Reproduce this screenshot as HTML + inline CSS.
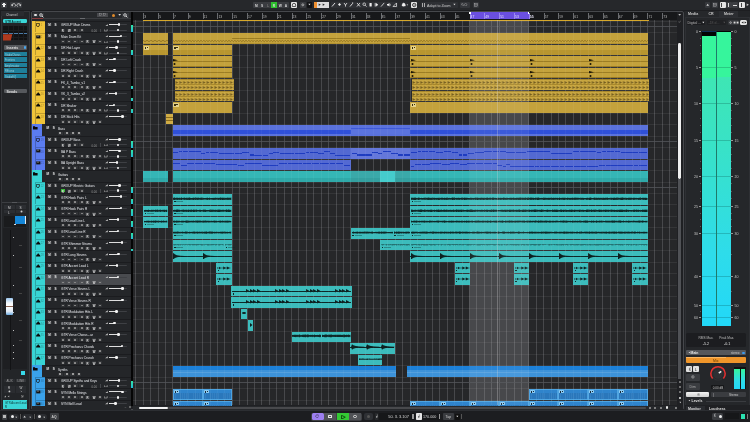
<!DOCTYPE html><html><head><meta charset="utf-8"><style>
*{margin:0;padding:0;box-sizing:border-box}
html,body{width:750px;height:422px;overflow:hidden}
body{background:#1d1e21;position:relative;font-family:"Liberation Sans",sans-serif}
.a{position:absolute}
.t{white-space:nowrap;line-height:1}
</style></head><body><div class="a" style="left:0;top:0;width:750px;height:422px;will-change:transform">
<div class="a" style="left:0.00px;top:0.00px;width:750.00px;height:10.00px;background:#26282b;"></div>
<div class="a" style="left:1.00px;top:2.00px;width:6.00px;height:5.80px;background:#3a3c40;border-radius:1px"></div>
<div class="a" style="left:2.60px;top:3.30px;width:2.80px;height:2.80px;background:#ececec;border-radius:50%"></div>
<div class="a" style="left:3.40px;top:2.80px;width:1.20px;height:3.80px;background:#ececec;"></div>
<div class="a" style="left:2.10px;top:4.10px;width:3.80px;height:1.20px;background:#ececec;"></div>
<div class="a" style="left:9.60px;top:2.00px;width:12.40px;height:5.80px;background:#36383c;border-radius:1px"></div>
<svg class="a" style="left:9.6px;top:2px" width="12.4" height="5.8"><path d="M2,3.6 A1.8,1.6 0 1 1 4.8,4.6" fill="none" stroke="#dcdcdc" stroke-width="0.8"/><path d="M1,2.6 L2.2,4.4 L3.2,2.8Z" fill="#dcdcdc"/><path d="M10.4,3.6 A1.8,1.6 0 1 0 7.6,4.6" fill="none" stroke="#dcdcdc" stroke-width="0.8"/><path d="M11.4,2.6 L10.2,4.4 L9.2,2.8Z" fill="#dcdcdc"/></svg>
<div class="a" style="left:0.50px;top:10.50px;width:29.00px;height:399.50px;background:#232528;border:0.6px solid #34363a"></div>
<div class="a" style="left:1.30px;top:11.20px;width:22.70px;height:5.00px;background:#2a2c30;"></div>
<div class="a t" style="left:6.20px;top:14px;font-size:3.8px;color:#c8c8c8;transform:scaleX(0.8);transform-origin:0 0">Channel</div>
<div class="a" style="left:3.20px;top:18.90px;width:23.80px;height:4.60px;background:#3ad6d6;border-radius:1.2px"></div>
<div class="a t" style="left:5.00px;top:21px;font-size:3.5px;color:#0b3030;font-weight:bold;transform:scaleX(0.8);transform-origin:0 0">GTR Accent</div>
<div class="a" style="left:3.20px;top:25.70px;width:23.80px;height:14.50px;background:#121314;"></div>
<div class="a" style="left:3.20px;top:33.10px;width:23.80px;height:0.90px;background:#4a7aa6;"></div>
<div class="a" style="left:8.00px;top:25.70px;width:0.50px;height:14.50px;background:#1c1d1f;"></div>
<div class="a" style="left:13.00px;top:25.70px;width:0.50px;height:14.50px;background:#1c1d1f;"></div>
<div class="a" style="left:18.00px;top:25.70px;width:0.50px;height:14.50px;background:#1c1d1f;"></div>
<div class="a" style="left:23.00px;top:25.70px;width:0.50px;height:14.50px;background:#1c1d1f;"></div>
<div class="a" style="left:3.20px;top:29.50px;width:23.80px;height:0.50px;background:#1c1d1f;"></div>
<div class="a" style="left:3.20px;top:36.80px;width:23.80px;height:0.50px;background:#1c1d1f;"></div>
<svg class="a" style="left:3.2px;top:25.7px" width="24" height="15"><polygon points="0,8.2 9.3,8.2 7.8,14.5 0,14.5" fill="#b03a1e"/></svg>
<div class="a" style="left:3.50px;top:45.00px;width:23.50px;height:4.70px;background:#56595d;border-radius:1px"></div>
<div class="a t" style="left:6.50px;top:47px;font-size:3.6px;color:#e0e0e0;font-weight:bold">Inserts</div>
<div class="a" style="left:23.50px;top:46.30px;width:2.40px;height:2.40px;background:#4aa8f0;border-radius:50%"></div>
<div class="a" style="left:3.50px;top:51.90px;width:23.50px;height:4.30px;background:#1f7f9a;"></div>
<div class="a t" style="left:4.50px;top:54px;font-size:3.0px;color:#9ccfdc;transform:scaleX(0.85);transform-origin:0 0">StudioChorus</div>
<div class="a" style="left:3.50px;top:57.40px;width:23.50px;height:4.30px;background:#1f7f9a;"></div>
<div class="a t" style="left:4.50px;top:59px;font-size:3.0px;color:#9ccfdc;transform:scaleX(0.85);transform-origin:0 0">Frontiers</div>
<div class="a" style="left:3.50px;top:62.90px;width:23.50px;height:4.30px;background:#1f7f9a;"></div>
<div class="a t" style="left:4.50px;top:65px;font-size:3.0px;color:#9ccfdc;transform:scaleX(0.85);transform-origin:0 0">Amplimuator</div>
<div class="a" style="left:3.50px;top:68.40px;width:23.50px;height:4.30px;background:#1f7f9a;"></div>
<div class="a t" style="left:4.50px;top:70px;font-size:3.0px;color:#9ccfdc;transform:scaleX(0.85);transform-origin:0 0">REtorvo</div>
<div class="a" style="left:3.50px;top:73.90px;width:23.50px;height:4.30px;background:#1f7f9a;"></div>
<div class="a t" style="left:4.50px;top:76px;font-size:3.0px;color:#9ccfdc;transform:scaleX(0.85);transform-origin:0 0">StudioEQ</div>
<div class="a" style="left:3.50px;top:89.30px;width:23.50px;height:4.00px;background:#56595d;border-radius:1px"></div>
<div class="a t" style="left:6.50px;top:91px;font-size:3.6px;color:#e0e0e0;font-weight:bold">Sends</div>
<div class="a" style="left:1.50px;top:202.30px;width:25.00px;height:0.50px;background:#3c3e42;"></div>
<div class="a" style="left:12.00px;top:202.00px;width:5.00px;height:1.00px;background:#55575b;"></div>
<div class="a" style="left:4.00px;top:205.00px;width:10.50px;height:3.60px;background:#2c2e32;"></div>
<div class="a t" style="left:8.00px;top:207px;font-size:3.2px;color:#cfcfcf;">M</div>
<div class="a" style="left:15.50px;top:205.00px;width:10.50px;height:3.60px;background:#2c2e32;"></div>
<div class="a t" style="left:19.50px;top:207px;font-size:3.2px;color:#cfcfcf;">S</div>
<div class="a" style="left:4.00px;top:209.80px;width:10.50px;height:3.60px;background:#2c2e32;"></div>
<div class="a t" style="left:8.00px;top:212px;font-size:3.2px;color:#cfcfcf;">L</div>
<div class="a" style="left:15.50px;top:209.80px;width:10.50px;height:3.60px;background:#2c2e32;"></div>
<svg class="a" style="left:19.50px;top:210.28px" width="3.04" height="3.04" viewBox="0 0 10 10"><circle cx="5" cy="5" r="3.2" fill="#cfcfcf"/></svg>
<div class="a" style="left:4.00px;top:216.00px;width:22.00px;height:11.00px;background:#1a1b1d;"></div>
<div class="a" style="left:14.90px;top:216.00px;width:10.90px;height:7.60px;background:#1486d8;"></div>
<div class="a" style="left:24.80px;top:216.00px;width:1.00px;height:7.60px;background:#e0e8f0;"></div>
<div class="a" style="left:14.00px;top:223.60px;width:1.60px;height:1.60px;background:#d8d8d8;"></div>
<div class="a" style="left:3.00px;top:228.00px;width:24.00px;height:141.00px;background:#1e1f22;"></div>
<div class="a" style="left:9.60px;top:230.00px;width:1.00px;height:140.00px;background:#121315;"></div>
<div class="a" style="left:5.90px;top:297.60px;width:7.40px;height:17.60px;background:linear-gradient(#9cc7ef,#f6f8fb 30%,#ffffff 50%,#dde8f5 80%,#6aaae0);border-radius:1px"></div>
<div class="a" style="left:5.90px;top:306.00px;width:7.40px;height:0.60px;background:#8a6050;"></div>
<div class="a" style="left:13.00px;top:237.00px;width:1.00px;height:0.60px;background:#c0c0c0;"></div>
<div class="a" style="left:13.00px;top:255.00px;width:1.00px;height:0.60px;background:#c0c0c0;"></div>
<div class="a" style="left:13.00px;top:285.00px;width:1.00px;height:0.60px;background:#c0c0c0;"></div>
<div class="a" style="left:13.00px;top:312.00px;width:1.00px;height:0.60px;background:#c0c0c0;"></div>
<div class="a" style="left:13.00px;top:330.00px;width:1.00px;height:0.60px;background:#c0c0c0;"></div>
<div class="a" style="left:13.00px;top:345.00px;width:1.00px;height:0.60px;background:#c0c0c0;"></div>
<div class="a" style="left:13.00px;top:352.00px;width:1.00px;height:0.60px;background:#c0c0c0;"></div>
<div class="a" style="left:13.00px;top:358.00px;width:1.00px;height:0.60px;background:#c0c0c0;"></div>
<div class="a" style="left:19.00px;top:245.00px;width:3.00px;height:0.50px;background:#444;"></div>
<div class="a" style="left:19.00px;top:267.00px;width:3.00px;height:0.50px;background:#444;"></div>
<div class="a" style="left:19.00px;top:293.00px;width:3.00px;height:0.50px;background:#444;"></div>
<div class="a" style="left:19.00px;top:320.00px;width:3.00px;height:0.50px;background:#444;"></div>
<div class="a" style="left:19.00px;top:340.00px;width:3.00px;height:0.50px;background:#444;"></div>
<div class="a" style="left:21.30px;top:371.00px;width:3.70px;height:3.70px;background:#38d8e8;"></div>
<div class="a" style="left:4.00px;top:378.80px;width:10.50px;height:3.50px;background:#2a2c30;"></div>
<div class="a t" style="left:6.50px;top:380px;font-size:3px;color:#9a9a9a;">AUX</div>
<div class="a" style="left:15.50px;top:378.80px;width:10.50px;height:3.50px;background:#34363a;"></div>
<div class="a t" style="left:17.50px;top:380px;font-size:3px;color:#9a9a9a;">LINK</div>
<div class="a" style="left:4.00px;top:385.50px;width:10.50px;height:3.40px;background:#2a2c30;"></div>
<div class="a t" style="left:8.00px;top:387px;font-size:3px;color:#cfcfcf;">R</div>
<div class="a" style="left:15.50px;top:385.50px;width:10.50px;height:3.40px;background:#2a2c30;"></div>
<div class="a t" style="left:19.50px;top:387px;font-size:3px;color:#cfcfcf;">W</div>
<div class="a" style="left:4.00px;top:389.30px;width:10.50px;height:3.40px;background:#2a2c30;"></div>
<svg class="a" style="left:8.00px;top:389.68px" width="2.85" height="2.85" viewBox="0 0 10 10"><circle cx="5" cy="5" r="3.2" fill="#cfcfcf"/></svg>
<div class="a" style="left:15.50px;top:389.30px;width:10.50px;height:3.40px;background:#2a2c30;"></div>
<svg class="a" style="left:19.50px;top:389.68px" width="2.85" height="2.85" viewBox="0 0 10 10"><path d="M2.5,2.5 L7.5,7.5 M7.5,2.5 L2.5,7.5" stroke="#cfcfcf" stroke-width="1.1"/></svg>
<svg class="a" style="left:3.50px;top:395.38px" width="2.85" height="2.85" viewBox="0 0 10 10"><path d="M1,8 L9,8 L5,2Z" fill="#aaaaaa"/></svg>
<svg class="a" style="left:7.25px;top:395.38px" width="2.85" height="2.85" viewBox="0 0 10 10"><path d="M8,2 L2,5 L8,8Z" fill="#aaaaaa"/></svg>
<svg class="a" style="left:21.00px;top:395.38px" width="2.85" height="2.85" viewBox="0 0 10 10"><rect x="1.5" y="1.5" width="7" height="7" fill="none" stroke="#aaaaaa" stroke-width="1"/><rect x="3.5" y="3.5" width="3" height="3" fill="#aaaaaa"/></svg>
<div class="a" style="left:3.00px;top:400.00px;width:24.00px;height:8.50px;background:#3ad6d6;"></div>
<div class="a t" style="left:4.80px;top:402px;font-size:3.2px;color:#0b3030;transform:scaleX(0.85);transform-origin:0 0">GTR Accent Lead</div>
<div class="a t" style="left:4.80px;top:406px;font-size:3.2px;color:#0b3030;">R</div>
<div class="a" style="left:30.50px;top:11.30px;width:653.00px;height:398.40px;background:#1f2023;border:0.8px solid #46484c;border-radius:2px"></div>
<div class="a" style="left:31.50px;top:12.00px;width:99.50px;height:7.60px;background:#26282b;"></div>
<div class="a" style="left:33.00px;top:12.50px;width:5.00px;height:4.80px;background:#34363a;"></div>
<div class="a" style="left:34.20px;top:13.60px;width:2.60px;height:2.60px;background:#e6e6e6;border-radius:50%"></div>
<div class="a" style="left:38.50px;top:12.50px;width:5.00px;height:4.80px;background:#34363a;"></div>
<svg class="a" style="left:38.8px;top:12.6px" width="5" height="5"><circle cx="2" cy="2" r="1.3" fill="none" stroke="#e6e6e6" stroke-width="0.8"/><path d="M3,3 L4.4,4.4" stroke="#e6e6e6" stroke-width="0.9"/></svg>
<div class="a" style="left:97.00px;top:13.00px;width:11.00px;height:4.00px;background:#48494d;"></div>
<svg class="a" style="left:99.00px;top:13.48px" width="2.85" height="2.85" viewBox="0 0 10 10"><rect x="1.5" y="1.5" width="7" height="7" fill="none" stroke="#bbbbbb" stroke-width="1"/></svg>
<svg class="a" style="left:102.75px;top:13.48px" width="2.85" height="2.85" viewBox="0 0 10 10"><rect x="1.5" y="1.5" width="7" height="7" fill="none" stroke="#bbbbbb" stroke-width="1"/></svg>
<div class="a" style="left:111.50px;top:13.50px;width:3.00px;height:3.00px;background:#e08a2a;border-radius:50%"></div>
<svg class="a" style="left:117.50px;top:12.99px" width="3.32" height="3.32" viewBox="0 0 10 10"><path d="M1,3 L9,3 L5,8Z" fill="#dddddd"/></svg>
<div class="a" style="left:122.00px;top:12.50px;width:7.00px;height:5.00px;background:#34363a;"></div>
<svg class="a" style="left:123.3px;top:12.6px" width="5" height="5"><circle cx="2" cy="2" r="1.3" fill="none" stroke="#e6e6e6" stroke-width="0.8"/><path d="M3,3 L4.4,4.4" stroke="#e6e6e6" stroke-width="0.9"/></svg>
<div class="a" style="left:32.00px;top:18.40px;width:10.50px;height:0.90px;background:#8a3a3a;"></div>
<div class="a" style="left:42.50px;top:18.40px;width:88.50px;height:0.90px;background:#3a3c40;"></div>
<div class="a" style="left:80.00px;top:18.20px;width:5.00px;height:0.60px;background:#6a6c70;"></div>
<div class="a" style="left:31.50px;top:19.60px;width:99.50px;height:386.00px;background:#242629;"></div>
<div class="a" style="left:131.00px;top:12.00px;width:2.00px;height:393.50px;background:#050505;"></div>
<div class="a" style="left:45.00px;top:20.90px;width:86.00px;height:0.70px;background:#1b1c1f;"></div>
<div class="a" style="left:31.80px;top:20.90px;width:13.20px;height:11.67px;background:#f0c43a;"></div>
<div class="a" style="left:34.50px;top:21.20px;width:10.50px;height:11.17px;background:#f0c43a;border-left:0.6px solid rgba(0,0,0,0.22);border-top:0.7px solid rgba(0,0,0,0.2)"></div>
<svg class="a" style="left:35.80px;top:23.10px" width="4" height="4"><path d="M0.4,0.4 h3 v1.6 q0,1.4 -1.5,1.8 q-1.5,-0.4 -1.5,-1.8z" fill="none" stroke="#121212" stroke-width="0.7"/></svg>
<div class="a t" style="left:40.80px;top:24px;font-size:2.8px;color:rgba(0,0,0,0.32);">1</div>
<div class="a" style="left:47.30px;top:22.70px;width:4.40px;height:3.40px;background:#2f3134;"></div>
<div class="a t" style="left:48.20px;top:24px;font-size:3px;color:#e8e8e8;font-weight:bold">M</div>
<div class="a" style="left:53.60px;top:22.70px;width:3.40px;height:3.40px;background:#2f3134;"></div>
<div class="a t" style="left:54.40px;top:24px;font-size:3px;color:#e8e8e8;font-weight:bold">S</div>
<div class="a t" style="left:61.00px;top:23px;font-size:4.4px;color:#eceef2;transform:scaleX(0.72);transform-origin:0 0">GROUP Main Drums</div>
<div class="a" style="left:60.60px;top:28.50px;width:4.60px;height:3.00px;background:#313336;"></div>
<div class="a t" style="left:61.70px;top:30px;font-size:2.8px;color:#e0e0e0;font-weight:bold">R</div>
<div class="a" style="left:66.80px;top:28.50px;width:4.60px;height:3.00px;background:#313336;"></div>
<div class="a t" style="left:67.90px;top:30px;font-size:2.8px;color:#e0e0e0;font-weight:bold">W</div>
<div class="a" style="left:73.00px;top:28.50px;width:4.60px;height:3.00px;background:#313336;"></div>
<div class="a" style="left:74.30px;top:29.10px;width:2.00px;height:1.80px;background:#8e8e8e;border-radius:0.5px"></div>
<div class="a" style="left:79.20px;top:28.50px;width:4.60px;height:3.00px;background:#313336;"></div>
<div class="a" style="left:80.50px;top:29.10px;width:2.00px;height:1.80px;background:#8e8e8e;border-radius:0.5px"></div>
<div class="a t" style="left:91.50px;top:30px;font-size:2.8px;color:#9a9a9a;">0.00</div>
<div class="a" style="left:99.50px;top:28.70px;width:1.40px;height:3.60px;background:#44464a;"></div>
<svg class="a" style="left:104.6px;top:23.50px" width="3" height="2.5"><path d="M0,2.3 L2.8,0.2 L2.8,2.3Z" fill="#bdbdbd"/></svg>
<div class="a" style="left:109.20px;top:24.20px;width:17.70px;height:0.80px;background:#3e4044;border-radius:0.4px"></div>
<div class="a" style="left:109.20px;top:24.20px;width:9.80px;height:0.80px;background:#dedede;"></div>
<div class="a" style="left:117.70px;top:23.30px;width:2.60px;height:2.60px;background:#f4f4f4;border-radius:50%"></div>
<svg class="a" style="left:104.4px;top:29.10px" width="3.4" height="2.5"><path d="M0.2,0.2 V2 H3.2 V0.2" fill="none" stroke="#bdbdbd" stroke-width="0.6"/></svg>
<div class="a" style="left:109.20px;top:29.70px;width:17.70px;height:0.80px;background:#3e4044;border-radius:0.4px"></div>
<div class="a" style="left:116.50px;top:28.80px;width:2.60px;height:2.60px;background:#f4f4f4;border-radius:50%"></div>
<div class="a" style="left:45.00px;top:32.38px;width:86.00px;height:0.70px;background:#1b1c1f;"></div>
<div class="a" style="left:31.80px;top:32.38px;width:13.20px;height:11.67px;background:#f0c43a;"></div>
<div class="a" style="left:34.50px;top:32.67px;width:10.50px;height:11.17px;background:#f0c43a;border-left:0.6px solid rgba(0,0,0,0.22);border-top:0.7px solid rgba(0,0,0,0.2)"></div>
<svg class="a" style="left:35.80px;top:34.58px" width="5" height="4"><rect x="0.2" y="0.4" width="4.2" height="3" fill="#141414"/><rect x="1" y="0.4" width="0.5" height="1.6" fill="#888"/><rect x="2.4" y="0.4" width="0.5" height="1.6" fill="#888"/></svg>
<div class="a t" style="left:40.80px;top:36px;font-size:2.8px;color:rgba(0,0,0,0.32);">2</div>
<div class="a" style="left:47.30px;top:34.17px;width:4.40px;height:3.40px;background:#2f3134;"></div>
<div class="a t" style="left:48.20px;top:35px;font-size:3px;color:#e8e8e8;font-weight:bold">M</div>
<div class="a" style="left:53.60px;top:34.17px;width:3.40px;height:3.40px;background:#2f3134;"></div>
<div class="a t" style="left:54.40px;top:35px;font-size:3px;color:#e8e8e8;font-weight:bold">S</div>
<div class="a t" style="left:61.00px;top:35px;font-size:4.4px;color:#eceef2;transform:scaleX(0.72);transform-origin:0 0">Main Drum Kit</div>
<div class="a" style="left:60.60px;top:39.98px;width:4.60px;height:3.00px;background:#313336;"></div>
<div class="a" style="left:61.90px;top:40.58px;width:2.00px;height:1.80px;background:#8e8e8e;border-radius:0.5px"></div>
<div class="a" style="left:66.80px;top:39.98px;width:4.60px;height:3.00px;background:#313336;"></div>
<div class="a" style="left:68.10px;top:40.58px;width:2.00px;height:1.80px;background:#8e8e8e;border-radius:0.5px"></div>
<div class="a" style="left:73.00px;top:39.98px;width:4.60px;height:3.00px;background:#313336;"></div>
<div class="a" style="left:74.30px;top:40.58px;width:2.00px;height:1.80px;background:#8e8e8e;border-radius:0.5px"></div>
<div class="a" style="left:79.20px;top:39.98px;width:4.60px;height:3.00px;background:#313336;"></div>
<div class="a" style="left:80.50px;top:40.58px;width:2.00px;height:1.80px;background:#8e8e8e;border-radius:0.5px"></div>
<div class="a" style="left:85.40px;top:39.98px;width:4.60px;height:3.00px;background:#313336;"></div>
<div class="a t" style="left:86.50px;top:41px;font-size:2.8px;color:#e0e0e0;font-weight:bold">R</div>
<div class="a" style="left:91.60px;top:39.98px;width:4.60px;height:3.00px;background:#313336;"></div>
<div class="a t" style="left:92.70px;top:41px;font-size:2.8px;color:#e0e0e0;font-weight:bold">W</div>
<div class="a" style="left:97.80px;top:39.98px;width:4.60px;height:3.00px;background:#313336;"></div>
<div class="a" style="left:99.10px;top:40.58px;width:2.00px;height:1.80px;background:#8e8e8e;border-radius:0.5px"></div>
<svg class="a" style="left:104.6px;top:34.98px" width="3" height="2.5"><path d="M0,2.3 L2.8,0.2 L2.8,2.3Z" fill="#bdbdbd"/></svg>
<div class="a" style="left:109.20px;top:35.67px;width:17.70px;height:0.80px;background:#3e4044;border-radius:0.4px"></div>
<div class="a" style="left:109.20px;top:35.67px;width:11.70px;height:0.80px;background:#dedede;"></div>
<div class="a" style="left:119.60px;top:34.77px;width:2.60px;height:2.60px;background:#f4f4f4;border-radius:50%"></div>
<svg class="a" style="left:104.4px;top:40.58px" width="3.4" height="2.5"><path d="M0.2,0.2 V2 H3.2 V0.2" fill="none" stroke="#bdbdbd" stroke-width="0.6"/></svg>
<div class="a" style="left:109.20px;top:41.17px;width:17.70px;height:0.80px;background:#3e4044;border-radius:0.4px"></div>
<div class="a" style="left:116.50px;top:40.27px;width:2.60px;height:2.60px;background:#f4f4f4;border-radius:50%"></div>
<div class="a" style="left:45.00px;top:43.85px;width:86.00px;height:0.70px;background:#1b1c1f;"></div>
<div class="a" style="left:31.80px;top:43.85px;width:13.20px;height:11.67px;background:#f0c43a;"></div>
<div class="a" style="left:34.50px;top:44.15px;width:10.50px;height:11.17px;background:#f0c43a;border-left:0.6px solid rgba(0,0,0,0.22);border-top:0.7px solid rgba(0,0,0,0.2)"></div>
<svg class="a" style="left:35.80px;top:46.05px" width="5" height="4"><path d="M0,3.4 C0.2,2 1,1.5 1.5,1.3 C1.7,0.5 2,0.2 2.2,0.2 C2.4,0.2 2.7,0.5 2.9,1.3 C3.4,1.5 4.2,2 4.4,3.4Z" fill="#0a0a0a"/></svg>
<div class="a t" style="left:40.80px;top:47px;font-size:2.8px;color:rgba(0,0,0,0.32);">12</div>
<div class="a" style="left:47.30px;top:45.65px;width:4.40px;height:3.40px;background:#2f3134;"></div>
<div class="a t" style="left:48.20px;top:47px;font-size:3px;color:#e8e8e8;font-weight:bold">M</div>
<div class="a" style="left:53.60px;top:45.65px;width:3.40px;height:3.40px;background:#2f3134;"></div>
<div class="a t" style="left:54.40px;top:47px;font-size:3px;color:#e8e8e8;font-weight:bold">S</div>
<div class="a t" style="left:61.00px;top:46px;font-size:4.4px;color:#eceef2;transform:scaleX(0.72);transform-origin:0 0">DR Hat Layer</div>
<div class="a" style="left:60.60px;top:51.45px;width:4.60px;height:3.00px;background:#313336;"></div>
<div class="a" style="left:61.90px;top:52.05px;width:2.00px;height:1.80px;background:#8e8e8e;border-radius:0.5px"></div>
<div class="a" style="left:66.80px;top:51.45px;width:4.60px;height:3.00px;background:#313336;"></div>
<div class="a" style="left:68.10px;top:52.05px;width:2.00px;height:1.80px;background:#8e8e8e;border-radius:0.5px"></div>
<div class="a" style="left:73.00px;top:51.45px;width:4.60px;height:3.00px;background:#313336;"></div>
<div class="a" style="left:74.30px;top:52.05px;width:2.00px;height:1.80px;background:#8e8e8e;border-radius:0.5px"></div>
<div class="a" style="left:79.20px;top:51.45px;width:4.60px;height:3.00px;background:#313336;"></div>
<div class="a" style="left:80.50px;top:52.05px;width:2.00px;height:1.80px;background:#8e8e8e;border-radius:0.5px"></div>
<div class="a" style="left:85.40px;top:51.45px;width:4.60px;height:3.00px;background:#313336;"></div>
<div class="a t" style="left:86.50px;top:53px;font-size:2.8px;color:#e0e0e0;font-weight:bold">R</div>
<div class="a" style="left:91.60px;top:51.45px;width:4.60px;height:3.00px;background:#313336;"></div>
<div class="a t" style="left:92.70px;top:53px;font-size:2.8px;color:#e0e0e0;font-weight:bold">W</div>
<div class="a" style="left:97.80px;top:51.45px;width:4.60px;height:3.00px;background:#313336;"></div>
<div class="a" style="left:99.10px;top:52.05px;width:2.00px;height:1.80px;background:#8e8e8e;border-radius:0.5px"></div>
<svg class="a" style="left:104.6px;top:46.45px" width="3" height="2.5"><path d="M0,2.3 L2.8,0.2 L2.8,2.3Z" fill="#bdbdbd"/></svg>
<div class="a" style="left:109.20px;top:47.15px;width:17.70px;height:0.80px;background:#3e4044;border-radius:0.4px"></div>
<div class="a" style="left:109.20px;top:47.15px;width:7.40px;height:0.80px;background:#dedede;"></div>
<div class="a" style="left:115.30px;top:46.25px;width:2.60px;height:2.60px;background:#f4f4f4;border-radius:50%"></div>
<svg class="a" style="left:104.4px;top:52.05px" width="3.4" height="2.5"><path d="M0.2,0.2 V2 H3.2 V0.2" fill="none" stroke="#bdbdbd" stroke-width="0.6"/></svg>
<div class="a" style="left:109.20px;top:52.65px;width:17.70px;height:0.80px;background:#3e4044;border-radius:0.4px"></div>
<div class="a" style="left:116.50px;top:51.75px;width:2.60px;height:2.60px;background:#f4f4f4;border-radius:50%"></div>
<div class="a" style="left:45.00px;top:55.32px;width:86.00px;height:0.70px;background:#1b1c1f;"></div>
<div class="a" style="left:31.80px;top:55.32px;width:13.20px;height:11.67px;background:#f0c43a;"></div>
<div class="a" style="left:34.50px;top:55.62px;width:10.50px;height:11.17px;background:#f0c43a;border-left:0.6px solid rgba(0,0,0,0.22);border-top:0.7px solid rgba(0,0,0,0.2)"></div>
<svg class="a" style="left:35.80px;top:57.52px" width="5" height="4"><path d="M0,3.4 C0.2,2 1,1.5 1.5,1.3 C1.7,0.5 2,0.2 2.2,0.2 C2.4,0.2 2.7,0.5 2.9,1.3 C3.4,1.5 4.2,2 4.4,3.4Z" fill="#0a0a0a"/></svg>
<div class="a t" style="left:40.80px;top:59px;font-size:2.8px;color:rgba(0,0,0,0.32);">13</div>
<div class="a" style="left:47.30px;top:57.12px;width:4.40px;height:3.40px;background:#2f3134;"></div>
<div class="a t" style="left:48.20px;top:58px;font-size:3px;color:#e8e8e8;font-weight:bold">M</div>
<div class="a" style="left:53.60px;top:57.12px;width:3.40px;height:3.40px;background:#2f3134;"></div>
<div class="a t" style="left:54.40px;top:58px;font-size:3px;color:#e8e8e8;font-weight:bold">S</div>
<div class="a t" style="left:61.00px;top:58px;font-size:4.4px;color:#eceef2;transform:scaleX(0.72);transform-origin:0 0">DR Left Crash</div>
<div class="a" style="left:60.60px;top:62.92px;width:4.60px;height:3.00px;background:#313336;"></div>
<div class="a" style="left:61.90px;top:63.52px;width:2.00px;height:1.80px;background:#8e8e8e;border-radius:0.5px"></div>
<div class="a" style="left:66.80px;top:62.92px;width:4.60px;height:3.00px;background:#313336;"></div>
<div class="a" style="left:68.10px;top:63.52px;width:2.00px;height:1.80px;background:#8e8e8e;border-radius:0.5px"></div>
<div class="a" style="left:73.00px;top:62.92px;width:4.60px;height:3.00px;background:#313336;"></div>
<div class="a" style="left:74.30px;top:63.52px;width:2.00px;height:1.80px;background:#8e8e8e;border-radius:0.5px"></div>
<div class="a" style="left:79.20px;top:62.92px;width:4.60px;height:3.00px;background:#313336;"></div>
<div class="a" style="left:80.50px;top:63.52px;width:2.00px;height:1.80px;background:#8e8e8e;border-radius:0.5px"></div>
<div class="a" style="left:85.40px;top:62.92px;width:4.60px;height:3.00px;background:#313336;"></div>
<div class="a t" style="left:86.50px;top:64px;font-size:2.8px;color:#e0e0e0;font-weight:bold">R</div>
<div class="a" style="left:91.60px;top:62.92px;width:4.60px;height:3.00px;background:#313336;"></div>
<div class="a t" style="left:92.70px;top:64px;font-size:2.8px;color:#e0e0e0;font-weight:bold">W</div>
<div class="a" style="left:97.80px;top:62.92px;width:4.60px;height:3.00px;background:#313336;"></div>
<div class="a" style="left:99.10px;top:63.52px;width:2.00px;height:1.80px;background:#8e8e8e;border-radius:0.5px"></div>
<svg class="a" style="left:104.6px;top:57.92px" width="3" height="2.5"><path d="M0,2.3 L2.8,0.2 L2.8,2.3Z" fill="#bdbdbd"/></svg>
<div class="a" style="left:109.20px;top:58.62px;width:17.70px;height:0.80px;background:#3e4044;border-radius:0.4px"></div>
<div class="a" style="left:109.20px;top:58.62px;width:5.50px;height:0.80px;background:#dedede;"></div>
<div class="a" style="left:113.40px;top:57.72px;width:2.60px;height:2.60px;background:#f4f4f4;border-radius:50%"></div>
<div class="a" style="left:45.00px;top:66.80px;width:86.00px;height:0.70px;background:#1b1c1f;"></div>
<div class="a" style="left:31.80px;top:66.80px;width:13.20px;height:11.67px;background:#f0c43a;"></div>
<div class="a" style="left:34.50px;top:67.10px;width:10.50px;height:11.17px;background:#f0c43a;border-left:0.6px solid rgba(0,0,0,0.22);border-top:0.7px solid rgba(0,0,0,0.2)"></div>
<svg class="a" style="left:35.80px;top:69.00px" width="5" height="4"><path d="M0,3.4 C0.2,2 1,1.5 1.5,1.3 C1.7,0.5 2,0.2 2.2,0.2 C2.4,0.2 2.7,0.5 2.9,1.3 C3.4,1.5 4.2,2 4.4,3.4Z" fill="#0a0a0a"/></svg>
<div class="a t" style="left:40.80px;top:70px;font-size:2.8px;color:rgba(0,0,0,0.32);">14</div>
<div class="a" style="left:47.30px;top:68.60px;width:4.40px;height:3.40px;background:#2f3134;"></div>
<div class="a t" style="left:48.20px;top:70px;font-size:3px;color:#e8e8e8;font-weight:bold">M</div>
<div class="a" style="left:53.60px;top:68.60px;width:3.40px;height:3.40px;background:#2f3134;"></div>
<div class="a t" style="left:54.40px;top:70px;font-size:3px;color:#e8e8e8;font-weight:bold">S</div>
<div class="a t" style="left:61.00px;top:69px;font-size:4.4px;color:#eceef2;transform:scaleX(0.72);transform-origin:0 0">DR Right Crash</div>
<div class="a" style="left:60.60px;top:74.40px;width:4.60px;height:3.00px;background:#313336;"></div>
<div class="a" style="left:61.90px;top:75.00px;width:2.00px;height:1.80px;background:#8e8e8e;border-radius:0.5px"></div>
<div class="a" style="left:66.80px;top:74.40px;width:4.60px;height:3.00px;background:#313336;"></div>
<div class="a" style="left:68.10px;top:75.00px;width:2.00px;height:1.80px;background:#8e8e8e;border-radius:0.5px"></div>
<div class="a" style="left:73.00px;top:74.40px;width:4.60px;height:3.00px;background:#313336;"></div>
<div class="a" style="left:74.30px;top:75.00px;width:2.00px;height:1.80px;background:#8e8e8e;border-radius:0.5px"></div>
<div class="a" style="left:79.20px;top:74.40px;width:4.60px;height:3.00px;background:#313336;"></div>
<div class="a" style="left:80.50px;top:75.00px;width:2.00px;height:1.80px;background:#8e8e8e;border-radius:0.5px"></div>
<div class="a" style="left:85.40px;top:74.40px;width:4.60px;height:3.00px;background:#313336;"></div>
<div class="a t" style="left:86.50px;top:76px;font-size:2.8px;color:#e0e0e0;font-weight:bold">R</div>
<div class="a" style="left:91.60px;top:74.40px;width:4.60px;height:3.00px;background:#313336;"></div>
<div class="a t" style="left:92.70px;top:76px;font-size:2.8px;color:#e0e0e0;font-weight:bold">W</div>
<div class="a" style="left:97.80px;top:74.40px;width:4.60px;height:3.00px;background:#313336;"></div>
<div class="a" style="left:99.10px;top:75.00px;width:2.00px;height:1.80px;background:#8e8e8e;border-radius:0.5px"></div>
<svg class="a" style="left:104.6px;top:69.40px" width="3" height="2.5"><path d="M0,2.3 L2.8,0.2 L2.8,2.3Z" fill="#bdbdbd"/></svg>
<div class="a" style="left:109.20px;top:70.10px;width:17.70px;height:0.80px;background:#3e4044;border-radius:0.4px"></div>
<div class="a" style="left:109.20px;top:70.10px;width:5.50px;height:0.80px;background:#dedede;"></div>
<div class="a" style="left:113.40px;top:69.20px;width:2.60px;height:2.60px;background:#f4f4f4;border-radius:50%"></div>
<div class="a" style="left:45.00px;top:78.28px;width:86.00px;height:0.70px;background:#1b1c1f;"></div>
<div class="a" style="left:31.80px;top:78.28px;width:13.20px;height:11.67px;background:#f0c43a;"></div>
<div class="a" style="left:34.50px;top:78.58px;width:10.50px;height:11.17px;background:#f0c43a;border-left:0.6px solid rgba(0,0,0,0.22);border-top:0.7px solid rgba(0,0,0,0.2)"></div>
<svg class="a" style="left:35.80px;top:80.48px" width="5" height="4"><path d="M0,3.4 C0.2,2 1,1.5 1.5,1.3 C1.7,0.5 2,0.2 2.2,0.2 C2.4,0.2 2.7,0.5 2.9,1.3 C3.4,1.5 4.2,2 4.4,3.4Z" fill="#0a0a0a"/></svg>
<div class="a t" style="left:40.80px;top:82px;font-size:2.8px;color:rgba(0,0,0,0.32);">15</div>
<div class="a" style="left:47.30px;top:80.08px;width:4.40px;height:3.40px;background:#2f3134;"></div>
<div class="a t" style="left:48.20px;top:81px;font-size:3px;color:#e8e8e8;font-weight:bold">M</div>
<div class="a" style="left:53.60px;top:80.08px;width:3.40px;height:3.40px;background:#2f3134;"></div>
<div class="a t" style="left:54.40px;top:81px;font-size:3px;color:#e8e8e8;font-weight:bold">S</div>
<div class="a t" style="left:61.00px;top:81px;font-size:4.4px;color:#eceef2;transform:scaleX(0.72);transform-origin:0 0">FK_4_Tambo_v1</div>
<div class="a" style="left:60.60px;top:85.88px;width:4.60px;height:3.00px;background:#313336;"></div>
<div class="a" style="left:61.90px;top:86.48px;width:2.00px;height:1.80px;background:#8e8e8e;border-radius:0.5px"></div>
<div class="a" style="left:66.80px;top:85.88px;width:4.60px;height:3.00px;background:#313336;"></div>
<div class="a" style="left:68.10px;top:86.48px;width:2.00px;height:1.80px;background:#8e8e8e;border-radius:0.5px"></div>
<div class="a" style="left:73.00px;top:85.88px;width:4.60px;height:3.00px;background:#313336;"></div>
<div class="a" style="left:74.30px;top:86.48px;width:2.00px;height:1.80px;background:#8e8e8e;border-radius:0.5px"></div>
<div class="a" style="left:79.20px;top:85.88px;width:4.60px;height:3.00px;background:#313336;"></div>
<div class="a" style="left:80.50px;top:86.48px;width:2.00px;height:1.80px;background:#8e8e8e;border-radius:0.5px"></div>
<div class="a" style="left:85.40px;top:85.88px;width:4.60px;height:3.00px;background:#313336;"></div>
<div class="a t" style="left:86.50px;top:87px;font-size:2.8px;color:#e0e0e0;font-weight:bold">R</div>
<div class="a" style="left:91.60px;top:85.88px;width:4.60px;height:3.00px;background:#313336;"></div>
<div class="a t" style="left:92.70px;top:87px;font-size:2.8px;color:#e0e0e0;font-weight:bold">W</div>
<div class="a" style="left:97.80px;top:85.88px;width:4.60px;height:3.00px;background:#313336;"></div>
<div class="a" style="left:99.10px;top:86.48px;width:2.00px;height:1.80px;background:#8e8e8e;border-radius:0.5px"></div>
<svg class="a" style="left:104.6px;top:80.88px" width="3" height="2.5"><path d="M0,2.3 L2.8,0.2 L2.8,2.3Z" fill="#bdbdbd"/></svg>
<div class="a" style="left:109.20px;top:81.58px;width:17.70px;height:0.80px;background:#3e4044;border-radius:0.4px"></div>
<div class="a" style="left:109.20px;top:81.58px;width:5.50px;height:0.80px;background:#dedede;"></div>
<div class="a" style="left:113.40px;top:80.68px;width:2.60px;height:2.60px;background:#f4f4f4;border-radius:50%"></div>
<div class="a" style="left:45.00px;top:89.75px;width:86.00px;height:0.70px;background:#1b1c1f;"></div>
<div class="a" style="left:31.80px;top:89.75px;width:13.20px;height:11.67px;background:#f0c43a;"></div>
<div class="a" style="left:34.50px;top:90.05px;width:10.50px;height:11.17px;background:#f0c43a;border-left:0.6px solid rgba(0,0,0,0.22);border-top:0.7px solid rgba(0,0,0,0.2)"></div>
<svg class="a" style="left:35.80px;top:91.95px" width="5" height="4"><path d="M0,3.4 C0.2,2 1,1.5 1.5,1.3 C1.7,0.5 2,0.2 2.2,0.2 C2.4,0.2 2.7,0.5 2.9,1.3 C3.4,1.5 4.2,2 4.4,3.4Z" fill="#0a0a0a"/></svg>
<div class="a t" style="left:40.80px;top:93px;font-size:2.8px;color:rgba(0,0,0,0.32);">16</div>
<div class="a" style="left:47.30px;top:91.55px;width:4.40px;height:3.40px;background:#2f3134;"></div>
<div class="a t" style="left:48.20px;top:93px;font-size:3px;color:#e8e8e8;font-weight:bold">M</div>
<div class="a" style="left:53.60px;top:91.55px;width:3.40px;height:3.40px;background:#2f3134;"></div>
<div class="a t" style="left:54.40px;top:93px;font-size:3px;color:#e8e8e8;font-weight:bold">S</div>
<div class="a t" style="left:61.00px;top:92px;font-size:4.4px;color:#eceef2;transform:scaleX(0.72);transform-origin:0 0">VK_3_Tambo_v2</div>
<div class="a" style="left:60.60px;top:97.35px;width:4.60px;height:3.00px;background:#313336;"></div>
<div class="a" style="left:61.90px;top:97.95px;width:2.00px;height:1.80px;background:#8e8e8e;border-radius:0.5px"></div>
<div class="a" style="left:66.80px;top:97.35px;width:4.60px;height:3.00px;background:#313336;"></div>
<div class="a" style="left:68.10px;top:97.95px;width:2.00px;height:1.80px;background:#8e8e8e;border-radius:0.5px"></div>
<div class="a" style="left:73.00px;top:97.35px;width:4.60px;height:3.00px;background:#313336;"></div>
<div class="a" style="left:74.30px;top:97.95px;width:2.00px;height:1.80px;background:#8e8e8e;border-radius:0.5px"></div>
<div class="a" style="left:79.20px;top:97.35px;width:4.60px;height:3.00px;background:#313336;"></div>
<div class="a" style="left:80.50px;top:97.95px;width:2.00px;height:1.80px;background:#8e8e8e;border-radius:0.5px"></div>
<div class="a" style="left:85.40px;top:97.35px;width:4.60px;height:3.00px;background:#313336;"></div>
<div class="a t" style="left:86.50px;top:99px;font-size:2.8px;color:#e0e0e0;font-weight:bold">R</div>
<div class="a" style="left:91.60px;top:97.35px;width:4.60px;height:3.00px;background:#313336;"></div>
<div class="a t" style="left:92.70px;top:99px;font-size:2.8px;color:#e0e0e0;font-weight:bold">W</div>
<div class="a" style="left:97.80px;top:97.35px;width:4.60px;height:3.00px;background:#313336;"></div>
<div class="a" style="left:99.10px;top:97.95px;width:2.00px;height:1.80px;background:#8e8e8e;border-radius:0.5px"></div>
<svg class="a" style="left:104.6px;top:92.35px" width="3" height="2.5"><path d="M0,2.3 L2.8,0.2 L2.8,2.3Z" fill="#bdbdbd"/></svg>
<div class="a" style="left:109.20px;top:93.05px;width:17.70px;height:0.80px;background:#3e4044;border-radius:0.4px"></div>
<div class="a" style="left:109.20px;top:93.05px;width:6.90px;height:0.80px;background:#dedede;"></div>
<div class="a" style="left:114.80px;top:92.15px;width:2.60px;height:2.60px;background:#f4f4f4;border-radius:50%"></div>
<div class="a" style="left:45.00px;top:101.22px;width:86.00px;height:0.70px;background:#1b1c1f;"></div>
<div class="a" style="left:31.80px;top:101.22px;width:13.20px;height:11.67px;background:#f0c43a;"></div>
<div class="a" style="left:34.50px;top:101.52px;width:10.50px;height:11.17px;background:#f0c43a;border-left:0.6px solid rgba(0,0,0,0.22);border-top:0.7px solid rgba(0,0,0,0.2)"></div>
<svg class="a" style="left:35.80px;top:103.42px" width="5" height="4"><path d="M0,3.4 C0.2,2 1,1.5 1.5,1.3 C1.7,0.5 2,0.2 2.2,0.2 C2.4,0.2 2.7,0.5 2.9,1.3 C3.4,1.5 4.2,2 4.4,3.4Z" fill="#0a0a0a"/></svg>
<div class="a t" style="left:40.80px;top:105px;font-size:2.8px;color:rgba(0,0,0,0.32);">17</div>
<div class="a" style="left:47.30px;top:103.02px;width:4.40px;height:3.40px;background:#2f3134;"></div>
<div class="a t" style="left:48.20px;top:104px;font-size:3px;color:#e8e8e8;font-weight:bold">M</div>
<div class="a" style="left:53.60px;top:103.02px;width:3.40px;height:3.40px;background:#2f3134;"></div>
<div class="a t" style="left:54.40px;top:104px;font-size:3px;color:#e8e8e8;font-weight:bold">S</div>
<div class="a t" style="left:61.00px;top:104px;font-size:4.4px;color:#eceef2;transform:scaleX(0.72);transform-origin:0 0">DR Shaker</div>
<div class="a" style="left:60.60px;top:108.82px;width:4.60px;height:3.00px;background:#313336;"></div>
<div class="a" style="left:61.90px;top:109.42px;width:2.00px;height:1.80px;background:#8e8e8e;border-radius:0.5px"></div>
<div class="a" style="left:66.80px;top:108.82px;width:4.60px;height:3.00px;background:#313336;"></div>
<div class="a" style="left:68.10px;top:109.42px;width:2.00px;height:1.80px;background:#8e8e8e;border-radius:0.5px"></div>
<div class="a" style="left:73.00px;top:108.82px;width:4.60px;height:3.00px;background:#313336;"></div>
<div class="a" style="left:74.30px;top:109.42px;width:2.00px;height:1.80px;background:#8e8e8e;border-radius:0.5px"></div>
<div class="a" style="left:79.20px;top:108.82px;width:4.60px;height:3.00px;background:#313336;"></div>
<div class="a" style="left:80.50px;top:109.42px;width:2.00px;height:1.80px;background:#8e8e8e;border-radius:0.5px"></div>
<div class="a" style="left:85.40px;top:108.82px;width:4.60px;height:3.00px;background:#313336;"></div>
<div class="a t" style="left:86.50px;top:110px;font-size:2.8px;color:#e0e0e0;font-weight:bold">R</div>
<div class="a" style="left:91.60px;top:108.82px;width:4.60px;height:3.00px;background:#313336;"></div>
<div class="a t" style="left:92.70px;top:110px;font-size:2.8px;color:#e0e0e0;font-weight:bold">W</div>
<div class="a" style="left:97.80px;top:108.82px;width:4.60px;height:3.00px;background:#313336;"></div>
<div class="a" style="left:99.10px;top:109.42px;width:2.00px;height:1.80px;background:#8e8e8e;border-radius:0.5px"></div>
<svg class="a" style="left:104.6px;top:103.82px" width="3" height="2.5"><path d="M0,2.3 L2.8,0.2 L2.8,2.3Z" fill="#bdbdbd"/></svg>
<div class="a" style="left:109.20px;top:104.52px;width:17.70px;height:0.80px;background:#3e4044;border-radius:0.4px"></div>
<div class="a" style="left:109.20px;top:104.52px;width:5.00px;height:0.80px;background:#dedede;"></div>
<div class="a" style="left:112.90px;top:103.62px;width:2.60px;height:2.60px;background:#f4f4f4;border-radius:50%"></div>
<svg class="a" style="left:104.4px;top:109.42px" width="3.4" height="2.5"><path d="M0.2,0.2 V2 H3.2 V0.2" fill="none" stroke="#bdbdbd" stroke-width="0.6"/></svg>
<div class="a" style="left:109.20px;top:110.02px;width:17.70px;height:0.80px;background:#3e4044;border-radius:0.4px"></div>
<div class="a" style="left:116.50px;top:109.12px;width:2.60px;height:2.60px;background:#f4f4f4;border-radius:50%"></div>
<div class="a" style="left:45.00px;top:112.70px;width:86.00px;height:0.70px;background:#1b1c1f;"></div>
<div class="a" style="left:31.80px;top:112.70px;width:13.20px;height:11.67px;background:#f0c43a;"></div>
<div class="a" style="left:34.50px;top:113.00px;width:10.50px;height:11.17px;background:#f0c43a;border-left:0.6px solid rgba(0,0,0,0.22);border-top:0.7px solid rgba(0,0,0,0.2)"></div>
<svg class="a" style="left:35.80px;top:114.90px" width="5" height="4"><path d="M0,3.4 C0.2,2 1,1.5 1.5,1.3 C1.7,0.5 2,0.2 2.2,0.2 C2.4,0.2 2.7,0.5 2.9,1.3 C3.4,1.5 4.2,2 4.4,3.4Z" fill="#0a0a0a"/></svg>
<div class="a t" style="left:40.80px;top:116px;font-size:2.8px;color:rgba(0,0,0,0.32);">18</div>
<div class="a" style="left:47.30px;top:114.50px;width:4.40px;height:3.40px;background:#2f3134;"></div>
<div class="a t" style="left:48.20px;top:116px;font-size:3px;color:#e8e8e8;font-weight:bold">M</div>
<div class="a" style="left:53.60px;top:114.50px;width:3.40px;height:3.40px;background:#2f3134;"></div>
<div class="a t" style="left:54.40px;top:116px;font-size:3px;color:#e8e8e8;font-weight:bold">S</div>
<div class="a t" style="left:61.00px;top:115px;font-size:4.4px;color:#eceef2;transform:scaleX(0.72);transform-origin:0 0">DR Stick Hits</div>
<div class="a" style="left:60.60px;top:120.30px;width:4.60px;height:3.00px;background:#313336;"></div>
<div class="a" style="left:61.90px;top:120.90px;width:2.00px;height:1.80px;background:#8e8e8e;border-radius:0.5px"></div>
<div class="a" style="left:66.80px;top:120.30px;width:4.60px;height:3.00px;background:#313336;"></div>
<div class="a" style="left:68.10px;top:120.90px;width:2.00px;height:1.80px;background:#8e8e8e;border-radius:0.5px"></div>
<div class="a" style="left:73.00px;top:120.30px;width:4.60px;height:3.00px;background:#313336;"></div>
<div class="a" style="left:74.30px;top:120.90px;width:2.00px;height:1.80px;background:#8e8e8e;border-radius:0.5px"></div>
<div class="a" style="left:79.20px;top:120.30px;width:4.60px;height:3.00px;background:#313336;"></div>
<div class="a" style="left:80.50px;top:120.90px;width:2.00px;height:1.80px;background:#8e8e8e;border-radius:0.5px"></div>
<div class="a" style="left:85.40px;top:120.30px;width:4.60px;height:3.00px;background:#313336;"></div>
<div class="a t" style="left:86.50px;top:122px;font-size:2.8px;color:#e0e0e0;font-weight:bold">R</div>
<div class="a" style="left:91.60px;top:120.30px;width:4.60px;height:3.00px;background:#313336;"></div>
<div class="a t" style="left:92.70px;top:122px;font-size:2.8px;color:#e0e0e0;font-weight:bold">W</div>
<div class="a" style="left:97.80px;top:120.30px;width:4.60px;height:3.00px;background:#313336;"></div>
<div class="a" style="left:99.10px;top:120.90px;width:2.00px;height:1.80px;background:#8e8e8e;border-radius:0.5px"></div>
<svg class="a" style="left:104.6px;top:115.30px" width="3" height="2.5"><path d="M0,2.3 L2.8,0.2 L2.8,2.3Z" fill="#bdbdbd"/></svg>
<div class="a" style="left:109.20px;top:116.00px;width:17.70px;height:0.80px;background:#3e4044;border-radius:0.4px"></div>
<div class="a" style="left:109.20px;top:116.00px;width:13.30px;height:0.80px;background:#dedede;"></div>
<div class="a" style="left:121.20px;top:115.10px;width:2.60px;height:2.60px;background:#f4f4f4;border-radius:50%"></div>
<div class="a" style="left:45.00px;top:124.17px;width:86.00px;height:0.70px;background:#1b1c1f;"></div>
<div class="a" style="left:31.80px;top:124.17px;width:10.40px;height:11.67px;background:#5b7cf0;"></div>
<svg class="a" style="left:33px;top:126.17px" width="5" height="4"><path d="M0,0.3 h1.8 l0.6,0.6 h2.2 v2.6 h-4.6z" fill="#0a0a0a"/></svg>
<div class="a" style="left:42.20px;top:124.17px;width:2.80px;height:11.67px;background:#242629;"></div>
<div class="a" style="left:45.60px;top:125.97px;width:4.40px;height:3.40px;background:#2f3134;"></div>
<div class="a t" style="left:46.50px;top:127px;font-size:3px;color:#e8e8e8;font-weight:bold">M</div>
<div class="a" style="left:51.90px;top:125.97px;width:3.40px;height:3.40px;background:#2f3134;"></div>
<div class="a t" style="left:52.70px;top:127px;font-size:3px;color:#e8e8e8;font-weight:bold">S</div>
<div class="a t" style="left:58.20px;top:127px;font-size:4.4px;color:#eceef2;transform:scaleX(0.72);transform-origin:0 0">Bass</div>
<div class="a" style="left:58.00px;top:131.77px;width:4.60px;height:3.00px;background:#313336;"></div>
<div class="a" style="left:59.30px;top:132.37px;width:2.00px;height:1.80px;background:#9a9a9a;"></div>
<div class="a" style="left:64.20px;top:131.77px;width:4.60px;height:3.00px;background:#313336;"></div>
<div class="a" style="left:65.50px;top:132.37px;width:2.00px;height:1.80px;background:#9a9a9a;"></div>
<div class="a" style="left:70.40px;top:131.77px;width:4.60px;height:3.00px;background:#313336;"></div>
<div class="a" style="left:71.70px;top:132.37px;width:2.00px;height:1.80px;background:#9a9a9a;"></div>
<div class="a" style="left:76.60px;top:131.77px;width:4.60px;height:3.00px;background:#313336;"></div>
<div class="a" style="left:77.90px;top:132.37px;width:2.00px;height:1.80px;background:#9a9a9a;"></div>
<div class="a" style="left:45.00px;top:135.65px;width:86.00px;height:0.70px;background:#1b1c1f;"></div>
<div class="a" style="left:31.80px;top:135.65px;width:13.20px;height:11.67px;background:#5b7cf0;"></div>
<div class="a" style="left:34.50px;top:135.95px;width:10.50px;height:11.17px;background:#5b7cf0;border-left:0.6px solid rgba(0,0,0,0.22);border-top:0.7px solid rgba(0,0,0,0.2)"></div>
<svg class="a" style="left:35.80px;top:137.85px" width="4" height="4"><path d="M0.4,0.4 h3 v1.6 q0,1.4 -1.5,1.8 q-1.5,-0.4 -1.5,-1.8z" fill="none" stroke="#121212" stroke-width="0.7"/></svg>
<div class="a t" style="left:40.80px;top:139px;font-size:2.8px;color:rgba(0,0,0,0.32);">19</div>
<div class="a" style="left:47.30px;top:137.45px;width:4.40px;height:3.40px;background:#2f3134;"></div>
<div class="a t" style="left:48.20px;top:139px;font-size:3px;color:#e8e8e8;font-weight:bold">M</div>
<div class="a" style="left:53.60px;top:137.45px;width:3.40px;height:3.40px;background:#2f3134;"></div>
<div class="a t" style="left:54.40px;top:139px;font-size:3px;color:#e8e8e8;font-weight:bold">S</div>
<div class="a t" style="left:61.00px;top:138px;font-size:4.4px;color:#eceef2;transform:scaleX(0.72);transform-origin:0 0">GROUP Bass</div>
<div class="a" style="left:60.60px;top:143.25px;width:4.60px;height:3.00px;background:#313336;"></div>
<div class="a t" style="left:61.70px;top:145px;font-size:2.8px;color:#e0e0e0;font-weight:bold">R</div>
<div class="a" style="left:66.80px;top:143.25px;width:4.60px;height:3.00px;background:#313336;"></div>
<div class="a t" style="left:67.90px;top:145px;font-size:2.8px;color:#e0e0e0;font-weight:bold">W</div>
<div class="a" style="left:73.00px;top:143.25px;width:4.60px;height:3.00px;background:#313336;"></div>
<div class="a" style="left:74.30px;top:143.85px;width:2.00px;height:1.80px;background:#8e8e8e;border-radius:0.5px"></div>
<div class="a" style="left:79.20px;top:143.25px;width:4.60px;height:3.00px;background:#313336;"></div>
<div class="a" style="left:80.50px;top:143.85px;width:2.00px;height:1.80px;background:#8e8e8e;border-radius:0.5px"></div>
<div class="a t" style="left:91.50px;top:145px;font-size:2.8px;color:#9a9a9a;">0.00</div>
<div class="a" style="left:99.50px;top:143.45px;width:1.40px;height:3.60px;background:#44464a;"></div>
<svg class="a" style="left:104.6px;top:138.25px" width="3" height="2.5"><path d="M0,2.3 L2.8,0.2 L2.8,2.3Z" fill="#bdbdbd"/></svg>
<div class="a" style="left:109.20px;top:138.95px;width:17.70px;height:0.80px;background:#3e4044;border-radius:0.4px"></div>
<div class="a" style="left:109.20px;top:138.95px;width:10.20px;height:0.80px;background:#dedede;"></div>
<div class="a" style="left:118.10px;top:138.05px;width:2.60px;height:2.60px;background:#f4f4f4;border-radius:50%"></div>
<svg class="a" style="left:104.4px;top:143.85px" width="3.4" height="2.5"><path d="M0.2,0.2 V2 H3.2 V0.2" fill="none" stroke="#bdbdbd" stroke-width="0.6"/></svg>
<div class="a" style="left:109.20px;top:144.45px;width:17.70px;height:0.80px;background:#3e4044;border-radius:0.4px"></div>
<div class="a" style="left:116.50px;top:143.55px;width:2.60px;height:2.60px;background:#f4f4f4;border-radius:50%"></div>
<div class="a" style="left:45.00px;top:147.12px;width:86.00px;height:0.70px;background:#1b1c1f;"></div>
<div class="a" style="left:31.80px;top:147.12px;width:13.20px;height:11.67px;background:#5b7cf0;"></div>
<div class="a" style="left:34.50px;top:147.43px;width:10.50px;height:11.17px;background:#5b7cf0;border-left:0.6px solid rgba(0,0,0,0.22);border-top:0.7px solid rgba(0,0,0,0.2)"></div>
<svg class="a" style="left:35.80px;top:149.32px" width="5" height="4"><rect x="0.2" y="0.4" width="4.2" height="3" fill="#141414"/><rect x="1" y="0.4" width="0.5" height="1.6" fill="#888"/><rect x="2.4" y="0.4" width="0.5" height="1.6" fill="#888"/></svg>
<div class="a t" style="left:40.80px;top:151px;font-size:2.8px;color:rgba(0,0,0,0.32);">20</div>
<div class="a" style="left:47.30px;top:148.93px;width:4.40px;height:3.40px;background:#2f3134;"></div>
<div class="a t" style="left:48.20px;top:150px;font-size:3px;color:#e8e8e8;font-weight:bold">M</div>
<div class="a" style="left:53.60px;top:148.93px;width:3.40px;height:3.40px;background:#2f3134;"></div>
<div class="a t" style="left:54.40px;top:150px;font-size:3px;color:#e8e8e8;font-weight:bold">S</div>
<div class="a t" style="left:61.00px;top:150px;font-size:4.4px;color:#eceef2;transform:scaleX(0.72);transform-origin:0 0">BA P Bass</div>
<div class="a" style="left:60.60px;top:154.72px;width:4.60px;height:3.00px;background:#313336;"></div>
<div class="a" style="left:61.90px;top:155.32px;width:2.00px;height:1.80px;background:#8e8e8e;border-radius:0.5px"></div>
<div class="a" style="left:66.80px;top:154.72px;width:4.60px;height:3.00px;background:#313336;"></div>
<div class="a" style="left:68.10px;top:155.32px;width:2.00px;height:1.80px;background:#8e8e8e;border-radius:0.5px"></div>
<div class="a" style="left:73.00px;top:154.72px;width:4.60px;height:3.00px;background:#313336;"></div>
<div class="a" style="left:74.30px;top:155.32px;width:2.00px;height:1.80px;background:#8e8e8e;border-radius:0.5px"></div>
<div class="a" style="left:79.20px;top:154.72px;width:4.60px;height:3.00px;background:#313336;"></div>
<div class="a" style="left:80.50px;top:155.32px;width:2.00px;height:1.80px;background:#8e8e8e;border-radius:0.5px"></div>
<div class="a" style="left:85.40px;top:154.72px;width:4.60px;height:3.00px;background:#313336;"></div>
<div class="a t" style="left:86.50px;top:156px;font-size:2.8px;color:#e0e0e0;font-weight:bold">R</div>
<div class="a" style="left:91.60px;top:154.72px;width:4.60px;height:3.00px;background:#313336;"></div>
<div class="a t" style="left:92.70px;top:156px;font-size:2.8px;color:#e0e0e0;font-weight:bold">W</div>
<div class="a" style="left:97.80px;top:154.72px;width:4.60px;height:3.00px;background:#313336;"></div>
<div class="a" style="left:99.10px;top:155.32px;width:2.00px;height:1.80px;background:#8e8e8e;border-radius:0.5px"></div>
<svg class="a" style="left:104.6px;top:149.72px" width="3" height="2.5"><path d="M0,2.3 L2.8,0.2 L2.8,2.3Z" fill="#bdbdbd"/></svg>
<div class="a" style="left:109.20px;top:150.43px;width:17.70px;height:0.80px;background:#3e4044;border-radius:0.4px"></div>
<div class="a" style="left:109.20px;top:150.43px;width:10.20px;height:0.80px;background:#dedede;"></div>
<div class="a" style="left:118.10px;top:149.53px;width:2.60px;height:2.60px;background:#f4f4f4;border-radius:50%"></div>
<svg class="a" style="left:104.4px;top:155.32px" width="3.4" height="2.5"><path d="M0.2,0.2 V2 H3.2 V0.2" fill="none" stroke="#bdbdbd" stroke-width="0.6"/></svg>
<div class="a" style="left:109.20px;top:155.93px;width:17.70px;height:0.80px;background:#3e4044;border-radius:0.4px"></div>
<div class="a" style="left:116.50px;top:155.03px;width:2.60px;height:2.60px;background:#f4f4f4;border-radius:50%"></div>
<div class="a" style="left:45.00px;top:158.60px;width:86.00px;height:0.70px;background:#1b1c1f;"></div>
<div class="a" style="left:31.80px;top:158.60px;width:13.20px;height:11.67px;background:#5b7cf0;"></div>
<div class="a" style="left:34.50px;top:158.90px;width:10.50px;height:11.17px;background:#5b7cf0;border-left:0.6px solid rgba(0,0,0,0.22);border-top:0.7px solid rgba(0,0,0,0.2)"></div>
<svg class="a" style="left:35.80px;top:160.80px" width="5" height="4"><rect x="0.2" y="0.4" width="4.2" height="3" fill="#141414"/><rect x="1" y="0.4" width="0.5" height="1.6" fill="#888"/><rect x="2.4" y="0.4" width="0.5" height="1.6" fill="#888"/></svg>
<div class="a t" style="left:40.80px;top:162px;font-size:2.8px;color:rgba(0,0,0,0.32);">21</div>
<div class="a" style="left:47.30px;top:160.40px;width:4.40px;height:3.40px;background:#2f3134;"></div>
<div class="a t" style="left:48.20px;top:162px;font-size:3px;color:#e8e8e8;font-weight:bold">M</div>
<div class="a" style="left:53.60px;top:160.40px;width:3.40px;height:3.40px;background:#2f3134;"></div>
<div class="a t" style="left:54.40px;top:162px;font-size:3px;color:#e8e8e8;font-weight:bold">S</div>
<div class="a t" style="left:61.00px;top:161px;font-size:4.4px;color:#eceef2;transform:scaleX(0.72);transform-origin:0 0">BA Upright Bass</div>
<div class="a" style="left:60.60px;top:166.20px;width:4.60px;height:3.00px;background:#313336;"></div>
<div class="a" style="left:61.90px;top:166.80px;width:2.00px;height:1.80px;background:#8e8e8e;border-radius:0.5px"></div>
<div class="a" style="left:66.80px;top:166.20px;width:4.60px;height:3.00px;background:#313336;"></div>
<div class="a" style="left:68.10px;top:166.80px;width:2.00px;height:1.80px;background:#8e8e8e;border-radius:0.5px"></div>
<div class="a" style="left:73.00px;top:166.20px;width:4.60px;height:3.00px;background:#313336;"></div>
<div class="a" style="left:74.30px;top:166.80px;width:2.00px;height:1.80px;background:#8e8e8e;border-radius:0.5px"></div>
<div class="a" style="left:79.20px;top:166.20px;width:4.60px;height:3.00px;background:#313336;"></div>
<div class="a" style="left:80.50px;top:166.80px;width:2.00px;height:1.80px;background:#8e8e8e;border-radius:0.5px"></div>
<div class="a" style="left:85.40px;top:166.20px;width:4.60px;height:3.00px;background:#313336;"></div>
<div class="a t" style="left:86.50px;top:168px;font-size:2.8px;color:#e0e0e0;font-weight:bold">R</div>
<div class="a" style="left:91.60px;top:166.20px;width:4.60px;height:3.00px;background:#313336;"></div>
<div class="a t" style="left:92.70px;top:168px;font-size:2.8px;color:#e0e0e0;font-weight:bold">W</div>
<div class="a" style="left:97.80px;top:166.20px;width:4.60px;height:3.00px;background:#313336;"></div>
<div class="a" style="left:99.10px;top:166.80px;width:2.00px;height:1.80px;background:#8e8e8e;border-radius:0.5px"></div>
<svg class="a" style="left:104.6px;top:161.20px" width="3" height="2.5"><path d="M0,2.3 L2.8,0.2 L2.8,2.3Z" fill="#bdbdbd"/></svg>
<div class="a" style="left:109.20px;top:161.90px;width:17.70px;height:0.80px;background:#3e4044;border-radius:0.4px"></div>
<div class="a" style="left:109.20px;top:161.90px;width:7.80px;height:0.80px;background:#dedede;"></div>
<div class="a" style="left:115.70px;top:161.00px;width:2.60px;height:2.60px;background:#f4f4f4;border-radius:50%"></div>
<svg class="a" style="left:104.4px;top:166.80px" width="3.4" height="2.5"><path d="M0.2,0.2 V2 H3.2 V0.2" fill="none" stroke="#bdbdbd" stroke-width="0.6"/></svg>
<div class="a" style="left:109.20px;top:167.40px;width:17.70px;height:0.80px;background:#3e4044;border-radius:0.4px"></div>
<div class="a" style="left:116.50px;top:166.50px;width:2.60px;height:2.60px;background:#f4f4f4;border-radius:50%"></div>
<div class="a" style="left:45.00px;top:170.07px;width:86.00px;height:0.70px;background:#1b1c1f;"></div>
<div class="a" style="left:31.80px;top:170.07px;width:10.40px;height:11.67px;background:#38d4d4;"></div>
<svg class="a" style="left:33px;top:172.07px" width="5" height="4"><path d="M0,0.3 h1.8 l0.6,0.6 h2.2 v2.6 h-4.6z" fill="#0a0a0a"/></svg>
<div class="a" style="left:42.20px;top:170.07px;width:2.80px;height:11.67px;background:#242629;"></div>
<div class="a" style="left:45.60px;top:171.88px;width:4.40px;height:3.40px;background:#2f3134;"></div>
<div class="a t" style="left:46.50px;top:173px;font-size:3px;color:#e8e8e8;font-weight:bold">M</div>
<div class="a" style="left:51.90px;top:171.88px;width:3.40px;height:3.40px;background:#2f3134;"></div>
<div class="a t" style="left:52.70px;top:173px;font-size:3px;color:#e8e8e8;font-weight:bold">S</div>
<div class="a t" style="left:58.20px;top:173px;font-size:4.4px;color:#eceef2;transform:scaleX(0.72);transform-origin:0 0">Guitars</div>
<div class="a" style="left:58.00px;top:177.67px;width:4.60px;height:3.00px;background:#313336;"></div>
<div class="a" style="left:59.30px;top:178.27px;width:2.00px;height:1.80px;background:#9a9a9a;"></div>
<div class="a" style="left:64.20px;top:177.67px;width:4.60px;height:3.00px;background:#313336;"></div>
<div class="a" style="left:65.50px;top:178.27px;width:2.00px;height:1.80px;background:#9a9a9a;"></div>
<div class="a" style="left:70.40px;top:177.67px;width:4.60px;height:3.00px;background:#313336;"></div>
<div class="a" style="left:71.70px;top:178.27px;width:2.00px;height:1.80px;background:#9a9a9a;"></div>
<div class="a" style="left:76.60px;top:177.67px;width:4.60px;height:3.00px;background:#313336;"></div>
<div class="a" style="left:77.90px;top:178.27px;width:2.00px;height:1.80px;background:#9a9a9a;"></div>
<div class="a" style="left:45.00px;top:181.55px;width:86.00px;height:0.70px;background:#1b1c1f;"></div>
<div class="a" style="left:31.80px;top:181.55px;width:13.20px;height:11.67px;background:#38d4d4;"></div>
<div class="a" style="left:34.50px;top:181.85px;width:10.50px;height:11.17px;background:#38d4d4;border-left:0.6px solid rgba(0,0,0,0.22);border-top:0.7px solid rgba(0,0,0,0.2)"></div>
<svg class="a" style="left:35.80px;top:183.75px" width="4" height="4"><path d="M0.4,0.4 h3 v1.6 q0,1.4 -1.5,1.8 q-1.5,-0.4 -1.5,-1.8z" fill="none" stroke="#121212" stroke-width="0.7"/></svg>
<div class="a t" style="left:40.80px;top:185px;font-size:2.8px;color:rgba(0,0,0,0.32);">22</div>
<div class="a" style="left:47.30px;top:183.35px;width:4.40px;height:3.40px;background:#2f3134;"></div>
<div class="a t" style="left:48.20px;top:185px;font-size:3px;color:#e8e8e8;font-weight:bold">M</div>
<div class="a" style="left:53.60px;top:183.35px;width:3.40px;height:3.40px;background:#2f3134;"></div>
<div class="a t" style="left:54.40px;top:185px;font-size:3px;color:#e8e8e8;font-weight:bold">S</div>
<div class="a t" style="left:61.00px;top:184px;font-size:4.4px;color:#eceef2;transform:scaleX(0.72);transform-origin:0 0">GROUP Electric Guitars</div>
<div class="a" style="left:60.60px;top:189.15px;width:4.60px;height:3.00px;background:#3cba3c;"></div>
<div class="a t" style="left:61.70px;top:191px;font-size:2.8px;color:#e0e0e0;font-weight:bold">R</div>
<div class="a" style="left:66.80px;top:189.15px;width:4.60px;height:3.00px;background:#313336;"></div>
<div class="a t" style="left:67.90px;top:191px;font-size:2.8px;color:#e0e0e0;font-weight:bold">W</div>
<div class="a" style="left:73.00px;top:189.15px;width:4.60px;height:3.00px;background:#313336;"></div>
<div class="a" style="left:74.30px;top:189.75px;width:2.00px;height:1.80px;background:#8e8e8e;border-radius:0.5px"></div>
<div class="a" style="left:79.20px;top:189.15px;width:4.60px;height:3.00px;background:#313336;"></div>
<div class="a" style="left:80.50px;top:189.75px;width:2.00px;height:1.80px;background:#8e8e8e;border-radius:0.5px"></div>
<div class="a t" style="left:91.50px;top:191px;font-size:2.8px;color:#9a9a9a;">0.00</div>
<div class="a" style="left:99.50px;top:189.35px;width:1.40px;height:3.60px;background:#44464a;"></div>
<svg class="a" style="left:104.6px;top:184.15px" width="3" height="2.5"><path d="M0,2.3 L2.8,0.2 L2.8,2.3Z" fill="#bdbdbd"/></svg>
<div class="a" style="left:109.20px;top:184.85px;width:17.70px;height:0.80px;background:#3e4044;border-radius:0.4px"></div>
<div class="a" style="left:109.20px;top:184.85px;width:10.20px;height:0.80px;background:#dedede;"></div>
<div class="a" style="left:118.10px;top:183.95px;width:2.60px;height:2.60px;background:#f4f4f4;border-radius:50%"></div>
<svg class="a" style="left:104.4px;top:189.75px" width="3.4" height="2.5"><path d="M0.2,0.2 V2 H3.2 V0.2" fill="none" stroke="#bdbdbd" stroke-width="0.6"/></svg>
<div class="a" style="left:109.20px;top:190.35px;width:17.70px;height:0.80px;background:#3e4044;border-radius:0.4px"></div>
<div class="a" style="left:116.50px;top:189.45px;width:2.60px;height:2.60px;background:#f4f4f4;border-radius:50%"></div>
<div class="a" style="left:45.00px;top:193.03px;width:86.00px;height:0.70px;background:#1b1c1f;"></div>
<div class="a" style="left:31.80px;top:193.03px;width:13.20px;height:11.67px;background:#38d4d4;"></div>
<div class="a" style="left:34.50px;top:193.33px;width:10.50px;height:11.17px;background:#38d4d4;border-left:0.6px solid rgba(0,0,0,0.22);border-top:0.7px solid rgba(0,0,0,0.2)"></div>
<svg class="a" style="left:35.80px;top:195.22px" width="5" height="4"><path d="M0,3.4 C0.2,2 1,1.5 1.5,1.3 C1.7,0.5 2,0.2 2.2,0.2 C2.4,0.2 2.7,0.5 2.9,1.3 C3.4,1.5 4.2,2 4.4,3.4Z" fill="#0a0a0a"/></svg>
<div class="a t" style="left:40.80px;top:196px;font-size:2.8px;color:rgba(0,0,0,0.32);">23</div>
<div class="a" style="left:47.30px;top:194.83px;width:4.40px;height:3.40px;background:#2f3134;"></div>
<div class="a t" style="left:48.20px;top:196px;font-size:3px;color:#e8e8e8;font-weight:bold">M</div>
<div class="a" style="left:53.60px;top:194.83px;width:3.40px;height:3.40px;background:#2f3134;"></div>
<div class="a t" style="left:54.40px;top:196px;font-size:3px;color:#e8e8e8;font-weight:bold">S</div>
<div class="a t" style="left:61.00px;top:196px;font-size:4.4px;color:#eceef2;transform:scaleX(0.72);transform-origin:0 0">GTR Hook Pairs L</div>
<div class="a" style="left:60.60px;top:200.62px;width:4.60px;height:3.00px;background:#313336;"></div>
<div class="a" style="left:61.90px;top:201.22px;width:2.00px;height:1.80px;background:#8e8e8e;border-radius:0.5px"></div>
<div class="a" style="left:66.80px;top:200.62px;width:4.60px;height:3.00px;background:#313336;"></div>
<div class="a" style="left:68.10px;top:201.22px;width:2.00px;height:1.80px;background:#8e8e8e;border-radius:0.5px"></div>
<div class="a" style="left:73.00px;top:200.62px;width:4.60px;height:3.00px;background:#313336;"></div>
<div class="a" style="left:74.30px;top:201.22px;width:2.00px;height:1.80px;background:#8e8e8e;border-radius:0.5px"></div>
<div class="a" style="left:79.20px;top:200.62px;width:4.60px;height:3.00px;background:#313336;"></div>
<div class="a" style="left:80.50px;top:201.22px;width:2.00px;height:1.80px;background:#8e8e8e;border-radius:0.5px"></div>
<div class="a" style="left:85.40px;top:200.62px;width:4.60px;height:3.00px;background:#313336;"></div>
<div class="a t" style="left:86.50px;top:202px;font-size:2.8px;color:#e0e0e0;font-weight:bold">R</div>
<div class="a" style="left:91.60px;top:200.62px;width:4.60px;height:3.00px;background:#313336;"></div>
<div class="a t" style="left:92.70px;top:202px;font-size:2.8px;color:#e0e0e0;font-weight:bold">W</div>
<div class="a" style="left:97.80px;top:200.62px;width:4.60px;height:3.00px;background:#313336;"></div>
<div class="a" style="left:99.10px;top:201.22px;width:2.00px;height:1.80px;background:#8e8e8e;border-radius:0.5px"></div>
<svg class="a" style="left:104.6px;top:195.62px" width="3" height="2.5"><path d="M0,2.3 L2.8,0.2 L2.8,2.3Z" fill="#bdbdbd"/></svg>
<div class="a" style="left:109.20px;top:196.33px;width:17.70px;height:0.80px;background:#3e4044;border-radius:0.4px"></div>
<div class="a" style="left:109.20px;top:196.33px;width:11.70px;height:0.80px;background:#dedede;"></div>
<div class="a" style="left:119.60px;top:195.43px;width:2.60px;height:2.60px;background:#f4f4f4;border-radius:50%"></div>
<div class="a" style="left:45.00px;top:204.50px;width:86.00px;height:0.70px;background:#1b1c1f;"></div>
<div class="a" style="left:31.80px;top:204.50px;width:13.20px;height:11.67px;background:#38d4d4;"></div>
<div class="a" style="left:34.50px;top:204.80px;width:10.50px;height:11.17px;background:#38d4d4;border-left:0.6px solid rgba(0,0,0,0.22);border-top:0.7px solid rgba(0,0,0,0.2)"></div>
<svg class="a" style="left:35.80px;top:206.70px" width="5" height="4"><path d="M0,3.4 C0.2,2 1,1.5 1.5,1.3 C1.7,0.5 2,0.2 2.2,0.2 C2.4,0.2 2.7,0.5 2.9,1.3 C3.4,1.5 4.2,2 4.4,3.4Z" fill="#0a0a0a"/></svg>
<div class="a t" style="left:40.80px;top:208px;font-size:2.8px;color:rgba(0,0,0,0.32);">24</div>
<div class="a" style="left:47.30px;top:206.30px;width:4.40px;height:3.40px;background:#2f3134;"></div>
<div class="a t" style="left:48.20px;top:208px;font-size:3px;color:#e8e8e8;font-weight:bold">M</div>
<div class="a" style="left:53.60px;top:206.30px;width:3.40px;height:3.40px;background:#2f3134;"></div>
<div class="a t" style="left:54.40px;top:208px;font-size:3px;color:#e8e8e8;font-weight:bold">S</div>
<div class="a t" style="left:61.00px;top:207px;font-size:4.4px;color:#eceef2;transform:scaleX(0.72);transform-origin:0 0">GTR Hook Pairs R</div>
<div class="a" style="left:60.60px;top:212.10px;width:4.60px;height:3.00px;background:#313336;"></div>
<div class="a" style="left:61.90px;top:212.70px;width:2.00px;height:1.80px;background:#8e8e8e;border-radius:0.5px"></div>
<div class="a" style="left:66.80px;top:212.10px;width:4.60px;height:3.00px;background:#313336;"></div>
<div class="a" style="left:68.10px;top:212.70px;width:2.00px;height:1.80px;background:#8e8e8e;border-radius:0.5px"></div>
<div class="a" style="left:73.00px;top:212.10px;width:4.60px;height:3.00px;background:#313336;"></div>
<div class="a" style="left:74.30px;top:212.70px;width:2.00px;height:1.80px;background:#8e8e8e;border-radius:0.5px"></div>
<div class="a" style="left:79.20px;top:212.10px;width:4.60px;height:3.00px;background:#313336;"></div>
<div class="a" style="left:80.50px;top:212.70px;width:2.00px;height:1.80px;background:#8e8e8e;border-radius:0.5px"></div>
<div class="a" style="left:85.40px;top:212.10px;width:4.60px;height:3.00px;background:#313336;"></div>
<div class="a t" style="left:86.50px;top:214px;font-size:2.8px;color:#e0e0e0;font-weight:bold">R</div>
<div class="a" style="left:91.60px;top:212.10px;width:4.60px;height:3.00px;background:#313336;"></div>
<div class="a t" style="left:92.70px;top:214px;font-size:2.8px;color:#e0e0e0;font-weight:bold">W</div>
<div class="a" style="left:97.80px;top:212.10px;width:4.60px;height:3.00px;background:#313336;"></div>
<div class="a" style="left:99.10px;top:212.70px;width:2.00px;height:1.80px;background:#8e8e8e;border-radius:0.5px"></div>
<svg class="a" style="left:104.6px;top:207.10px" width="3" height="2.5"><path d="M0,2.3 L2.8,0.2 L2.8,2.3Z" fill="#bdbdbd"/></svg>
<div class="a" style="left:109.20px;top:207.80px;width:17.70px;height:0.80px;background:#3e4044;border-radius:0.4px"></div>
<div class="a" style="left:109.20px;top:207.80px;width:11.70px;height:0.80px;background:#dedede;"></div>
<div class="a" style="left:119.60px;top:206.90px;width:2.60px;height:2.60px;background:#f4f4f4;border-radius:50%"></div>
<div class="a" style="left:45.00px;top:215.97px;width:86.00px;height:0.70px;background:#1b1c1f;"></div>
<div class="a" style="left:31.80px;top:215.97px;width:13.20px;height:11.67px;background:#38d4d4;"></div>
<div class="a" style="left:34.50px;top:216.28px;width:10.50px;height:11.17px;background:#38d4d4;border-left:0.6px solid rgba(0,0,0,0.22);border-top:0.7px solid rgba(0,0,0,0.2)"></div>
<svg class="a" style="left:35.80px;top:218.17px" width="5" height="4"><path d="M0,3.4 C0.2,2 1,1.5 1.5,1.3 C1.7,0.5 2,0.2 2.2,0.2 C2.4,0.2 2.7,0.5 2.9,1.3 C3.4,1.5 4.2,2 4.4,3.4Z" fill="#0a0a0a"/></svg>
<div class="a t" style="left:40.80px;top:219px;font-size:2.8px;color:rgba(0,0,0,0.32);">25</div>
<div class="a" style="left:47.30px;top:217.78px;width:4.40px;height:3.40px;background:#2f3134;"></div>
<div class="a t" style="left:48.20px;top:219px;font-size:3px;color:#e8e8e8;font-weight:bold">M</div>
<div class="a" style="left:53.60px;top:217.78px;width:3.40px;height:3.40px;background:#2f3134;"></div>
<div class="a t" style="left:54.40px;top:219px;font-size:3px;color:#e8e8e8;font-weight:bold">S</div>
<div class="a t" style="left:61.00px;top:219px;font-size:4.4px;color:#eceef2;transform:scaleX(0.72);transform-origin:0 0">GTR Lead Line L</div>
<div class="a" style="left:60.60px;top:223.57px;width:4.60px;height:3.00px;background:#313336;"></div>
<div class="a" style="left:61.90px;top:224.17px;width:2.00px;height:1.80px;background:#8e8e8e;border-radius:0.5px"></div>
<div class="a" style="left:66.80px;top:223.57px;width:4.60px;height:3.00px;background:#313336;"></div>
<div class="a" style="left:68.10px;top:224.17px;width:2.00px;height:1.80px;background:#8e8e8e;border-radius:0.5px"></div>
<div class="a" style="left:73.00px;top:223.57px;width:4.60px;height:3.00px;background:#313336;"></div>
<div class="a" style="left:74.30px;top:224.17px;width:2.00px;height:1.80px;background:#8e8e8e;border-radius:0.5px"></div>
<div class="a" style="left:79.20px;top:223.57px;width:4.60px;height:3.00px;background:#313336;"></div>
<div class="a" style="left:80.50px;top:224.17px;width:2.00px;height:1.80px;background:#8e8e8e;border-radius:0.5px"></div>
<div class="a" style="left:85.40px;top:223.57px;width:4.60px;height:3.00px;background:#313336;"></div>
<div class="a t" style="left:86.50px;top:225px;font-size:2.8px;color:#e0e0e0;font-weight:bold">R</div>
<div class="a" style="left:91.60px;top:223.57px;width:4.60px;height:3.00px;background:#313336;"></div>
<div class="a t" style="left:92.70px;top:225px;font-size:2.8px;color:#e0e0e0;font-weight:bold">W</div>
<div class="a" style="left:97.80px;top:223.57px;width:4.60px;height:3.00px;background:#313336;"></div>
<div class="a" style="left:99.10px;top:224.17px;width:2.00px;height:1.80px;background:#8e8e8e;border-radius:0.5px"></div>
<svg class="a" style="left:104.6px;top:218.57px" width="3" height="2.5"><path d="M0,2.3 L2.8,0.2 L2.8,2.3Z" fill="#bdbdbd"/></svg>
<div class="a" style="left:109.20px;top:219.28px;width:17.70px;height:0.80px;background:#3e4044;border-radius:0.4px"></div>
<div class="a" style="left:109.20px;top:219.28px;width:8.60px;height:0.80px;background:#dedede;"></div>
<div class="a" style="left:116.50px;top:218.38px;width:2.60px;height:2.60px;background:#f4f4f4;border-radius:50%"></div>
<div class="a" style="left:45.00px;top:227.45px;width:86.00px;height:0.70px;background:#1b1c1f;"></div>
<div class="a" style="left:31.80px;top:227.45px;width:13.20px;height:11.67px;background:#38d4d4;"></div>
<div class="a" style="left:34.50px;top:227.75px;width:10.50px;height:11.17px;background:#38d4d4;border-left:0.6px solid rgba(0,0,0,0.22);border-top:0.7px solid rgba(0,0,0,0.2)"></div>
<svg class="a" style="left:35.80px;top:229.65px" width="5" height="4"><path d="M0,3.4 C0.2,2 1,1.5 1.5,1.3 C1.7,0.5 2,0.2 2.2,0.2 C2.4,0.2 2.7,0.5 2.9,1.3 C3.4,1.5 4.2,2 4.4,3.4Z" fill="#0a0a0a"/></svg>
<div class="a t" style="left:40.80px;top:231px;font-size:2.8px;color:rgba(0,0,0,0.32);">26</div>
<div class="a" style="left:47.30px;top:229.25px;width:4.40px;height:3.40px;background:#2f3134;"></div>
<div class="a t" style="left:48.20px;top:231px;font-size:3px;color:#e8e8e8;font-weight:bold">M</div>
<div class="a" style="left:53.60px;top:229.25px;width:3.40px;height:3.40px;background:#2f3134;"></div>
<div class="a t" style="left:54.40px;top:231px;font-size:3px;color:#e8e8e8;font-weight:bold">S</div>
<div class="a t" style="left:61.00px;top:230px;font-size:4.4px;color:#eceef2;transform:scaleX(0.72);transform-origin:0 0">GTR Lead Line R</div>
<div class="a" style="left:60.60px;top:235.05px;width:4.60px;height:3.00px;background:#313336;"></div>
<div class="a" style="left:61.90px;top:235.65px;width:2.00px;height:1.80px;background:#8e8e8e;border-radius:0.5px"></div>
<div class="a" style="left:66.80px;top:235.05px;width:4.60px;height:3.00px;background:#313336;"></div>
<div class="a" style="left:68.10px;top:235.65px;width:2.00px;height:1.80px;background:#8e8e8e;border-radius:0.5px"></div>
<div class="a" style="left:73.00px;top:235.05px;width:4.60px;height:3.00px;background:#313336;"></div>
<div class="a" style="left:74.30px;top:235.65px;width:2.00px;height:1.80px;background:#8e8e8e;border-radius:0.5px"></div>
<div class="a" style="left:79.20px;top:235.05px;width:4.60px;height:3.00px;background:#313336;"></div>
<div class="a" style="left:80.50px;top:235.65px;width:2.00px;height:1.80px;background:#8e8e8e;border-radius:0.5px"></div>
<div class="a" style="left:85.40px;top:235.05px;width:4.60px;height:3.00px;background:#313336;"></div>
<div class="a t" style="left:86.50px;top:236px;font-size:2.8px;color:#e0e0e0;font-weight:bold">R</div>
<div class="a" style="left:91.60px;top:235.05px;width:4.60px;height:3.00px;background:#313336;"></div>
<div class="a t" style="left:92.70px;top:236px;font-size:2.8px;color:#e0e0e0;font-weight:bold">W</div>
<div class="a" style="left:97.80px;top:235.05px;width:4.60px;height:3.00px;background:#313336;"></div>
<div class="a" style="left:99.10px;top:235.65px;width:2.00px;height:1.80px;background:#8e8e8e;border-radius:0.5px"></div>
<svg class="a" style="left:104.6px;top:230.05px" width="3" height="2.5"><path d="M0,2.3 L2.8,0.2 L2.8,2.3Z" fill="#bdbdbd"/></svg>
<div class="a" style="left:109.20px;top:230.75px;width:17.70px;height:0.80px;background:#3e4044;border-radius:0.4px"></div>
<div class="a" style="left:109.20px;top:230.75px;width:8.60px;height:0.80px;background:#dedede;"></div>
<div class="a" style="left:116.50px;top:229.85px;width:2.60px;height:2.60px;background:#f4f4f4;border-radius:50%"></div>
<div class="a" style="left:45.00px;top:238.93px;width:86.00px;height:0.70px;background:#1b1c1f;"></div>
<div class="a" style="left:31.80px;top:238.93px;width:13.20px;height:11.67px;background:#38d4d4;"></div>
<div class="a" style="left:34.50px;top:239.23px;width:10.50px;height:11.17px;background:#38d4d4;border-left:0.6px solid rgba(0,0,0,0.22);border-top:0.7px solid rgba(0,0,0,0.2)"></div>
<svg class="a" style="left:35.80px;top:241.12px" width="5" height="4"><path d="M0,3.4 C0.2,2 1,1.5 1.5,1.3 C1.7,0.5 2,0.2 2.2,0.2 C2.4,0.2 2.7,0.5 2.9,1.3 C3.4,1.5 4.2,2 4.4,3.4Z" fill="#0a0a0a"/></svg>
<div class="a t" style="left:40.80px;top:242px;font-size:2.8px;color:rgba(0,0,0,0.32);">27</div>
<div class="a" style="left:47.30px;top:240.73px;width:4.40px;height:3.40px;background:#2f3134;"></div>
<div class="a t" style="left:48.20px;top:242px;font-size:3px;color:#e8e8e8;font-weight:bold">M</div>
<div class="a" style="left:53.60px;top:240.73px;width:3.40px;height:3.40px;background:#2f3134;"></div>
<div class="a t" style="left:54.40px;top:242px;font-size:3px;color:#e8e8e8;font-weight:bold">S</div>
<div class="a t" style="left:61.00px;top:242px;font-size:4.4px;color:#eceef2;transform:scaleX(0.72);transform-origin:0 0">GTR Shimmer Strums</div>
<div class="a" style="left:60.60px;top:246.53px;width:4.60px;height:3.00px;background:#313336;"></div>
<div class="a" style="left:61.90px;top:247.12px;width:2.00px;height:1.80px;background:#8e8e8e;border-radius:0.5px"></div>
<div class="a" style="left:66.80px;top:246.53px;width:4.60px;height:3.00px;background:#313336;"></div>
<div class="a" style="left:68.10px;top:247.12px;width:2.00px;height:1.80px;background:#8e8e8e;border-radius:0.5px"></div>
<div class="a" style="left:73.00px;top:246.53px;width:4.60px;height:3.00px;background:#313336;"></div>
<div class="a" style="left:74.30px;top:247.12px;width:2.00px;height:1.80px;background:#8e8e8e;border-radius:0.5px"></div>
<div class="a" style="left:79.20px;top:246.53px;width:4.60px;height:3.00px;background:#313336;"></div>
<div class="a" style="left:80.50px;top:247.12px;width:2.00px;height:1.80px;background:#8e8e8e;border-radius:0.5px"></div>
<div class="a" style="left:85.40px;top:246.53px;width:4.60px;height:3.00px;background:#313336;"></div>
<div class="a t" style="left:86.50px;top:248px;font-size:2.8px;color:#e0e0e0;font-weight:bold">R</div>
<div class="a" style="left:91.60px;top:246.53px;width:4.60px;height:3.00px;background:#313336;"></div>
<div class="a t" style="left:92.70px;top:248px;font-size:2.8px;color:#e0e0e0;font-weight:bold">W</div>
<div class="a" style="left:97.80px;top:246.53px;width:4.60px;height:3.00px;background:#313336;"></div>
<div class="a" style="left:99.10px;top:247.12px;width:2.00px;height:1.80px;background:#8e8e8e;border-radius:0.5px"></div>
<svg class="a" style="left:104.6px;top:241.53px" width="3" height="2.5"><path d="M0,2.3 L2.8,0.2 L2.8,2.3Z" fill="#bdbdbd"/></svg>
<div class="a" style="left:109.20px;top:242.23px;width:17.70px;height:0.80px;background:#3e4044;border-radius:0.4px"></div>
<div class="a" style="left:109.20px;top:242.23px;width:12.60px;height:0.80px;background:#dedede;"></div>
<div class="a" style="left:120.50px;top:241.33px;width:2.60px;height:2.60px;background:#f4f4f4;border-radius:50%"></div>
<div class="a" style="left:45.00px;top:250.40px;width:86.00px;height:0.70px;background:#1b1c1f;"></div>
<div class="a" style="left:31.80px;top:250.40px;width:13.20px;height:11.67px;background:#38d4d4;"></div>
<div class="a" style="left:34.50px;top:250.70px;width:10.50px;height:11.17px;background:#38d4d4;border-left:0.6px solid rgba(0,0,0,0.22);border-top:0.7px solid rgba(0,0,0,0.2)"></div>
<svg class="a" style="left:35.80px;top:252.60px" width="5" height="4"><path d="M0,3.4 C0.2,2 1,1.5 1.5,1.3 C1.7,0.5 2,0.2 2.2,0.2 C2.4,0.2 2.7,0.5 2.9,1.3 C3.4,1.5 4.2,2 4.4,3.4Z" fill="#0a0a0a"/></svg>
<div class="a t" style="left:40.80px;top:254px;font-size:2.8px;color:rgba(0,0,0,0.32);">28</div>
<div class="a" style="left:47.30px;top:252.20px;width:4.40px;height:3.40px;background:#2f3134;"></div>
<div class="a t" style="left:48.20px;top:254px;font-size:3px;color:#e8e8e8;font-weight:bold">M</div>
<div class="a" style="left:53.60px;top:252.20px;width:3.40px;height:3.40px;background:#2f3134;"></div>
<div class="a t" style="left:54.40px;top:254px;font-size:3px;color:#e8e8e8;font-weight:bold">S</div>
<div class="a t" style="left:61.00px;top:253px;font-size:4.4px;color:#eceef2;transform:scaleX(0.72);transform-origin:0 0">GTR Long Strums</div>
<div class="a" style="left:60.60px;top:258.00px;width:4.60px;height:3.00px;background:#313336;"></div>
<div class="a" style="left:61.90px;top:258.60px;width:2.00px;height:1.80px;background:#8e8e8e;border-radius:0.5px"></div>
<div class="a" style="left:66.80px;top:258.00px;width:4.60px;height:3.00px;background:#313336;"></div>
<div class="a" style="left:68.10px;top:258.60px;width:2.00px;height:1.80px;background:#8e8e8e;border-radius:0.5px"></div>
<div class="a" style="left:73.00px;top:258.00px;width:4.60px;height:3.00px;background:#313336;"></div>
<div class="a" style="left:74.30px;top:258.60px;width:2.00px;height:1.80px;background:#8e8e8e;border-radius:0.5px"></div>
<div class="a" style="left:79.20px;top:258.00px;width:4.60px;height:3.00px;background:#313336;"></div>
<div class="a" style="left:80.50px;top:258.60px;width:2.00px;height:1.80px;background:#8e8e8e;border-radius:0.5px"></div>
<div class="a" style="left:85.40px;top:258.00px;width:4.60px;height:3.00px;background:#313336;"></div>
<div class="a t" style="left:86.50px;top:259px;font-size:2.8px;color:#e0e0e0;font-weight:bold">R</div>
<div class="a" style="left:91.60px;top:258.00px;width:4.60px;height:3.00px;background:#313336;"></div>
<div class="a t" style="left:92.70px;top:259px;font-size:2.8px;color:#e0e0e0;font-weight:bold">W</div>
<div class="a" style="left:97.80px;top:258.00px;width:4.60px;height:3.00px;background:#313336;"></div>
<div class="a" style="left:99.10px;top:258.60px;width:2.00px;height:1.80px;background:#8e8e8e;border-radius:0.5px"></div>
<svg class="a" style="left:104.6px;top:253.00px" width="3" height="2.5"><path d="M0,2.3 L2.8,0.2 L2.8,2.3Z" fill="#bdbdbd"/></svg>
<div class="a" style="left:109.20px;top:253.70px;width:17.70px;height:0.80px;background:#3e4044;border-radius:0.4px"></div>
<div class="a" style="left:109.20px;top:253.70px;width:9.30px;height:0.80px;background:#dedede;"></div>
<div class="a" style="left:117.20px;top:252.80px;width:2.60px;height:2.60px;background:#f4f4f4;border-radius:50%"></div>
<div class="a" style="left:45.00px;top:261.88px;width:86.00px;height:0.70px;background:#1b1c1f;"></div>
<div class="a" style="left:31.80px;top:261.88px;width:13.20px;height:11.67px;background:#38d4d4;"></div>
<div class="a" style="left:34.50px;top:262.18px;width:10.50px;height:11.17px;background:#38d4d4;border-left:0.6px solid rgba(0,0,0,0.22);border-top:0.7px solid rgba(0,0,0,0.2)"></div>
<svg class="a" style="left:35.80px;top:264.07px" width="5" height="4"><path d="M0,3.4 C0.2,2 1,1.5 1.5,1.3 C1.7,0.5 2,0.2 2.2,0.2 C2.4,0.2 2.7,0.5 2.9,1.3 C3.4,1.5 4.2,2 4.4,3.4Z" fill="#0a0a0a"/></svg>
<div class="a t" style="left:40.80px;top:265px;font-size:2.8px;color:rgba(0,0,0,0.32);">29</div>
<div class="a" style="left:47.30px;top:263.68px;width:4.40px;height:3.40px;background:#2f3134;"></div>
<div class="a t" style="left:48.20px;top:265px;font-size:3px;color:#e8e8e8;font-weight:bold">M</div>
<div class="a" style="left:53.60px;top:263.68px;width:3.40px;height:3.40px;background:#2f3134;"></div>
<div class="a t" style="left:54.40px;top:265px;font-size:3px;color:#e8e8e8;font-weight:bold">S</div>
<div class="a t" style="left:61.00px;top:264px;font-size:4.4px;color:#eceef2;transform:scaleX(0.72);transform-origin:0 0">GTR Accent Lead L</div>
<div class="a" style="left:60.60px;top:269.48px;width:4.60px;height:3.00px;background:#313336;"></div>
<div class="a" style="left:61.90px;top:270.07px;width:2.00px;height:1.80px;background:#8e8e8e;border-radius:0.5px"></div>
<div class="a" style="left:66.80px;top:269.48px;width:4.60px;height:3.00px;background:#313336;"></div>
<div class="a" style="left:68.10px;top:270.07px;width:2.00px;height:1.80px;background:#8e8e8e;border-radius:0.5px"></div>
<div class="a" style="left:73.00px;top:269.48px;width:4.60px;height:3.00px;background:#313336;"></div>
<div class="a" style="left:74.30px;top:270.07px;width:2.00px;height:1.80px;background:#8e8e8e;border-radius:0.5px"></div>
<div class="a" style="left:79.20px;top:269.48px;width:4.60px;height:3.00px;background:#313336;"></div>
<div class="a" style="left:80.50px;top:270.07px;width:2.00px;height:1.80px;background:#8e8e8e;border-radius:0.5px"></div>
<div class="a" style="left:85.40px;top:269.48px;width:4.60px;height:3.00px;background:#313336;"></div>
<div class="a t" style="left:86.50px;top:271px;font-size:2.8px;color:#e0e0e0;font-weight:bold">R</div>
<div class="a" style="left:91.60px;top:269.48px;width:4.60px;height:3.00px;background:#313336;"></div>
<div class="a t" style="left:92.70px;top:271px;font-size:2.8px;color:#e0e0e0;font-weight:bold">W</div>
<div class="a" style="left:97.80px;top:269.48px;width:4.60px;height:3.00px;background:#313336;"></div>
<div class="a" style="left:99.10px;top:270.07px;width:2.00px;height:1.80px;background:#8e8e8e;border-radius:0.5px"></div>
<svg class="a" style="left:104.6px;top:264.48px" width="3" height="2.5"><path d="M0,2.3 L2.8,0.2 L2.8,2.3Z" fill="#bdbdbd"/></svg>
<div class="a" style="left:109.20px;top:265.18px;width:17.70px;height:0.80px;background:#3e4044;border-radius:0.4px"></div>
<div class="a" style="left:109.20px;top:265.18px;width:7.80px;height:0.80px;background:#dedede;"></div>
<div class="a" style="left:115.70px;top:264.27px;width:2.60px;height:2.60px;background:#f4f4f4;border-radius:50%"></div>
<div class="a" style="left:45.00px;top:273.65px;width:86.00px;height:11.20px;background:#494b4f;"></div>
<div class="a" style="left:45.00px;top:273.35px;width:86.00px;height:0.70px;background:#1b1c1f;"></div>
<div class="a" style="left:31.80px;top:273.35px;width:13.20px;height:11.67px;background:#38d4d4;"></div>
<div class="a" style="left:34.50px;top:273.65px;width:10.50px;height:11.17px;background:#38d4d4;border-left:0.6px solid rgba(0,0,0,0.22);border-top:0.7px solid rgba(0,0,0,0.2)"></div>
<svg class="a" style="left:35.80px;top:275.55px" width="5" height="4"><path d="M0,3.4 C0.2,2 1,1.5 1.5,1.3 C1.7,0.5 2,0.2 2.2,0.2 C2.4,0.2 2.7,0.5 2.9,1.3 C3.4,1.5 4.2,2 4.4,3.4Z" fill="#0a0a0a"/></svg>
<div class="a t" style="left:40.80px;top:277px;font-size:2.8px;color:rgba(0,0,0,0.32);">30</div>
<div class="a" style="left:47.30px;top:275.15px;width:4.40px;height:3.40px;background:#55575b;"></div>
<div class="a t" style="left:48.20px;top:276px;font-size:3px;color:#e8e8e8;font-weight:bold">M</div>
<div class="a" style="left:53.60px;top:275.15px;width:3.40px;height:3.40px;background:#55575b;"></div>
<div class="a t" style="left:54.40px;top:276px;font-size:3px;color:#e8e8e8;font-weight:bold">S</div>
<div class="a t" style="left:61.00px;top:276px;font-size:4.4px;color:#eceef2;transform:scaleX(0.72);transform-origin:0 0">GTR Accent Lead R</div>
<div class="a" style="left:60.60px;top:280.95px;width:4.60px;height:3.00px;background:#505256;"></div>
<div class="a" style="left:61.90px;top:281.55px;width:2.00px;height:1.80px;background:#8e8e8e;border-radius:0.5px"></div>
<div class="a" style="left:66.80px;top:280.95px;width:4.60px;height:3.00px;background:#505256;"></div>
<div class="a" style="left:68.10px;top:281.55px;width:2.00px;height:1.80px;background:#8e8e8e;border-radius:0.5px"></div>
<div class="a" style="left:73.00px;top:280.95px;width:4.60px;height:3.00px;background:#505256;"></div>
<div class="a" style="left:74.30px;top:281.55px;width:2.00px;height:1.80px;background:#8e8e8e;border-radius:0.5px"></div>
<div class="a" style="left:79.20px;top:280.95px;width:4.60px;height:3.00px;background:#505256;"></div>
<div class="a" style="left:80.50px;top:281.55px;width:2.00px;height:1.80px;background:#8e8e8e;border-radius:0.5px"></div>
<div class="a" style="left:85.40px;top:280.95px;width:4.60px;height:3.00px;background:#505256;"></div>
<div class="a t" style="left:86.50px;top:282px;font-size:2.8px;color:#e0e0e0;font-weight:bold">R</div>
<div class="a" style="left:91.60px;top:280.95px;width:4.60px;height:3.00px;background:#505256;"></div>
<div class="a t" style="left:92.70px;top:282px;font-size:2.8px;color:#e0e0e0;font-weight:bold">W</div>
<div class="a" style="left:97.80px;top:280.95px;width:4.60px;height:3.00px;background:#505256;"></div>
<div class="a" style="left:99.10px;top:281.55px;width:2.00px;height:1.80px;background:#8e8e8e;border-radius:0.5px"></div>
<svg class="a" style="left:104.6px;top:275.95px" width="3" height="2.5"><path d="M0,2.3 L2.8,0.2 L2.8,2.3Z" fill="#bdbdbd"/></svg>
<div class="a" style="left:109.20px;top:276.65px;width:17.70px;height:0.80px;background:#3e4044;border-radius:0.4px"></div>
<div class="a" style="left:109.20px;top:276.65px;width:8.60px;height:0.80px;background:#dedede;"></div>
<div class="a" style="left:116.50px;top:275.75px;width:2.60px;height:2.60px;background:#f4f4f4;border-radius:50%"></div>
<div class="a" style="left:45.00px;top:284.82px;width:86.00px;height:0.70px;background:#1b1c1f;"></div>
<div class="a" style="left:31.80px;top:284.82px;width:13.20px;height:11.67px;background:#38d4d4;"></div>
<div class="a" style="left:34.50px;top:285.12px;width:10.50px;height:11.17px;background:#38d4d4;border-left:0.6px solid rgba(0,0,0,0.22);border-top:0.7px solid rgba(0,0,0,0.2)"></div>
<svg class="a" style="left:35.80px;top:287.02px" width="5" height="4"><path d="M0,3.4 C0.2,2 1,1.5 1.5,1.3 C1.7,0.5 2,0.2 2.2,0.2 C2.4,0.2 2.7,0.5 2.9,1.3 C3.4,1.5 4.2,2 4.4,3.4Z" fill="#0a0a0a"/></svg>
<div class="a t" style="left:40.80px;top:288px;font-size:2.8px;color:rgba(0,0,0,0.32);">31</div>
<div class="a" style="left:47.30px;top:286.62px;width:4.40px;height:3.40px;background:#2f3134;"></div>
<div class="a t" style="left:48.20px;top:288px;font-size:3px;color:#e8e8e8;font-weight:bold">M</div>
<div class="a" style="left:53.60px;top:286.62px;width:3.40px;height:3.40px;background:#2f3134;"></div>
<div class="a t" style="left:54.40px;top:288px;font-size:3px;color:#e8e8e8;font-weight:bold">S</div>
<div class="a t" style="left:61.00px;top:287px;font-size:4.4px;color:#eceef2;transform:scaleX(0.72);transform-origin:0 0">GTR Verse Strums L</div>
<div class="a" style="left:60.60px;top:292.43px;width:4.60px;height:3.00px;background:#313336;"></div>
<div class="a" style="left:61.90px;top:293.02px;width:2.00px;height:1.80px;background:#8e8e8e;border-radius:0.5px"></div>
<div class="a" style="left:66.80px;top:292.43px;width:4.60px;height:3.00px;background:#313336;"></div>
<div class="a" style="left:68.10px;top:293.02px;width:2.00px;height:1.80px;background:#8e8e8e;border-radius:0.5px"></div>
<div class="a" style="left:73.00px;top:292.43px;width:4.60px;height:3.00px;background:#313336;"></div>
<div class="a" style="left:74.30px;top:293.02px;width:2.00px;height:1.80px;background:#8e8e8e;border-radius:0.5px"></div>
<div class="a" style="left:79.20px;top:292.43px;width:4.60px;height:3.00px;background:#313336;"></div>
<div class="a" style="left:80.50px;top:293.02px;width:2.00px;height:1.80px;background:#8e8e8e;border-radius:0.5px"></div>
<div class="a" style="left:85.40px;top:292.43px;width:4.60px;height:3.00px;background:#313336;"></div>
<div class="a t" style="left:86.50px;top:294px;font-size:2.8px;color:#e0e0e0;font-weight:bold">R</div>
<div class="a" style="left:91.60px;top:292.43px;width:4.60px;height:3.00px;background:#313336;"></div>
<div class="a t" style="left:92.70px;top:294px;font-size:2.8px;color:#e0e0e0;font-weight:bold">W</div>
<div class="a" style="left:97.80px;top:292.43px;width:4.60px;height:3.00px;background:#313336;"></div>
<div class="a" style="left:99.10px;top:293.02px;width:2.00px;height:1.80px;background:#8e8e8e;border-radius:0.5px"></div>
<svg class="a" style="left:104.6px;top:287.43px" width="3" height="2.5"><path d="M0,2.3 L2.8,0.2 L2.8,2.3Z" fill="#bdbdbd"/></svg>
<div class="a" style="left:109.20px;top:288.12px;width:17.70px;height:0.80px;background:#3e4044;border-radius:0.4px"></div>
<div class="a" style="left:109.20px;top:288.12px;width:13.30px;height:0.80px;background:#dedede;"></div>
<div class="a" style="left:121.20px;top:287.22px;width:2.60px;height:2.60px;background:#f4f4f4;border-radius:50%"></div>
<div class="a" style="left:45.00px;top:296.30px;width:86.00px;height:0.70px;background:#1b1c1f;"></div>
<div class="a" style="left:31.80px;top:296.30px;width:13.20px;height:11.67px;background:#38d4d4;"></div>
<div class="a" style="left:34.50px;top:296.60px;width:10.50px;height:11.17px;background:#38d4d4;border-left:0.6px solid rgba(0,0,0,0.22);border-top:0.7px solid rgba(0,0,0,0.2)"></div>
<svg class="a" style="left:35.80px;top:298.50px" width="5" height="4"><path d="M0,3.4 C0.2,2 1,1.5 1.5,1.3 C1.7,0.5 2,0.2 2.2,0.2 C2.4,0.2 2.7,0.5 2.9,1.3 C3.4,1.5 4.2,2 4.4,3.4Z" fill="#0a0a0a"/></svg>
<div class="a t" style="left:40.80px;top:300px;font-size:2.8px;color:rgba(0,0,0,0.32);">32</div>
<div class="a" style="left:47.30px;top:298.10px;width:4.40px;height:3.40px;background:#2f3134;"></div>
<div class="a t" style="left:48.20px;top:299px;font-size:3px;color:#e8e8e8;font-weight:bold">M</div>
<div class="a" style="left:53.60px;top:298.10px;width:3.40px;height:3.40px;background:#2f3134;"></div>
<div class="a t" style="left:54.40px;top:299px;font-size:3px;color:#e8e8e8;font-weight:bold">S</div>
<div class="a t" style="left:61.00px;top:299px;font-size:4.4px;color:#eceef2;transform:scaleX(0.72);transform-origin:0 0">GTR Verse Strums R</div>
<div class="a" style="left:60.60px;top:303.90px;width:4.60px;height:3.00px;background:#313336;"></div>
<div class="a" style="left:61.90px;top:304.50px;width:2.00px;height:1.80px;background:#8e8e8e;border-radius:0.5px"></div>
<div class="a" style="left:66.80px;top:303.90px;width:4.60px;height:3.00px;background:#313336;"></div>
<div class="a" style="left:68.10px;top:304.50px;width:2.00px;height:1.80px;background:#8e8e8e;border-radius:0.5px"></div>
<div class="a" style="left:73.00px;top:303.90px;width:4.60px;height:3.00px;background:#313336;"></div>
<div class="a" style="left:74.30px;top:304.50px;width:2.00px;height:1.80px;background:#8e8e8e;border-radius:0.5px"></div>
<div class="a" style="left:79.20px;top:303.90px;width:4.60px;height:3.00px;background:#313336;"></div>
<div class="a" style="left:80.50px;top:304.50px;width:2.00px;height:1.80px;background:#8e8e8e;border-radius:0.5px"></div>
<div class="a" style="left:85.40px;top:303.90px;width:4.60px;height:3.00px;background:#313336;"></div>
<div class="a t" style="left:86.50px;top:305px;font-size:2.8px;color:#e0e0e0;font-weight:bold">R</div>
<div class="a" style="left:91.60px;top:303.90px;width:4.60px;height:3.00px;background:#313336;"></div>
<div class="a t" style="left:92.70px;top:305px;font-size:2.8px;color:#e0e0e0;font-weight:bold">W</div>
<div class="a" style="left:97.80px;top:303.90px;width:4.60px;height:3.00px;background:#313336;"></div>
<div class="a" style="left:99.10px;top:304.50px;width:2.00px;height:1.80px;background:#8e8e8e;border-radius:0.5px"></div>
<svg class="a" style="left:104.6px;top:298.90px" width="3" height="2.5"><path d="M0,2.3 L2.8,0.2 L2.8,2.3Z" fill="#bdbdbd"/></svg>
<div class="a" style="left:109.20px;top:299.60px;width:17.70px;height:0.80px;background:#3e4044;border-radius:0.4px"></div>
<div class="a" style="left:109.20px;top:299.60px;width:13.30px;height:0.80px;background:#dedede;"></div>
<div class="a" style="left:121.20px;top:298.70px;width:2.60px;height:2.60px;background:#f4f4f4;border-radius:50%"></div>
<div class="a" style="left:45.00px;top:307.77px;width:86.00px;height:0.70px;background:#1b1c1f;"></div>
<div class="a" style="left:31.80px;top:307.77px;width:13.20px;height:11.67px;background:#38d4d4;"></div>
<div class="a" style="left:34.50px;top:308.07px;width:10.50px;height:11.17px;background:#38d4d4;border-left:0.6px solid rgba(0,0,0,0.22);border-top:0.7px solid rgba(0,0,0,0.2)"></div>
<svg class="a" style="left:35.80px;top:309.97px" width="5" height="4"><path d="M0,3.4 C0.2,2 1,1.5 1.5,1.3 C1.7,0.5 2,0.2 2.2,0.2 C2.4,0.2 2.7,0.5 2.9,1.3 C3.4,1.5 4.2,2 4.4,3.4Z" fill="#0a0a0a"/></svg>
<div class="a t" style="left:40.80px;top:311px;font-size:2.8px;color:rgba(0,0,0,0.32);">33</div>
<div class="a" style="left:47.30px;top:309.57px;width:4.40px;height:3.40px;background:#2f3134;"></div>
<div class="a t" style="left:48.20px;top:311px;font-size:3px;color:#e8e8e8;font-weight:bold">M</div>
<div class="a" style="left:53.60px;top:309.57px;width:3.40px;height:3.40px;background:#2f3134;"></div>
<div class="a t" style="left:54.40px;top:311px;font-size:3px;color:#e8e8e8;font-weight:bold">S</div>
<div class="a t" style="left:61.00px;top:310px;font-size:4.4px;color:#eceef2;transform:scaleX(0.72);transform-origin:0 0">GTR Modulation Hits L</div>
<div class="a" style="left:60.60px;top:315.38px;width:4.60px;height:3.00px;background:#313336;"></div>
<div class="a" style="left:61.90px;top:315.97px;width:2.00px;height:1.80px;background:#8e8e8e;border-radius:0.5px"></div>
<div class="a" style="left:66.80px;top:315.38px;width:4.60px;height:3.00px;background:#313336;"></div>
<div class="a" style="left:68.10px;top:315.97px;width:2.00px;height:1.80px;background:#8e8e8e;border-radius:0.5px"></div>
<div class="a" style="left:73.00px;top:315.38px;width:4.60px;height:3.00px;background:#313336;"></div>
<div class="a" style="left:74.30px;top:315.97px;width:2.00px;height:1.80px;background:#8e8e8e;border-radius:0.5px"></div>
<div class="a" style="left:79.20px;top:315.38px;width:4.60px;height:3.00px;background:#313336;"></div>
<div class="a" style="left:80.50px;top:315.97px;width:2.00px;height:1.80px;background:#8e8e8e;border-radius:0.5px"></div>
<div class="a" style="left:85.40px;top:315.38px;width:4.60px;height:3.00px;background:#313336;"></div>
<div class="a t" style="left:86.50px;top:317px;font-size:2.8px;color:#e0e0e0;font-weight:bold">R</div>
<div class="a" style="left:91.60px;top:315.38px;width:4.60px;height:3.00px;background:#313336;"></div>
<div class="a t" style="left:92.70px;top:317px;font-size:2.8px;color:#e0e0e0;font-weight:bold">W</div>
<div class="a" style="left:97.80px;top:315.38px;width:4.60px;height:3.00px;background:#313336;"></div>
<div class="a" style="left:99.10px;top:315.97px;width:2.00px;height:1.80px;background:#8e8e8e;border-radius:0.5px"></div>
<svg class="a" style="left:104.6px;top:310.38px" width="3" height="2.5"><path d="M0,2.3 L2.8,0.2 L2.8,2.3Z" fill="#bdbdbd"/></svg>
<div class="a" style="left:109.20px;top:311.07px;width:17.70px;height:0.80px;background:#3e4044;border-radius:0.4px"></div>
<div class="a" style="left:109.20px;top:311.07px;width:7.40px;height:0.80px;background:#dedede;"></div>
<div class="a" style="left:115.30px;top:310.17px;width:2.60px;height:2.60px;background:#f4f4f4;border-radius:50%"></div>
<div class="a" style="left:45.00px;top:319.25px;width:86.00px;height:0.70px;background:#1b1c1f;"></div>
<div class="a" style="left:31.80px;top:319.25px;width:13.20px;height:11.67px;background:#38d4d4;"></div>
<div class="a" style="left:34.50px;top:319.55px;width:10.50px;height:11.17px;background:#38d4d4;border-left:0.6px solid rgba(0,0,0,0.22);border-top:0.7px solid rgba(0,0,0,0.2)"></div>
<svg class="a" style="left:35.80px;top:321.45px" width="5" height="4"><path d="M0,3.4 C0.2,2 1,1.5 1.5,1.3 C1.7,0.5 2,0.2 2.2,0.2 C2.4,0.2 2.7,0.5 2.9,1.3 C3.4,1.5 4.2,2 4.4,3.4Z" fill="#0a0a0a"/></svg>
<div class="a t" style="left:40.80px;top:323px;font-size:2.8px;color:rgba(0,0,0,0.32);">34</div>
<div class="a" style="left:47.30px;top:321.05px;width:4.40px;height:3.40px;background:#2f3134;"></div>
<div class="a t" style="left:48.20px;top:322px;font-size:3px;color:#e8e8e8;font-weight:bold">M</div>
<div class="a" style="left:53.60px;top:321.05px;width:3.40px;height:3.40px;background:#2f3134;"></div>
<div class="a t" style="left:54.40px;top:322px;font-size:3px;color:#e8e8e8;font-weight:bold">S</div>
<div class="a t" style="left:61.00px;top:322px;font-size:4.4px;color:#eceef2;transform:scaleX(0.72);transform-origin:0 0">GTR Modulation Hits R</div>
<div class="a" style="left:60.60px;top:326.85px;width:4.60px;height:3.00px;background:#313336;"></div>
<div class="a" style="left:61.90px;top:327.45px;width:2.00px;height:1.80px;background:#8e8e8e;border-radius:0.5px"></div>
<div class="a" style="left:66.80px;top:326.85px;width:4.60px;height:3.00px;background:#313336;"></div>
<div class="a" style="left:68.10px;top:327.45px;width:2.00px;height:1.80px;background:#8e8e8e;border-radius:0.5px"></div>
<div class="a" style="left:73.00px;top:326.85px;width:4.60px;height:3.00px;background:#313336;"></div>
<div class="a" style="left:74.30px;top:327.45px;width:2.00px;height:1.80px;background:#8e8e8e;border-radius:0.5px"></div>
<div class="a" style="left:79.20px;top:326.85px;width:4.60px;height:3.00px;background:#313336;"></div>
<div class="a" style="left:80.50px;top:327.45px;width:2.00px;height:1.80px;background:#8e8e8e;border-radius:0.5px"></div>
<div class="a" style="left:85.40px;top:326.85px;width:4.60px;height:3.00px;background:#313336;"></div>
<div class="a t" style="left:86.50px;top:328px;font-size:2.8px;color:#e0e0e0;font-weight:bold">R</div>
<div class="a" style="left:91.60px;top:326.85px;width:4.60px;height:3.00px;background:#313336;"></div>
<div class="a t" style="left:92.70px;top:328px;font-size:2.8px;color:#e0e0e0;font-weight:bold">W</div>
<div class="a" style="left:97.80px;top:326.85px;width:4.60px;height:3.00px;background:#313336;"></div>
<div class="a" style="left:99.10px;top:327.45px;width:2.00px;height:1.80px;background:#8e8e8e;border-radius:0.5px"></div>
<svg class="a" style="left:104.6px;top:321.85px" width="3" height="2.5"><path d="M0,2.3 L2.8,0.2 L2.8,2.3Z" fill="#bdbdbd"/></svg>
<div class="a" style="left:109.20px;top:322.55px;width:17.70px;height:0.80px;background:#3e4044;border-radius:0.4px"></div>
<div class="a" style="left:109.20px;top:322.55px;width:5.50px;height:0.80px;background:#dedede;"></div>
<div class="a" style="left:113.40px;top:321.65px;width:2.60px;height:2.60px;background:#f4f4f4;border-radius:50%"></div>
<div class="a" style="left:45.00px;top:330.72px;width:86.00px;height:0.70px;background:#1b1c1f;"></div>
<div class="a" style="left:31.80px;top:330.72px;width:13.20px;height:11.67px;background:#38d4d4;"></div>
<div class="a" style="left:34.50px;top:331.02px;width:10.50px;height:11.17px;background:#38d4d4;border-left:0.6px solid rgba(0,0,0,0.22);border-top:0.7px solid rgba(0,0,0,0.2)"></div>
<svg class="a" style="left:35.80px;top:332.92px" width="5" height="4"><path d="M0,3.4 C0.2,2 1,1.5 1.5,1.3 C1.7,0.5 2,0.2 2.2,0.2 C2.4,0.2 2.7,0.5 2.9,1.3 C3.4,1.5 4.2,2 4.4,3.4Z" fill="#0a0a0a"/></svg>
<div class="a t" style="left:40.80px;top:334px;font-size:2.8px;color:rgba(0,0,0,0.32);">35</div>
<div class="a" style="left:47.30px;top:332.52px;width:4.40px;height:3.40px;background:#2f3134;"></div>
<div class="a t" style="left:48.20px;top:334px;font-size:3px;color:#e8e8e8;font-weight:bold">M</div>
<div class="a" style="left:53.60px;top:332.52px;width:3.40px;height:3.40px;background:#2f3134;"></div>
<div class="a t" style="left:54.40px;top:334px;font-size:3px;color:#e8e8e8;font-weight:bold">S</div>
<div class="a t" style="left:61.00px;top:333px;font-size:4.4px;color:#eceef2;transform:scaleX(0.72);transform-origin:0 0">GTR Verse Chorus...ar</div>
<div class="a" style="left:60.60px;top:338.32px;width:4.60px;height:3.00px;background:#313336;"></div>
<div class="a" style="left:61.90px;top:338.92px;width:2.00px;height:1.80px;background:#8e8e8e;border-radius:0.5px"></div>
<div class="a" style="left:66.80px;top:338.32px;width:4.60px;height:3.00px;background:#313336;"></div>
<div class="a" style="left:68.10px;top:338.92px;width:2.00px;height:1.80px;background:#8e8e8e;border-radius:0.5px"></div>
<div class="a" style="left:73.00px;top:338.32px;width:4.60px;height:3.00px;background:#313336;"></div>
<div class="a" style="left:74.30px;top:338.92px;width:2.00px;height:1.80px;background:#8e8e8e;border-radius:0.5px"></div>
<div class="a" style="left:79.20px;top:338.32px;width:4.60px;height:3.00px;background:#313336;"></div>
<div class="a" style="left:80.50px;top:338.92px;width:2.00px;height:1.80px;background:#8e8e8e;border-radius:0.5px"></div>
<div class="a" style="left:85.40px;top:338.32px;width:4.60px;height:3.00px;background:#313336;"></div>
<div class="a t" style="left:86.50px;top:340px;font-size:2.8px;color:#e0e0e0;font-weight:bold">R</div>
<div class="a" style="left:91.60px;top:338.32px;width:4.60px;height:3.00px;background:#313336;"></div>
<div class="a t" style="left:92.70px;top:340px;font-size:2.8px;color:#e0e0e0;font-weight:bold">W</div>
<div class="a" style="left:97.80px;top:338.32px;width:4.60px;height:3.00px;background:#313336;"></div>
<div class="a" style="left:99.10px;top:338.92px;width:2.00px;height:1.80px;background:#8e8e8e;border-radius:0.5px"></div>
<svg class="a" style="left:104.6px;top:333.32px" width="3" height="2.5"><path d="M0,2.3 L2.8,0.2 L2.8,2.3Z" fill="#bdbdbd"/></svg>
<div class="a" style="left:109.20px;top:334.02px;width:17.70px;height:0.80px;background:#3e4044;border-radius:0.4px"></div>
<div class="a" style="left:109.20px;top:334.02px;width:9.30px;height:0.80px;background:#dedede;"></div>
<div class="a" style="left:117.20px;top:333.12px;width:2.60px;height:2.60px;background:#f4f4f4;border-radius:50%"></div>
<div class="a" style="left:45.00px;top:342.20px;width:86.00px;height:0.70px;background:#1b1c1f;"></div>
<div class="a" style="left:31.80px;top:342.20px;width:13.20px;height:11.67px;background:#38d4d4;"></div>
<div class="a" style="left:34.50px;top:342.50px;width:10.50px;height:11.17px;background:#38d4d4;border-left:0.6px solid rgba(0,0,0,0.22);border-top:0.7px solid rgba(0,0,0,0.2)"></div>
<svg class="a" style="left:35.80px;top:344.40px" width="5" height="4"><path d="M0,3.4 C0.2,2 1,1.5 1.5,1.3 C1.7,0.5 2,0.2 2.2,0.2 C2.4,0.2 2.7,0.5 2.9,1.3 C3.4,1.5 4.2,2 4.4,3.4Z" fill="#0a0a0a"/></svg>
<div class="a t" style="left:40.80px;top:346px;font-size:2.8px;color:rgba(0,0,0,0.32);">36</div>
<div class="a" style="left:47.30px;top:344.00px;width:4.40px;height:3.40px;background:#2f3134;"></div>
<div class="a t" style="left:48.20px;top:345px;font-size:3px;color:#e8e8e8;font-weight:bold">M</div>
<div class="a" style="left:53.60px;top:344.00px;width:3.40px;height:3.40px;background:#2f3134;"></div>
<div class="a t" style="left:54.40px;top:345px;font-size:3px;color:#e8e8e8;font-weight:bold">S</div>
<div class="a t" style="left:61.00px;top:345px;font-size:4.4px;color:#eceef2;transform:scaleX(0.72);transform-origin:0 0">GTR Prechorus Chords</div>
<div class="a" style="left:60.60px;top:349.80px;width:4.60px;height:3.00px;background:#313336;"></div>
<div class="a" style="left:61.90px;top:350.40px;width:2.00px;height:1.80px;background:#8e8e8e;border-radius:0.5px"></div>
<div class="a" style="left:66.80px;top:349.80px;width:4.60px;height:3.00px;background:#313336;"></div>
<div class="a" style="left:68.10px;top:350.40px;width:2.00px;height:1.80px;background:#8e8e8e;border-radius:0.5px"></div>
<div class="a" style="left:73.00px;top:349.80px;width:4.60px;height:3.00px;background:#313336;"></div>
<div class="a" style="left:74.30px;top:350.40px;width:2.00px;height:1.80px;background:#8e8e8e;border-radius:0.5px"></div>
<div class="a" style="left:79.20px;top:349.80px;width:4.60px;height:3.00px;background:#313336;"></div>
<div class="a" style="left:80.50px;top:350.40px;width:2.00px;height:1.80px;background:#8e8e8e;border-radius:0.5px"></div>
<div class="a" style="left:85.40px;top:349.80px;width:4.60px;height:3.00px;background:#313336;"></div>
<div class="a t" style="left:86.50px;top:351px;font-size:2.8px;color:#e0e0e0;font-weight:bold">R</div>
<div class="a" style="left:91.60px;top:349.80px;width:4.60px;height:3.00px;background:#313336;"></div>
<div class="a t" style="left:92.70px;top:351px;font-size:2.8px;color:#e0e0e0;font-weight:bold">W</div>
<div class="a" style="left:97.80px;top:349.80px;width:4.60px;height:3.00px;background:#313336;"></div>
<div class="a" style="left:99.10px;top:350.40px;width:2.00px;height:1.80px;background:#8e8e8e;border-radius:0.5px"></div>
<svg class="a" style="left:104.6px;top:344.80px" width="3" height="2.5"><path d="M0,2.3 L2.8,0.2 L2.8,2.3Z" fill="#bdbdbd"/></svg>
<div class="a" style="left:109.20px;top:345.50px;width:17.70px;height:0.80px;background:#3e4044;border-radius:0.4px"></div>
<div class="a" style="left:109.20px;top:345.50px;width:12.60px;height:0.80px;background:#dedede;"></div>
<div class="a" style="left:120.50px;top:344.60px;width:2.60px;height:2.60px;background:#f4f4f4;border-radius:50%"></div>
<div class="a" style="left:45.00px;top:353.67px;width:86.00px;height:0.70px;background:#1b1c1f;"></div>
<div class="a" style="left:31.80px;top:353.67px;width:13.20px;height:11.67px;background:#38d4d4;"></div>
<div class="a" style="left:34.50px;top:353.97px;width:10.50px;height:11.17px;background:#38d4d4;border-left:0.6px solid rgba(0,0,0,0.22);border-top:0.7px solid rgba(0,0,0,0.2)"></div>
<svg class="a" style="left:35.80px;top:355.87px" width="5" height="4"><path d="M0,3.4 C0.2,2 1,1.5 1.5,1.3 C1.7,0.5 2,0.2 2.2,0.2 C2.4,0.2 2.7,0.5 2.9,1.3 C3.4,1.5 4.2,2 4.4,3.4Z" fill="#0a0a0a"/></svg>
<div class="a t" style="left:40.80px;top:357px;font-size:2.8px;color:rgba(0,0,0,0.32);">37</div>
<div class="a" style="left:47.30px;top:355.47px;width:4.40px;height:3.40px;background:#2f3134;"></div>
<div class="a t" style="left:48.20px;top:357px;font-size:3px;color:#e8e8e8;font-weight:bold">M</div>
<div class="a" style="left:53.60px;top:355.47px;width:3.40px;height:3.40px;background:#2f3134;"></div>
<div class="a t" style="left:54.40px;top:357px;font-size:3px;color:#e8e8e8;font-weight:bold">S</div>
<div class="a t" style="left:61.00px;top:356px;font-size:4.4px;color:#eceef2;transform:scaleX(0.72);transform-origin:0 0">GTR Prechorus Crunch</div>
<div class="a" style="left:60.60px;top:361.27px;width:4.60px;height:3.00px;background:#313336;"></div>
<div class="a" style="left:61.90px;top:361.87px;width:2.00px;height:1.80px;background:#8e8e8e;border-radius:0.5px"></div>
<div class="a" style="left:66.80px;top:361.27px;width:4.60px;height:3.00px;background:#313336;"></div>
<div class="a" style="left:68.10px;top:361.87px;width:2.00px;height:1.80px;background:#8e8e8e;border-radius:0.5px"></div>
<div class="a" style="left:73.00px;top:361.27px;width:4.60px;height:3.00px;background:#313336;"></div>
<div class="a" style="left:74.30px;top:361.87px;width:2.00px;height:1.80px;background:#8e8e8e;border-radius:0.5px"></div>
<div class="a" style="left:79.20px;top:361.27px;width:4.60px;height:3.00px;background:#313336;"></div>
<div class="a" style="left:80.50px;top:361.87px;width:2.00px;height:1.80px;background:#8e8e8e;border-radius:0.5px"></div>
<div class="a" style="left:85.40px;top:361.27px;width:4.60px;height:3.00px;background:#313336;"></div>
<div class="a t" style="left:86.50px;top:363px;font-size:2.8px;color:#e0e0e0;font-weight:bold">R</div>
<div class="a" style="left:91.60px;top:361.27px;width:4.60px;height:3.00px;background:#313336;"></div>
<div class="a t" style="left:92.70px;top:363px;font-size:2.8px;color:#e0e0e0;font-weight:bold">W</div>
<div class="a" style="left:97.80px;top:361.27px;width:4.60px;height:3.00px;background:#313336;"></div>
<div class="a" style="left:99.10px;top:361.87px;width:2.00px;height:1.80px;background:#8e8e8e;border-radius:0.5px"></div>
<svg class="a" style="left:104.6px;top:356.27px" width="3" height="2.5"><path d="M0,2.3 L2.8,0.2 L2.8,2.3Z" fill="#bdbdbd"/></svg>
<div class="a" style="left:109.20px;top:356.97px;width:17.70px;height:0.80px;background:#3e4044;border-radius:0.4px"></div>
<div class="a" style="left:109.20px;top:356.97px;width:7.40px;height:0.80px;background:#dedede;"></div>
<div class="a" style="left:115.30px;top:356.07px;width:2.60px;height:2.60px;background:#f4f4f4;border-radius:50%"></div>
<div class="a" style="left:45.00px;top:365.15px;width:86.00px;height:0.70px;background:#1b1c1f;"></div>
<div class="a" style="left:31.80px;top:365.15px;width:10.40px;height:11.67px;background:#3aa2ea;"></div>
<svg class="a" style="left:33px;top:367.15px" width="5" height="4"><path d="M0,0.3 h1.8 l0.6,0.6 h2.2 v2.6 h-4.6z" fill="#0a0a0a"/></svg>
<div class="a" style="left:42.20px;top:365.15px;width:2.80px;height:11.67px;background:#242629;"></div>
<div class="a" style="left:45.60px;top:366.95px;width:4.40px;height:3.40px;background:#2f3134;"></div>
<div class="a t" style="left:46.50px;top:368px;font-size:3px;color:#e8e8e8;font-weight:bold">M</div>
<div class="a" style="left:51.90px;top:366.95px;width:3.40px;height:3.40px;background:#2f3134;"></div>
<div class="a t" style="left:52.70px;top:368px;font-size:3px;color:#e8e8e8;font-weight:bold">S</div>
<div class="a t" style="left:58.20px;top:368px;font-size:4.4px;color:#eceef2;transform:scaleX(0.72);transform-origin:0 0">Synths</div>
<div class="a" style="left:58.00px;top:372.75px;width:4.60px;height:3.00px;background:#313336;"></div>
<div class="a" style="left:59.30px;top:373.35px;width:2.00px;height:1.80px;background:#9a9a9a;"></div>
<div class="a" style="left:64.20px;top:372.75px;width:4.60px;height:3.00px;background:#313336;"></div>
<div class="a" style="left:65.50px;top:373.35px;width:2.00px;height:1.80px;background:#9a9a9a;"></div>
<div class="a" style="left:70.40px;top:372.75px;width:4.60px;height:3.00px;background:#313336;"></div>
<div class="a" style="left:71.70px;top:373.35px;width:2.00px;height:1.80px;background:#9a9a9a;"></div>
<div class="a" style="left:76.60px;top:372.75px;width:4.60px;height:3.00px;background:#313336;"></div>
<div class="a" style="left:77.90px;top:373.35px;width:2.00px;height:1.80px;background:#9a9a9a;"></div>
<div class="a" style="left:45.00px;top:376.62px;width:86.00px;height:0.70px;background:#1b1c1f;"></div>
<div class="a" style="left:31.80px;top:376.62px;width:13.20px;height:11.67px;background:#3aa2ea;"></div>
<div class="a" style="left:34.50px;top:376.92px;width:10.50px;height:11.17px;background:#3aa2ea;border-left:0.6px solid rgba(0,0,0,0.22);border-top:0.7px solid rgba(0,0,0,0.2)"></div>
<svg class="a" style="left:35.80px;top:378.82px" width="4" height="4"><path d="M0.4,0.4 h3 v1.6 q0,1.4 -1.5,1.8 q-1.5,-0.4 -1.5,-1.8z" fill="none" stroke="#121212" stroke-width="0.7"/></svg>
<div class="a t" style="left:40.80px;top:380px;font-size:2.8px;color:rgba(0,0,0,0.32);">38</div>
<div class="a" style="left:47.30px;top:378.42px;width:4.40px;height:3.40px;background:#2f3134;"></div>
<div class="a t" style="left:48.20px;top:380px;font-size:3px;color:#e8e8e8;font-weight:bold">M</div>
<div class="a" style="left:53.60px;top:378.42px;width:3.40px;height:3.40px;background:#2f3134;"></div>
<div class="a t" style="left:54.40px;top:380px;font-size:3px;color:#e8e8e8;font-weight:bold">S</div>
<div class="a t" style="left:61.00px;top:379px;font-size:4.4px;color:#eceef2;transform:scaleX(0.72);transform-origin:0 0">GROUP Synths and Keys</div>
<div class="a" style="left:60.60px;top:384.22px;width:4.60px;height:3.00px;background:#313336;"></div>
<div class="a t" style="left:61.70px;top:386px;font-size:2.8px;color:#e0e0e0;font-weight:bold">R</div>
<div class="a" style="left:66.80px;top:384.22px;width:4.60px;height:3.00px;background:#313336;"></div>
<div class="a t" style="left:67.90px;top:386px;font-size:2.8px;color:#e0e0e0;font-weight:bold">W</div>
<div class="a" style="left:73.00px;top:384.22px;width:4.60px;height:3.00px;background:#313336;"></div>
<div class="a" style="left:74.30px;top:384.82px;width:2.00px;height:1.80px;background:#8e8e8e;border-radius:0.5px"></div>
<div class="a" style="left:79.20px;top:384.22px;width:4.60px;height:3.00px;background:#313336;"></div>
<div class="a" style="left:80.50px;top:384.82px;width:2.00px;height:1.80px;background:#8e8e8e;border-radius:0.5px"></div>
<div class="a t" style="left:91.50px;top:386px;font-size:2.8px;color:#9a9a9a;">0.00</div>
<div class="a" style="left:99.50px;top:384.42px;width:1.40px;height:3.60px;background:#44464a;"></div>
<svg class="a" style="left:104.6px;top:379.22px" width="3" height="2.5"><path d="M0,2.3 L2.8,0.2 L2.8,2.3Z" fill="#bdbdbd"/></svg>
<div class="a" style="left:109.20px;top:379.92px;width:17.70px;height:0.80px;background:#3e4044;border-radius:0.4px"></div>
<div class="a" style="left:109.20px;top:379.92px;width:9.80px;height:0.80px;background:#dedede;"></div>
<div class="a" style="left:117.70px;top:379.02px;width:2.60px;height:2.60px;background:#f4f4f4;border-radius:50%"></div>
<svg class="a" style="left:104.4px;top:384.82px" width="3.4" height="2.5"><path d="M0.2,0.2 V2 H3.2 V0.2" fill="none" stroke="#bdbdbd" stroke-width="0.6"/></svg>
<div class="a" style="left:109.20px;top:385.42px;width:17.70px;height:0.80px;background:#3e4044;border-radius:0.4px"></div>
<div class="a" style="left:116.50px;top:384.52px;width:2.60px;height:2.60px;background:#f4f4f4;border-radius:50%"></div>
<div class="a" style="left:45.00px;top:388.10px;width:86.00px;height:0.70px;background:#1b1c1f;"></div>
<div class="a" style="left:31.80px;top:388.10px;width:13.20px;height:11.67px;background:#3aa2ea;"></div>
<div class="a" style="left:34.50px;top:388.40px;width:10.50px;height:11.17px;background:#3aa2ea;border-left:0.6px solid rgba(0,0,0,0.22);border-top:0.7px solid rgba(0,0,0,0.2)"></div>
<svg class="a" style="left:35.80px;top:390.30px" width="5" height="4"><rect x="0.2" y="0.4" width="4.2" height="3" fill="#141414"/><rect x="1" y="0.4" width="0.5" height="1.6" fill="#888"/><rect x="2.4" y="0.4" width="0.5" height="1.6" fill="#888"/></svg>
<div class="a t" style="left:40.80px;top:391px;font-size:2.8px;color:rgba(0,0,0,0.32);">39</div>
<div class="a" style="left:47.30px;top:389.90px;width:4.40px;height:3.40px;background:#2f3134;"></div>
<div class="a t" style="left:48.20px;top:391px;font-size:3px;color:#e8e8e8;font-weight:bold">M</div>
<div class="a" style="left:53.60px;top:389.90px;width:3.40px;height:3.40px;background:#2f3134;"></div>
<div class="a t" style="left:54.40px;top:391px;font-size:3px;color:#e8e8e8;font-weight:bold">S</div>
<div class="a t" style="left:61.00px;top:391px;font-size:4.4px;color:#eceef2;transform:scaleX(0.72);transform-origin:0 0">SYN Mello Strings</div>
<div class="a" style="left:60.60px;top:395.70px;width:4.60px;height:3.00px;background:#313336;"></div>
<div class="a" style="left:61.90px;top:396.30px;width:2.00px;height:1.80px;background:#8e8e8e;border-radius:0.5px"></div>
<div class="a" style="left:66.80px;top:395.70px;width:4.60px;height:3.00px;background:#313336;"></div>
<div class="a" style="left:68.10px;top:396.30px;width:2.00px;height:1.80px;background:#8e8e8e;border-radius:0.5px"></div>
<div class="a" style="left:73.00px;top:395.70px;width:4.60px;height:3.00px;background:#313336;"></div>
<div class="a" style="left:74.30px;top:396.30px;width:2.00px;height:1.80px;background:#8e8e8e;border-radius:0.5px"></div>
<div class="a" style="left:79.20px;top:395.70px;width:4.60px;height:3.00px;background:#313336;"></div>
<div class="a" style="left:80.50px;top:396.30px;width:2.00px;height:1.80px;background:#8e8e8e;border-radius:0.5px"></div>
<div class="a" style="left:85.40px;top:395.70px;width:4.60px;height:3.00px;background:#313336;"></div>
<div class="a t" style="left:86.50px;top:397px;font-size:2.8px;color:#e0e0e0;font-weight:bold">R</div>
<div class="a" style="left:91.60px;top:395.70px;width:4.60px;height:3.00px;background:#313336;"></div>
<div class="a t" style="left:92.70px;top:397px;font-size:2.8px;color:#e0e0e0;font-weight:bold">W</div>
<div class="a" style="left:97.80px;top:395.70px;width:4.60px;height:3.00px;background:#313336;"></div>
<div class="a" style="left:99.10px;top:396.30px;width:2.00px;height:1.80px;background:#8e8e8e;border-radius:0.5px"></div>
<svg class="a" style="left:104.6px;top:390.70px" width="3" height="2.5"><path d="M0,2.3 L2.8,0.2 L2.8,2.3Z" fill="#bdbdbd"/></svg>
<div class="a" style="left:109.20px;top:391.40px;width:17.70px;height:0.80px;background:#3e4044;border-radius:0.4px"></div>
<div class="a" style="left:109.20px;top:391.40px;width:13.30px;height:0.80px;background:#dedede;"></div>
<div class="a" style="left:121.20px;top:390.50px;width:2.60px;height:2.60px;background:#f4f4f4;border-radius:50%"></div>
<svg class="a" style="left:104.4px;top:396.30px" width="3.4" height="2.5"><path d="M0.2,0.2 V2 H3.2 V0.2" fill="none" stroke="#bdbdbd" stroke-width="0.6"/></svg>
<div class="a" style="left:109.20px;top:396.90px;width:17.70px;height:0.80px;background:#3e4044;border-radius:0.4px"></div>
<div class="a" style="left:116.50px;top:396.00px;width:2.60px;height:2.60px;background:#f4f4f4;border-radius:50%"></div>
<div class="a" style="left:45.00px;top:399.57px;width:86.00px;height:0.70px;background:#1b1c1f;"></div>
<div class="a" style="left:31.80px;top:399.57px;width:13.20px;height:11.67px;background:#3aa2ea;"></div>
<div class="a" style="left:34.50px;top:399.88px;width:10.50px;height:11.17px;background:#3aa2ea;border-left:0.6px solid rgba(0,0,0,0.22);border-top:0.7px solid rgba(0,0,0,0.2)"></div>
<svg class="a" style="left:35.80px;top:401.77px" width="5" height="4"><rect x="0.2" y="0.4" width="4.2" height="3" fill="#141414"/><rect x="1" y="0.4" width="0.5" height="1.6" fill="#888"/><rect x="2.4" y="0.4" width="0.5" height="1.6" fill="#888"/></svg>
<div class="a t" style="left:40.80px;top:403px;font-size:2.8px;color:rgba(0,0,0,0.32);">40</div>
<div class="a" style="left:47.30px;top:401.38px;width:4.40px;height:3.40px;background:#2f3134;"></div>
<div class="a t" style="left:48.20px;top:403px;font-size:3px;color:#e8e8e8;font-weight:bold">M</div>
<div class="a" style="left:53.60px;top:401.38px;width:3.40px;height:3.40px;background:#2f3134;"></div>
<div class="a t" style="left:54.40px;top:403px;font-size:3px;color:#e8e8e8;font-weight:bold">S</div>
<div class="a t" style="left:61.00px;top:402px;font-size:4.4px;color:#eceef2;transform:scaleX(0.72);transform-origin:0 0">SYN Bell Lead</div>
<div class="a" style="left:60.60px;top:407.18px;width:4.60px;height:3.00px;background:#313336;"></div>
<div class="a" style="left:61.90px;top:407.77px;width:2.00px;height:1.80px;background:#8e8e8e;border-radius:0.5px"></div>
<div class="a" style="left:66.80px;top:407.18px;width:4.60px;height:3.00px;background:#313336;"></div>
<div class="a" style="left:68.10px;top:407.77px;width:2.00px;height:1.80px;background:#8e8e8e;border-radius:0.5px"></div>
<div class="a" style="left:73.00px;top:407.18px;width:4.60px;height:3.00px;background:#313336;"></div>
<div class="a" style="left:74.30px;top:407.77px;width:2.00px;height:1.80px;background:#8e8e8e;border-radius:0.5px"></div>
<div class="a" style="left:79.20px;top:407.18px;width:4.60px;height:3.00px;background:#313336;"></div>
<div class="a" style="left:80.50px;top:407.77px;width:2.00px;height:1.80px;background:#8e8e8e;border-radius:0.5px"></div>
<div class="a" style="left:85.40px;top:407.18px;width:4.60px;height:3.00px;background:#313336;"></div>
<div class="a t" style="left:86.50px;top:409px;font-size:2.8px;color:#e0e0e0;font-weight:bold">R</div>
<div class="a" style="left:91.60px;top:407.18px;width:4.60px;height:3.00px;background:#313336;"></div>
<div class="a t" style="left:92.70px;top:409px;font-size:2.8px;color:#e0e0e0;font-weight:bold">W</div>
<div class="a" style="left:97.80px;top:407.18px;width:4.60px;height:3.00px;background:#313336;"></div>
<div class="a" style="left:99.10px;top:407.77px;width:2.00px;height:1.80px;background:#8e8e8e;border-radius:0.5px"></div>
<svg class="a" style="left:104.6px;top:402.18px" width="3" height="2.5"><path d="M0,2.3 L2.8,0.2 L2.8,2.3Z" fill="#bdbdbd"/></svg>
<div class="a" style="left:109.20px;top:402.88px;width:17.70px;height:0.80px;background:#3e4044;border-radius:0.4px"></div>
<div class="a" style="left:109.20px;top:402.88px;width:6.20px;height:0.80px;background:#dedede;"></div>
<div class="a" style="left:114.10px;top:401.97px;width:2.60px;height:2.60px;background:#f4f4f4;border-radius:50%"></div>
<div class="a" style="left:131.40px;top:24.60px;width:1.50px;height:7.60px;background:linear-gradient(#2ee6a4,#22bcd8);"></div>
<div class="a" style="left:131.40px;top:50.00px;width:1.50px;height:5.40px;background:linear-gradient(#2ee6a4,#22bcd8);"></div>
<div class="a" style="left:131.40px;top:85.50px;width:1.50px;height:3.50px;background:linear-gradient(#2ee6a4,#22bcd8);"></div>
<div class="a" style="left:131.40px;top:98.00px;width:1.50px;height:3.40px;background:linear-gradient(#2ee6a4,#22bcd8);"></div>
<div class="a" style="left:131.40px;top:109.00px;width:1.50px;height:3.80px;background:linear-gradient(#2ee6a4,#22bcd8);"></div>
<div class="a" style="left:131.40px;top:140.50px;width:1.50px;height:7.10px;background:linear-gradient(#2ee6a4,#22bcd8);"></div>
<div class="a" style="left:131.40px;top:150.00px;width:1.50px;height:7.00px;background:linear-gradient(#2ee6a4,#22bcd8);"></div>
<div class="a" style="left:131.40px;top:186.70px;width:1.50px;height:6.70px;background:linear-gradient(#2ee6a4,#22bcd8);"></div>
<div class="a" style="left:131.40px;top:198.60px;width:1.50px;height:5.90px;background:linear-gradient(#2ee6a4,#22bcd8);"></div>
<div class="a" style="left:131.40px;top:209.20px;width:1.50px;height:7.10px;background:linear-gradient(#2ee6a4,#22bcd8);"></div>
<div class="a" style="left:131.40px;top:220.80px;width:1.50px;height:6.70px;background:linear-gradient(#2ee6a4,#22bcd8);"></div>
<div class="a" style="left:131.40px;top:233.40px;width:1.50px;height:5.90px;background:linear-gradient(#2ee6a4,#22bcd8);"></div>
<div class="a" style="left:131.40px;top:248.80px;width:1.50px;height:1.90px;background:linear-gradient(#2ee6a4,#22bcd8);"></div>
<div class="a" style="left:131.40px;top:381.00px;width:1.50px;height:7.20px;background:linear-gradient(#2ee6a4,#22bcd8);"></div>
<div class="a" style="left:31.50px;top:405.50px;width:99.50px;height:4.00px;background:#242629;"></div>
<svg class="a" style="left:124.00px;top:405.88px" width="2.85" height="2.85" viewBox="0 0 10 10"><path d="M2,3.5 L5,6.5 L8,3.5" fill="none" stroke="#999" stroke-width="1.1"/></svg>
<div class="a" style="left:129.30px;top:406.00px;width:2.20px;height:2.20px;background:none;border:0.5px solid #999;border-radius:50%"></div>
<div class="a" style="left:133.00px;top:12.00px;width:544.00px;height:7.60px;background:#17181a;"></div>
<div class="a" style="left:133.00px;top:19.60px;width:544.00px;height:385.90px;background:#262729;"></div>
<div class="a" style="left:469.52px;top:19.60px;width:59.31px;height:385.90px;background:#3c3d40;"></div>
<div class="a" style="left:135.00px;top:19.60px;width:1.00px;height:385.90px;background:#3f4043;"></div>
<div class="a" style="left:143.00px;top:19.60px;width:1.00px;height:385.90px;background:#3f4043;"></div>
<div class="a" style="left:150.00px;top:19.60px;width:1.00px;height:385.90px;background:#3f4043;"></div>
<div class="a" style="left:158.00px;top:19.60px;width:1.00px;height:385.90px;background:#3f4043;"></div>
<div class="a" style="left:165.00px;top:19.60px;width:1.00px;height:385.90px;background:#3f4043;"></div>
<div class="a" style="left:172.00px;top:19.60px;width:1.00px;height:385.90px;background:#3f4043;"></div>
<div class="a" style="left:180.00px;top:19.60px;width:1.00px;height:385.90px;background:#3f4043;"></div>
<div class="a" style="left:187.00px;top:19.60px;width:1.00px;height:385.90px;background:#3f4043;"></div>
<div class="a" style="left:195.00px;top:19.60px;width:1.00px;height:385.90px;background:#3f4043;"></div>
<div class="a" style="left:202.00px;top:19.60px;width:1.00px;height:385.90px;background:#3f4043;"></div>
<div class="a" style="left:210.00px;top:19.60px;width:1.00px;height:385.90px;background:#3f4043;"></div>
<div class="a" style="left:217.00px;top:19.60px;width:1.00px;height:385.90px;background:#3f4043;"></div>
<div class="a" style="left:224.00px;top:19.60px;width:1.00px;height:385.90px;background:#3f4043;"></div>
<div class="a" style="left:232.00px;top:19.60px;width:1.00px;height:385.90px;background:#3f4043;"></div>
<div class="a" style="left:239.00px;top:19.60px;width:1.00px;height:385.90px;background:#3f4043;"></div>
<div class="a" style="left:247.00px;top:19.60px;width:1.00px;height:385.90px;background:#3f4043;"></div>
<div class="a" style="left:254.00px;top:19.60px;width:1.00px;height:385.90px;background:#3f4043;"></div>
<div class="a" style="left:261.00px;top:19.60px;width:1.00px;height:385.90px;background:#3f4043;"></div>
<div class="a" style="left:269.00px;top:19.60px;width:1.00px;height:385.90px;background:#3f4043;"></div>
<div class="a" style="left:276.00px;top:19.60px;width:1.00px;height:385.90px;background:#3f4043;"></div>
<div class="a" style="left:284.00px;top:19.60px;width:1.00px;height:385.90px;background:#3f4043;"></div>
<div class="a" style="left:291.00px;top:19.60px;width:1.00px;height:385.90px;background:#3f4043;"></div>
<div class="a" style="left:298.00px;top:19.60px;width:1.00px;height:385.90px;background:#3f4043;"></div>
<div class="a" style="left:306.00px;top:19.60px;width:1.00px;height:385.90px;background:#3f4043;"></div>
<div class="a" style="left:313.00px;top:19.60px;width:1.00px;height:385.90px;background:#3f4043;"></div>
<div class="a" style="left:321.00px;top:19.60px;width:1.00px;height:385.90px;background:#3f4043;"></div>
<div class="a" style="left:328.00px;top:19.60px;width:1.00px;height:385.90px;background:#3f4043;"></div>
<div class="a" style="left:336.00px;top:19.60px;width:1.00px;height:385.90px;background:#3f4043;"></div>
<div class="a" style="left:343.00px;top:19.60px;width:1.00px;height:385.90px;background:#3f4043;"></div>
<div class="a" style="left:350.00px;top:19.60px;width:1.00px;height:385.90px;background:#3f4043;"></div>
<div class="a" style="left:358.00px;top:19.60px;width:1.00px;height:385.90px;background:#3f4043;"></div>
<div class="a" style="left:365.00px;top:19.60px;width:1.00px;height:385.90px;background:#3f4043;"></div>
<div class="a" style="left:373.00px;top:19.60px;width:1.00px;height:385.90px;background:#3f4043;"></div>
<div class="a" style="left:380.00px;top:19.60px;width:1.00px;height:385.90px;background:#3f4043;"></div>
<div class="a" style="left:387.00px;top:19.60px;width:1.00px;height:385.90px;background:#3f4043;"></div>
<div class="a" style="left:395.00px;top:19.60px;width:1.00px;height:385.90px;background:#3f4043;"></div>
<div class="a" style="left:402.00px;top:19.60px;width:1.00px;height:385.90px;background:#3f4043;"></div>
<div class="a" style="left:410.00px;top:19.60px;width:1.00px;height:385.90px;background:#3f4043;"></div>
<div class="a" style="left:417.00px;top:19.60px;width:1.00px;height:385.90px;background:#3f4043;"></div>
<div class="a" style="left:425.00px;top:19.60px;width:1.00px;height:385.90px;background:#3f4043;"></div>
<div class="a" style="left:432.00px;top:19.60px;width:1.00px;height:385.90px;background:#3f4043;"></div>
<div class="a" style="left:439.00px;top:19.60px;width:1.00px;height:385.90px;background:#3f4043;"></div>
<div class="a" style="left:447.00px;top:19.60px;width:1.00px;height:385.90px;background:#3f4043;"></div>
<div class="a" style="left:454.00px;top:19.60px;width:1.00px;height:385.90px;background:#3f4043;"></div>
<div class="a" style="left:462.00px;top:19.60px;width:1.00px;height:385.90px;background:#3f4043;"></div>
<div class="a" style="left:469.00px;top:19.60px;width:1.00px;height:385.90px;background:#4f5053;"></div>
<div class="a" style="left:476.00px;top:19.60px;width:1.00px;height:385.90px;background:#4f5053;"></div>
<div class="a" style="left:484.00px;top:19.60px;width:1.00px;height:385.90px;background:#4f5053;"></div>
<div class="a" style="left:491.00px;top:19.60px;width:1.00px;height:385.90px;background:#4f5053;"></div>
<div class="a" style="left:499.00px;top:19.60px;width:1.00px;height:385.90px;background:#4f5053;"></div>
<div class="a" style="left:506.00px;top:19.60px;width:1.00px;height:385.90px;background:#4f5053;"></div>
<div class="a" style="left:514.00px;top:19.60px;width:1.00px;height:385.90px;background:#4f5053;"></div>
<div class="a" style="left:521.00px;top:19.60px;width:1.00px;height:385.90px;background:#4f5053;"></div>
<div class="a" style="left:528.00px;top:19.60px;width:1.00px;height:385.90px;background:#4f5053;"></div>
<div class="a" style="left:536.00px;top:19.60px;width:1.00px;height:385.90px;background:#3f4043;"></div>
<div class="a" style="left:543.00px;top:19.60px;width:1.00px;height:385.90px;background:#3f4043;"></div>
<div class="a" style="left:551.00px;top:19.60px;width:1.00px;height:385.90px;background:#3f4043;"></div>
<div class="a" style="left:558.00px;top:19.60px;width:1.00px;height:385.90px;background:#3f4043;"></div>
<div class="a" style="left:565.00px;top:19.60px;width:1.00px;height:385.90px;background:#3f4043;"></div>
<div class="a" style="left:573.00px;top:19.60px;width:1.00px;height:385.90px;background:#3f4043;"></div>
<div class="a" style="left:580.00px;top:19.60px;width:1.00px;height:385.90px;background:#3f4043;"></div>
<div class="a" style="left:588.00px;top:19.60px;width:1.00px;height:385.90px;background:#3f4043;"></div>
<div class="a" style="left:595.00px;top:19.60px;width:1.00px;height:385.90px;background:#3f4043;"></div>
<div class="a" style="left:602.00px;top:19.60px;width:1.00px;height:385.90px;background:#3f4043;"></div>
<div class="a" style="left:610.00px;top:19.60px;width:1.00px;height:385.90px;background:#3f4043;"></div>
<div class="a" style="left:617.00px;top:19.60px;width:1.00px;height:385.90px;background:#3f4043;"></div>
<div class="a" style="left:625.00px;top:19.60px;width:1.00px;height:385.90px;background:#3f4043;"></div>
<div class="a" style="left:632.00px;top:19.60px;width:1.00px;height:385.90px;background:#3f4043;"></div>
<div class="a" style="left:640.00px;top:19.60px;width:1.00px;height:385.90px;background:#3f4043;"></div>
<div class="a" style="left:647.00px;top:19.60px;width:1.00px;height:385.90px;background:#3f4043;"></div>
<div class="a" style="left:654.00px;top:19.60px;width:1.00px;height:385.90px;background:#3f4043;"></div>
<div class="a" style="left:662.00px;top:19.60px;width:1.00px;height:385.90px;background:#3f4043;"></div>
<div class="a" style="left:669.00px;top:19.60px;width:1.00px;height:385.90px;background:#3f4043;"></div>
<div class="a" style="left:133.00px;top:21.00px;width:544.00px;height:1.00px;background:rgba(255,255,255,0.065);"></div>
<div class="a" style="left:133.00px;top:32.00px;width:544.00px;height:1.00px;background:rgba(255,255,255,0.065);"></div>
<div class="a" style="left:133.00px;top:44.00px;width:544.00px;height:1.00px;background:rgba(255,255,255,0.065);"></div>
<div class="a" style="left:133.00px;top:55.00px;width:544.00px;height:1.00px;background:rgba(255,255,255,0.065);"></div>
<div class="a" style="left:133.00px;top:67.00px;width:544.00px;height:1.00px;background:rgba(255,255,255,0.065);"></div>
<div class="a" style="left:133.00px;top:78.00px;width:544.00px;height:1.00px;background:rgba(255,255,255,0.065);"></div>
<div class="a" style="left:133.00px;top:90.00px;width:544.00px;height:1.00px;background:rgba(255,255,255,0.065);"></div>
<div class="a" style="left:133.00px;top:101.00px;width:544.00px;height:1.00px;background:rgba(255,255,255,0.065);"></div>
<div class="a" style="left:133.00px;top:113.00px;width:544.00px;height:1.00px;background:rgba(255,255,255,0.065);"></div>
<div class="a" style="left:133.00px;top:124.00px;width:544.00px;height:1.00px;background:rgba(255,255,255,0.065);"></div>
<div class="a" style="left:133.00px;top:136.00px;width:544.00px;height:1.00px;background:rgba(255,255,255,0.065);"></div>
<div class="a" style="left:133.00px;top:147.00px;width:544.00px;height:1.00px;background:rgba(255,255,255,0.065);"></div>
<div class="a" style="left:133.00px;top:159.00px;width:544.00px;height:1.00px;background:rgba(255,255,255,0.065);"></div>
<div class="a" style="left:133.00px;top:170.00px;width:544.00px;height:1.00px;background:rgba(255,255,255,0.065);"></div>
<div class="a" style="left:133.00px;top:182.00px;width:544.00px;height:1.00px;background:rgba(255,255,255,0.065);"></div>
<div class="a" style="left:133.00px;top:193.00px;width:544.00px;height:1.00px;background:rgba(255,255,255,0.065);"></div>
<div class="a" style="left:133.00px;top:204.00px;width:544.00px;height:1.00px;background:rgba(255,255,255,0.065);"></div>
<div class="a" style="left:133.00px;top:216.00px;width:544.00px;height:1.00px;background:rgba(255,255,255,0.065);"></div>
<div class="a" style="left:133.00px;top:227.00px;width:544.00px;height:1.00px;background:rgba(255,255,255,0.065);"></div>
<div class="a" style="left:133.00px;top:239.00px;width:544.00px;height:1.00px;background:rgba(255,255,255,0.065);"></div>
<div class="a" style="left:133.00px;top:250.00px;width:544.00px;height:1.00px;background:rgba(255,255,255,0.065);"></div>
<div class="a" style="left:133.00px;top:262.00px;width:544.00px;height:1.00px;background:rgba(255,255,255,0.065);"></div>
<div class="a" style="left:133.00px;top:273.00px;width:544.00px;height:1.00px;background:rgba(255,255,255,0.065);"></div>
<div class="a" style="left:133.00px;top:285.00px;width:544.00px;height:1.00px;background:rgba(255,255,255,0.065);"></div>
<div class="a" style="left:133.00px;top:296.00px;width:544.00px;height:1.00px;background:rgba(255,255,255,0.065);"></div>
<div class="a" style="left:133.00px;top:308.00px;width:544.00px;height:1.00px;background:rgba(255,255,255,0.065);"></div>
<div class="a" style="left:133.00px;top:319.00px;width:544.00px;height:1.00px;background:rgba(255,255,255,0.065);"></div>
<div class="a" style="left:133.00px;top:331.00px;width:544.00px;height:1.00px;background:rgba(255,255,255,0.065);"></div>
<div class="a" style="left:133.00px;top:342.00px;width:544.00px;height:1.00px;background:rgba(255,255,255,0.065);"></div>
<div class="a" style="left:133.00px;top:354.00px;width:544.00px;height:1.00px;background:rgba(255,255,255,0.065);"></div>
<div class="a" style="left:133.00px;top:365.00px;width:544.00px;height:1.00px;background:rgba(255,255,255,0.065);"></div>
<div class="a" style="left:133.00px;top:377.00px;width:544.00px;height:1.00px;background:rgba(255,255,255,0.065);"></div>
<div class="a" style="left:133.00px;top:388.00px;width:544.00px;height:1.00px;background:rgba(255,255,255,0.065);"></div>
<div class="a" style="left:133.00px;top:400.00px;width:544.00px;height:1.00px;background:rgba(255,255,255,0.065);"></div>
<div class="a" style="left:143.30px;top:13.00px;width:0.60px;height:5.50px;background:#6a6c70;"></div>
<div class="a t" style="left:144.30px;top:16px;font-size:3.4px;color:#b8b8b8;">3</div>
<div class="a" style="left:158.13px;top:13.00px;width:0.60px;height:5.50px;background:#6a6c70;"></div>
<div class="a t" style="left:159.13px;top:16px;font-size:3.4px;color:#b8b8b8;">5</div>
<div class="a" style="left:172.96px;top:13.00px;width:0.60px;height:5.50px;background:#6a6c70;"></div>
<div class="a t" style="left:173.96px;top:16px;font-size:3.4px;color:#b8b8b8;">7</div>
<div class="a" style="left:187.78px;top:13.00px;width:0.60px;height:5.50px;background:#6a6c70;"></div>
<div class="a t" style="left:188.78px;top:16px;font-size:3.4px;color:#b8b8b8;">9</div>
<div class="a" style="left:202.61px;top:13.00px;width:0.60px;height:5.50px;background:#6a6c70;"></div>
<div class="a t" style="left:203.61px;top:16px;font-size:3.4px;color:#b8b8b8;">11</div>
<div class="a" style="left:217.44px;top:13.00px;width:0.60px;height:5.50px;background:#6a6c70;"></div>
<div class="a t" style="left:218.44px;top:16px;font-size:3.4px;color:#b8b8b8;">13</div>
<div class="a" style="left:232.27px;top:13.00px;width:0.60px;height:5.50px;background:#6a6c70;"></div>
<div class="a t" style="left:233.27px;top:16px;font-size:3.4px;color:#b8b8b8;">15</div>
<div class="a" style="left:247.10px;top:13.00px;width:0.60px;height:5.50px;background:#6a6c70;"></div>
<div class="a t" style="left:248.10px;top:16px;font-size:3.4px;color:#b8b8b8;">17</div>
<div class="a" style="left:261.92px;top:13.00px;width:0.60px;height:5.50px;background:#6a6c70;"></div>
<div class="a t" style="left:262.92px;top:16px;font-size:3.4px;color:#b8b8b8;">19</div>
<div class="a" style="left:276.75px;top:13.00px;width:0.60px;height:5.50px;background:#6a6c70;"></div>
<div class="a t" style="left:277.75px;top:16px;font-size:3.4px;color:#b8b8b8;">21</div>
<div class="a" style="left:291.58px;top:13.00px;width:0.60px;height:5.50px;background:#6a6c70;"></div>
<div class="a t" style="left:292.58px;top:16px;font-size:3.4px;color:#b8b8b8;">23</div>
<div class="a" style="left:306.41px;top:13.00px;width:0.60px;height:5.50px;background:#6a6c70;"></div>
<div class="a t" style="left:307.41px;top:16px;font-size:3.4px;color:#b8b8b8;">25</div>
<div class="a" style="left:321.24px;top:13.00px;width:0.60px;height:5.50px;background:#6a6c70;"></div>
<div class="a t" style="left:322.24px;top:16px;font-size:3.4px;color:#b8b8b8;">27</div>
<div class="a" style="left:336.06px;top:13.00px;width:0.60px;height:5.50px;background:#6a6c70;"></div>
<div class="a t" style="left:337.06px;top:16px;font-size:3.4px;color:#b8b8b8;">29</div>
<div class="a" style="left:350.89px;top:13.00px;width:0.60px;height:5.50px;background:#6a6c70;"></div>
<div class="a t" style="left:351.89px;top:16px;font-size:3.4px;color:#b8b8b8;">31</div>
<div class="a" style="left:365.72px;top:13.00px;width:0.60px;height:5.50px;background:#6a6c70;"></div>
<div class="a t" style="left:366.72px;top:16px;font-size:3.4px;color:#b8b8b8;">33</div>
<div class="a" style="left:380.55px;top:13.00px;width:0.60px;height:5.50px;background:#6a6c70;"></div>
<div class="a t" style="left:381.55px;top:16px;font-size:3.4px;color:#b8b8b8;">35</div>
<div class="a" style="left:395.38px;top:13.00px;width:0.60px;height:5.50px;background:#6a6c70;"></div>
<div class="a t" style="left:396.38px;top:16px;font-size:3.4px;color:#b8b8b8;">37</div>
<div class="a" style="left:410.20px;top:13.00px;width:0.60px;height:5.50px;background:#6a6c70;"></div>
<div class="a t" style="left:411.20px;top:16px;font-size:3.4px;color:#b8b8b8;">39</div>
<div class="a" style="left:425.03px;top:13.00px;width:0.60px;height:5.50px;background:#6a6c70;"></div>
<div class="a t" style="left:426.03px;top:16px;font-size:3.4px;color:#b8b8b8;">41</div>
<div class="a" style="left:439.86px;top:13.00px;width:0.60px;height:5.50px;background:#6a6c70;"></div>
<div class="a t" style="left:440.86px;top:16px;font-size:3.4px;color:#b8b8b8;">43</div>
<div class="a" style="left:454.69px;top:13.00px;width:0.60px;height:5.50px;background:#6a6c70;"></div>
<div class="a t" style="left:455.69px;top:16px;font-size:3.4px;color:#b8b8b8;">45</div>
<div class="a" style="left:469.52px;top:13.00px;width:0.60px;height:5.50px;background:#6a6c70;"></div>
<div class="a t" style="left:470.52px;top:16px;font-size:3.4px;color:#b8b8b8;">47</div>
<div class="a" style="left:484.34px;top:13.00px;width:0.60px;height:5.50px;background:#6a6c70;"></div>
<div class="a t" style="left:485.34px;top:16px;font-size:3.4px;color:#b8b8b8;">49</div>
<div class="a" style="left:499.17px;top:13.00px;width:0.60px;height:5.50px;background:#6a6c70;"></div>
<div class="a t" style="left:500.17px;top:16px;font-size:3.4px;color:#b8b8b8;">51</div>
<div class="a" style="left:514.00px;top:13.00px;width:0.60px;height:5.50px;background:#6a6c70;"></div>
<div class="a t" style="left:515.00px;top:16px;font-size:3.4px;color:#b8b8b8;">53</div>
<div class="a" style="left:528.83px;top:13.00px;width:0.60px;height:5.50px;background:#6a6c70;"></div>
<div class="a t" style="left:529.83px;top:16px;font-size:3.4px;color:#b8b8b8;">55</div>
<div class="a" style="left:543.66px;top:13.00px;width:0.60px;height:5.50px;background:#6a6c70;"></div>
<div class="a t" style="left:544.66px;top:16px;font-size:3.4px;color:#b8b8b8;">57</div>
<div class="a" style="left:558.48px;top:13.00px;width:0.60px;height:5.50px;background:#6a6c70;"></div>
<div class="a t" style="left:559.48px;top:16px;font-size:3.4px;color:#b8b8b8;">59</div>
<div class="a" style="left:573.31px;top:13.00px;width:0.60px;height:5.50px;background:#6a6c70;"></div>
<div class="a t" style="left:574.31px;top:16px;font-size:3.4px;color:#b8b8b8;">61</div>
<div class="a" style="left:588.14px;top:13.00px;width:0.60px;height:5.50px;background:#6a6c70;"></div>
<div class="a t" style="left:589.14px;top:16px;font-size:3.4px;color:#b8b8b8;">63</div>
<div class="a" style="left:602.97px;top:13.00px;width:0.60px;height:5.50px;background:#6a6c70;"></div>
<div class="a t" style="left:603.97px;top:16px;font-size:3.4px;color:#b8b8b8;">65</div>
<div class="a" style="left:617.80px;top:13.00px;width:0.60px;height:5.50px;background:#6a6c70;"></div>
<div class="a t" style="left:618.80px;top:16px;font-size:3.4px;color:#b8b8b8;">67</div>
<div class="a" style="left:632.62px;top:13.00px;width:0.60px;height:5.50px;background:#6a6c70;"></div>
<div class="a t" style="left:633.62px;top:16px;font-size:3.4px;color:#b8b8b8;">69</div>
<div class="a" style="left:647.45px;top:13.00px;width:0.60px;height:5.50px;background:#6a6c70;"></div>
<div class="a t" style="left:648.45px;top:16px;font-size:3.4px;color:#b8b8b8;">71</div>
<div class="a" style="left:662.28px;top:13.00px;width:0.60px;height:5.50px;background:#6a6c70;"></div>
<div class="a t" style="left:663.28px;top:16px;font-size:3.4px;color:#b8b8b8;">73</div>
<div class="a" style="left:469.52px;top:12.20px;width:59.31px;height:6.80px;background:#6a4fe0;"></div>
<div class="a" style="left:469.52px;top:13.00px;width:0.60px;height:5.50px;background:#9a88f0;"></div>
<div class="a t" style="left:470.52px;top:16px;font-size:3.4px;color:#e8e4ff;">47</div>
<div class="a" style="left:484.34px;top:13.00px;width:0.60px;height:5.50px;background:#9a88f0;"></div>
<div class="a t" style="left:485.34px;top:16px;font-size:3.4px;color:#e8e4ff;">49</div>
<div class="a" style="left:499.17px;top:13.00px;width:0.60px;height:5.50px;background:#9a88f0;"></div>
<div class="a t" style="left:500.17px;top:16px;font-size:3.4px;color:#e8e4ff;">51</div>
<div class="a" style="left:514.00px;top:13.00px;width:0.60px;height:5.50px;background:#9a88f0;"></div>
<div class="a t" style="left:515.00px;top:16px;font-size:3.4px;color:#e8e4ff;">53</div>
<div class="a" style="left:528.83px;top:13.00px;width:0.60px;height:5.50px;background:#9a88f0;"></div>
<div class="a t" style="left:529.83px;top:16px;font-size:3.4px;color:#e8e4ff;">55</div>
<div class="a" style="left:469.02px;top:12.00px;width:1.50px;height:1.50px;background:#ffffff;"></div>
<div class="a" style="left:527.83px;top:12.00px;width:1.50px;height:1.50px;background:#ffffff;"></div>
<div class="a" style="left:143.30px;top:20.00px;width:506.10px;height:1.20px;background:#d6a82a;"></div>
<div class="a" style="left:133.00px;top:26.00px;width:544.00px;height:1.00px;background:#4a4c50;"></div>
<div class="a" style="left:133.00px;top:141.00px;width:544.00px;height:1.00px;background:#4a4c50;"></div>
<div class="a" style="left:133.00px;top:187.00px;width:544.00px;height:1.00px;background:#4a4c50;"></div>
<div class="a" style="left:133.00px;top:382.00px;width:544.00px;height:1.00px;background:#4a4c50;"></div>
<div class="a" style="left:143.00px;top:33.00px;width:25.00px;height:11.00px;background:#c4a23c;"></div>
<svg class="a" style="left:143.30px;top:40.40px" width="24.30" height="2.5"><polyline points="0.00,0.30 2.00,1.60 4.00,0.30 6.00,1.60 8.00,0.30 10.00,1.60 12.00,0.30 14.00,1.60 16.00,0.30 18.00,1.60 20.00,0.30 22.00,1.60 24.00,0.30 26.00,1.60" fill="none" stroke="#8a6c1c" stroke-width="0.8"/></svg>
<div class="a" style="left:143.30px;top:42.80px;width:24.30px;height:1.20px;background:#b39230;"></div>
<div class="a" style="left:173.00px;top:33.00px;width:59.00px;height:11.00px;background:#c4a23c;"></div>
<svg class="a" style="left:172.96px;top:40.40px" width="59.34" height="2.5"><polyline points="0.00,0.30 1.40,1.60 2.80,0.30 4.20,1.60 5.60,0.30 7.00,1.60 8.40,0.30 9.80,1.60 11.20,0.30 12.60,1.60 14.00,0.30 15.40,1.60 16.80,0.30 18.20,1.60 19.60,0.30 21.00,1.60 22.40,0.30 23.80,1.60 25.20,0.30 26.60,1.60 28.00,0.30 29.40,1.60 30.80,0.30 32.20,1.60 33.60,0.30 35.00,1.60 36.40,0.30 37.80,1.60 39.20,0.30 40.60,1.60 42.00,0.30 43.40,1.60 44.80,0.30 46.20,1.60 47.60,0.30 49.00,1.60 50.40,0.30 51.80,1.60 53.20,0.30 54.60,1.60 56.00,0.30 57.40,1.60 58.80,0.30 60.20,1.60" fill="none" stroke="#8a6c1c" stroke-width="0.8"/></svg>
<div class="a" style="left:172.96px;top:42.80px;width:59.34px;height:1.20px;background:#b39230;"></div>
<div class="a" style="left:232.00px;top:33.00px;width:119.00px;height:11.00px;background:#c4a23c;"></div>
<svg class="a" style="left:232.30px;top:40.40px" width="118.70" height="2.5"><polyline points="0.00,0.30 1.40,1.60 2.80,0.30 4.20,1.60 5.60,0.30 7.00,1.60 8.40,0.30 9.80,1.60 11.20,0.30 12.60,1.60 14.00,0.30 15.40,1.60 16.80,0.30 18.20,1.60 19.60,0.30 21.00,1.60 22.40,0.30 23.80,1.60 25.20,0.30 26.60,1.60 28.00,0.30 29.40,1.60 30.80,0.30 32.20,1.60 33.60,0.30 35.00,1.60 36.40,0.30 37.80,1.60 39.20,0.30 40.60,1.60 42.00,0.30 43.40,1.60 44.80,0.30 46.20,1.60 47.60,0.30 49.00,1.60 50.40,0.30 51.80,1.60 53.20,0.30 54.60,1.60 56.00,0.30 57.40,1.60 58.80,0.30 60.20,1.60 61.60,0.30 63.00,1.60 64.40,0.30 65.80,1.60 67.20,0.30 68.60,1.60 70.00,0.30 71.40,1.60 72.80,0.30 74.20,1.60 75.60,0.30 77.00,1.60 78.40,0.30 79.80,1.60 81.20,0.30 82.60,1.60 84.00,0.30 85.40,1.60 86.80,0.30 88.20,1.60 89.60,0.30 91.00,1.60 92.40,0.30 93.80,1.60 95.20,0.30 96.60,1.60 98.00,0.30 99.40,1.60 100.80,0.30 102.20,1.60 103.60,0.30 105.00,1.60 106.40,0.30 107.80,1.60 109.20,0.30 110.60,1.60 112.00,0.30 113.40,1.60 114.80,0.30 116.20,1.60 117.60,0.30 119.00,1.60" fill="none" stroke="#8a6c1c" stroke-width="0.8"/></svg>
<div class="a" style="left:232.30px;top:42.80px;width:118.70px;height:1.20px;background:#b39230;"></div>
<div class="a" style="left:351.00px;top:33.00px;width:59.00px;height:11.00px;background:#c4a23c;"></div>
<svg class="a" style="left:351.00px;top:40.40px" width="59.20" height="2.5"><polyline points="0.00,0.30 1.40,1.60 2.80,0.30 4.20,1.60 5.60,0.30 7.00,1.60 8.40,0.30 9.80,1.60 11.20,0.30 12.60,1.60 14.00,0.30 15.40,1.60 16.80,0.30 18.20,1.60 19.60,0.30 21.00,1.60 22.40,0.30 23.80,1.60 25.20,0.30 26.60,1.60 28.00,0.30 29.40,1.60 30.80,0.30 32.20,1.60 33.60,0.30 35.00,1.60 36.40,0.30 37.80,1.60 39.20,0.30 40.60,1.60 42.00,0.30 43.40,1.60 44.80,0.30 46.20,1.60 47.60,0.30 49.00,1.60 50.40,0.30 51.80,1.60 53.20,0.30 54.60,1.60 56.00,0.30 57.40,1.60 58.80,0.30 60.20,1.60" fill="none" stroke="#8a6c1c" stroke-width="0.8"/></svg>
<div class="a" style="left:351.00px;top:42.80px;width:59.20px;height:1.20px;background:#b39230;"></div>
<div class="a" style="left:410.00px;top:33.00px;width:60.00px;height:11.00px;background:#c4a23c;"></div>
<svg class="a" style="left:410.20px;top:40.40px" width="59.30" height="2.5"><polyline points="0.00,0.30 1.40,1.60 2.80,0.30 4.20,1.60 5.60,0.30 7.00,1.60 8.40,0.30 9.80,1.60 11.20,0.30 12.60,1.60 14.00,0.30 15.40,1.60 16.80,0.30 18.20,1.60 19.60,0.30 21.00,1.60 22.40,0.30 23.80,1.60 25.20,0.30 26.60,1.60 28.00,0.30 29.40,1.60 30.80,0.30 32.20,1.60 33.60,0.30 35.00,1.60 36.40,0.30 37.80,1.60 39.20,0.30 40.60,1.60 42.00,0.30 43.40,1.60 44.80,0.30 46.20,1.60 47.60,0.30 49.00,1.60 50.40,0.30 51.80,1.60 53.20,0.30 54.60,1.60 56.00,0.30 57.40,1.60 58.80,0.30 60.20,1.60" fill="none" stroke="#8a6c1c" stroke-width="0.8"/></svg>
<div class="a" style="left:410.20px;top:42.80px;width:59.30px;height:1.20px;background:#b39230;"></div>
<div class="a" style="left:470.00px;top:33.00px;width:59.00px;height:11.00px;background:#c4a23c;"></div>
<svg class="a" style="left:469.50px;top:40.40px" width="59.50" height="2.5"><polyline points="0.00,0.30 1.40,1.60 2.80,0.30 4.20,1.60 5.60,0.30 7.00,1.60 8.40,0.30 9.80,1.60 11.20,0.30 12.60,1.60 14.00,0.30 15.40,1.60 16.80,0.30 18.20,1.60 19.60,0.30 21.00,1.60 22.40,0.30 23.80,1.60 25.20,0.30 26.60,1.60 28.00,0.30 29.40,1.60 30.80,0.30 32.20,1.60 33.60,0.30 35.00,1.60 36.40,0.30 37.80,1.60 39.20,0.30 40.60,1.60 42.00,0.30 43.40,1.60 44.80,0.30 46.20,1.60 47.60,0.30 49.00,1.60 50.40,0.30 51.80,1.60 53.20,0.30 54.60,1.60 56.00,0.30 57.40,1.60 58.80,0.30 60.20,1.60" fill="none" stroke="#8a6c1c" stroke-width="0.8"/></svg>
<div class="a" style="left:469.50px;top:42.80px;width:59.50px;height:1.20px;background:#b39230;"></div>
<div class="a" style="left:529.00px;top:33.00px;width:59.00px;height:11.00px;background:#c4a23c;"></div>
<svg class="a" style="left:529.00px;top:40.40px" width="59.50" height="2.5"><polyline points="0.00,0.30 1.40,1.60 2.80,0.30 4.20,1.60 5.60,0.30 7.00,1.60 8.40,0.30 9.80,1.60 11.20,0.30 12.60,1.60 14.00,0.30 15.40,1.60 16.80,0.30 18.20,1.60 19.60,0.30 21.00,1.60 22.40,0.30 23.80,1.60 25.20,0.30 26.60,1.60 28.00,0.30 29.40,1.60 30.80,0.30 32.20,1.60 33.60,0.30 35.00,1.60 36.40,0.30 37.80,1.60 39.20,0.30 40.60,1.60 42.00,0.30 43.40,1.60 44.80,0.30 46.20,1.60 47.60,0.30 49.00,1.60 50.40,0.30 51.80,1.60 53.20,0.30 54.60,1.60 56.00,0.30 57.40,1.60 58.80,0.30 60.20,1.60" fill="none" stroke="#8a6c1c" stroke-width="0.8"/></svg>
<div class="a" style="left:529.00px;top:42.80px;width:59.50px;height:1.20px;background:#b39230;"></div>
<div class="a" style="left:588.00px;top:33.00px;width:60.00px;height:11.00px;background:#c4a23c;"></div>
<svg class="a" style="left:588.50px;top:40.40px" width="59.30" height="2.5"><polyline points="0.00,0.30 1.40,1.60 2.80,0.30 4.20,1.60 5.60,0.30 7.00,1.60 8.40,0.30 9.80,1.60 11.20,0.30 12.60,1.60 14.00,0.30 15.40,1.60 16.80,0.30 18.20,1.60 19.60,0.30 21.00,1.60 22.40,0.30 23.80,1.60 25.20,0.30 26.60,1.60 28.00,0.30 29.40,1.60 30.80,0.30 32.20,1.60 33.60,0.30 35.00,1.60 36.40,0.30 37.80,1.60 39.20,0.30 40.60,1.60 42.00,0.30 43.40,1.60 44.80,0.30 46.20,1.60 47.60,0.30 49.00,1.60 50.40,0.30 51.80,1.60 53.20,0.30 54.60,1.60 56.00,0.30 57.40,1.60 58.80,0.30 60.20,1.60" fill="none" stroke="#8a6c1c" stroke-width="0.8"/></svg>
<div class="a" style="left:588.50px;top:42.80px;width:59.30px;height:1.20px;background:#b39230;"></div>
<div class="a" style="left:232.30px;top:38.17px;width:177.90px;height:1.10px;background:#9a7c22;"></div>
<div class="a" style="left:143.00px;top:45.00px;width:25.00px;height:10.00px;background:#c4a23c;"></div>
<div class="a" style="left:143.30px;top:50.00px;width:24.30px;height:5.00px;background:#b8962f;"></div>
<div class="a" style="left:143.70px;top:45.50px;width:5.80px;height:4.60px;background:#e6d38a;border-radius:0.5px"></div>
<div class="a" style="left:144.70px;top:46.60px;width:1.40px;height:2.40px;background:#3a3010;"></div>
<div class="a" style="left:146.70px;top:46.60px;width:1.60px;height:1.60px;background:#3a3010;"></div>
<div class="a" style="left:173.00px;top:45.00px;width:59.00px;height:10.00px;background:#c4a23c;"></div>
<div class="a" style="left:172.96px;top:50.00px;width:59.34px;height:5.00px;background:#b8962f;"></div>
<div class="a" style="left:173.36px;top:45.50px;width:5.80px;height:4.60px;background:#e6d38a;border-radius:0.5px"></div>
<div class="a" style="left:174.36px;top:46.60px;width:1.40px;height:2.40px;background:#3a3010;"></div>
<div class="a" style="left:176.36px;top:46.60px;width:1.60px;height:1.60px;background:#3a3010;"></div>
<div class="a" style="left:410.00px;top:45.00px;width:238.00px;height:10.00px;background:#c4a23c;"></div>
<div class="a" style="left:410.20px;top:50.00px;width:237.60px;height:5.00px;background:#b8962f;"></div>
<div class="a" style="left:410.60px;top:45.50px;width:5.80px;height:4.60px;background:#e6d38a;border-radius:0.5px"></div>
<div class="a" style="left:411.60px;top:46.60px;width:1.40px;height:2.40px;background:#3a3010;"></div>
<div class="a" style="left:413.60px;top:46.60px;width:1.60px;height:1.60px;background:#3a3010;"></div>
<div class="a" style="left:173.00px;top:56.00px;width:59.00px;height:11.00px;background:#c4a23c;"></div>
<div class="a" style="left:172.96px;top:60.62px;width:59.34px;height:0.70px;background:#9c7d24;"></div>
<div class="a" style="left:172.96px;top:65.90px;width:59.34px;height:0.70px;background:#9c7d24;"></div>
<svg class="a" style="left:173.46px;top:57.50px" width="6" height="8"><path d="M0,1 L5,2.2 L0,3.2Z M0.5,6 a1,1 0 1,0 2,0 a1,1 0 1,0 -2,0" fill="#1a1406"/></svg>
<div class="a" style="left:410.00px;top:56.00px;width:238.00px;height:11.00px;background:#c4a23c;"></div>
<div class="a" style="left:410.20px;top:60.62px;width:237.60px;height:0.70px;background:#9c7d24;"></div>
<div class="a" style="left:410.20px;top:65.90px;width:237.60px;height:0.70px;background:#9c7d24;"></div>
<svg class="a" style="left:410.70px;top:57.50px" width="6" height="8"><path d="M0,1 L5,2.2 L0,3.2Z M0.5,6 a1,1 0 1,0 2,0 a1,1 0 1,0 -2,0" fill="#1a1406"/></svg>
<svg class="a" style="left:470.00px;top:57.50px" width="6" height="8"><path d="M0,1 L5,2.2 L0,3.2Z M0.5,6 a1,1 0 1,0 2,0 a1,1 0 1,0 -2,0" fill="#1a1406"/></svg>
<svg class="a" style="left:529.50px;top:57.50px" width="6" height="8"><path d="M0,1 L5,2.2 L0,3.2Z M0.5,6 a1,1 0 1,0 2,0 a1,1 0 1,0 -2,0" fill="#1a1406"/></svg>
<svg class="a" style="left:589.00px;top:57.50px" width="6" height="8"><path d="M0,1 L5,2.2 L0,3.2Z M0.5,6 a1,1 0 1,0 2,0 a1,1 0 1,0 -2,0" fill="#1a1406"/></svg>
<div class="a" style="left:173.00px;top:68.00px;width:59.00px;height:10.00px;background:#c4a23c;"></div>
<div class="a" style="left:172.96px;top:72.20px;width:59.34px;height:0.70px;background:#9c7d24;"></div>
<div class="a" style="left:172.96px;top:77.00px;width:59.34px;height:0.70px;background:#9c7d24;"></div>
<svg class="a" style="left:173.46px;top:69.50px" width="6" height="8"><path d="M0,1 L5,2.2 L0,3.2Z M0.5,6 a1,1 0 1,0 2,0 a1,1 0 1,0 -2,0" fill="#1a1406"/></svg>
<div class="a" style="left:410.00px;top:68.00px;width:238.00px;height:10.00px;background:#c4a23c;"></div>
<div class="a" style="left:410.20px;top:72.20px;width:237.60px;height:0.70px;background:#9c7d24;"></div>
<div class="a" style="left:410.20px;top:77.00px;width:237.60px;height:0.70px;background:#9c7d24;"></div>
<svg class="a" style="left:410.70px;top:69.50px" width="6" height="8"><path d="M0,1 L5,2.2 L0,3.2Z M0.5,6 a1,1 0 1,0 2,0 a1,1 0 1,0 -2,0" fill="#1a1406"/></svg>
<svg class="a" style="left:470.00px;top:69.50px" width="6" height="8"><path d="M0,1 L5,2.2 L0,3.2Z M0.5,6 a1,1 0 1,0 2,0 a1,1 0 1,0 -2,0" fill="#1a1406"/></svg>
<svg class="a" style="left:529.50px;top:69.50px" width="6" height="8"><path d="M0,1 L5,2.2 L0,3.2Z M0.5,6 a1,1 0 1,0 2,0 a1,1 0 1,0 -2,0" fill="#1a1406"/></svg>
<svg class="a" style="left:589.00px;top:69.50px" width="6" height="8"><path d="M0,1 L5,2.2 L0,3.2Z M0.5,6 a1,1 0 1,0 2,0 a1,1 0 1,0 -2,0" fill="#1a1406"/></svg>
<svg class="a" style="left:0;top:0" width="0" height="0"><defs><pattern id="tri" patternUnits="userSpaceOnUse" width="3.9" height="5"><path d="M0.5,0.1 L3.3,1.5 L0.5,2.9Z" fill="#3a2c08" opacity="0.6"/></pattern></defs></svg>
<div class="a" style="left:175.00px;top:79.00px;width:59.00px;height:11.00px;background:#c8a640;"></div>
<div class="a" style="left:174.60px;top:79.10px;width:59.80px;height:0.60px;background:#a8882c;"></div>
<div class="a" style="left:174.60px;top:84.28px;width:59.80px;height:0.60px;background:#a8882c;"></div>
<svg class="a" style="left:175.00px;top:80.90px" width="59.00" height="3"><rect width="100%" height="3" fill="url(#tri)"/></svg>
<svg class="a" style="left:175.00px;top:85.90px" width="59.00" height="3"><rect width="100%" height="3" fill="url(#tri)"/></svg>
<div class="a" style="left:412.00px;top:79.00px;width:237.00px;height:11.00px;background:#c8a640;"></div>
<div class="a" style="left:412.00px;top:79.10px;width:237.40px;height:0.60px;background:#a8882c;"></div>
<div class="a" style="left:412.00px;top:84.28px;width:237.40px;height:0.60px;background:#a8882c;"></div>
<svg class="a" style="left:412.40px;top:80.90px" width="236.60" height="3"><rect width="100%" height="3" fill="url(#tri)"/></svg>
<svg class="a" style="left:412.40px;top:85.90px" width="236.60" height="3"><rect width="100%" height="3" fill="url(#tri)"/></svg>
<div class="a" style="left:175.00px;top:91.00px;width:59.00px;height:10.00px;background:#c8a640;"></div>
<div class="a" style="left:174.60px;top:91.10px;width:59.80px;height:0.60px;background:#a8882c;"></div>
<div class="a" style="left:174.60px;top:95.80px;width:59.80px;height:0.60px;background:#a8882c;"></div>
<svg class="a" style="left:175.00px;top:92.90px" width="59.00" height="3"><rect width="100%" height="3" fill="url(#tri)"/></svg>
<svg class="a" style="left:175.00px;top:97.90px" width="59.00" height="3"><rect width="100%" height="3" fill="url(#tri)"/></svg>
<div class="a" style="left:412.00px;top:91.00px;width:237.00px;height:10.00px;background:#c8a640;"></div>
<div class="a" style="left:412.00px;top:91.10px;width:237.40px;height:0.60px;background:#a8882c;"></div>
<div class="a" style="left:412.00px;top:95.80px;width:237.40px;height:0.60px;background:#a8882c;"></div>
<svg class="a" style="left:412.40px;top:92.90px" width="236.60" height="3"><rect width="100%" height="3" fill="url(#tri)"/></svg>
<svg class="a" style="left:412.40px;top:97.90px" width="236.60" height="3"><rect width="100%" height="3" fill="url(#tri)"/></svg>
<div class="a" style="left:173.00px;top:102.00px;width:59.00px;height:11.00px;background:#c4a23c;"></div>
<div class="a" style="left:173.36px;top:102.50px;width:5.80px;height:4.60px;background:#e6d38a;border-radius:0.5px"></div>
<div class="a" style="left:174.36px;top:103.60px;width:1.40px;height:2.40px;background:#3a3010;"></div>
<div class="a" style="left:176.36px;top:103.60px;width:1.60px;height:1.60px;background:#3a3010;"></div>
<div class="a" style="left:410.00px;top:102.00px;width:238.00px;height:11.00px;background:#c4a23c;"></div>
<div class="a" style="left:410.60px;top:102.50px;width:5.80px;height:4.60px;background:#e6d38a;border-radius:0.5px"></div>
<div class="a" style="left:411.60px;top:103.60px;width:1.40px;height:2.40px;background:#3a3010;"></div>
<div class="a" style="left:413.60px;top:103.60px;width:1.60px;height:1.60px;background:#3a3010;"></div>
<div class="a" style="left:166.00px;top:114.00px;width:7.00px;height:10.00px;background:#d0ac45;"></div>
<div class="a" style="left:165.50px;top:117.00px;width:7.40px;height:0.60px;background:#8a6c1c;"></div>
<div class="a" style="left:165.50px;top:120.00px;width:7.40px;height:0.60px;background:#8a6c1c;"></div>
<div class="a" style="left:173.00px;top:125.00px;width:178.00px;height:11.00px;background:#5a72dc;"></div>
<div class="a" style="left:173.00px;top:129.62px;width:178.00px;height:4.40px;background:#2f50d8;"></div>
<div class="a" style="left:351.00px;top:125.00px;width:59.00px;height:11.00px;background:#5a72dc;"></div>
<div class="a" style="left:351.00px;top:129.62px;width:59.00px;height:4.40px;background:#5b74de;"></div>
<div class="a" style="left:351.00px;top:127.67px;width:59.00px;height:1.60px;background:#3f5ad8;"></div>
<div class="a" style="left:410.00px;top:125.00px;width:238.00px;height:11.00px;background:#5a72dc;"></div>
<div class="a" style="left:410.00px;top:129.62px;width:238.00px;height:4.40px;background:#2f50d8;"></div>
<div class="a" style="left:173.00px;top:148.00px;width:178.00px;height:11.00px;background:#5369d2;"></div>
<div class="a" style="left:173.46px;top:152.18px;width:4.94px;height:1.20px;background:#1e3cc0;"></div>
<div class="a" style="left:178.84px;top:151.08px;width:3.29px;height:1.20px;background:#1e3cc0;"></div>
<div class="a" style="left:182.65px;top:151.08px;width:5.19px;height:1.20px;background:#1e3cc0;"></div>
<div class="a" style="left:188.59px;top:151.08px;width:4.29px;height:1.20px;background:#1e3cc0;"></div>
<div class="a" style="left:193.34px;top:151.08px;width:3.42px;height:1.20px;background:#1e3cc0;"></div>
<div class="a" style="left:197.29px;top:151.08px;width:3.35px;height:1.20px;background:#1e3cc0;"></div>
<div class="a" style="left:200.92px;top:153.28px;width:4.34px;height:1.20px;background:#1e3cc0;"></div>
<div class="a" style="left:205.81px;top:152.18px;width:3.37px;height:1.20px;background:#1e3cc0;"></div>
<div class="a" style="left:209.62px;top:152.18px;width:8.86px;height:1.20px;background:#1e3cc0;"></div>
<div class="a" style="left:219.01px;top:153.28px;width:3.80px;height:1.20px;background:#1e3cc0;"></div>
<div class="a" style="left:223.09px;top:153.28px;width:3.71px;height:1.20px;background:#1e3cc0;"></div>
<div class="a" style="left:227.34px;top:153.28px;width:7.09px;height:1.20px;background:#1e3cc0;"></div>
<div class="a" style="left:234.98px;top:153.28px;width:6.83px;height:1.20px;background:#1e3cc0;"></div>
<div class="a" style="left:242.07px;top:152.18px;width:7.27px;height:1.20px;background:#1e3cc0;"></div>
<div class="a" style="left:249.58px;top:154.38px;width:4.24px;height:1.20px;background:#1e3cc0;"></div>
<div class="a" style="left:254.33px;top:154.82px;width:7.66px;height:1.20px;background:#1e3cc0;"></div>
<div class="a" style="left:262.55px;top:154.82px;width:5.72px;height:1.20px;background:#1e3cc0;"></div>
<div class="a" style="left:268.62px;top:152.62px;width:4.08px;height:1.20px;background:#1e3cc0;"></div>
<div class="a" style="left:273.04px;top:151.52px;width:6.45px;height:1.20px;background:#1e3cc0;"></div>
<div class="a" style="left:279.98px;top:152.62px;width:5.06px;height:1.20px;background:#1e3cc0;"></div>
<div class="a" style="left:285.42px;top:152.62px;width:8.88px;height:1.20px;background:#1e3cc0;"></div>
<div class="a" style="left:294.81px;top:152.62px;width:3.99px;height:1.20px;background:#1e3cc0;"></div>
<div class="a" style="left:299.09px;top:152.62px;width:5.93px;height:1.20px;background:#1e3cc0;"></div>
<div class="a" style="left:305.80px;top:151.52px;width:3.47px;height:1.20px;background:#1e3cc0;"></div>
<div class="a" style="left:309.81px;top:151.52px;width:8.25px;height:1.20px;background:#1e3cc0;"></div>
<div class="a" style="left:318.46px;top:152.62px;width:5.10px;height:1.20px;background:#1e3cc0;"></div>
<div class="a" style="left:324.11px;top:151.08px;width:5.74px;height:1.20px;background:#1e3cc0;"></div>
<div class="a" style="left:330.11px;top:153.28px;width:4.62px;height:1.20px;background:#1e3cc0;"></div>
<div class="a" style="left:335.33px;top:154.82px;width:3.36px;height:1.20px;background:#1e3cc0;"></div>
<div class="a" style="left:339.07px;top:154.82px;width:6.47px;height:1.20px;background:#1e3cc0;"></div>
<div class="a" style="left:346.24px;top:154.82px;width:4.26px;height:1.20px;background:#1e3cc0;"></div>
<div class="a" style="left:351.00px;top:148.00px;width:59.00px;height:11.00px;background:#6477da;"></div>
<div class="a" style="left:351.50px;top:153.28px;width:5.08px;height:1.20px;background:#1e3cc0;"></div>
<div class="a" style="left:357.00px;top:154.38px;width:6.67px;height:1.20px;background:#1e3cc0;"></div>
<div class="a" style="left:363.90px;top:154.38px;width:7.61px;height:1.20px;background:#1e3cc0;"></div>
<div class="a" style="left:372.15px;top:152.18px;width:5.39px;height:1.20px;background:#1e3cc0;"></div>
<div class="a" style="left:378.03px;top:153.28px;width:4.00px;height:1.20px;background:#1e3cc0;"></div>
<div class="a" style="left:382.56px;top:151.08px;width:8.30px;height:1.20px;background:#1e3cc0;"></div>
<div class="a" style="left:391.32px;top:153.28px;width:6.30px;height:1.20px;background:#1e3cc0;"></div>
<div class="a" style="left:398.07px;top:154.38px;width:5.15px;height:1.20px;background:#1e3cc0;"></div>
<div class="a" style="left:404.00px;top:154.38px;width:3.91px;height:1.20px;background:#1e3cc0;"></div>
<div class="a" style="left:408.19px;top:154.38px;width:1.51px;height:1.20px;background:#1e3cc0;"></div>
<div class="a" style="left:410.00px;top:148.00px;width:238.00px;height:11.00px;background:#5369d2;"></div>
<div class="a" style="left:410.70px;top:152.18px;width:6.53px;height:1.20px;background:#1e3cc0;"></div>
<div class="a" style="left:417.60px;top:151.08px;width:3.87px;height:1.20px;background:#1e3cc0;"></div>
<div class="a" style="left:421.90px;top:151.08px;width:6.40px;height:1.20px;background:#1e3cc0;"></div>
<div class="a" style="left:428.91px;top:151.08px;width:6.09px;height:1.20px;background:#1e3cc0;"></div>
<div class="a" style="left:435.60px;top:152.18px;width:7.44px;height:1.20px;background:#1e3cc0;"></div>
<div class="a" style="left:443.78px;top:151.08px;width:7.68px;height:1.20px;background:#1e3cc0;"></div>
<div class="a" style="left:452.06px;top:152.18px;width:6.36px;height:1.20px;background:#1e3cc0;"></div>
<div class="a" style="left:458.86px;top:154.38px;width:3.62px;height:1.20px;background:#1e3cc0;"></div>
<div class="a" style="left:462.92px;top:154.38px;width:4.14px;height:1.20px;background:#1e3cc0;"></div>
<div class="a" style="left:467.53px;top:153.28px;width:3.66px;height:1.20px;background:#1e3cc0;"></div>
<div class="a" style="left:471.42px;top:153.28px;width:3.00px;height:1.20px;background:#1e3cc0;"></div>
<div class="a" style="left:474.94px;top:152.18px;width:8.69px;height:1.20px;background:#1e3cc0;"></div>
<div class="a" style="left:483.85px;top:151.08px;width:8.25px;height:1.20px;background:#1e3cc0;"></div>
<div class="a" style="left:492.52px;top:151.08px;width:6.81px;height:1.20px;background:#1e3cc0;"></div>
<div class="a" style="left:499.89px;top:151.08px;width:5.84px;height:1.20px;background:#1e3cc0;"></div>
<div class="a" style="left:506.45px;top:152.18px;width:8.96px;height:1.20px;background:#1e3cc0;"></div>
<div class="a" style="left:515.89px;top:152.18px;width:4.87px;height:1.20px;background:#1e3cc0;"></div>
<div class="a" style="left:521.03px;top:152.18px;width:5.06px;height:1.20px;background:#1e3cc0;"></div>
<div class="a" style="left:526.57px;top:151.08px;width:7.15px;height:1.20px;background:#1e3cc0;"></div>
<div class="a" style="left:533.93px;top:151.08px;width:8.71px;height:1.20px;background:#1e3cc0;"></div>
<div class="a" style="left:543.06px;top:151.08px;width:7.14px;height:1.20px;background:#1e3cc0;"></div>
<div class="a" style="left:550.85px;top:153.28px;width:4.79px;height:1.20px;background:#1e3cc0;"></div>
<div class="a" style="left:556.36px;top:153.28px;width:7.18px;height:1.20px;background:#1e3cc0;"></div>
<div class="a" style="left:564.05px;top:153.28px;width:8.45px;height:1.20px;background:#1e3cc0;"></div>
<div class="a" style="left:573.16px;top:151.08px;width:6.20px;height:1.20px;background:#1e3cc0;"></div>
<div class="a" style="left:579.86px;top:151.08px;width:6.82px;height:1.20px;background:#1e3cc0;"></div>
<div class="a" style="left:587.36px;top:151.08px;width:8.91px;height:1.20px;background:#1e3cc0;"></div>
<div class="a" style="left:596.59px;top:152.18px;width:4.44px;height:1.20px;background:#1e3cc0;"></div>
<div class="a" style="left:601.67px;top:151.08px;width:4.36px;height:1.20px;background:#1e3cc0;"></div>
<div class="a" style="left:606.53px;top:151.08px;width:7.39px;height:1.20px;background:#1e3cc0;"></div>
<div class="a" style="left:614.59px;top:151.08px;width:5.83px;height:1.20px;background:#1e3cc0;"></div>
<div class="a" style="left:621.04px;top:152.18px;width:8.74px;height:1.20px;background:#1e3cc0;"></div>
<div class="a" style="left:630.46px;top:152.18px;width:7.34px;height:1.20px;background:#1e3cc0;"></div>
<div class="a" style="left:638.57px;top:152.18px;width:5.19px;height:1.20px;background:#1e3cc0;"></div>
<div class="a" style="left:644.02px;top:152.18px;width:3.28px;height:1.20px;background:#1e3cc0;"></div>
<div class="a" style="left:173.00px;top:160.00px;width:178.00px;height:10.00px;background:#5369d2;"></div>
<div class="a" style="left:173.46px;top:162.80px;width:6.74px;height:1.20px;background:#1e3cc0;"></div>
<div class="a" style="left:180.91px;top:164.80px;width:5.88px;height:1.20px;background:#1e3cc0;"></div>
<div class="a" style="left:187.19px;top:162.80px;width:6.86px;height:1.20px;background:#1e3cc0;"></div>
<div class="a" style="left:194.65px;top:162.80px;width:8.46px;height:1.20px;background:#1e3cc0;"></div>
<div class="a" style="left:203.73px;top:162.80px;width:4.20px;height:1.20px;background:#1e3cc0;"></div>
<div class="a" style="left:208.39px;top:162.80px;width:6.82px;height:1.20px;background:#1e3cc0;"></div>
<div class="a" style="left:215.88px;top:163.80px;width:8.83px;height:1.20px;background:#1e3cc0;"></div>
<div class="a" style="left:225.19px;top:163.80px;width:7.46px;height:1.20px;background:#1e3cc0;"></div>
<div class="a" style="left:233.29px;top:163.80px;width:4.02px;height:1.20px;background:#1e3cc0;"></div>
<div class="a" style="left:237.52px;top:164.80px;width:6.54px;height:1.20px;background:#1e3cc0;"></div>
<div class="a" style="left:244.75px;top:162.80px;width:3.88px;height:1.20px;background:#1e3cc0;"></div>
<div class="a" style="left:249.19px;top:162.80px;width:5.85px;height:1.20px;background:#1e3cc0;"></div>
<div class="a" style="left:255.33px;top:162.80px;width:6.29px;height:1.20px;background:#1e3cc0;"></div>
<div class="a" style="left:261.83px;top:164.80px;width:8.83px;height:1.20px;background:#1e3cc0;"></div>
<div class="a" style="left:270.91px;top:164.80px;width:7.50px;height:1.20px;background:#1e3cc0;"></div>
<div class="a" style="left:278.87px;top:162.80px;width:8.23px;height:1.20px;background:#1e3cc0;"></div>
<div class="a" style="left:287.82px;top:162.80px;width:3.17px;height:1.20px;background:#1e3cc0;"></div>
<div class="a" style="left:291.37px;top:162.80px;width:4.44px;height:1.20px;background:#1e3cc0;"></div>
<div class="a" style="left:296.21px;top:162.80px;width:6.27px;height:1.20px;background:#1e3cc0;"></div>
<div class="a" style="left:302.75px;top:162.80px;width:8.46px;height:1.20px;background:#1e3cc0;"></div>
<div class="a" style="left:311.95px;top:162.80px;width:6.97px;height:1.20px;background:#1e3cc0;"></div>
<div class="a" style="left:319.67px;top:162.80px;width:5.52px;height:1.20px;background:#1e3cc0;"></div>
<div class="a" style="left:325.47px;top:162.80px;width:3.91px;height:1.20px;background:#1e3cc0;"></div>
<div class="a" style="left:329.59px;top:162.80px;width:5.64px;height:1.20px;background:#1e3cc0;"></div>
<div class="a" style="left:335.80px;top:162.80px;width:7.66px;height:1.20px;background:#1e3cc0;"></div>
<div class="a" style="left:343.76px;top:164.80px;width:5.84px;height:1.20px;background:#1e3cc0;"></div>
<div class="a" style="left:410.00px;top:160.00px;width:238.00px;height:10.00px;background:#5369d2;"></div>
<div class="a" style="left:410.70px;top:165.80px;width:3.37px;height:1.20px;background:#1e3cc0;"></div>
<div class="a" style="left:414.58px;top:163.80px;width:6.33px;height:1.20px;background:#1e3cc0;"></div>
<div class="a" style="left:421.58px;top:163.80px;width:8.30px;height:1.20px;background:#1e3cc0;"></div>
<div class="a" style="left:430.23px;top:162.80px;width:4.66px;height:1.20px;background:#1e3cc0;"></div>
<div class="a" style="left:435.15px;top:162.80px;width:5.71px;height:1.20px;background:#1e3cc0;"></div>
<div class="a" style="left:441.52px;top:163.80px;width:8.47px;height:1.20px;background:#1e3cc0;"></div>
<div class="a" style="left:450.39px;top:162.80px;width:8.84px;height:1.20px;background:#1e3cc0;"></div>
<div class="a" style="left:459.74px;top:163.80px;width:7.16px;height:1.20px;background:#1e3cc0;"></div>
<div class="a" style="left:467.40px;top:162.80px;width:7.84px;height:1.20px;background:#1e3cc0;"></div>
<div class="a" style="left:476.01px;top:162.80px;width:7.20px;height:1.20px;background:#1e3cc0;"></div>
<div class="a" style="left:483.95px;top:162.80px;width:8.36px;height:1.20px;background:#1e3cc0;"></div>
<div class="a" style="left:493.02px;top:162.80px;width:3.82px;height:1.20px;background:#1e3cc0;"></div>
<div class="a" style="left:497.27px;top:164.80px;width:4.90px;height:1.20px;background:#1e3cc0;"></div>
<div class="a" style="left:502.51px;top:166.20px;width:3.44px;height:1.20px;background:#1e3cc0;"></div>
<div class="a" style="left:506.33px;top:164.20px;width:3.73px;height:1.20px;background:#1e3cc0;"></div>
<div class="a" style="left:510.36px;top:166.20px;width:7.30px;height:1.20px;background:#1e3cc0;"></div>
<div class="a" style="left:518.08px;top:166.20px;width:4.52px;height:1.20px;background:#1e3cc0;"></div>
<div class="a" style="left:523.38px;top:166.20px;width:4.32px;height:1.20px;background:#1e3cc0;"></div>
<div class="a" style="left:528.13px;top:166.20px;width:5.92px;height:1.20px;background:#1e3cc0;"></div>
<div class="a" style="left:534.76px;top:166.20px;width:3.97px;height:1.20px;background:#1e3cc0;"></div>
<div class="a" style="left:539.52px;top:166.20px;width:5.42px;height:1.20px;background:#1e3cc0;"></div>
<div class="a" style="left:545.26px;top:166.20px;width:4.91px;height:1.20px;background:#1e3cc0;"></div>
<div class="a" style="left:550.59px;top:166.20px;width:5.03px;height:1.20px;background:#1e3cc0;"></div>
<div class="a" style="left:556.08px;top:166.20px;width:3.11px;height:1.20px;background:#1e3cc0;"></div>
<div class="a" style="left:559.70px;top:166.20px;width:4.77px;height:1.20px;background:#1e3cc0;"></div>
<div class="a" style="left:564.74px;top:166.20px;width:8.51px;height:1.20px;background:#1e3cc0;"></div>
<div class="a" style="left:574.04px;top:166.20px;width:3.63px;height:1.20px;background:#1e3cc0;"></div>
<div class="a" style="left:578.03px;top:166.20px;width:8.44px;height:1.20px;background:#1e3cc0;"></div>
<div class="a" style="left:586.83px;top:166.20px;width:3.78px;height:1.20px;background:#1e3cc0;"></div>
<div class="a" style="left:591.31px;top:166.20px;width:7.06px;height:1.20px;background:#1e3cc0;"></div>
<div class="a" style="left:598.81px;top:165.20px;width:6.22px;height:1.20px;background:#1e3cc0;"></div>
<div class="a" style="left:605.58px;top:165.20px;width:7.20px;height:1.20px;background:#1e3cc0;"></div>
<div class="a" style="left:613.15px;top:165.20px;width:7.80px;height:1.20px;background:#1e3cc0;"></div>
<div class="a" style="left:621.40px;top:165.20px;width:3.43px;height:1.20px;background:#1e3cc0;"></div>
<div class="a" style="left:625.41px;top:165.20px;width:7.81px;height:1.20px;background:#1e3cc0;"></div>
<div class="a" style="left:633.79px;top:165.20px;width:4.33px;height:1.20px;background:#1e3cc0;"></div>
<div class="a" style="left:638.84px;top:165.20px;width:5.72px;height:1.20px;background:#1e3cc0;"></div>
<div class="a" style="left:645.36px;top:165.20px;width:1.94px;height:1.20px;background:#1e3cc0;"></div>
<div class="a" style="left:143.00px;top:171.00px;width:25.00px;height:11.00px;background:#35b6b6;"></div>
<div class="a" style="left:143.00px;top:177.60px;width:25.00px;height:4.40px;background:#2fa9a9;"></div>
<div class="a" style="left:173.00px;top:171.00px;width:178.00px;height:11.00px;background:#35b6b6;"></div>
<div class="a" style="left:173.00px;top:177.60px;width:178.00px;height:4.40px;background:#2fa9a9;"></div>
<div class="a" style="left:351.00px;top:171.00px;width:59.00px;height:11.00px;background:#3aa9a9;"></div>
<div class="a" style="left:351.00px;top:177.60px;width:59.00px;height:4.40px;background:#34a0a0;"></div>
<div class="a" style="left:410.00px;top:171.00px;width:238.00px;height:11.00px;background:#35b6b6;"></div>
<div class="a" style="left:410.00px;top:177.60px;width:238.00px;height:4.40px;background:#2fa9a9;"></div>
<div class="a" style="left:380.00px;top:171.00px;width:15.00px;height:11.00px;background:#45cccc;"></div>
<div class="a" style="left:173.00px;top:194.00px;width:59.00px;height:11.00px;background:#3cbcbc;"></div>
<svg class="a" style="left:173.46px;top:196.80px;overflow:visible" width="58.3" height="3.6"><g transform="translate(0,1.80)"><path d="M0.0,-0.74 L0.6,-1.13 L1.3,-1.26 L1.9,-1.28 L2.5,-0.87 L3.1,-0.82 L3.8,-1.26 L4.4,-1.08 L5.0,-1.03 L5.6,-0.84 L6.3,-0.98 L6.9,-1.11 L7.5,-0.87 L8.2,-1.19 L8.8,-1.30 L9.4,-0.74 L10.0,-0.73 L10.7,-1.01 L11.3,-1.29 L11.9,-1.02 L12.5,-0.86 L13.2,-0.98 L13.8,-1.10 L14.4,-1.10 L15.1,-1.10 L15.7,-1.03 L16.3,-1.23 L16.9,-1.28 L17.6,-0.90 L18.2,-0.84 L18.8,-0.85 L19.4,-0.83 L20.1,-1.23 L20.7,-1.14 L21.3,-0.80 L22.0,-1.29 L22.6,-1.29 L23.2,-1.20 L23.8,-0.72 L24.5,-1.08 L25.1,-1.23 L25.7,-0.97 L26.3,-0.75 L27.0,-1.10 L27.6,-0.94 L28.2,-1.01 L28.9,-1.28 L29.5,-1.07 L30.1,-1.12 L30.7,-0.74 L31.4,-0.82 L32.0,-0.87 L32.6,-0.72 L33.2,-0.93 L33.9,-0.91 L34.5,-1.29 L35.1,-0.90 L35.8,-0.74 L36.4,-1.23 L37.0,-0.84 L37.6,-0.82 L38.3,-0.91 L38.9,-0.76 L39.5,-0.88 L40.1,-1.10 L40.8,-0.86 L41.4,-1.17 L42.0,-0.77 L42.7,-1.19 L43.3,-0.80 L43.9,-1.06 L44.5,-0.95 L45.2,-0.89 L45.8,-1.08 L46.4,-0.76 L47.0,-1.28 L47.7,-1.21 L48.3,-0.81 L48.9,-1.24 L49.6,-1.17 L50.2,-1.06 L50.8,-1.16 L51.4,-1.14 L52.1,-1.00 L52.7,-0.88 L53.3,-1.08 L53.9,-0.80 L54.6,-1.20 L55.2,-1.13 L55.8,-1.02 L56.5,-0.97 L57.1,-1.13 L57.7,-1.01 L58.3,-1.25 L58.3,1.25 L57.7,1.01 L57.1,1.13 L56.5,0.97 L55.8,1.02 L55.2,1.13 L54.6,1.20 L53.9,0.80 L53.3,1.08 L52.7,0.88 L52.1,1.00 L51.4,1.14 L50.8,1.16 L50.2,1.06 L49.6,1.17 L48.9,1.24 L48.3,0.81 L47.7,1.21 L47.0,1.28 L46.4,0.76 L45.8,1.08 L45.2,0.89 L44.5,0.95 L43.9,1.06 L43.3,0.80 L42.7,1.19 L42.0,0.77 L41.4,1.17 L40.8,0.86 L40.1,1.10 L39.5,0.88 L38.9,0.76 L38.3,0.91 L37.6,0.82 L37.0,0.84 L36.4,1.23 L35.8,0.74 L35.1,0.90 L34.5,1.29 L33.9,0.91 L33.2,0.93 L32.6,0.72 L32.0,0.87 L31.4,0.82 L30.7,0.74 L30.1,1.12 L29.5,1.07 L28.9,1.28 L28.2,1.01 L27.6,0.94 L27.0,1.10 L26.3,0.75 L25.7,0.97 L25.1,1.23 L24.5,1.08 L23.8,0.72 L23.2,1.20 L22.6,1.29 L22.0,1.29 L21.3,0.80 L20.7,1.14 L20.1,1.23 L19.4,0.83 L18.8,0.85 L18.2,0.84 L17.6,0.90 L16.9,1.28 L16.3,1.23 L15.7,1.03 L15.1,1.10 L14.4,1.10 L13.8,1.10 L13.2,0.98 L12.5,0.86 L11.9,1.02 L11.3,1.29 L10.7,1.01 L10.0,0.73 L9.4,0.74 L8.8,1.30 L8.2,1.19 L7.5,0.87 L6.9,1.11 L6.3,0.98 L5.6,0.84 L5.0,1.03 L4.4,1.08 L3.8,1.26 L3.1,0.82 L2.5,0.87 L1.9,1.28 L1.3,1.26 L0.6,1.13 L0.0,0.74Z" fill="#0d2828"/></g></svg>
<div class="a" style="left:174.26px;top:201.20px;width:1.60px;height:1.20px;background:#0d2828;"></div>
<div class="a" style="left:176.46px;top:201.40px;width:7.00px;height:0.80px;background:rgba(10,40,40,0.35);"></div>
<div class="a" style="left:410.00px;top:194.00px;width:238.00px;height:11.00px;background:#3cbcbc;"></div>
<svg class="a" style="left:410.70px;top:196.80px;overflow:visible" width="236.6" height="3.6"><g transform="translate(0,1.80)"><path d="M0.0,-1.16 L0.6,-1.05 L1.3,-1.19 L1.9,-0.72 L2.5,-1.12 L3.1,-1.18 L3.8,-1.13 L4.4,-1.27 L5.0,-1.09 L5.6,-0.76 L6.3,-0.74 L6.9,-1.09 L7.5,-1.28 L8.1,-0.94 L8.8,-0.98 L9.4,-0.74 L10.0,-0.73 L10.6,-1.03 L11.3,-0.86 L11.9,-0.87 L12.5,-0.98 L13.1,-0.76 L13.8,-1.26 L14.4,-1.24 L15.0,-0.77 L15.6,-1.02 L16.3,-1.15 L16.9,-0.99 L17.5,-1.19 L18.2,-1.21 L18.8,-0.85 L19.4,-1.16 L20.0,-0.85 L20.7,-1.10 L21.3,-0.98 L21.9,-1.21 L22.5,-0.76 L23.2,-1.25 L23.8,-0.88 L24.4,-0.74 L25.0,-1.09 L25.7,-0.83 L26.3,-1.07 L26.9,-0.91 L27.5,-1.10 L28.2,-1.12 L28.8,-1.08 L29.4,-0.79 L30.0,-1.00 L30.7,-1.00 L31.3,-1.28 L31.9,-0.77 L32.5,-0.84 L33.2,-1.00 L33.8,-1.13 L34.4,-0.88 L35.1,-0.99 L35.7,-1.16 L36.3,-1.30 L36.9,-1.04 L37.6,-0.90 L38.2,-0.77 L38.8,-0.99 L39.4,-0.88 L40.1,-0.76 L40.7,-1.01 L41.3,-1.30 L41.9,-1.30 L42.6,-0.94 L43.2,-1.25 L43.8,-1.26 L44.4,-0.76 L45.1,-0.77 L45.7,-1.15 L46.3,-0.87 L46.9,-0.93 L47.6,-1.07 L48.2,-1.08 L48.8,-0.88 L49.4,-0.78 L50.1,-0.93 L50.7,-1.01 L51.3,-1.23 L52.0,-0.95 L52.6,-0.81 L53.2,-1.27 L53.8,-1.11 L54.5,-0.95 L55.1,-1.14 L55.7,-0.96 L56.3,-0.94 L57.0,-0.79 L57.6,-0.91 L58.2,-0.90 L58.8,-0.91 L59.5,-0.95 L60.1,-1.26 L60.7,-0.83 L61.3,-0.72 L62.0,-1.15 L62.6,-0.86 L63.2,-0.75 L63.8,-0.94 L64.5,-1.22 L65.1,-0.76 L65.7,-1.26 L66.3,-1.16 L67.0,-1.21 L67.6,-0.88 L68.2,-0.75 L68.9,-1.10 L69.5,-1.09 L70.1,-0.80 L70.7,-1.28 L71.4,-0.97 L72.0,-0.90 L72.6,-1.17 L73.2,-1.17 L73.9,-0.97 L74.5,-0.73 L75.1,-1.16 L75.7,-0.95 L76.4,-1.23 L77.0,-1.04 L77.6,-0.83 L78.2,-0.76 L78.9,-1.26 L79.5,-0.96 L80.1,-1.07 L80.7,-0.80 L81.4,-1.22 L82.0,-1.00 L82.6,-1.25 L83.2,-1.04 L83.9,-0.81 L84.5,-0.96 L85.1,-0.88 L85.8,-0.86 L86.4,-1.15 L87.0,-1.10 L87.6,-0.95 L88.3,-0.85 L88.9,-1.00 L89.5,-1.11 L90.1,-0.79 L90.8,-1.09 L91.4,-0.76 L92.0,-1.01 L92.6,-1.19 L93.3,-1.04 L93.9,-0.98 L94.5,-0.91 L95.1,-1.16 L95.8,-0.97 L96.4,-1.04 L97.0,-0.86 L97.6,-0.82 L98.3,-1.04 L98.9,-0.90 L99.5,-0.93 L100.1,-1.19 L100.8,-0.83 L101.4,-0.73 L102.0,-1.22 L102.7,-0.94 L103.3,-1.15 L103.9,-0.84 L104.5,-0.87 L105.2,-1.15 L105.8,-1.01 L106.4,-1.05 L107.0,-0.93 L107.7,-1.12 L108.3,-1.02 L108.9,-1.18 L109.5,-1.21 L110.2,-0.77 L110.8,-1.24 L111.4,-0.94 L112.0,-1.09 L112.7,-0.97 L113.3,-0.90 L113.9,-1.19 L114.5,-1.28 L115.2,-0.79 L115.8,-0.96 L116.4,-1.16 L117.0,-1.19 L117.7,-1.28 L118.3,-1.00 L118.9,-0.76 L119.6,-1.26 L120.2,-1.26 L120.8,-1.02 L121.4,-0.99 L122.1,-0.98 L122.7,-1.17 L123.3,-0.85 L123.9,-0.80 L124.6,-1.28 L125.2,-0.78 L125.8,-1.20 L126.4,-1.13 L127.1,-1.21 L127.7,-1.24 L128.3,-0.76 L128.9,-1.17 L129.6,-0.72 L130.2,-0.79 L130.8,-1.05 L131.4,-0.74 L132.1,-1.13 L132.7,-1.28 L133.3,-1.08 L133.9,-1.02 L134.6,-0.97 L135.2,-1.16 L135.8,-0.77 L136.5,-0.89 L137.1,-1.27 L137.7,-0.83 L138.3,-0.87 L139.0,-1.18 L139.6,-0.72 L140.2,-1.03 L140.8,-1.30 L141.5,-0.88 L142.1,-0.90 L142.7,-1.21 L143.3,-0.86 L144.0,-1.02 L144.6,-1.03 L145.2,-0.73 L145.8,-0.96 L146.5,-1.10 L147.1,-0.75 L147.7,-0.83 L148.3,-1.23 L149.0,-1.09 L149.6,-0.76 L150.2,-0.85 L150.8,-0.96 L151.5,-0.93 L152.1,-1.00 L152.7,-1.12 L153.4,-1.14 L154.0,-0.93 L154.6,-0.95 L155.2,-0.72 L155.9,-0.89 L156.5,-1.21 L157.1,-0.75 L157.7,-1.00 L158.4,-0.83 L159.0,-1.16 L159.6,-0.83 L160.2,-0.99 L160.9,-0.87 L161.5,-1.24 L162.1,-0.78 L162.7,-1.08 L163.4,-1.07 L164.0,-1.24 L164.6,-1.00 L165.2,-1.25 L165.9,-0.75 L166.5,-1.06 L167.1,-1.25 L167.7,-0.75 L168.4,-0.73 L169.0,-1.06 L169.6,-0.96 L170.3,-1.13 L170.9,-0.82 L171.5,-0.98 L172.1,-1.13 L172.8,-0.90 L173.4,-0.78 L174.0,-0.76 L174.6,-0.81 L175.3,-0.83 L175.9,-1.10 L176.5,-1.02 L177.1,-0.99 L177.8,-0.90 L178.4,-1.14 L179.0,-1.21 L179.6,-1.29 L180.3,-0.97 L180.9,-0.78 L181.5,-0.76 L182.1,-0.76 L182.8,-0.96 L183.4,-1.23 L184.0,-1.04 L184.6,-1.16 L185.3,-0.94 L185.9,-1.16 L186.5,-0.90 L187.2,-1.19 L187.8,-0.77 L188.4,-1.13 L189.0,-0.83 L189.7,-1.03 L190.3,-0.98 L190.9,-0.90 L191.5,-1.15 L192.2,-0.99 L192.8,-1.08 L193.4,-0.86 L194.0,-1.08 L194.7,-0.95 L195.3,-0.93 L195.9,-0.99 L196.5,-1.18 L197.2,-0.75 L197.8,-0.83 L198.4,-0.75 L199.0,-1.07 L199.7,-0.93 L200.3,-0.91 L200.9,-1.27 L201.5,-0.74 L202.2,-1.15 L202.8,-1.12 L203.4,-1.26 L204.1,-0.89 L204.7,-1.14 L205.3,-1.06 L205.9,-1.19 L206.6,-1.27 L207.2,-0.75 L207.8,-1.20 L208.4,-0.78 L209.1,-1.13 L209.7,-0.99 L210.3,-1.17 L210.9,-1.18 L211.6,-1.25 L212.2,-1.19 L212.8,-0.79 L213.4,-1.01 L214.1,-0.72 L214.7,-1.26 L215.3,-0.89 L215.9,-1.12 L216.6,-0.80 L217.2,-0.85 L217.8,-1.22 L218.4,-0.98 L219.1,-1.17 L219.7,-1.06 L220.3,-1.01 L221.0,-0.94 L221.6,-0.81 L222.2,-0.95 L222.8,-1.09 L223.5,-1.00 L224.1,-1.03 L224.7,-0.81 L225.3,-0.96 L226.0,-0.78 L226.6,-0.76 L227.2,-1.08 L227.8,-0.84 L228.5,-0.96 L229.1,-1.29 L229.7,-1.28 L230.3,-0.82 L231.0,-0.79 L231.6,-0.98 L232.2,-1.24 L232.8,-0.85 L233.5,-1.03 L234.1,-1.17 L234.7,-1.16 L235.3,-1.17 L236.0,-0.89 L236.6,-0.88 L236.6,0.88 L236.0,0.89 L235.3,1.17 L234.7,1.16 L234.1,1.17 L233.5,1.03 L232.8,0.85 L232.2,1.24 L231.6,0.98 L231.0,0.79 L230.3,0.82 L229.7,1.28 L229.1,1.29 L228.5,0.96 L227.8,0.84 L227.2,1.08 L226.6,0.76 L226.0,0.78 L225.3,0.96 L224.7,0.81 L224.1,1.03 L223.5,1.00 L222.8,1.09 L222.2,0.95 L221.6,0.81 L221.0,0.94 L220.3,1.01 L219.7,1.06 L219.1,1.17 L218.4,0.98 L217.8,1.22 L217.2,0.85 L216.6,0.80 L215.9,1.12 L215.3,0.89 L214.7,1.26 L214.1,0.72 L213.4,1.01 L212.8,0.79 L212.2,1.19 L211.6,1.25 L210.9,1.18 L210.3,1.17 L209.7,0.99 L209.1,1.13 L208.4,0.78 L207.8,1.20 L207.2,0.75 L206.6,1.27 L205.9,1.19 L205.3,1.06 L204.7,1.14 L204.1,0.89 L203.4,1.26 L202.8,1.12 L202.2,1.15 L201.5,0.74 L200.9,1.27 L200.3,0.91 L199.7,0.93 L199.0,1.07 L198.4,0.75 L197.8,0.83 L197.2,0.75 L196.5,1.18 L195.9,0.99 L195.3,0.93 L194.7,0.95 L194.0,1.08 L193.4,0.86 L192.8,1.08 L192.2,0.99 L191.5,1.15 L190.9,0.90 L190.3,0.98 L189.7,1.03 L189.0,0.83 L188.4,1.13 L187.8,0.77 L187.2,1.19 L186.5,0.90 L185.9,1.16 L185.3,0.94 L184.6,1.16 L184.0,1.04 L183.4,1.23 L182.8,0.96 L182.1,0.76 L181.5,0.76 L180.9,0.78 L180.3,0.97 L179.6,1.29 L179.0,1.21 L178.4,1.14 L177.8,0.90 L177.1,0.99 L176.5,1.02 L175.9,1.10 L175.3,0.83 L174.6,0.81 L174.0,0.76 L173.4,0.78 L172.8,0.90 L172.1,1.13 L171.5,0.98 L170.9,0.82 L170.3,1.13 L169.6,0.96 L169.0,1.06 L168.4,0.73 L167.7,0.75 L167.1,1.25 L166.5,1.06 L165.9,0.75 L165.2,1.25 L164.6,1.00 L164.0,1.24 L163.4,1.07 L162.7,1.08 L162.1,0.78 L161.5,1.24 L160.9,0.87 L160.2,0.99 L159.6,0.83 L159.0,1.16 L158.4,0.83 L157.7,1.00 L157.1,0.75 L156.5,1.21 L155.9,0.89 L155.2,0.72 L154.6,0.95 L154.0,0.93 L153.4,1.14 L152.7,1.12 L152.1,1.00 L151.5,0.93 L150.8,0.96 L150.2,0.85 L149.6,0.76 L149.0,1.09 L148.3,1.23 L147.7,0.83 L147.1,0.75 L146.5,1.10 L145.8,0.96 L145.2,0.73 L144.6,1.03 L144.0,1.02 L143.3,0.86 L142.7,1.21 L142.1,0.90 L141.5,0.88 L140.8,1.30 L140.2,1.03 L139.6,0.72 L139.0,1.18 L138.3,0.87 L137.7,0.83 L137.1,1.27 L136.5,0.89 L135.8,0.77 L135.2,1.16 L134.6,0.97 L133.9,1.02 L133.3,1.08 L132.7,1.28 L132.1,1.13 L131.4,0.74 L130.8,1.05 L130.2,0.79 L129.6,0.72 L128.9,1.17 L128.3,0.76 L127.7,1.24 L127.1,1.21 L126.4,1.13 L125.8,1.20 L125.2,0.78 L124.6,1.28 L123.9,0.80 L123.3,0.85 L122.7,1.17 L122.1,0.98 L121.4,0.99 L120.8,1.02 L120.2,1.26 L119.6,1.26 L118.9,0.76 L118.3,1.00 L117.7,1.28 L117.0,1.19 L116.4,1.16 L115.8,0.96 L115.2,0.79 L114.5,1.28 L113.9,1.19 L113.3,0.90 L112.7,0.97 L112.0,1.09 L111.4,0.94 L110.8,1.24 L110.2,0.77 L109.5,1.21 L108.9,1.18 L108.3,1.02 L107.7,1.12 L107.0,0.93 L106.4,1.05 L105.8,1.01 L105.2,1.15 L104.5,0.87 L103.9,0.84 L103.3,1.15 L102.7,0.94 L102.0,1.22 L101.4,0.73 L100.8,0.83 L100.1,1.19 L99.5,0.93 L98.9,0.90 L98.3,1.04 L97.6,0.82 L97.0,0.86 L96.4,1.04 L95.8,0.97 L95.1,1.16 L94.5,0.91 L93.9,0.98 L93.3,1.04 L92.6,1.19 L92.0,1.01 L91.4,0.76 L90.8,1.09 L90.1,0.79 L89.5,1.11 L88.9,1.00 L88.3,0.85 L87.6,0.95 L87.0,1.10 L86.4,1.15 L85.8,0.86 L85.1,0.88 L84.5,0.96 L83.9,0.81 L83.2,1.04 L82.6,1.25 L82.0,1.00 L81.4,1.22 L80.7,0.80 L80.1,1.07 L79.5,0.96 L78.9,1.26 L78.2,0.76 L77.6,0.83 L77.0,1.04 L76.4,1.23 L75.7,0.95 L75.1,1.16 L74.5,0.73 L73.9,0.97 L73.2,1.17 L72.6,1.17 L72.0,0.90 L71.4,0.97 L70.7,1.28 L70.1,0.80 L69.5,1.09 L68.9,1.10 L68.2,0.75 L67.6,0.88 L67.0,1.21 L66.3,1.16 L65.7,1.26 L65.1,0.76 L64.5,1.22 L63.8,0.94 L63.2,0.75 L62.6,0.86 L62.0,1.15 L61.3,0.72 L60.7,0.83 L60.1,1.26 L59.5,0.95 L58.8,0.91 L58.2,0.90 L57.6,0.91 L57.0,0.79 L56.3,0.94 L55.7,0.96 L55.1,1.14 L54.5,0.95 L53.8,1.11 L53.2,1.27 L52.6,0.81 L52.0,0.95 L51.3,1.23 L50.7,1.01 L50.1,0.93 L49.4,0.78 L48.8,0.88 L48.2,1.08 L47.6,1.07 L46.9,0.93 L46.3,0.87 L45.7,1.15 L45.1,0.77 L44.4,0.76 L43.8,1.26 L43.2,1.25 L42.6,0.94 L41.9,1.30 L41.3,1.30 L40.7,1.01 L40.1,0.76 L39.4,0.88 L38.8,0.99 L38.2,0.77 L37.6,0.90 L36.9,1.04 L36.3,1.30 L35.7,1.16 L35.1,0.99 L34.4,0.88 L33.8,1.13 L33.2,1.00 L32.5,0.84 L31.9,0.77 L31.3,1.28 L30.7,1.00 L30.0,1.00 L29.4,0.79 L28.8,1.08 L28.2,1.12 L27.5,1.10 L26.9,0.91 L26.3,1.07 L25.7,0.83 L25.0,1.09 L24.4,0.74 L23.8,0.88 L23.2,1.25 L22.5,0.76 L21.9,1.21 L21.3,0.98 L20.7,1.10 L20.0,0.85 L19.4,1.16 L18.8,0.85 L18.2,1.21 L17.5,1.19 L16.9,0.99 L16.3,1.15 L15.6,1.02 L15.0,0.77 L14.4,1.24 L13.8,1.26 L13.1,0.76 L12.5,0.98 L11.9,0.87 L11.3,0.86 L10.6,1.03 L10.0,0.73 L9.4,0.74 L8.8,0.98 L8.1,0.94 L7.5,1.28 L6.9,1.09 L6.3,0.74 L5.6,0.76 L5.0,1.09 L4.4,1.27 L3.8,1.13 L3.1,1.18 L2.5,1.12 L1.9,0.72 L1.3,1.19 L0.6,1.05 L0.0,1.16Z" fill="#0d2828"/></g></svg>
<div class="a" style="left:411.50px;top:201.20px;width:1.60px;height:1.20px;background:#0d2828;"></div>
<div class="a" style="left:413.70px;top:201.40px;width:7.00px;height:0.80px;background:rgba(10,40,40,0.35);"></div>
<div class="a" style="left:143.00px;top:206.00px;width:25.00px;height:10.00px;background:#3cbcbc;"></div>
<svg class="a" style="left:143.80px;top:208.80px;overflow:visible" width="23.3" height="3.6"><g transform="translate(0,1.80)"><path d="M0.0,-0.87 L0.6,-0.86 L1.3,-0.87 L1.9,-0.97 L2.5,-0.82 L3.1,-0.85 L3.8,-0.88 L4.4,-1.25 L5.0,-0.83 L5.7,-0.75 L6.3,-0.86 L6.9,-0.86 L7.6,-1.02 L8.2,-1.10 L8.8,-0.77 L9.4,-0.99 L10.1,-0.74 L10.7,-0.72 L11.3,-1.23 L12.0,-0.85 L12.6,-0.98 L13.2,-0.93 L13.9,-1.23 L14.5,-0.85 L15.1,-0.74 L15.7,-1.07 L16.4,-1.20 L17.0,-0.83 L17.6,-0.76 L18.3,-1.01 L18.9,-0.82 L19.5,-1.07 L20.2,-1.17 L20.8,-1.10 L21.4,-0.72 L22.0,-1.09 L22.7,-1.13 L23.3,-0.92 L23.3,0.92 L22.7,1.13 L22.0,1.09 L21.4,0.72 L20.8,1.10 L20.2,1.17 L19.5,1.07 L18.9,0.82 L18.3,1.01 L17.6,0.76 L17.0,0.83 L16.4,1.20 L15.7,1.07 L15.1,0.74 L14.5,0.85 L13.9,1.23 L13.2,0.93 L12.6,0.98 L12.0,0.85 L11.3,1.23 L10.7,0.72 L10.1,0.74 L9.4,0.99 L8.8,0.77 L8.2,1.10 L7.6,1.02 L6.9,0.86 L6.3,0.86 L5.7,0.75 L5.0,0.83 L4.4,1.25 L3.8,0.88 L3.1,0.85 L2.5,0.82 L1.9,0.97 L1.3,0.87 L0.6,0.86 L0.0,0.87Z" fill="#0d2828"/></g></svg>
<div class="a" style="left:144.60px;top:213.20px;width:1.60px;height:1.20px;background:#0d2828;"></div>
<div class="a" style="left:146.80px;top:213.40px;width:7.00px;height:0.80px;background:rgba(10,40,40,0.35);"></div>
<div class="a" style="left:173.00px;top:206.00px;width:59.00px;height:10.00px;background:#3cbcbc;"></div>
<svg class="a" style="left:173.46px;top:208.80px;overflow:visible" width="58.3" height="3.6"><g transform="translate(0,1.80)"><path d="M0.0,-0.74 L0.6,-0.91 L1.3,-0.74 L1.9,-1.30 L2.5,-0.74 L3.1,-1.14 L3.8,-1.25 L4.4,-1.19 L5.0,-1.19 L5.6,-0.95 L6.3,-0.93 L6.9,-1.08 L7.5,-0.76 L8.2,-0.73 L8.8,-1.00 L9.4,-1.00 L10.0,-0.95 L10.7,-1.18 L11.3,-1.10 L11.9,-0.81 L12.5,-1.03 L13.2,-1.10 L13.8,-0.95 L14.4,-0.87 L15.1,-1.29 L15.7,-1.11 L16.3,-0.96 L16.9,-0.75 L17.6,-1.15 L18.2,-1.23 L18.8,-0.96 L19.4,-0.73 L20.1,-1.16 L20.7,-1.18 L21.3,-1.09 L22.0,-0.94 L22.6,-0.95 L23.2,-1.27 L23.8,-0.97 L24.5,-0.81 L25.1,-0.78 L25.7,-0.77 L26.3,-1.05 L27.0,-0.93 L27.6,-1.17 L28.2,-0.79 L28.9,-0.75 L29.5,-0.80 L30.1,-1.19 L30.7,-0.95 L31.4,-1.05 L32.0,-1.26 L32.6,-1.15 L33.2,-0.82 L33.9,-0.92 L34.5,-0.81 L35.1,-0.82 L35.8,-0.75 L36.4,-0.94 L37.0,-1.16 L37.6,-1.18 L38.3,-1.19 L38.9,-0.89 L39.5,-1.20 L40.1,-0.74 L40.8,-1.25 L41.4,-0.90 L42.0,-1.07 L42.7,-1.09 L43.3,-0.77 L43.9,-1.13 L44.5,-1.12 L45.2,-1.24 L45.8,-1.09 L46.4,-1.22 L47.0,-1.08 L47.7,-1.07 L48.3,-0.83 L48.9,-0.99 L49.6,-1.05 L50.2,-0.74 L50.8,-1.26 L51.4,-0.81 L52.1,-0.93 L52.7,-0.80 L53.3,-1.28 L53.9,-1.19 L54.6,-0.83 L55.2,-1.23 L55.8,-1.21 L56.5,-1.11 L57.1,-1.11 L57.7,-0.90 L58.3,-0.94 L58.3,0.94 L57.7,0.90 L57.1,1.11 L56.5,1.11 L55.8,1.21 L55.2,1.23 L54.6,0.83 L53.9,1.19 L53.3,1.28 L52.7,0.80 L52.1,0.93 L51.4,0.81 L50.8,1.26 L50.2,0.74 L49.6,1.05 L48.9,0.99 L48.3,0.83 L47.7,1.07 L47.0,1.08 L46.4,1.22 L45.8,1.09 L45.2,1.24 L44.5,1.12 L43.9,1.13 L43.3,0.77 L42.7,1.09 L42.0,1.07 L41.4,0.90 L40.8,1.25 L40.1,0.74 L39.5,1.20 L38.9,0.89 L38.3,1.19 L37.6,1.18 L37.0,1.16 L36.4,0.94 L35.8,0.75 L35.1,0.82 L34.5,0.81 L33.9,0.92 L33.2,0.82 L32.6,1.15 L32.0,1.26 L31.4,1.05 L30.7,0.95 L30.1,1.19 L29.5,0.80 L28.9,0.75 L28.2,0.79 L27.6,1.17 L27.0,0.93 L26.3,1.05 L25.7,0.77 L25.1,0.78 L24.5,0.81 L23.8,0.97 L23.2,1.27 L22.6,0.95 L22.0,0.94 L21.3,1.09 L20.7,1.18 L20.1,1.16 L19.4,0.73 L18.8,0.96 L18.2,1.23 L17.6,1.15 L16.9,0.75 L16.3,0.96 L15.7,1.11 L15.1,1.29 L14.4,0.87 L13.8,0.95 L13.2,1.10 L12.5,1.03 L11.9,0.81 L11.3,1.10 L10.7,1.18 L10.0,0.95 L9.4,1.00 L8.8,1.00 L8.2,0.73 L7.5,0.76 L6.9,1.08 L6.3,0.93 L5.6,0.95 L5.0,1.19 L4.4,1.19 L3.8,1.25 L3.1,1.14 L2.5,0.74 L1.9,1.30 L1.3,0.74 L0.6,0.91 L0.0,0.74Z" fill="#0d2828"/></g></svg>
<div class="a" style="left:174.26px;top:213.20px;width:1.60px;height:1.20px;background:#0d2828;"></div>
<div class="a" style="left:176.46px;top:213.40px;width:7.00px;height:0.80px;background:rgba(10,40,40,0.35);"></div>
<div class="a" style="left:410.00px;top:206.00px;width:238.00px;height:10.00px;background:#3cbcbc;"></div>
<svg class="a" style="left:410.70px;top:208.80px;overflow:visible" width="236.6" height="3.6"><g transform="translate(0,1.80)"><path d="M0.0,-0.98 L0.6,-1.21 L1.3,-1.17 L1.9,-1.09 L2.5,-0.90 L3.1,-0.86 L3.8,-0.94 L4.4,-0.93 L5.0,-1.01 L5.6,-0.82 L6.3,-0.72 L6.9,-1.29 L7.5,-0.99 L8.1,-0.98 L8.8,-1.08 L9.4,-1.19 L10.0,-1.20 L10.6,-1.19 L11.3,-0.95 L11.9,-0.75 L12.5,-0.92 L13.1,-0.93 L13.8,-1.18 L14.4,-1.01 L15.0,-1.10 L15.6,-0.74 L16.3,-0.79 L16.9,-1.25 L17.5,-0.90 L18.2,-1.14 L18.8,-0.76 L19.4,-1.15 L20.0,-1.24 L20.7,-1.10 L21.3,-1.17 L21.9,-0.73 L22.5,-0.75 L23.2,-1.07 L23.8,-1.12 L24.4,-0.78 L25.0,-0.79 L25.7,-1.23 L26.3,-0.88 L26.9,-1.19 L27.5,-1.18 L28.2,-1.12 L28.8,-1.14 L29.4,-0.84 L30.0,-1.20 L30.7,-1.07 L31.3,-0.86 L31.9,-0.90 L32.5,-1.07 L33.2,-1.24 L33.8,-0.98 L34.4,-0.86 L35.1,-1.28 L35.7,-1.00 L36.3,-1.06 L36.9,-1.08 L37.6,-0.85 L38.2,-0.93 L38.8,-0.83 L39.4,-0.95 L40.1,-1.09 L40.7,-0.88 L41.3,-0.91 L41.9,-0.94 L42.6,-1.18 L43.2,-0.87 L43.8,-1.16 L44.4,-0.74 L45.1,-1.22 L45.7,-1.28 L46.3,-0.98 L46.9,-1.02 L47.6,-1.12 L48.2,-1.24 L48.8,-0.86 L49.4,-1.03 L50.1,-1.22 L50.7,-1.15 L51.3,-0.93 L52.0,-0.93 L52.6,-0.93 L53.2,-0.80 L53.8,-0.91 L54.5,-0.76 L55.1,-0.85 L55.7,-1.07 L56.3,-1.28 L57.0,-0.89 L57.6,-1.02 L58.2,-0.90 L58.8,-1.28 L59.5,-1.22 L60.1,-1.26 L60.7,-1.24 L61.3,-1.14 L62.0,-1.15 L62.6,-0.84 L63.2,-0.89 L63.8,-1.08 L64.5,-0.96 L65.1,-0.93 L65.7,-0.74 L66.3,-1.00 L67.0,-1.07 L67.6,-0.74 L68.2,-0.75 L68.9,-1.05 L69.5,-0.89 L70.1,-1.02 L70.7,-1.03 L71.4,-0.96 L72.0,-0.89 L72.6,-0.79 L73.2,-0.93 L73.9,-1.20 L74.5,-0.81 L75.1,-0.72 L75.7,-1.18 L76.4,-1.13 L77.0,-0.98 L77.6,-0.75 L78.2,-0.80 L78.9,-1.10 L79.5,-0.87 L80.1,-1.19 L80.7,-1.28 L81.4,-0.75 L82.0,-1.20 L82.6,-1.24 L83.2,-1.06 L83.9,-1.05 L84.5,-1.07 L85.1,-1.02 L85.8,-1.00 L86.4,-0.81 L87.0,-0.72 L87.6,-0.75 L88.3,-0.73 L88.9,-0.82 L89.5,-0.81 L90.1,-1.25 L90.8,-0.78 L91.4,-1.07 L92.0,-1.10 L92.6,-0.83 L93.3,-0.96 L93.9,-1.02 L94.5,-1.09 L95.1,-1.09 L95.8,-0.96 L96.4,-1.07 L97.0,-1.01 L97.6,-0.75 L98.3,-1.08 L98.9,-1.30 L99.5,-1.14 L100.1,-0.99 L100.8,-1.03 L101.4,-0.93 L102.0,-0.97 L102.7,-1.25 L103.3,-0.76 L103.9,-1.10 L104.5,-0.82 L105.2,-1.30 L105.8,-0.87 L106.4,-1.09 L107.0,-0.79 L107.7,-1.24 L108.3,-1.26 L108.9,-1.27 L109.5,-0.87 L110.2,-0.75 L110.8,-1.09 L111.4,-1.11 L112.0,-1.12 L112.7,-1.25 L113.3,-1.28 L113.9,-0.89 L114.5,-1.26 L115.2,-1.24 L115.8,-0.76 L116.4,-1.01 L117.0,-0.81 L117.7,-1.24 L118.3,-1.21 L118.9,-0.83 L119.6,-0.81 L120.2,-1.25 L120.8,-0.83 L121.4,-0.94 L122.1,-1.07 L122.7,-0.94 L123.3,-1.21 L123.9,-1.25 L124.6,-1.29 L125.2,-1.21 L125.8,-1.03 L126.4,-0.99 L127.1,-1.03 L127.7,-0.72 L128.3,-0.73 L128.9,-1.27 L129.6,-0.85 L130.2,-1.23 L130.8,-1.18 L131.4,-0.94 L132.1,-1.06 L132.7,-1.05 L133.3,-0.82 L133.9,-0.73 L134.6,-0.78 L135.2,-1.08 L135.8,-0.81 L136.5,-1.29 L137.1,-1.12 L137.7,-0.73 L138.3,-0.80 L139.0,-1.09 L139.6,-0.74 L140.2,-0.75 L140.8,-0.74 L141.5,-1.22 L142.1,-1.16 L142.7,-0.83 L143.3,-1.27 L144.0,-1.03 L144.6,-1.10 L145.2,-1.23 L145.8,-1.16 L146.5,-1.13 L147.1,-0.94 L147.7,-0.86 L148.3,-0.83 L149.0,-0.73 L149.6,-1.27 L150.2,-1.25 L150.8,-1.16 L151.5,-0.77 L152.1,-1.15 L152.7,-1.08 L153.4,-0.99 L154.0,-0.79 L154.6,-1.18 L155.2,-1.09 L155.9,-0.89 L156.5,-0.91 L157.1,-0.87 L157.7,-0.92 L158.4,-1.26 L159.0,-0.74 L159.6,-1.16 L160.2,-1.25 L160.9,-1.17 L161.5,-1.07 L162.1,-0.99 L162.7,-0.88 L163.4,-1.15 L164.0,-1.18 L164.6,-0.73 L165.2,-1.02 L165.9,-0.77 L166.5,-0.99 L167.1,-0.74 L167.7,-1.05 L168.4,-1.13 L169.0,-1.20 L169.6,-1.05 L170.3,-0.88 L170.9,-0.97 L171.5,-1.02 L172.1,-0.88 L172.8,-1.15 L173.4,-0.75 L174.0,-0.92 L174.6,-0.77 L175.3,-1.12 L175.9,-1.20 L176.5,-1.28 L177.1,-1.06 L177.8,-1.27 L178.4,-1.02 L179.0,-1.05 L179.6,-0.81 L180.3,-1.19 L180.9,-1.26 L181.5,-0.85 L182.1,-0.81 L182.8,-1.26 L183.4,-1.16 L184.0,-1.00 L184.6,-1.29 L185.3,-1.04 L185.9,-0.78 L186.5,-0.91 L187.2,-0.77 L187.8,-1.26 L188.4,-1.24 L189.0,-1.15 L189.7,-0.96 L190.3,-1.09 L190.9,-0.93 L191.5,-0.89 L192.2,-0.97 L192.8,-1.03 L193.4,-0.82 L194.0,-1.29 L194.7,-1.08 L195.3,-1.27 L195.9,-0.79 L196.5,-1.06 L197.2,-1.12 L197.8,-1.07 L198.4,-0.73 L199.0,-1.06 L199.7,-1.02 L200.3,-1.22 L200.9,-0.98 L201.5,-1.04 L202.2,-0.90 L202.8,-0.99 L203.4,-1.12 L204.1,-0.87 L204.7,-0.85 L205.3,-0.91 L205.9,-1.09 L206.6,-1.12 L207.2,-1.01 L207.8,-0.87 L208.4,-1.16 L209.1,-1.20 L209.7,-1.08 L210.3,-1.14 L210.9,-1.29 L211.6,-1.14 L212.2,-1.07 L212.8,-0.92 L213.4,-0.85 L214.1,-1.27 L214.7,-0.87 L215.3,-1.27 L215.9,-1.30 L216.6,-0.81 L217.2,-1.10 L217.8,-0.83 L218.4,-0.80 L219.1,-0.80 L219.7,-0.89 L220.3,-0.89 L221.0,-0.88 L221.6,-0.78 L222.2,-1.25 L222.8,-0.88 L223.5,-1.23 L224.1,-0.99 L224.7,-0.72 L225.3,-1.21 L226.0,-0.97 L226.6,-0.85 L227.2,-1.29 L227.8,-0.89 L228.5,-0.73 L229.1,-0.87 L229.7,-1.15 L230.3,-0.72 L231.0,-0.86 L231.6,-1.21 L232.2,-1.13 L232.8,-1.06 L233.5,-1.09 L234.1,-1.21 L234.7,-1.11 L235.3,-1.10 L236.0,-1.23 L236.6,-1.09 L236.6,1.09 L236.0,1.23 L235.3,1.10 L234.7,1.11 L234.1,1.21 L233.5,1.09 L232.8,1.06 L232.2,1.13 L231.6,1.21 L231.0,0.86 L230.3,0.72 L229.7,1.15 L229.1,0.87 L228.5,0.73 L227.8,0.89 L227.2,1.29 L226.6,0.85 L226.0,0.97 L225.3,1.21 L224.7,0.72 L224.1,0.99 L223.5,1.23 L222.8,0.88 L222.2,1.25 L221.6,0.78 L221.0,0.88 L220.3,0.89 L219.7,0.89 L219.1,0.80 L218.4,0.80 L217.8,0.83 L217.2,1.10 L216.6,0.81 L215.9,1.30 L215.3,1.27 L214.7,0.87 L214.1,1.27 L213.4,0.85 L212.8,0.92 L212.2,1.07 L211.6,1.14 L210.9,1.29 L210.3,1.14 L209.7,1.08 L209.1,1.20 L208.4,1.16 L207.8,0.87 L207.2,1.01 L206.6,1.12 L205.9,1.09 L205.3,0.91 L204.7,0.85 L204.1,0.87 L203.4,1.12 L202.8,0.99 L202.2,0.90 L201.5,1.04 L200.9,0.98 L200.3,1.22 L199.7,1.02 L199.0,1.06 L198.4,0.73 L197.8,1.07 L197.2,1.12 L196.5,1.06 L195.9,0.79 L195.3,1.27 L194.7,1.08 L194.0,1.29 L193.4,0.82 L192.8,1.03 L192.2,0.97 L191.5,0.89 L190.9,0.93 L190.3,1.09 L189.7,0.96 L189.0,1.15 L188.4,1.24 L187.8,1.26 L187.2,0.77 L186.5,0.91 L185.9,0.78 L185.3,1.04 L184.6,1.29 L184.0,1.00 L183.4,1.16 L182.8,1.26 L182.1,0.81 L181.5,0.85 L180.9,1.26 L180.3,1.19 L179.6,0.81 L179.0,1.05 L178.4,1.02 L177.8,1.27 L177.1,1.06 L176.5,1.28 L175.9,1.20 L175.3,1.12 L174.6,0.77 L174.0,0.92 L173.4,0.75 L172.8,1.15 L172.1,0.88 L171.5,1.02 L170.9,0.97 L170.3,0.88 L169.6,1.05 L169.0,1.20 L168.4,1.13 L167.7,1.05 L167.1,0.74 L166.5,0.99 L165.9,0.77 L165.2,1.02 L164.6,0.73 L164.0,1.18 L163.4,1.15 L162.7,0.88 L162.1,0.99 L161.5,1.07 L160.9,1.17 L160.2,1.25 L159.6,1.16 L159.0,0.74 L158.4,1.26 L157.7,0.92 L157.1,0.87 L156.5,0.91 L155.9,0.89 L155.2,1.09 L154.6,1.18 L154.0,0.79 L153.4,0.99 L152.7,1.08 L152.1,1.15 L151.5,0.77 L150.8,1.16 L150.2,1.25 L149.6,1.27 L149.0,0.73 L148.3,0.83 L147.7,0.86 L147.1,0.94 L146.5,1.13 L145.8,1.16 L145.2,1.23 L144.6,1.10 L144.0,1.03 L143.3,1.27 L142.7,0.83 L142.1,1.16 L141.5,1.22 L140.8,0.74 L140.2,0.75 L139.6,0.74 L139.0,1.09 L138.3,0.80 L137.7,0.73 L137.1,1.12 L136.5,1.29 L135.8,0.81 L135.2,1.08 L134.6,0.78 L133.9,0.73 L133.3,0.82 L132.7,1.05 L132.1,1.06 L131.4,0.94 L130.8,1.18 L130.2,1.23 L129.6,0.85 L128.9,1.27 L128.3,0.73 L127.7,0.72 L127.1,1.03 L126.4,0.99 L125.8,1.03 L125.2,1.21 L124.6,1.29 L123.9,1.25 L123.3,1.21 L122.7,0.94 L122.1,1.07 L121.4,0.94 L120.8,0.83 L120.2,1.25 L119.6,0.81 L118.9,0.83 L118.3,1.21 L117.7,1.24 L117.0,0.81 L116.4,1.01 L115.8,0.76 L115.2,1.24 L114.5,1.26 L113.9,0.89 L113.3,1.28 L112.7,1.25 L112.0,1.12 L111.4,1.11 L110.8,1.09 L110.2,0.75 L109.5,0.87 L108.9,1.27 L108.3,1.26 L107.7,1.24 L107.0,0.79 L106.4,1.09 L105.8,0.87 L105.2,1.30 L104.5,0.82 L103.9,1.10 L103.3,0.76 L102.7,1.25 L102.0,0.97 L101.4,0.93 L100.8,1.03 L100.1,0.99 L99.5,1.14 L98.9,1.30 L98.3,1.08 L97.6,0.75 L97.0,1.01 L96.4,1.07 L95.8,0.96 L95.1,1.09 L94.5,1.09 L93.9,1.02 L93.3,0.96 L92.6,0.83 L92.0,1.10 L91.4,1.07 L90.8,0.78 L90.1,1.25 L89.5,0.81 L88.9,0.82 L88.3,0.73 L87.6,0.75 L87.0,0.72 L86.4,0.81 L85.8,1.00 L85.1,1.02 L84.5,1.07 L83.9,1.05 L83.2,1.06 L82.6,1.24 L82.0,1.20 L81.4,0.75 L80.7,1.28 L80.1,1.19 L79.5,0.87 L78.9,1.10 L78.2,0.80 L77.6,0.75 L77.0,0.98 L76.4,1.13 L75.7,1.18 L75.1,0.72 L74.5,0.81 L73.9,1.20 L73.2,0.93 L72.6,0.79 L72.0,0.89 L71.4,0.96 L70.7,1.03 L70.1,1.02 L69.5,0.89 L68.9,1.05 L68.2,0.75 L67.6,0.74 L67.0,1.07 L66.3,1.00 L65.7,0.74 L65.1,0.93 L64.5,0.96 L63.8,1.08 L63.2,0.89 L62.6,0.84 L62.0,1.15 L61.3,1.14 L60.7,1.24 L60.1,1.26 L59.5,1.22 L58.8,1.28 L58.2,0.90 L57.6,1.02 L57.0,0.89 L56.3,1.28 L55.7,1.07 L55.1,0.85 L54.5,0.76 L53.8,0.91 L53.2,0.80 L52.6,0.93 L52.0,0.93 L51.3,0.93 L50.7,1.15 L50.1,1.22 L49.4,1.03 L48.8,0.86 L48.2,1.24 L47.6,1.12 L46.9,1.02 L46.3,0.98 L45.7,1.28 L45.1,1.22 L44.4,0.74 L43.8,1.16 L43.2,0.87 L42.6,1.18 L41.9,0.94 L41.3,0.91 L40.7,0.88 L40.1,1.09 L39.4,0.95 L38.8,0.83 L38.2,0.93 L37.6,0.85 L36.9,1.08 L36.3,1.06 L35.7,1.00 L35.1,1.28 L34.4,0.86 L33.8,0.98 L33.2,1.24 L32.5,1.07 L31.9,0.90 L31.3,0.86 L30.7,1.07 L30.0,1.20 L29.4,0.84 L28.8,1.14 L28.2,1.12 L27.5,1.18 L26.9,1.19 L26.3,0.88 L25.7,1.23 L25.0,0.79 L24.4,0.78 L23.8,1.12 L23.2,1.07 L22.5,0.75 L21.9,0.73 L21.3,1.17 L20.7,1.10 L20.0,1.24 L19.4,1.15 L18.8,0.76 L18.2,1.14 L17.5,0.90 L16.9,1.25 L16.3,0.79 L15.6,0.74 L15.0,1.10 L14.4,1.01 L13.8,1.18 L13.1,0.93 L12.5,0.92 L11.9,0.75 L11.3,0.95 L10.6,1.19 L10.0,1.20 L9.4,1.19 L8.8,1.08 L8.1,0.98 L7.5,0.99 L6.9,1.29 L6.3,0.72 L5.6,0.82 L5.0,1.01 L4.4,0.93 L3.8,0.94 L3.1,0.86 L2.5,0.90 L1.9,1.09 L1.3,1.17 L0.6,1.21 L0.0,0.98Z" fill="#0d2828"/></g></svg>
<div class="a" style="left:411.50px;top:213.20px;width:1.60px;height:1.20px;background:#0d2828;"></div>
<div class="a" style="left:413.70px;top:213.40px;width:7.00px;height:0.80px;background:rgba(10,40,40,0.35);"></div>
<div class="a" style="left:143.00px;top:217.00px;width:25.00px;height:11.00px;background:#3cbcbc;"></div>
<svg class="a" style="left:143.80px;top:220.00px;overflow:visible" width="23.3" height="3.2"><g transform="translate(0,1.60)"><path d="M0.0,-0.89 L0.6,-0.72 L1.3,-0.69 L1.9,-0.67 L2.5,-0.82 L3.1,-0.73 L3.8,-0.95 L4.4,-1.05 L5.0,-0.72 L5.7,-0.80 L6.3,-0.96 L6.9,-0.68 L7.6,-1.03 L8.2,-0.84 L8.8,-0.61 L9.4,-1.03 L10.1,-0.86 L10.7,-0.93 L11.3,-1.04 L12.0,-1.05 L12.6,-0.77 L13.2,-0.61 L13.9,-1.02 L14.5,-1.05 L15.1,-0.66 L15.7,-0.73 L16.4,-0.71 L17.0,-0.96 L17.6,-1.08 L18.3,-0.70 L18.9,-0.78 L19.5,-1.02 L20.2,-0.83 L20.8,-0.71 L21.4,-0.84 L22.0,-0.61 L22.7,-1.00 L23.3,-0.79 L23.3,0.79 L22.7,1.00 L22.0,0.61 L21.4,0.84 L20.8,0.71 L20.2,0.83 L19.5,1.02 L18.9,0.78 L18.3,0.70 L17.6,1.08 L17.0,0.96 L16.4,0.71 L15.7,0.73 L15.1,0.66 L14.5,1.05 L13.9,1.02 L13.2,0.61 L12.6,0.77 L12.0,1.05 L11.3,1.04 L10.7,0.93 L10.1,0.86 L9.4,1.03 L8.8,0.61 L8.2,0.84 L7.6,1.03 L6.9,0.68 L6.3,0.96 L5.7,0.80 L5.0,0.72 L4.4,1.05 L3.8,0.95 L3.1,0.73 L2.5,0.82 L1.9,0.67 L1.3,0.69 L0.6,0.72 L0.0,0.89Z" fill="#0d2828"/></g></svg>
<div class="a" style="left:144.60px;top:224.20px;width:1.60px;height:1.20px;background:#0d2828;"></div>
<div class="a" style="left:146.80px;top:224.40px;width:7.00px;height:0.80px;background:rgba(10,40,40,0.35);"></div>
<div class="a" style="left:173.00px;top:217.00px;width:59.00px;height:11.00px;background:#3cbcbc;"></div>
<svg class="a" style="left:173.46px;top:220.00px;overflow:visible" width="58.3" height="3.2"><g transform="translate(0,1.60)"><path d="M0.0,-0.77 L0.6,-0.97 L1.3,-0.83 L1.9,-1.10 L2.5,-0.70 L3.1,-0.86 L3.8,-1.07 L4.4,-0.97 L5.0,-0.91 L5.6,-0.92 L6.3,-0.73 L6.9,-0.79 L7.5,-0.64 L8.2,-0.64 L8.8,-1.06 L9.4,-0.92 L10.0,-0.94 L10.7,-0.89 L11.3,-0.66 L11.9,-0.76 L12.5,-0.80 L13.2,-1.08 L13.8,-1.09 L14.4,-1.10 L15.1,-1.08 L15.7,-0.83 L16.3,-0.69 L16.9,-1.07 L17.6,-0.64 L18.2,-1.00 L18.8,-0.70 L19.4,-0.92 L20.1,-0.96 L20.7,-1.01 L21.3,-0.68 L22.0,-0.93 L22.6,-1.02 L23.2,-1.00 L23.8,-0.81 L24.5,-1.10 L25.1,-0.98 L25.7,-0.93 L26.3,-0.99 L27.0,-0.84 L27.6,-0.99 L28.2,-0.72 L28.9,-0.95 L29.5,-0.95 L30.1,-1.09 L30.7,-0.94 L31.4,-0.84 L32.0,-1.00 L32.6,-1.00 L33.2,-0.78 L33.9,-0.93 L34.5,-0.76 L35.1,-0.85 L35.8,-0.91 L36.4,-0.65 L37.0,-1.05 L37.6,-0.68 L38.3,-0.76 L38.9,-0.80 L39.5,-0.65 L40.1,-0.88 L40.8,-0.77 L41.4,-1.07 L42.0,-0.87 L42.7,-0.78 L43.3,-0.89 L43.9,-0.93 L44.5,-0.71 L45.2,-0.64 L45.8,-0.75 L46.4,-0.91 L47.0,-0.89 L47.7,-1.03 L48.3,-0.70 L48.9,-0.83 L49.6,-0.99 L50.2,-0.71 L50.8,-0.80 L51.4,-0.87 L52.1,-0.91 L52.7,-0.95 L53.3,-1.09 L53.9,-0.65 L54.6,-1.05 L55.2,-0.88 L55.8,-0.92 L56.5,-0.75 L57.1,-0.85 L57.7,-0.71 L58.3,-0.64 L58.3,0.64 L57.7,0.71 L57.1,0.85 L56.5,0.75 L55.8,0.92 L55.2,0.88 L54.6,1.05 L53.9,0.65 L53.3,1.09 L52.7,0.95 L52.1,0.91 L51.4,0.87 L50.8,0.80 L50.2,0.71 L49.6,0.99 L48.9,0.83 L48.3,0.70 L47.7,1.03 L47.0,0.89 L46.4,0.91 L45.8,0.75 L45.2,0.64 L44.5,0.71 L43.9,0.93 L43.3,0.89 L42.7,0.78 L42.0,0.87 L41.4,1.07 L40.8,0.77 L40.1,0.88 L39.5,0.65 L38.9,0.80 L38.3,0.76 L37.6,0.68 L37.0,1.05 L36.4,0.65 L35.8,0.91 L35.1,0.85 L34.5,0.76 L33.9,0.93 L33.2,0.78 L32.6,1.00 L32.0,1.00 L31.4,0.84 L30.7,0.94 L30.1,1.09 L29.5,0.95 L28.9,0.95 L28.2,0.72 L27.6,0.99 L27.0,0.84 L26.3,0.99 L25.7,0.93 L25.1,0.98 L24.5,1.10 L23.8,0.81 L23.2,1.00 L22.6,1.02 L22.0,0.93 L21.3,0.68 L20.7,1.01 L20.1,0.96 L19.4,0.92 L18.8,0.70 L18.2,1.00 L17.6,0.64 L16.9,1.07 L16.3,0.69 L15.7,0.83 L15.1,1.08 L14.4,1.10 L13.8,1.09 L13.2,1.08 L12.5,0.80 L11.9,0.76 L11.3,0.66 L10.7,0.89 L10.0,0.94 L9.4,0.92 L8.8,1.06 L8.2,0.64 L7.5,0.64 L6.9,0.79 L6.3,0.73 L5.6,0.92 L5.0,0.91 L4.4,0.97 L3.8,1.07 L3.1,0.86 L2.5,0.70 L1.9,1.10 L1.3,0.83 L0.6,0.97 L0.0,0.77Z" fill="#0d2828"/></g></svg>
<div class="a" style="left:174.26px;top:224.20px;width:1.60px;height:1.20px;background:#0d2828;"></div>
<div class="a" style="left:176.46px;top:224.40px;width:7.00px;height:0.80px;background:rgba(10,40,40,0.35);"></div>
<div class="a" style="left:410.00px;top:217.00px;width:238.00px;height:11.00px;background:#3cbcbc;"></div>
<svg class="a" style="left:410.70px;top:220.00px;overflow:visible" width="236.6" height="3.2"><g transform="translate(0,1.60)"><path d="M0.0,-1.02 L0.6,-0.94 L1.3,-0.66 L1.9,-0.66 L2.5,-0.81 L3.1,-1.01 L3.8,-0.84 L4.4,-0.88 L5.0,-0.84 L5.6,-1.05 L6.3,-0.95 L6.9,-0.73 L7.5,-0.69 L8.1,-0.90 L8.8,-0.97 L9.4,-0.68 L10.0,-0.76 L10.6,-0.95 L11.3,-0.85 L11.9,-0.75 L12.5,-0.84 L13.1,-0.82 L13.8,-1.10 L14.4,-0.94 L15.0,-0.69 L15.6,-0.78 L16.3,-0.93 L16.9,-0.62 L17.5,-0.63 L18.2,-0.97 L18.8,-1.10 L19.4,-1.01 L20.0,-0.65 L20.7,-0.84 L21.3,-0.98 L21.9,-0.68 L22.5,-0.71 L23.2,-0.81 L23.8,-0.67 L24.4,-0.65 L25.0,-0.93 L25.7,-0.77 L26.3,-0.99 L26.9,-0.88 L27.5,-1.06 L28.2,-0.75 L28.8,-0.77 L29.4,-0.73 L30.0,-0.63 L30.7,-0.75 L31.3,-0.78 L31.9,-0.85 L32.5,-0.77 L33.2,-1.09 L33.8,-1.04 L34.4,-0.78 L35.1,-0.71 L35.7,-0.85 L36.3,-0.66 L36.9,-0.70 L37.6,-0.96 L38.2,-0.67 L38.8,-1.09 L39.4,-0.65 L40.1,-1.10 L40.7,-0.80 L41.3,-0.88 L41.9,-0.81 L42.6,-0.89 L43.2,-0.80 L43.8,-0.66 L44.4,-0.63 L45.1,-1.01 L45.7,-0.84 L46.3,-0.98 L46.9,-0.63 L47.6,-0.85 L48.2,-0.87 L48.8,-0.79 L49.4,-0.68 L50.1,-0.94 L50.7,-0.95 L51.3,-1.04 L52.0,-0.65 L52.6,-0.62 L53.2,-0.92 L53.8,-0.91 L54.5,-0.69 L55.1,-0.93 L55.7,-1.04 L56.3,-0.81 L57.0,-0.65 L57.6,-1.07 L58.2,-0.61 L58.8,-1.04 L59.5,-0.67 L60.1,-0.76 L60.7,-0.96 L61.3,-1.03 L62.0,-0.70 L62.6,-0.62 L63.2,-0.62 L63.8,-0.89 L64.5,-0.89 L65.1,-1.06 L65.7,-0.85 L66.3,-0.86 L67.0,-1.01 L67.6,-0.99 L68.2,-0.81 L68.9,-0.95 L69.5,-0.81 L70.1,-0.64 L70.7,-0.94 L71.4,-0.90 L72.0,-1.10 L72.6,-0.93 L73.2,-0.68 L73.9,-0.99 L74.5,-0.88 L75.1,-0.65 L75.7,-0.84 L76.4,-1.05 L77.0,-0.92 L77.6,-0.82 L78.2,-0.61 L78.9,-0.94 L79.5,-1.09 L80.1,-1.03 L80.7,-0.71 L81.4,-0.67 L82.0,-0.84 L82.6,-0.74 L83.2,-0.89 L83.9,-0.83 L84.5,-0.97 L85.1,-1.06 L85.8,-0.79 L86.4,-0.97 L87.0,-0.95 L87.6,-0.68 L88.3,-0.98 L88.9,-0.75 L89.5,-0.88 L90.1,-0.85 L90.8,-0.94 L91.4,-1.05 L92.0,-1.06 L92.6,-0.63 L93.3,-0.62 L93.9,-0.63 L94.5,-1.04 L95.1,-0.94 L95.8,-0.91 L96.4,-0.80 L97.0,-0.76 L97.6,-0.90 L98.3,-1.08 L98.9,-1.02 L99.5,-0.91 L100.1,-0.76 L100.8,-1.07 L101.4,-0.97 L102.0,-0.84 L102.7,-0.69 L103.3,-1.08 L103.9,-0.66 L104.5,-1.08 L105.2,-0.69 L105.8,-1.00 L106.4,-0.84 L107.0,-0.99 L107.7,-0.83 L108.3,-0.74 L108.9,-0.98 L109.5,-0.77 L110.2,-0.74 L110.8,-0.91 L111.4,-0.93 L112.0,-1.00 L112.7,-0.90 L113.3,-1.04 L113.9,-0.96 L114.5,-0.61 L115.2,-0.68 L115.8,-1.02 L116.4,-0.89 L117.0,-1.09 L117.7,-0.73 L118.3,-0.80 L118.9,-0.79 L119.6,-0.99 L120.2,-0.72 L120.8,-0.83 L121.4,-0.95 L122.1,-0.76 L122.7,-0.74 L123.3,-0.68 L123.9,-1.06 L124.6,-0.98 L125.2,-0.99 L125.8,-0.75 L126.4,-0.67 L127.1,-1.05 L127.7,-1.10 L128.3,-0.68 L128.9,-1.09 L129.6,-1.00 L130.2,-0.88 L130.8,-0.99 L131.4,-0.85 L132.1,-0.87 L132.7,-0.87 L133.3,-0.84 L133.9,-0.79 L134.6,-0.99 L135.2,-0.96 L135.8,-1.09 L136.5,-0.76 L137.1,-0.63 L137.7,-0.80 L138.3,-0.96 L139.0,-1.06 L139.6,-0.90 L140.2,-0.61 L140.8,-0.80 L141.5,-0.87 L142.1,-0.87 L142.7,-0.78 L143.3,-0.64 L144.0,-0.80 L144.6,-0.86 L145.2,-0.73 L145.8,-1.02 L146.5,-0.76 L147.1,-0.86 L147.7,-0.70 L148.3,-0.71 L149.0,-0.65 L149.6,-1.00 L150.2,-0.75 L150.8,-0.89 L151.5,-0.78 L152.1,-0.99 L152.7,-1.03 L153.4,-0.73 L154.0,-1.06 L154.6,-0.85 L155.2,-1.03 L155.9,-0.79 L156.5,-0.83 L157.1,-0.65 L157.7,-0.76 L158.4,-0.62 L159.0,-0.74 L159.6,-0.91 L160.2,-0.65 L160.9,-0.71 L161.5,-1.04 L162.1,-0.88 L162.7,-0.90 L163.4,-0.71 L164.0,-1.06 L164.6,-0.74 L165.2,-0.65 L165.9,-0.83 L166.5,-0.90 L167.1,-0.91 L167.7,-0.67 L168.4,-1.02 L169.0,-0.77 L169.6,-1.10 L170.3,-0.79 L170.9,-0.62 L171.5,-0.62 L172.1,-0.79 L172.8,-0.95 L173.4,-0.85 L174.0,-1.02 L174.6,-1.05 L175.3,-1.03 L175.9,-0.92 L176.5,-1.06 L177.1,-0.95 L177.8,-0.65 L178.4,-0.76 L179.0,-0.72 L179.6,-0.65 L180.3,-1.06 L180.9,-0.86 L181.5,-0.70 L182.1,-1.03 L182.8,-0.79 L183.4,-0.72 L184.0,-0.96 L184.6,-0.69 L185.3,-1.07 L185.9,-1.07 L186.5,-0.63 L187.2,-0.88 L187.8,-0.62 L188.4,-1.06 L189.0,-0.73 L189.7,-0.86 L190.3,-0.97 L190.9,-0.98 L191.5,-0.84 L192.2,-0.66 L192.8,-0.76 L193.4,-0.61 L194.0,-0.70 L194.7,-0.98 L195.3,-0.90 L195.9,-0.82 L196.5,-0.93 L197.2,-0.84 L197.8,-0.79 L198.4,-0.80 L199.0,-0.79 L199.7,-0.79 L200.3,-0.82 L200.9,-1.00 L201.5,-1.06 L202.2,-1.05 L202.8,-0.84 L203.4,-1.06 L204.1,-1.00 L204.7,-0.68 L205.3,-1.02 L205.9,-0.64 L206.6,-0.91 L207.2,-0.79 L207.8,-0.98 L208.4,-0.99 L209.1,-1.08 L209.7,-1.06 L210.3,-0.80 L210.9,-0.62 L211.6,-0.64 L212.2,-1.09 L212.8,-0.76 L213.4,-0.72 L214.1,-0.66 L214.7,-0.79 L215.3,-0.77 L215.9,-0.97 L216.6,-0.69 L217.2,-0.83 L217.8,-1.05 L218.4,-0.82 L219.1,-0.68 L219.7,-0.81 L220.3,-0.73 L221.0,-0.62 L221.6,-0.89 L222.2,-0.75 L222.8,-1.00 L223.5,-0.73 L224.1,-0.66 L224.7,-0.83 L225.3,-0.84 L226.0,-0.68 L226.6,-0.86 L227.2,-0.92 L227.8,-0.99 L228.5,-1.06 L229.1,-0.88 L229.7,-1.02 L230.3,-0.66 L231.0,-0.98 L231.6,-1.09 L232.2,-0.82 L232.8,-0.73 L233.5,-0.72 L234.1,-0.72 L234.7,-0.80 L235.3,-0.81 L236.0,-0.69 L236.6,-1.02 L236.6,1.02 L236.0,0.69 L235.3,0.81 L234.7,0.80 L234.1,0.72 L233.5,0.72 L232.8,0.73 L232.2,0.82 L231.6,1.09 L231.0,0.98 L230.3,0.66 L229.7,1.02 L229.1,0.88 L228.5,1.06 L227.8,0.99 L227.2,0.92 L226.6,0.86 L226.0,0.68 L225.3,0.84 L224.7,0.83 L224.1,0.66 L223.5,0.73 L222.8,1.00 L222.2,0.75 L221.6,0.89 L221.0,0.62 L220.3,0.73 L219.7,0.81 L219.1,0.68 L218.4,0.82 L217.8,1.05 L217.2,0.83 L216.6,0.69 L215.9,0.97 L215.3,0.77 L214.7,0.79 L214.1,0.66 L213.4,0.72 L212.8,0.76 L212.2,1.09 L211.6,0.64 L210.9,0.62 L210.3,0.80 L209.7,1.06 L209.1,1.08 L208.4,0.99 L207.8,0.98 L207.2,0.79 L206.6,0.91 L205.9,0.64 L205.3,1.02 L204.7,0.68 L204.1,1.00 L203.4,1.06 L202.8,0.84 L202.2,1.05 L201.5,1.06 L200.9,1.00 L200.3,0.82 L199.7,0.79 L199.0,0.79 L198.4,0.80 L197.8,0.79 L197.2,0.84 L196.5,0.93 L195.9,0.82 L195.3,0.90 L194.7,0.98 L194.0,0.70 L193.4,0.61 L192.8,0.76 L192.2,0.66 L191.5,0.84 L190.9,0.98 L190.3,0.97 L189.7,0.86 L189.0,0.73 L188.4,1.06 L187.8,0.62 L187.2,0.88 L186.5,0.63 L185.9,1.07 L185.3,1.07 L184.6,0.69 L184.0,0.96 L183.4,0.72 L182.8,0.79 L182.1,1.03 L181.5,0.70 L180.9,0.86 L180.3,1.06 L179.6,0.65 L179.0,0.72 L178.4,0.76 L177.8,0.65 L177.1,0.95 L176.5,1.06 L175.9,0.92 L175.3,1.03 L174.6,1.05 L174.0,1.02 L173.4,0.85 L172.8,0.95 L172.1,0.79 L171.5,0.62 L170.9,0.62 L170.3,0.79 L169.6,1.10 L169.0,0.77 L168.4,1.02 L167.7,0.67 L167.1,0.91 L166.5,0.90 L165.9,0.83 L165.2,0.65 L164.6,0.74 L164.0,1.06 L163.4,0.71 L162.7,0.90 L162.1,0.88 L161.5,1.04 L160.9,0.71 L160.2,0.65 L159.6,0.91 L159.0,0.74 L158.4,0.62 L157.7,0.76 L157.1,0.65 L156.5,0.83 L155.9,0.79 L155.2,1.03 L154.6,0.85 L154.0,1.06 L153.4,0.73 L152.7,1.03 L152.1,0.99 L151.5,0.78 L150.8,0.89 L150.2,0.75 L149.6,1.00 L149.0,0.65 L148.3,0.71 L147.7,0.70 L147.1,0.86 L146.5,0.76 L145.8,1.02 L145.2,0.73 L144.6,0.86 L144.0,0.80 L143.3,0.64 L142.7,0.78 L142.1,0.87 L141.5,0.87 L140.8,0.80 L140.2,0.61 L139.6,0.90 L139.0,1.06 L138.3,0.96 L137.7,0.80 L137.1,0.63 L136.5,0.76 L135.8,1.09 L135.2,0.96 L134.6,0.99 L133.9,0.79 L133.3,0.84 L132.7,0.87 L132.1,0.87 L131.4,0.85 L130.8,0.99 L130.2,0.88 L129.6,1.00 L128.9,1.09 L128.3,0.68 L127.7,1.10 L127.1,1.05 L126.4,0.67 L125.8,0.75 L125.2,0.99 L124.6,0.98 L123.9,1.06 L123.3,0.68 L122.7,0.74 L122.1,0.76 L121.4,0.95 L120.8,0.83 L120.2,0.72 L119.6,0.99 L118.9,0.79 L118.3,0.80 L117.7,0.73 L117.0,1.09 L116.4,0.89 L115.8,1.02 L115.2,0.68 L114.5,0.61 L113.9,0.96 L113.3,1.04 L112.7,0.90 L112.0,1.00 L111.4,0.93 L110.8,0.91 L110.2,0.74 L109.5,0.77 L108.9,0.98 L108.3,0.74 L107.7,0.83 L107.0,0.99 L106.4,0.84 L105.8,1.00 L105.2,0.69 L104.5,1.08 L103.9,0.66 L103.3,1.08 L102.7,0.69 L102.0,0.84 L101.4,0.97 L100.8,1.07 L100.1,0.76 L99.5,0.91 L98.9,1.02 L98.3,1.08 L97.6,0.90 L97.0,0.76 L96.4,0.80 L95.8,0.91 L95.1,0.94 L94.5,1.04 L93.9,0.63 L93.3,0.62 L92.6,0.63 L92.0,1.06 L91.4,1.05 L90.8,0.94 L90.1,0.85 L89.5,0.88 L88.9,0.75 L88.3,0.98 L87.6,0.68 L87.0,0.95 L86.4,0.97 L85.8,0.79 L85.1,1.06 L84.5,0.97 L83.9,0.83 L83.2,0.89 L82.6,0.74 L82.0,0.84 L81.4,0.67 L80.7,0.71 L80.1,1.03 L79.5,1.09 L78.9,0.94 L78.2,0.61 L77.6,0.82 L77.0,0.92 L76.4,1.05 L75.7,0.84 L75.1,0.65 L74.5,0.88 L73.9,0.99 L73.2,0.68 L72.6,0.93 L72.0,1.10 L71.4,0.90 L70.7,0.94 L70.1,0.64 L69.5,0.81 L68.9,0.95 L68.2,0.81 L67.6,0.99 L67.0,1.01 L66.3,0.86 L65.7,0.85 L65.1,1.06 L64.5,0.89 L63.8,0.89 L63.2,0.62 L62.6,0.62 L62.0,0.70 L61.3,1.03 L60.7,0.96 L60.1,0.76 L59.5,0.67 L58.8,1.04 L58.2,0.61 L57.6,1.07 L57.0,0.65 L56.3,0.81 L55.7,1.04 L55.1,0.93 L54.5,0.69 L53.8,0.91 L53.2,0.92 L52.6,0.62 L52.0,0.65 L51.3,1.04 L50.7,0.95 L50.1,0.94 L49.4,0.68 L48.8,0.79 L48.2,0.87 L47.6,0.85 L46.9,0.63 L46.3,0.98 L45.7,0.84 L45.1,1.01 L44.4,0.63 L43.8,0.66 L43.2,0.80 L42.6,0.89 L41.9,0.81 L41.3,0.88 L40.7,0.80 L40.1,1.10 L39.4,0.65 L38.8,1.09 L38.2,0.67 L37.6,0.96 L36.9,0.70 L36.3,0.66 L35.7,0.85 L35.1,0.71 L34.4,0.78 L33.8,1.04 L33.2,1.09 L32.5,0.77 L31.9,0.85 L31.3,0.78 L30.7,0.75 L30.0,0.63 L29.4,0.73 L28.8,0.77 L28.2,0.75 L27.5,1.06 L26.9,0.88 L26.3,0.99 L25.7,0.77 L25.0,0.93 L24.4,0.65 L23.8,0.67 L23.2,0.81 L22.5,0.71 L21.9,0.68 L21.3,0.98 L20.7,0.84 L20.0,0.65 L19.4,1.01 L18.8,1.10 L18.2,0.97 L17.5,0.63 L16.9,0.62 L16.3,0.93 L15.6,0.78 L15.0,0.69 L14.4,0.94 L13.8,1.10 L13.1,0.82 L12.5,0.84 L11.9,0.75 L11.3,0.85 L10.6,0.95 L10.0,0.76 L9.4,0.68 L8.8,0.97 L8.1,0.90 L7.5,0.69 L6.9,0.73 L6.3,0.95 L5.6,1.05 L5.0,0.84 L4.4,0.88 L3.8,0.84 L3.1,1.01 L2.5,0.81 L1.9,0.66 L1.3,0.66 L0.6,0.94 L0.0,1.02Z" fill="#0d2828"/></g></svg>
<div class="a" style="left:411.50px;top:224.20px;width:1.60px;height:1.20px;background:#0d2828;"></div>
<div class="a" style="left:413.70px;top:224.40px;width:7.00px;height:0.80px;background:rgba(10,40,40,0.35);"></div>
<div class="a" style="left:173.00px;top:228.00px;width:59.00px;height:11.00px;background:#3cbcbc;"></div>
<svg class="a" style="left:173.46px;top:231.00px;overflow:visible" width="58.3" height="3.2"><g transform="translate(0,1.60)"><path d="M0.0,-1.09 L0.6,-0.68 L1.3,-0.92 L1.9,-0.82 L2.5,-0.86 L3.1,-0.86 L3.8,-0.82 L4.4,-1.00 L5.0,-1.07 L5.6,-0.75 L6.3,-0.78 L6.9,-0.63 L7.5,-0.81 L8.2,-0.74 L8.8,-0.69 L9.4,-1.02 L10.0,-0.86 L10.7,-0.72 L11.3,-0.69 L11.9,-0.90 L12.5,-1.02 L13.2,-1.05 L13.8,-0.97 L14.4,-0.98 L15.1,-0.69 L15.7,-0.67 L16.3,-0.94 L16.9,-0.92 L17.6,-0.70 L18.2,-0.76 L18.8,-0.61 L19.4,-0.95 L20.1,-0.86 L20.7,-1.02 L21.3,-1.06 L22.0,-0.86 L22.6,-0.78 L23.2,-0.74 L23.8,-0.92 L24.5,-1.07 L25.1,-0.65 L25.7,-0.81 L26.3,-0.98 L27.0,-0.67 L27.6,-0.93 L28.2,-0.73 L28.9,-0.88 L29.5,-1.09 L30.1,-0.62 L30.7,-0.95 L31.4,-0.89 L32.0,-1.03 L32.6,-0.78 L33.2,-1.07 L33.9,-1.08 L34.5,-0.64 L35.1,-0.78 L35.8,-0.73 L36.4,-1.02 L37.0,-1.06 L37.6,-0.99 L38.3,-1.03 L38.9,-0.89 L39.5,-1.05 L40.1,-0.75 L40.8,-0.66 L41.4,-0.97 L42.0,-0.83 L42.7,-0.62 L43.3,-1.00 L43.9,-0.67 L44.5,-0.73 L45.2,-0.65 L45.8,-0.91 L46.4,-0.69 L47.0,-0.76 L47.7,-0.88 L48.3,-1.08 L48.9,-0.61 L49.6,-1.06 L50.2,-0.97 L50.8,-0.73 L51.4,-1.02 L52.1,-0.92 L52.7,-0.83 L53.3,-0.72 L53.9,-0.82 L54.6,-0.78 L55.2,-0.65 L55.8,-0.69 L56.5,-0.74 L57.1,-0.84 L57.7,-0.90 L58.3,-0.98 L58.3,0.98 L57.7,0.90 L57.1,0.84 L56.5,0.74 L55.8,0.69 L55.2,0.65 L54.6,0.78 L53.9,0.82 L53.3,0.72 L52.7,0.83 L52.1,0.92 L51.4,1.02 L50.8,0.73 L50.2,0.97 L49.6,1.06 L48.9,0.61 L48.3,1.08 L47.7,0.88 L47.0,0.76 L46.4,0.69 L45.8,0.91 L45.2,0.65 L44.5,0.73 L43.9,0.67 L43.3,1.00 L42.7,0.62 L42.0,0.83 L41.4,0.97 L40.8,0.66 L40.1,0.75 L39.5,1.05 L38.9,0.89 L38.3,1.03 L37.6,0.99 L37.0,1.06 L36.4,1.02 L35.8,0.73 L35.1,0.78 L34.5,0.64 L33.9,1.08 L33.2,1.07 L32.6,0.78 L32.0,1.03 L31.4,0.89 L30.7,0.95 L30.1,0.62 L29.5,1.09 L28.9,0.88 L28.2,0.73 L27.6,0.93 L27.0,0.67 L26.3,0.98 L25.7,0.81 L25.1,0.65 L24.5,1.07 L23.8,0.92 L23.2,0.74 L22.6,0.78 L22.0,0.86 L21.3,1.06 L20.7,1.02 L20.1,0.86 L19.4,0.95 L18.8,0.61 L18.2,0.76 L17.6,0.70 L16.9,0.92 L16.3,0.94 L15.7,0.67 L15.1,0.69 L14.4,0.98 L13.8,0.97 L13.2,1.05 L12.5,1.02 L11.9,0.90 L11.3,0.69 L10.7,0.72 L10.0,0.86 L9.4,1.02 L8.8,0.69 L8.2,0.74 L7.5,0.81 L6.9,0.63 L6.3,0.78 L5.6,0.75 L5.0,1.07 L4.4,1.00 L3.8,0.82 L3.1,0.86 L2.5,0.86 L1.9,0.82 L1.3,0.92 L0.6,0.68 L0.0,1.09Z" fill="#0d2828"/></g></svg>
<div class="a" style="left:174.26px;top:235.20px;width:1.60px;height:1.20px;background:#0d2828;"></div>
<div class="a" style="left:176.46px;top:235.40px;width:7.00px;height:0.80px;background:rgba(10,40,40,0.35);"></div>
<div class="a" style="left:351.00px;top:228.00px;width:42.00px;height:11.00px;background:#3cbcbc;"></div>
<svg class="a" style="left:351.50px;top:231.00px;overflow:visible" width="41.0" height="3.2"><g transform="translate(0,1.60)"><path d="M0.0,-0.66 L0.6,-0.67 L1.3,-1.04 L1.9,-0.87 L2.5,-0.72 L3.2,-0.72 L3.8,-0.94 L4.4,-0.83 L5.0,-0.80 L5.7,-1.07 L6.3,-0.61 L6.9,-0.92 L7.6,-0.95 L8.2,-0.90 L8.8,-0.90 L9.5,-0.62 L10.1,-1.09 L10.7,-0.63 L11.4,-0.78 L12.0,-0.80 L12.6,-1.02 L13.2,-0.96 L13.9,-1.02 L14.5,-0.88 L15.1,-1.09 L15.8,-0.76 L16.4,-0.80 L17.0,-0.88 L17.7,-0.77 L18.3,-0.68 L18.9,-0.94 L19.6,-0.78 L20.2,-1.04 L20.8,-0.93 L21.4,-0.61 L22.1,-0.66 L22.7,-0.70 L23.3,-0.77 L24.0,-0.70 L24.6,-0.94 L25.2,-0.72 L25.9,-0.81 L26.5,-0.80 L27.1,-1.10 L27.8,-0.83 L28.4,-0.63 L29.0,-1.09 L29.6,-1.09 L30.3,-0.62 L30.9,-1.03 L31.5,-0.91 L32.2,-1.06 L32.8,-0.91 L33.4,-0.92 L34.1,-1.00 L34.7,-0.62 L35.3,-0.65 L36.0,-0.67 L36.6,-0.61 L37.2,-0.72 L37.8,-0.62 L38.5,-0.66 L39.1,-0.78 L39.7,-0.69 L40.4,-0.63 L41.0,-1.08 L41.0,1.08 L40.4,0.63 L39.7,0.69 L39.1,0.78 L38.5,0.66 L37.8,0.62 L37.2,0.72 L36.6,0.61 L36.0,0.67 L35.3,0.65 L34.7,0.62 L34.1,1.00 L33.4,0.92 L32.8,0.91 L32.2,1.06 L31.5,0.91 L30.9,1.03 L30.3,0.62 L29.6,1.09 L29.0,1.09 L28.4,0.63 L27.8,0.83 L27.1,1.10 L26.5,0.80 L25.9,0.81 L25.2,0.72 L24.6,0.94 L24.0,0.70 L23.3,0.77 L22.7,0.70 L22.1,0.66 L21.4,0.61 L20.8,0.93 L20.2,1.04 L19.6,0.78 L18.9,0.94 L18.3,0.68 L17.7,0.77 L17.0,0.88 L16.4,0.80 L15.8,0.76 L15.1,1.09 L14.5,0.88 L13.9,1.02 L13.2,0.96 L12.6,1.02 L12.0,0.80 L11.4,0.78 L10.7,0.63 L10.1,1.09 L9.5,0.62 L8.8,0.90 L8.2,0.90 L7.6,0.95 L6.9,0.92 L6.3,0.61 L5.7,1.07 L5.0,0.80 L4.4,0.83 L3.8,0.94 L3.2,0.72 L2.5,0.72 L1.9,0.87 L1.3,1.04 L0.6,0.67 L0.0,0.66Z" fill="#0d2828"/></g></svg>
<div class="a" style="left:352.30px;top:235.20px;width:1.60px;height:1.20px;background:#0d2828;"></div>
<div class="a" style="left:354.50px;top:235.40px;width:7.00px;height:0.80px;background:rgba(10,40,40,0.35);"></div>
<div class="a" style="left:393.00px;top:228.00px;width:17.00px;height:11.00px;background:#3cbcbc;"></div>
<svg class="a" style="left:393.50px;top:231.00px;overflow:visible" width="16.2" height="3.2"><g transform="translate(0,1.60)"><path d="M0.0,-1.06 L0.6,-1.05 L1.3,-0.65 L1.9,-0.90 L2.6,-1.07 L3.2,-0.82 L3.9,-0.86 L4.5,-1.04 L5.2,-1.06 L5.8,-0.89 L6.5,-0.74 L7.1,-0.97 L7.8,-0.97 L8.4,-0.75 L9.1,-0.83 L9.7,-0.95 L10.4,-0.71 L11.0,-0.80 L11.7,-0.88 L12.3,-0.79 L13.0,-1.05 L13.6,-0.76 L14.3,-0.84 L14.9,-1.01 L15.6,-0.62 L16.2,-0.77 L16.2,0.77 L15.6,0.62 L14.9,1.01 L14.3,0.84 L13.6,0.76 L13.0,1.05 L12.3,0.79 L11.7,0.88 L11.0,0.80 L10.4,0.71 L9.7,0.95 L9.1,0.83 L8.4,0.75 L7.8,0.97 L7.1,0.97 L6.5,0.74 L5.8,0.89 L5.2,1.06 L4.5,1.04 L3.9,0.86 L3.2,0.82 L2.6,1.07 L1.9,0.90 L1.3,0.65 L0.6,1.05 L0.0,1.06Z" fill="#0d2828"/></g></svg>
<div class="a" style="left:394.30px;top:235.20px;width:1.60px;height:1.20px;background:#0d2828;"></div>
<div class="a" style="left:396.50px;top:235.40px;width:7.00px;height:0.80px;background:rgba(10,40,40,0.35);"></div>
<div class="a" style="left:410.00px;top:228.00px;width:238.00px;height:11.00px;background:#3cbcbc;"></div>
<svg class="a" style="left:410.70px;top:231.00px;overflow:visible" width="236.6" height="3.2"><g transform="translate(0,1.60)"><path d="M0.0,-0.70 L0.6,-0.88 L1.3,-1.08 L1.9,-0.80 L2.5,-1.06 L3.1,-0.69 L3.8,-1.08 L4.4,-0.77 L5.0,-0.77 L5.6,-0.74 L6.3,-1.04 L6.9,-0.71 L7.5,-0.63 L8.1,-0.62 L8.8,-0.88 L9.4,-0.90 L10.0,-0.78 L10.6,-0.93 L11.3,-0.86 L11.9,-1.02 L12.5,-0.78 L13.1,-0.98 L13.8,-0.86 L14.4,-1.09 L15.0,-0.94 L15.6,-1.07 L16.3,-0.81 L16.9,-0.94 L17.5,-0.67 L18.2,-0.71 L18.8,-0.91 L19.4,-0.74 L20.0,-1.02 L20.7,-0.65 L21.3,-1.03 L21.9,-1.06 L22.5,-1.10 L23.2,-0.74 L23.8,-0.92 L24.4,-0.92 L25.0,-0.95 L25.7,-0.81 L26.3,-0.66 L26.9,-0.81 L27.5,-0.88 L28.2,-0.66 L28.8,-0.80 L29.4,-1.10 L30.0,-0.68 L30.7,-1.03 L31.3,-0.74 L31.9,-0.91 L32.5,-0.66 L33.2,-1.03 L33.8,-0.95 L34.4,-0.75 L35.1,-0.78 L35.7,-0.78 L36.3,-0.87 L36.9,-0.90 L37.6,-0.93 L38.2,-0.61 L38.8,-0.97 L39.4,-1.09 L40.1,-0.79 L40.7,-0.75 L41.3,-0.87 L41.9,-1.00 L42.6,-0.82 L43.2,-0.79 L43.8,-0.72 L44.4,-1.01 L45.1,-0.77 L45.7,-1.08 L46.3,-0.91 L46.9,-0.73 L47.6,-0.77 L48.2,-1.09 L48.8,-1.05 L49.4,-1.08 L50.1,-0.62 L50.7,-0.73 L51.3,-1.05 L52.0,-0.75 L52.6,-0.87 L53.2,-0.76 L53.8,-0.91 L54.5,-0.82 L55.1,-1.01 L55.7,-0.96 L56.3,-0.82 L57.0,-0.83 L57.6,-0.63 L58.2,-0.94 L58.8,-0.83 L59.5,-0.61 L60.1,-0.64 L60.7,-0.72 L61.3,-0.81 L62.0,-0.85 L62.6,-0.93 L63.2,-1.06 L63.8,-0.68 L64.5,-0.70 L65.1,-0.81 L65.7,-0.80 L66.3,-0.98 L67.0,-1.05 L67.6,-0.90 L68.2,-0.95 L68.9,-0.97 L69.5,-0.65 L70.1,-0.78 L70.7,-0.79 L71.4,-0.64 L72.0,-0.76 L72.6,-0.69 L73.2,-0.93 L73.9,-0.75 L74.5,-0.77 L75.1,-1.07 L75.7,-0.86 L76.4,-1.09 L77.0,-0.92 L77.6,-0.86 L78.2,-1.01 L78.9,-0.71 L79.5,-1.05 L80.1,-0.81 L80.7,-0.63 L81.4,-0.88 L82.0,-0.66 L82.6,-0.89 L83.2,-0.92 L83.9,-0.96 L84.5,-0.95 L85.1,-0.61 L85.8,-0.61 L86.4,-0.96 L87.0,-0.88 L87.6,-1.06 L88.3,-0.80 L88.9,-0.65 L89.5,-0.61 L90.1,-0.62 L90.8,-0.69 L91.4,-0.99 L92.0,-0.89 L92.6,-1.04 L93.3,-1.05 L93.9,-0.86 L94.5,-0.68 L95.1,-0.70 L95.8,-0.90 L96.4,-0.68 L97.0,-0.86 L97.6,-0.86 L98.3,-0.62 L98.9,-0.64 L99.5,-1.07 L100.1,-0.85 L100.8,-0.84 L101.4,-0.82 L102.0,-1.00 L102.7,-0.93 L103.3,-0.94 L103.9,-0.89 L104.5,-0.68 L105.2,-0.72 L105.8,-0.74 L106.4,-0.62 L107.0,-0.92 L107.7,-1.03 L108.3,-1.07 L108.9,-0.64 L109.5,-0.70 L110.2,-0.91 L110.8,-0.61 L111.4,-0.71 L112.0,-0.80 L112.7,-0.98 L113.3,-0.63 L113.9,-0.63 L114.5,-0.72 L115.2,-0.72 L115.8,-0.68 L116.4,-0.90 L117.0,-0.69 L117.7,-0.61 L118.3,-1.03 L118.9,-0.83 L119.6,-0.81 L120.2,-0.73 L120.8,-1.04 L121.4,-1.09 L122.1,-0.64 L122.7,-0.94 L123.3,-0.94 L123.9,-0.89 L124.6,-0.81 L125.2,-0.80 L125.8,-0.96 L126.4,-0.62 L127.1,-1.03 L127.7,-0.65 L128.3,-0.69 L128.9,-0.79 L129.6,-0.61 L130.2,-1.04 L130.8,-0.80 L131.4,-0.78 L132.1,-0.77 L132.7,-1.04 L133.3,-0.77 L133.9,-0.93 L134.6,-1.08 L135.2,-0.81 L135.8,-1.06 L136.5,-0.88 L137.1,-0.80 L137.7,-0.84 L138.3,-0.78 L139.0,-0.82 L139.6,-0.74 L140.2,-0.62 L140.8,-1.00 L141.5,-0.72 L142.1,-0.67 L142.7,-0.70 L143.3,-0.87 L144.0,-0.99 L144.6,-0.88 L145.2,-0.84 L145.8,-1.00 L146.5,-0.72 L147.1,-0.79 L147.7,-0.71 L148.3,-0.81 L149.0,-0.92 L149.6,-0.89 L150.2,-0.75 L150.8,-0.84 L151.5,-0.71 L152.1,-1.03 L152.7,-0.94 L153.4,-1.07 L154.0,-1.10 L154.6,-0.90 L155.2,-0.82 L155.9,-1.10 L156.5,-0.87 L157.1,-0.81 L157.7,-0.86 L158.4,-0.67 L159.0,-0.98 L159.6,-0.94 L160.2,-0.65 L160.9,-1.03 L161.5,-0.97 L162.1,-0.98 L162.7,-0.62 L163.4,-0.96 L164.0,-0.68 L164.6,-0.61 L165.2,-0.96 L165.9,-0.95 L166.5,-0.99 L167.1,-0.72 L167.7,-0.70 L168.4,-1.05 L169.0,-0.64 L169.6,-1.06 L170.3,-1.00 L170.9,-0.98 L171.5,-0.70 L172.1,-0.96 L172.8,-0.65 L173.4,-0.75 L174.0,-1.01 L174.6,-0.80 L175.3,-0.78 L175.9,-1.02 L176.5,-0.83 L177.1,-0.92 L177.8,-0.92 L178.4,-1.03 L179.0,-1.07 L179.6,-0.69 L180.3,-0.79 L180.9,-1.00 L181.5,-0.95 L182.1,-1.05 L182.8,-0.62 L183.4,-0.95 L184.0,-0.83 L184.6,-1.10 L185.3,-0.80 L185.9,-1.05 L186.5,-0.65 L187.2,-0.75 L187.8,-0.74 L188.4,-0.91 L189.0,-0.71 L189.7,-0.94 L190.3,-0.81 L190.9,-0.91 L191.5,-0.82 L192.2,-0.98 L192.8,-0.68 L193.4,-0.97 L194.0,-0.88 L194.7,-0.92 L195.3,-1.07 L195.9,-0.88 L196.5,-0.72 L197.2,-0.85 L197.8,-0.86 L198.4,-1.06 L199.0,-0.94 L199.7,-0.89 L200.3,-1.07 L200.9,-0.66 L201.5,-0.98 L202.2,-0.93 L202.8,-1.05 L203.4,-1.04 L204.1,-0.89 L204.7,-0.95 L205.3,-1.09 L205.9,-0.94 L206.6,-0.62 L207.2,-0.76 L207.8,-0.99 L208.4,-0.78 L209.1,-1.06 L209.7,-0.81 L210.3,-0.97 L210.9,-1.10 L211.6,-0.91 L212.2,-0.71 L212.8,-0.87 L213.4,-0.78 L214.1,-1.08 L214.7,-0.82 L215.3,-0.77 L215.9,-0.85 L216.6,-0.95 L217.2,-1.02 L217.8,-0.91 L218.4,-0.86 L219.1,-0.94 L219.7,-0.71 L220.3,-0.94 L221.0,-1.02 L221.6,-0.99 L222.2,-0.85 L222.8,-0.70 L223.5,-1.08 L224.1,-1.01 L224.7,-0.88 L225.3,-0.69 L226.0,-0.69 L226.6,-0.99 L227.2,-0.72 L227.8,-0.73 L228.5,-1.08 L229.1,-0.69 L229.7,-0.78 L230.3,-0.65 L231.0,-0.92 L231.6,-0.67 L232.2,-0.94 L232.8,-0.85 L233.5,-0.84 L234.1,-0.95 L234.7,-0.61 L235.3,-0.95 L236.0,-0.67 L236.6,-0.92 L236.6,0.92 L236.0,0.67 L235.3,0.95 L234.7,0.61 L234.1,0.95 L233.5,0.84 L232.8,0.85 L232.2,0.94 L231.6,0.67 L231.0,0.92 L230.3,0.65 L229.7,0.78 L229.1,0.69 L228.5,1.08 L227.8,0.73 L227.2,0.72 L226.6,0.99 L226.0,0.69 L225.3,0.69 L224.7,0.88 L224.1,1.01 L223.5,1.08 L222.8,0.70 L222.2,0.85 L221.6,0.99 L221.0,1.02 L220.3,0.94 L219.7,0.71 L219.1,0.94 L218.4,0.86 L217.8,0.91 L217.2,1.02 L216.6,0.95 L215.9,0.85 L215.3,0.77 L214.7,0.82 L214.1,1.08 L213.4,0.78 L212.8,0.87 L212.2,0.71 L211.6,0.91 L210.9,1.10 L210.3,0.97 L209.7,0.81 L209.1,1.06 L208.4,0.78 L207.8,0.99 L207.2,0.76 L206.6,0.62 L205.9,0.94 L205.3,1.09 L204.7,0.95 L204.1,0.89 L203.4,1.04 L202.8,1.05 L202.2,0.93 L201.5,0.98 L200.9,0.66 L200.3,1.07 L199.7,0.89 L199.0,0.94 L198.4,1.06 L197.8,0.86 L197.2,0.85 L196.5,0.72 L195.9,0.88 L195.3,1.07 L194.7,0.92 L194.0,0.88 L193.4,0.97 L192.8,0.68 L192.2,0.98 L191.5,0.82 L190.9,0.91 L190.3,0.81 L189.7,0.94 L189.0,0.71 L188.4,0.91 L187.8,0.74 L187.2,0.75 L186.5,0.65 L185.9,1.05 L185.3,0.80 L184.6,1.10 L184.0,0.83 L183.4,0.95 L182.8,0.62 L182.1,1.05 L181.5,0.95 L180.9,1.00 L180.3,0.79 L179.6,0.69 L179.0,1.07 L178.4,1.03 L177.8,0.92 L177.1,0.92 L176.5,0.83 L175.9,1.02 L175.3,0.78 L174.6,0.80 L174.0,1.01 L173.4,0.75 L172.8,0.65 L172.1,0.96 L171.5,0.70 L170.9,0.98 L170.3,1.00 L169.6,1.06 L169.0,0.64 L168.4,1.05 L167.7,0.70 L167.1,0.72 L166.5,0.99 L165.9,0.95 L165.2,0.96 L164.6,0.61 L164.0,0.68 L163.4,0.96 L162.7,0.62 L162.1,0.98 L161.5,0.97 L160.9,1.03 L160.2,0.65 L159.6,0.94 L159.0,0.98 L158.4,0.67 L157.7,0.86 L157.1,0.81 L156.5,0.87 L155.9,1.10 L155.2,0.82 L154.6,0.90 L154.0,1.10 L153.4,1.07 L152.7,0.94 L152.1,1.03 L151.5,0.71 L150.8,0.84 L150.2,0.75 L149.6,0.89 L149.0,0.92 L148.3,0.81 L147.7,0.71 L147.1,0.79 L146.5,0.72 L145.8,1.00 L145.2,0.84 L144.6,0.88 L144.0,0.99 L143.3,0.87 L142.7,0.70 L142.1,0.67 L141.5,0.72 L140.8,1.00 L140.2,0.62 L139.6,0.74 L139.0,0.82 L138.3,0.78 L137.7,0.84 L137.1,0.80 L136.5,0.88 L135.8,1.06 L135.2,0.81 L134.6,1.08 L133.9,0.93 L133.3,0.77 L132.7,1.04 L132.1,0.77 L131.4,0.78 L130.8,0.80 L130.2,1.04 L129.6,0.61 L128.9,0.79 L128.3,0.69 L127.7,0.65 L127.1,1.03 L126.4,0.62 L125.8,0.96 L125.2,0.80 L124.6,0.81 L123.9,0.89 L123.3,0.94 L122.7,0.94 L122.1,0.64 L121.4,1.09 L120.8,1.04 L120.2,0.73 L119.6,0.81 L118.9,0.83 L118.3,1.03 L117.7,0.61 L117.0,0.69 L116.4,0.90 L115.8,0.68 L115.2,0.72 L114.5,0.72 L113.9,0.63 L113.3,0.63 L112.7,0.98 L112.0,0.80 L111.4,0.71 L110.8,0.61 L110.2,0.91 L109.5,0.70 L108.9,0.64 L108.3,1.07 L107.7,1.03 L107.0,0.92 L106.4,0.62 L105.8,0.74 L105.2,0.72 L104.5,0.68 L103.9,0.89 L103.3,0.94 L102.7,0.93 L102.0,1.00 L101.4,0.82 L100.8,0.84 L100.1,0.85 L99.5,1.07 L98.9,0.64 L98.3,0.62 L97.6,0.86 L97.0,0.86 L96.4,0.68 L95.8,0.90 L95.1,0.70 L94.5,0.68 L93.9,0.86 L93.3,1.05 L92.6,1.04 L92.0,0.89 L91.4,0.99 L90.8,0.69 L90.1,0.62 L89.5,0.61 L88.9,0.65 L88.3,0.80 L87.6,1.06 L87.0,0.88 L86.4,0.96 L85.8,0.61 L85.1,0.61 L84.5,0.95 L83.9,0.96 L83.2,0.92 L82.6,0.89 L82.0,0.66 L81.4,0.88 L80.7,0.63 L80.1,0.81 L79.5,1.05 L78.9,0.71 L78.2,1.01 L77.6,0.86 L77.0,0.92 L76.4,1.09 L75.7,0.86 L75.1,1.07 L74.5,0.77 L73.9,0.75 L73.2,0.93 L72.6,0.69 L72.0,0.76 L71.4,0.64 L70.7,0.79 L70.1,0.78 L69.5,0.65 L68.9,0.97 L68.2,0.95 L67.6,0.90 L67.0,1.05 L66.3,0.98 L65.7,0.80 L65.1,0.81 L64.5,0.70 L63.8,0.68 L63.2,1.06 L62.6,0.93 L62.0,0.85 L61.3,0.81 L60.7,0.72 L60.1,0.64 L59.5,0.61 L58.8,0.83 L58.2,0.94 L57.6,0.63 L57.0,0.83 L56.3,0.82 L55.7,0.96 L55.1,1.01 L54.5,0.82 L53.8,0.91 L53.2,0.76 L52.6,0.87 L52.0,0.75 L51.3,1.05 L50.7,0.73 L50.1,0.62 L49.4,1.08 L48.8,1.05 L48.2,1.09 L47.6,0.77 L46.9,0.73 L46.3,0.91 L45.7,1.08 L45.1,0.77 L44.4,1.01 L43.8,0.72 L43.2,0.79 L42.6,0.82 L41.9,1.00 L41.3,0.87 L40.7,0.75 L40.1,0.79 L39.4,1.09 L38.8,0.97 L38.2,0.61 L37.6,0.93 L36.9,0.90 L36.3,0.87 L35.7,0.78 L35.1,0.78 L34.4,0.75 L33.8,0.95 L33.2,1.03 L32.5,0.66 L31.9,0.91 L31.3,0.74 L30.7,1.03 L30.0,0.68 L29.4,1.10 L28.8,0.80 L28.2,0.66 L27.5,0.88 L26.9,0.81 L26.3,0.66 L25.7,0.81 L25.0,0.95 L24.4,0.92 L23.8,0.92 L23.2,0.74 L22.5,1.10 L21.9,1.06 L21.3,1.03 L20.7,0.65 L20.0,1.02 L19.4,0.74 L18.8,0.91 L18.2,0.71 L17.5,0.67 L16.9,0.94 L16.3,0.81 L15.6,1.07 L15.0,0.94 L14.4,1.09 L13.8,0.86 L13.1,0.98 L12.5,0.78 L11.9,1.02 L11.3,0.86 L10.6,0.93 L10.0,0.78 L9.4,0.90 L8.8,0.88 L8.1,0.62 L7.5,0.63 L6.9,0.71 L6.3,1.04 L5.6,0.74 L5.0,0.77 L4.4,0.77 L3.8,1.08 L3.1,0.69 L2.5,1.06 L1.9,0.80 L1.3,1.08 L0.6,0.88 L0.0,0.70Z" fill="#0d2828"/></g></svg>
<div class="a" style="left:411.50px;top:235.20px;width:1.60px;height:1.20px;background:#0d2828;"></div>
<div class="a" style="left:413.70px;top:235.40px;width:7.00px;height:0.80px;background:rgba(10,40,40,0.35);"></div>
<div class="a" style="left:173.00px;top:240.00px;width:52.00px;height:10.00px;background:#3cbcbc;"></div>
<svg class="a" style="left:173.46px;top:243.75px;overflow:visible" width="50.6" height="1.7"><g transform="translate(0,0.85)"><path d="M0.0,-0.30 L0.6,-0.21 L1.3,-0.30 L1.9,-0.29 L2.5,-0.23 L3.1,-0.29 L3.8,-0.21 L4.4,-0.26 L5.0,-0.34 L5.6,-0.30 L6.3,-0.22 L6.9,-0.35 L7.5,-0.32 L8.1,-0.26 L8.8,-0.22 L9.4,-0.30 L10.0,-0.19 L10.6,-0.27 L11.3,-0.20 L11.9,-0.33 L12.5,-0.24 L13.1,-0.21 L13.8,-0.24 L14.4,-0.34 L15.0,-0.22 L15.6,-0.26 L16.3,-0.28 L16.9,-0.24 L17.5,-0.28 L18.1,-0.20 L18.8,-0.27 L19.4,-0.35 L20.0,-0.27 L20.6,-0.31 L21.3,-0.24 L21.9,-0.31 L22.5,-0.23 L23.1,-0.29 L23.8,-0.34 L24.4,-0.27 L25.0,-0.32 L25.6,-0.24 L26.3,-0.25 L26.9,-0.21 L27.5,-0.24 L28.1,-0.29 L28.8,-0.31 L29.4,-0.30 L30.0,-0.30 L30.6,-0.20 L31.3,-0.31 L31.9,-0.20 L32.5,-0.25 L33.1,-0.22 L33.8,-0.25 L34.4,-0.34 L35.0,-0.28 L35.6,-0.33 L36.3,-0.30 L36.9,-0.21 L37.5,-0.31 L38.1,-0.24 L38.8,-0.29 L39.4,-0.25 L40.0,-0.29 L40.6,-0.25 L41.3,-0.23 L41.9,-0.21 L42.5,-0.34 L43.1,-0.32 L43.8,-0.23 L44.4,-0.20 L45.0,-0.21 L45.6,-0.32 L46.3,-0.34 L46.9,-0.35 L47.5,-0.26 L48.1,-0.20 L48.8,-0.23 L49.4,-0.26 L50.0,-0.31 L50.6,-0.35 L50.6,0.35 L50.0,0.31 L49.4,0.26 L48.8,0.23 L48.1,0.20 L47.5,0.26 L46.9,0.35 L46.3,0.34 L45.6,0.32 L45.0,0.21 L44.4,0.20 L43.8,0.23 L43.1,0.32 L42.5,0.34 L41.9,0.21 L41.3,0.23 L40.6,0.25 L40.0,0.29 L39.4,0.25 L38.8,0.29 L38.1,0.24 L37.5,0.31 L36.9,0.21 L36.3,0.30 L35.6,0.33 L35.0,0.28 L34.4,0.34 L33.8,0.25 L33.1,0.22 L32.5,0.25 L31.9,0.20 L31.3,0.31 L30.6,0.20 L30.0,0.30 L29.4,0.30 L28.8,0.31 L28.1,0.29 L27.5,0.24 L26.9,0.21 L26.3,0.25 L25.6,0.24 L25.0,0.32 L24.4,0.27 L23.8,0.34 L23.1,0.29 L22.5,0.23 L21.9,0.31 L21.3,0.24 L20.6,0.31 L20.0,0.27 L19.4,0.35 L18.8,0.27 L18.1,0.20 L17.5,0.28 L16.9,0.24 L16.3,0.28 L15.6,0.26 L15.0,0.22 L14.4,0.34 L13.8,0.24 L13.1,0.21 L12.5,0.24 L11.9,0.33 L11.3,0.20 L10.6,0.27 L10.0,0.19 L9.4,0.30 L8.8,0.22 L8.1,0.26 L7.5,0.32 L6.9,0.35 L6.3,0.22 L5.6,0.30 L5.0,0.34 L4.4,0.26 L3.8,0.21 L3.1,0.29 L2.5,0.23 L1.9,0.29 L1.3,0.30 L0.6,0.21 L0.0,0.30Z" fill="#0d2828"/></g></svg>
<div class="a" style="left:174.26px;top:247.20px;width:1.60px;height:1.20px;background:#0d2828;"></div>
<div class="a" style="left:176.46px;top:247.40px;width:7.00px;height:0.80px;background:rgba(10,40,40,0.35);"></div>
<div class="a" style="left:225.00px;top:240.00px;width:7.00px;height:10.00px;background:#3cbcbc;"></div>
<svg class="a" style="left:225.10px;top:243.75px;overflow:visible" width="6.7" height="1.7"><g transform="translate(0,0.85)"><path d="M0.0,-0.29 L0.7,-0.29 L1.3,-0.21 L2.0,-0.23 L2.7,-0.21 L3.4,-0.29 L4.0,-0.26 L4.7,-0.35 L5.4,-0.33 L6.0,-0.27 L6.7,-0.23 L6.7,0.23 L6.0,0.27 L5.4,0.33 L4.7,0.35 L4.0,0.26 L3.4,0.29 L2.7,0.21 L2.0,0.23 L1.3,0.21 L0.7,0.29 L0.0,0.29Z" fill="#0d2828"/></g></svg>
<div class="a" style="left:225.90px;top:247.20px;width:1.60px;height:1.20px;background:#0d2828;"></div>
<div class="a" style="left:228.10px;top:247.40px;width:7.00px;height:0.80px;background:rgba(10,40,40,0.35);"></div>
<div class="a" style="left:380.00px;top:240.00px;width:30.00px;height:10.00px;background:#3cbcbc;"></div>
<svg class="a" style="left:381.00px;top:243.75px;overflow:visible" width="28.7" height="1.7"><g transform="translate(0,0.85)"><path d="M0.0,-0.25 L0.6,-0.20 L1.3,-0.29 L1.9,-0.32 L2.6,-0.27 L3.2,-0.22 L3.8,-0.20 L4.5,-0.20 L5.1,-0.30 L5.7,-0.33 L6.4,-0.20 L7.0,-0.19 L7.7,-0.34 L8.3,-0.22 L8.9,-0.31 L9.6,-0.25 L10.2,-0.19 L10.8,-0.32 L11.5,-0.30 L12.1,-0.28 L12.8,-0.27 L13.4,-0.28 L14.0,-0.27 L14.7,-0.26 L15.3,-0.28 L15.9,-0.29 L16.6,-0.22 L17.2,-0.26 L17.9,-0.29 L18.5,-0.21 L19.1,-0.32 L19.8,-0.31 L20.4,-0.24 L21.0,-0.30 L21.7,-0.28 L22.3,-0.26 L23.0,-0.25 L23.6,-0.30 L24.2,-0.21 L24.9,-0.33 L25.5,-0.28 L26.1,-0.29 L26.8,-0.33 L27.4,-0.23 L28.1,-0.31 L28.7,-0.30 L28.7,0.30 L28.1,0.31 L27.4,0.23 L26.8,0.33 L26.1,0.29 L25.5,0.28 L24.9,0.33 L24.2,0.21 L23.6,0.30 L23.0,0.25 L22.3,0.26 L21.7,0.28 L21.0,0.30 L20.4,0.24 L19.8,0.31 L19.1,0.32 L18.5,0.21 L17.9,0.29 L17.2,0.26 L16.6,0.22 L15.9,0.29 L15.3,0.28 L14.7,0.26 L14.0,0.27 L13.4,0.28 L12.8,0.27 L12.1,0.28 L11.5,0.30 L10.8,0.32 L10.2,0.19 L9.6,0.25 L8.9,0.31 L8.3,0.22 L7.7,0.34 L7.0,0.19 L6.4,0.20 L5.7,0.33 L5.1,0.30 L4.5,0.20 L3.8,0.20 L3.2,0.22 L2.6,0.27 L1.9,0.32 L1.3,0.29 L0.6,0.20 L0.0,0.25Z" fill="#0d2828"/></g></svg>
<div class="a" style="left:381.80px;top:247.20px;width:1.60px;height:1.20px;background:#0d2828;"></div>
<div class="a" style="left:384.00px;top:247.40px;width:7.00px;height:0.80px;background:rgba(10,40,40,0.35);"></div>
<div class="a" style="left:410.00px;top:240.00px;width:238.00px;height:10.00px;background:#3cbcbc;"></div>
<svg class="a" style="left:410.70px;top:243.75px;overflow:visible" width="236.6" height="1.7"><g transform="translate(0,0.85)"><path d="M0.0,-0.22 L0.6,-0.28 L1.3,-0.28 L1.9,-0.34 L2.5,-0.25 L3.1,-0.23 L3.8,-0.26 L4.4,-0.23 L5.0,-0.23 L5.6,-0.35 L6.3,-0.22 L6.9,-0.31 L7.5,-0.23 L8.1,-0.32 L8.8,-0.29 L9.4,-0.22 L10.0,-0.30 L10.6,-0.30 L11.3,-0.23 L11.9,-0.26 L12.5,-0.28 L13.1,-0.30 L13.8,-0.31 L14.4,-0.34 L15.0,-0.28 L15.6,-0.33 L16.3,-0.30 L16.9,-0.32 L17.5,-0.21 L18.2,-0.27 L18.8,-0.27 L19.4,-0.32 L20.0,-0.34 L20.7,-0.29 L21.3,-0.34 L21.9,-0.27 L22.5,-0.26 L23.2,-0.30 L23.8,-0.28 L24.4,-0.34 L25.0,-0.22 L25.7,-0.27 L26.3,-0.21 L26.9,-0.25 L27.5,-0.29 L28.2,-0.26 L28.8,-0.20 L29.4,-0.20 L30.0,-0.30 L30.7,-0.34 L31.3,-0.26 L31.9,-0.21 L32.5,-0.21 L33.2,-0.34 L33.8,-0.21 L34.4,-0.35 L35.1,-0.22 L35.7,-0.21 L36.3,-0.31 L36.9,-0.25 L37.6,-0.25 L38.2,-0.33 L38.8,-0.32 L39.4,-0.31 L40.1,-0.19 L40.7,-0.23 L41.3,-0.23 L41.9,-0.27 L42.6,-0.28 L43.2,-0.25 L43.8,-0.27 L44.4,-0.32 L45.1,-0.25 L45.7,-0.25 L46.3,-0.24 L46.9,-0.29 L47.6,-0.20 L48.2,-0.34 L48.8,-0.23 L49.4,-0.25 L50.1,-0.30 L50.7,-0.20 L51.3,-0.35 L52.0,-0.26 L52.6,-0.32 L53.2,-0.27 L53.8,-0.20 L54.5,-0.23 L55.1,-0.22 L55.7,-0.34 L56.3,-0.33 L57.0,-0.30 L57.6,-0.32 L58.2,-0.29 L58.8,-0.23 L59.5,-0.35 L60.1,-0.31 L60.7,-0.23 L61.3,-0.26 L62.0,-0.20 L62.6,-0.35 L63.2,-0.27 L63.8,-0.27 L64.5,-0.20 L65.1,-0.32 L65.7,-0.20 L66.3,-0.29 L67.0,-0.29 L67.6,-0.29 L68.2,-0.33 L68.9,-0.34 L69.5,-0.30 L70.1,-0.26 L70.7,-0.23 L71.4,-0.34 L72.0,-0.27 L72.6,-0.25 L73.2,-0.28 L73.9,-0.24 L74.5,-0.21 L75.1,-0.29 L75.7,-0.23 L76.4,-0.32 L77.0,-0.31 L77.6,-0.24 L78.2,-0.27 L78.9,-0.34 L79.5,-0.24 L80.1,-0.25 L80.7,-0.27 L81.4,-0.23 L82.0,-0.23 L82.6,-0.33 L83.2,-0.29 L83.9,-0.29 L84.5,-0.31 L85.1,-0.22 L85.8,-0.25 L86.4,-0.20 L87.0,-0.35 L87.6,-0.25 L88.3,-0.28 L88.9,-0.28 L89.5,-0.21 L90.1,-0.30 L90.8,-0.34 L91.4,-0.33 L92.0,-0.21 L92.6,-0.22 L93.3,-0.26 L93.9,-0.28 L94.5,-0.21 L95.1,-0.32 L95.8,-0.32 L96.4,-0.23 L97.0,-0.32 L97.6,-0.21 L98.3,-0.20 L98.9,-0.34 L99.5,-0.25 L100.1,-0.25 L100.8,-0.33 L101.4,-0.23 L102.0,-0.33 L102.7,-0.31 L103.3,-0.25 L103.9,-0.30 L104.5,-0.30 L105.2,-0.33 L105.8,-0.32 L106.4,-0.27 L107.0,-0.33 L107.7,-0.32 L108.3,-0.35 L108.9,-0.22 L109.5,-0.22 L110.2,-0.33 L110.8,-0.30 L111.4,-0.26 L112.0,-0.25 L112.7,-0.31 L113.3,-0.34 L113.9,-0.28 L114.5,-0.22 L115.2,-0.31 L115.8,-0.23 L116.4,-0.28 L117.0,-0.30 L117.7,-0.34 L118.3,-0.20 L118.9,-0.22 L119.6,-0.34 L120.2,-0.28 L120.8,-0.24 L121.4,-0.25 L122.1,-0.27 L122.7,-0.35 L123.3,-0.30 L123.9,-0.31 L124.6,-0.34 L125.2,-0.32 L125.8,-0.24 L126.4,-0.22 L127.1,-0.33 L127.7,-0.28 L128.3,-0.31 L128.9,-0.29 L129.6,-0.23 L130.2,-0.20 L130.8,-0.20 L131.4,-0.26 L132.1,-0.33 L132.7,-0.24 L133.3,-0.27 L133.9,-0.21 L134.6,-0.23 L135.2,-0.20 L135.8,-0.21 L136.5,-0.20 L137.1,-0.20 L137.7,-0.32 L138.3,-0.28 L139.0,-0.31 L139.6,-0.19 L140.2,-0.24 L140.8,-0.29 L141.5,-0.19 L142.1,-0.24 L142.7,-0.20 L143.3,-0.24 L144.0,-0.33 L144.6,-0.20 L145.2,-0.27 L145.8,-0.29 L146.5,-0.32 L147.1,-0.22 L147.7,-0.33 L148.3,-0.32 L149.0,-0.21 L149.6,-0.29 L150.2,-0.31 L150.8,-0.35 L151.5,-0.26 L152.1,-0.34 L152.7,-0.33 L153.4,-0.20 L154.0,-0.24 L154.6,-0.30 L155.2,-0.24 L155.9,-0.26 L156.5,-0.30 L157.1,-0.32 L157.7,-0.22 L158.4,-0.20 L159.0,-0.23 L159.6,-0.28 L160.2,-0.32 L160.9,-0.25 L161.5,-0.25 L162.1,-0.25 L162.7,-0.30 L163.4,-0.33 L164.0,-0.22 L164.6,-0.35 L165.2,-0.28 L165.9,-0.23 L166.5,-0.29 L167.1,-0.32 L167.7,-0.27 L168.4,-0.20 L169.0,-0.29 L169.6,-0.30 L170.3,-0.28 L170.9,-0.30 L171.5,-0.28 L172.1,-0.25 L172.8,-0.28 L173.4,-0.24 L174.0,-0.23 L174.6,-0.28 L175.3,-0.21 L175.9,-0.32 L176.5,-0.35 L177.1,-0.22 L177.8,-0.29 L178.4,-0.26 L179.0,-0.35 L179.6,-0.34 L180.3,-0.29 L180.9,-0.21 L181.5,-0.28 L182.1,-0.22 L182.8,-0.31 L183.4,-0.23 L184.0,-0.29 L184.6,-0.31 L185.3,-0.33 L185.9,-0.33 L186.5,-0.33 L187.2,-0.32 L187.8,-0.28 L188.4,-0.25 L189.0,-0.30 L189.7,-0.26 L190.3,-0.33 L190.9,-0.23 L191.5,-0.34 L192.2,-0.33 L192.8,-0.25 L193.4,-0.23 L194.0,-0.32 L194.7,-0.20 L195.3,-0.30 L195.9,-0.19 L196.5,-0.32 L197.2,-0.34 L197.8,-0.30 L198.4,-0.25 L199.0,-0.23 L199.7,-0.25 L200.3,-0.34 L200.9,-0.25 L201.5,-0.30 L202.2,-0.33 L202.8,-0.20 L203.4,-0.20 L204.1,-0.30 L204.7,-0.23 L205.3,-0.25 L205.9,-0.24 L206.6,-0.26 L207.2,-0.24 L207.8,-0.33 L208.4,-0.27 L209.1,-0.35 L209.7,-0.32 L210.3,-0.27 L210.9,-0.34 L211.6,-0.31 L212.2,-0.34 L212.8,-0.21 L213.4,-0.24 L214.1,-0.21 L214.7,-0.19 L215.3,-0.33 L215.9,-0.23 L216.6,-0.24 L217.2,-0.29 L217.8,-0.34 L218.4,-0.23 L219.1,-0.20 L219.7,-0.32 L220.3,-0.33 L221.0,-0.31 L221.6,-0.20 L222.2,-0.31 L222.8,-0.26 L223.5,-0.26 L224.1,-0.21 L224.7,-0.34 L225.3,-0.30 L226.0,-0.32 L226.6,-0.22 L227.2,-0.34 L227.8,-0.21 L228.5,-0.24 L229.1,-0.27 L229.7,-0.25 L230.3,-0.31 L231.0,-0.27 L231.6,-0.26 L232.2,-0.26 L232.8,-0.29 L233.5,-0.30 L234.1,-0.25 L234.7,-0.25 L235.3,-0.33 L236.0,-0.28 L236.6,-0.22 L236.6,0.22 L236.0,0.28 L235.3,0.33 L234.7,0.25 L234.1,0.25 L233.5,0.30 L232.8,0.29 L232.2,0.26 L231.6,0.26 L231.0,0.27 L230.3,0.31 L229.7,0.25 L229.1,0.27 L228.5,0.24 L227.8,0.21 L227.2,0.34 L226.6,0.22 L226.0,0.32 L225.3,0.30 L224.7,0.34 L224.1,0.21 L223.5,0.26 L222.8,0.26 L222.2,0.31 L221.6,0.20 L221.0,0.31 L220.3,0.33 L219.7,0.32 L219.1,0.20 L218.4,0.23 L217.8,0.34 L217.2,0.29 L216.6,0.24 L215.9,0.23 L215.3,0.33 L214.7,0.19 L214.1,0.21 L213.4,0.24 L212.8,0.21 L212.2,0.34 L211.6,0.31 L210.9,0.34 L210.3,0.27 L209.7,0.32 L209.1,0.35 L208.4,0.27 L207.8,0.33 L207.2,0.24 L206.6,0.26 L205.9,0.24 L205.3,0.25 L204.7,0.23 L204.1,0.30 L203.4,0.20 L202.8,0.20 L202.2,0.33 L201.5,0.30 L200.9,0.25 L200.3,0.34 L199.7,0.25 L199.0,0.23 L198.4,0.25 L197.8,0.30 L197.2,0.34 L196.5,0.32 L195.9,0.19 L195.3,0.30 L194.7,0.20 L194.0,0.32 L193.4,0.23 L192.8,0.25 L192.2,0.33 L191.5,0.34 L190.9,0.23 L190.3,0.33 L189.7,0.26 L189.0,0.30 L188.4,0.25 L187.8,0.28 L187.2,0.32 L186.5,0.33 L185.9,0.33 L185.3,0.33 L184.6,0.31 L184.0,0.29 L183.4,0.23 L182.8,0.31 L182.1,0.22 L181.5,0.28 L180.9,0.21 L180.3,0.29 L179.6,0.34 L179.0,0.35 L178.4,0.26 L177.8,0.29 L177.1,0.22 L176.5,0.35 L175.9,0.32 L175.3,0.21 L174.6,0.28 L174.0,0.23 L173.4,0.24 L172.8,0.28 L172.1,0.25 L171.5,0.28 L170.9,0.30 L170.3,0.28 L169.6,0.30 L169.0,0.29 L168.4,0.20 L167.7,0.27 L167.1,0.32 L166.5,0.29 L165.9,0.23 L165.2,0.28 L164.6,0.35 L164.0,0.22 L163.4,0.33 L162.7,0.30 L162.1,0.25 L161.5,0.25 L160.9,0.25 L160.2,0.32 L159.6,0.28 L159.0,0.23 L158.4,0.20 L157.7,0.22 L157.1,0.32 L156.5,0.30 L155.9,0.26 L155.2,0.24 L154.6,0.30 L154.0,0.24 L153.4,0.20 L152.7,0.33 L152.1,0.34 L151.5,0.26 L150.8,0.35 L150.2,0.31 L149.6,0.29 L149.0,0.21 L148.3,0.32 L147.7,0.33 L147.1,0.22 L146.5,0.32 L145.8,0.29 L145.2,0.27 L144.6,0.20 L144.0,0.33 L143.3,0.24 L142.7,0.20 L142.1,0.24 L141.5,0.19 L140.8,0.29 L140.2,0.24 L139.6,0.19 L139.0,0.31 L138.3,0.28 L137.7,0.32 L137.1,0.20 L136.5,0.20 L135.8,0.21 L135.2,0.20 L134.6,0.23 L133.9,0.21 L133.3,0.27 L132.7,0.24 L132.1,0.33 L131.4,0.26 L130.8,0.20 L130.2,0.20 L129.6,0.23 L128.9,0.29 L128.3,0.31 L127.7,0.28 L127.1,0.33 L126.4,0.22 L125.8,0.24 L125.2,0.32 L124.6,0.34 L123.9,0.31 L123.3,0.30 L122.7,0.35 L122.1,0.27 L121.4,0.25 L120.8,0.24 L120.2,0.28 L119.6,0.34 L118.9,0.22 L118.3,0.20 L117.7,0.34 L117.0,0.30 L116.4,0.28 L115.8,0.23 L115.2,0.31 L114.5,0.22 L113.9,0.28 L113.3,0.34 L112.7,0.31 L112.0,0.25 L111.4,0.26 L110.8,0.30 L110.2,0.33 L109.5,0.22 L108.9,0.22 L108.3,0.35 L107.7,0.32 L107.0,0.33 L106.4,0.27 L105.8,0.32 L105.2,0.33 L104.5,0.30 L103.9,0.30 L103.3,0.25 L102.7,0.31 L102.0,0.33 L101.4,0.23 L100.8,0.33 L100.1,0.25 L99.5,0.25 L98.9,0.34 L98.3,0.20 L97.6,0.21 L97.0,0.32 L96.4,0.23 L95.8,0.32 L95.1,0.32 L94.5,0.21 L93.9,0.28 L93.3,0.26 L92.6,0.22 L92.0,0.21 L91.4,0.33 L90.8,0.34 L90.1,0.30 L89.5,0.21 L88.9,0.28 L88.3,0.28 L87.6,0.25 L87.0,0.35 L86.4,0.20 L85.8,0.25 L85.1,0.22 L84.5,0.31 L83.9,0.29 L83.2,0.29 L82.6,0.33 L82.0,0.23 L81.4,0.23 L80.7,0.27 L80.1,0.25 L79.5,0.24 L78.9,0.34 L78.2,0.27 L77.6,0.24 L77.0,0.31 L76.4,0.32 L75.7,0.23 L75.1,0.29 L74.5,0.21 L73.9,0.24 L73.2,0.28 L72.6,0.25 L72.0,0.27 L71.4,0.34 L70.7,0.23 L70.1,0.26 L69.5,0.30 L68.9,0.34 L68.2,0.33 L67.6,0.29 L67.0,0.29 L66.3,0.29 L65.7,0.20 L65.1,0.32 L64.5,0.20 L63.8,0.27 L63.2,0.27 L62.6,0.35 L62.0,0.20 L61.3,0.26 L60.7,0.23 L60.1,0.31 L59.5,0.35 L58.8,0.23 L58.2,0.29 L57.6,0.32 L57.0,0.30 L56.3,0.33 L55.7,0.34 L55.1,0.22 L54.5,0.23 L53.8,0.20 L53.2,0.27 L52.6,0.32 L52.0,0.26 L51.3,0.35 L50.7,0.20 L50.1,0.30 L49.4,0.25 L48.8,0.23 L48.2,0.34 L47.6,0.20 L46.9,0.29 L46.3,0.24 L45.7,0.25 L45.1,0.25 L44.4,0.32 L43.8,0.27 L43.2,0.25 L42.6,0.28 L41.9,0.27 L41.3,0.23 L40.7,0.23 L40.1,0.19 L39.4,0.31 L38.8,0.32 L38.2,0.33 L37.6,0.25 L36.9,0.25 L36.3,0.31 L35.7,0.21 L35.1,0.22 L34.4,0.35 L33.8,0.21 L33.2,0.34 L32.5,0.21 L31.9,0.21 L31.3,0.26 L30.7,0.34 L30.0,0.30 L29.4,0.20 L28.8,0.20 L28.2,0.26 L27.5,0.29 L26.9,0.25 L26.3,0.21 L25.7,0.27 L25.0,0.22 L24.4,0.34 L23.8,0.28 L23.2,0.30 L22.5,0.26 L21.9,0.27 L21.3,0.34 L20.7,0.29 L20.0,0.34 L19.4,0.32 L18.8,0.27 L18.2,0.27 L17.5,0.21 L16.9,0.32 L16.3,0.30 L15.6,0.33 L15.0,0.28 L14.4,0.34 L13.8,0.31 L13.1,0.30 L12.5,0.28 L11.9,0.26 L11.3,0.23 L10.6,0.30 L10.0,0.30 L9.4,0.22 L8.8,0.29 L8.1,0.32 L7.5,0.23 L6.9,0.31 L6.3,0.22 L5.6,0.35 L5.0,0.23 L4.4,0.23 L3.8,0.26 L3.1,0.23 L2.5,0.25 L1.9,0.34 L1.3,0.28 L0.6,0.28 L0.0,0.22Z" fill="#0d2828"/></g></svg>
<div class="a" style="left:411.50px;top:247.20px;width:1.60px;height:1.20px;background:#0d2828;"></div>
<div class="a" style="left:413.70px;top:247.40px;width:7.00px;height:0.80px;background:rgba(10,40,40,0.35);"></div>
<div class="a" style="left:173.00px;top:251.00px;width:59.00px;height:11.00px;background:#3cbcbc;"></div>
<div class="a" style="left:172.96px;top:255.60px;width:59.34px;height:0.60px;background:#0d2828;"></div>
<svg class="a" style="left:173.26px;top:252.60px" width="12" height="6.5"><path d="M0,0.3 L0.8,0.3 Q1.6,2.8 11.5,3.0 L11.5,3.4 Q1.6,3.6 0.8,6.2 L0,6.2Z" fill="#0d2020"/></svg>
<svg class="a" style="left:202.86px;top:252.60px" width="12" height="6.5"><path d="M0,0.3 L0.8,0.3 Q1.6,2.8 11.5,3.0 L11.5,3.4 Q1.6,3.6 0.8,6.2 L0,6.2Z" fill="#0d2020"/></svg>
<div class="a" style="left:410.00px;top:251.00px;width:238.00px;height:11.00px;background:#3cbcbc;"></div>
<div class="a" style="left:410.20px;top:255.60px;width:237.60px;height:0.60px;background:#0d2828;"></div>
<svg class="a" style="left:410.50px;top:252.60px" width="12" height="6.5"><path d="M0,0.3 L0.8,0.3 Q1.6,2.8 11.5,3.0 L11.5,3.4 Q1.6,3.6 0.8,6.2 L0,6.2Z" fill="#0d2020"/></svg>
<svg class="a" style="left:440.10px;top:252.60px" width="12" height="6.5"><path d="M0,0.3 L0.8,0.3 Q1.6,2.8 11.5,3.0 L11.5,3.4 Q1.6,3.6 0.8,6.2 L0,6.2Z" fill="#0d2020"/></svg>
<svg class="a" style="left:469.70px;top:252.60px" width="12" height="6.5"><path d="M0,0.3 L0.8,0.3 Q1.6,2.8 11.5,3.0 L11.5,3.4 Q1.6,3.6 0.8,6.2 L0,6.2Z" fill="#0d2020"/></svg>
<svg class="a" style="left:499.30px;top:252.60px" width="12" height="6.5"><path d="M0,0.3 L0.8,0.3 Q1.6,2.8 11.5,3.0 L11.5,3.4 Q1.6,3.6 0.8,6.2 L0,6.2Z" fill="#0d2020"/></svg>
<svg class="a" style="left:528.90px;top:252.60px" width="12" height="6.5"><path d="M0,0.3 L0.8,0.3 Q1.6,2.8 11.5,3.0 L11.5,3.4 Q1.6,3.6 0.8,6.2 L0,6.2Z" fill="#0d2020"/></svg>
<svg class="a" style="left:558.50px;top:252.60px" width="12" height="6.5"><path d="M0,0.3 L0.8,0.3 Q1.6,2.8 11.5,3.0 L11.5,3.4 Q1.6,3.6 0.8,6.2 L0,6.2Z" fill="#0d2020"/></svg>
<svg class="a" style="left:588.10px;top:252.60px" width="12" height="6.5"><path d="M0,0.3 L0.8,0.3 Q1.6,2.8 11.5,3.0 L11.5,3.4 Q1.6,3.6 0.8,6.2 L0,6.2Z" fill="#0d2020"/></svg>
<svg class="a" style="left:617.70px;top:252.60px" width="12" height="6.5"><path d="M0,0.3 L0.8,0.3 Q1.6,2.8 11.5,3.0 L11.5,3.4 Q1.6,3.6 0.8,6.2 L0,6.2Z" fill="#0d2020"/></svg>
<div class="a" style="left:216.00px;top:263.00px;width:16.00px;height:10.00px;background:#3cbcbc;"></div>
<svg class="a" style="left:217.20px;top:265.90px" width="14" height="4"><path d="M0.3,1.2 L1.5,2 L0.3,2.8Z M2,0.8 L4.2,2 L2,3.2Z M6.2,0.5 L9.5,2 L6.2,3.5Z M9.8,0.5 L13.2,2 L9.8,3.5Z M0,1.75 h13.5 v0.5 h-13.5z" fill="#0d2020"/></svg>
<div class="a" style="left:217.60px;top:269.60px;width:1.40px;height:1.20px;background:#0d2828;"></div>
<div class="a" style="left:455.00px;top:263.00px;width:15.00px;height:10.00px;background:#3cbcbc;"></div>
<svg class="a" style="left:455.50px;top:265.90px" width="14" height="4"><path d="M0.3,1.2 L1.5,2 L0.3,2.8Z M2,0.8 L4.2,2 L2,3.2Z M6.2,0.5 L9.5,2 L6.2,3.5Z M9.8,0.5 L13.2,2 L9.8,3.5Z M0,1.75 h13.5 v0.5 h-13.5z" fill="#0d2020"/></svg>
<div class="a" style="left:455.90px;top:269.60px;width:1.40px;height:1.20px;background:#0d2828;"></div>
<div class="a" style="left:514.00px;top:263.00px;width:15.00px;height:10.00px;background:#3cbcbc;"></div>
<svg class="a" style="left:514.80px;top:265.90px" width="14" height="4"><path d="M0.3,1.2 L1.5,2 L0.3,2.8Z M2,0.8 L4.2,2 L2,3.2Z M6.2,0.5 L9.5,2 L6.2,3.5Z M9.8,0.5 L13.2,2 L9.8,3.5Z M0,1.75 h13.5 v0.5 h-13.5z" fill="#0d2020"/></svg>
<div class="a" style="left:515.20px;top:269.60px;width:1.40px;height:1.20px;background:#0d2828;"></div>
<div class="a" style="left:573.00px;top:263.00px;width:15.00px;height:10.00px;background:#3cbcbc;"></div>
<svg class="a" style="left:574.10px;top:265.90px" width="14" height="4"><path d="M0.3,1.2 L1.5,2 L0.3,2.8Z M2,0.8 L4.2,2 L2,3.2Z M6.2,0.5 L9.5,2 L6.2,3.5Z M9.8,0.5 L13.2,2 L9.8,3.5Z M0,1.75 h13.5 v0.5 h-13.5z" fill="#0d2020"/></svg>
<div class="a" style="left:574.50px;top:269.60px;width:1.40px;height:1.20px;background:#0d2828;"></div>
<div class="a" style="left:632.00px;top:263.00px;width:16.00px;height:10.00px;background:#3cbcbc;"></div>
<svg class="a" style="left:633.30px;top:265.90px" width="14" height="4"><path d="M0.3,1.2 L1.5,2 L0.3,2.8Z M2,0.8 L4.2,2 L2,3.2Z M6.2,0.5 L9.5,2 L6.2,3.5Z M9.8,0.5 L13.2,2 L9.8,3.5Z M0,1.75 h13.5 v0.5 h-13.5z" fill="#0d2020"/></svg>
<div class="a" style="left:633.70px;top:269.60px;width:1.40px;height:1.20px;background:#0d2828;"></div>
<div class="a" style="left:216.00px;top:274.00px;width:16.00px;height:11.00px;background:#3cbcbc;"></div>
<svg class="a" style="left:217.20px;top:276.90px" width="14" height="4"><path d="M0.3,1.2 L1.5,2 L0.3,2.8Z M2,0.8 L4.2,2 L2,3.2Z M6.2,0.5 L9.5,2 L6.2,3.5Z M9.8,0.5 L13.2,2 L9.8,3.5Z M0,1.75 h13.5 v0.5 h-13.5z" fill="#0d2020"/></svg>
<div class="a" style="left:217.60px;top:280.60px;width:1.40px;height:1.20px;background:#0d2828;"></div>
<div class="a" style="left:455.00px;top:274.00px;width:15.00px;height:11.00px;background:#3cbcbc;"></div>
<svg class="a" style="left:455.50px;top:276.90px" width="14" height="4"><path d="M0.3,1.2 L1.5,2 L0.3,2.8Z M2,0.8 L4.2,2 L2,3.2Z M6.2,0.5 L9.5,2 L6.2,3.5Z M9.8,0.5 L13.2,2 L9.8,3.5Z M0,1.75 h13.5 v0.5 h-13.5z" fill="#0d2020"/></svg>
<div class="a" style="left:455.90px;top:280.60px;width:1.40px;height:1.20px;background:#0d2828;"></div>
<div class="a" style="left:514.00px;top:274.00px;width:15.00px;height:11.00px;background:#3cbcbc;"></div>
<svg class="a" style="left:514.80px;top:276.90px" width="14" height="4"><path d="M0.3,1.2 L1.5,2 L0.3,2.8Z M2,0.8 L4.2,2 L2,3.2Z M6.2,0.5 L9.5,2 L6.2,3.5Z M9.8,0.5 L13.2,2 L9.8,3.5Z M0,1.75 h13.5 v0.5 h-13.5z" fill="#0d2020"/></svg>
<div class="a" style="left:515.20px;top:280.60px;width:1.40px;height:1.20px;background:#0d2828;"></div>
<div class="a" style="left:573.00px;top:274.00px;width:15.00px;height:11.00px;background:#3cbcbc;"></div>
<svg class="a" style="left:574.10px;top:276.90px" width="14" height="4"><path d="M0.3,1.2 L1.5,2 L0.3,2.8Z M2,0.8 L4.2,2 L2,3.2Z M6.2,0.5 L9.5,2 L6.2,3.5Z M9.8,0.5 L13.2,2 L9.8,3.5Z M0,1.75 h13.5 v0.5 h-13.5z" fill="#0d2020"/></svg>
<div class="a" style="left:574.50px;top:280.60px;width:1.40px;height:1.20px;background:#0d2828;"></div>
<div class="a" style="left:632.00px;top:274.00px;width:16.00px;height:11.00px;background:#3cbcbc;"></div>
<svg class="a" style="left:633.30px;top:276.90px" width="14" height="4"><path d="M0.3,1.2 L1.5,2 L0.3,2.8Z M2,0.8 L4.2,2 L2,3.2Z M6.2,0.5 L9.5,2 L6.2,3.5Z M9.8,0.5 L13.2,2 L9.8,3.5Z M0,1.75 h13.5 v0.5 h-13.5z" fill="#0d2020"/></svg>
<div class="a" style="left:633.70px;top:280.60px;width:1.40px;height:1.20px;background:#0d2828;"></div>
<div class="a" style="left:231.00px;top:286.00px;width:121.00px;height:10.00px;background:#3cbcbc;"></div>
<div class="a" style="left:231.80px;top:290.70px;width:119.00px;height:0.60px;background:#0d2828;"></div>
<svg class="a" style="left:246.00px;top:289.30px" width="4" height="3.4"><path d="M0,0 L3.2,1.7 L0,3.4Z" fill="#0d2020"/></svg>
<svg class="a" style="left:249.50px;top:289.30px" width="4" height="3.4"><path d="M0,0 L3.2,1.7 L0,3.4Z" fill="#0d2020"/></svg>
<svg class="a" style="left:253.00px;top:289.30px" width="4" height="3.4"><path d="M0,0 L3.2,1.7 L0,3.4Z" fill="#0d2020"/></svg>
<svg class="a" style="left:256.50px;top:289.30px" width="4" height="3.4"><path d="M0,0 L3.2,1.7 L0,3.4Z" fill="#0d2020"/></svg>
<svg class="a" style="left:275.00px;top:289.30px" width="4" height="3.4"><path d="M0,0 L3.2,1.7 L0,3.4Z" fill="#0d2020"/></svg>
<svg class="a" style="left:278.50px;top:289.30px" width="4" height="3.4"><path d="M0,0 L3.2,1.7 L0,3.4Z" fill="#0d2020"/></svg>
<svg class="a" style="left:282.00px;top:289.30px" width="4" height="3.4"><path d="M0,0 L3.2,1.7 L0,3.4Z" fill="#0d2020"/></svg>
<svg class="a" style="left:285.50px;top:289.30px" width="4" height="3.4"><path d="M0,0 L3.2,1.7 L0,3.4Z" fill="#0d2020"/></svg>
<svg class="a" style="left:306.00px;top:289.30px" width="4" height="3.4"><path d="M0,0 L3.2,1.7 L0,3.4Z" fill="#0d2020"/></svg>
<svg class="a" style="left:309.50px;top:289.30px" width="4" height="3.4"><path d="M0,0 L3.2,1.7 L0,3.4Z" fill="#0d2020"/></svg>
<svg class="a" style="left:313.00px;top:289.30px" width="4" height="3.4"><path d="M0,0 L3.2,1.7 L0,3.4Z" fill="#0d2020"/></svg>
<svg class="a" style="left:316.50px;top:289.30px" width="4" height="3.4"><path d="M0,0 L3.2,1.7 L0,3.4Z" fill="#0d2020"/></svg>
<svg class="a" style="left:335.00px;top:289.30px" width="4" height="3.4"><path d="M0,0 L3.2,1.7 L0,3.4Z" fill="#0d2020"/></svg>
<svg class="a" style="left:338.50px;top:289.30px" width="4" height="3.4"><path d="M0,0 L3.2,1.7 L0,3.4Z" fill="#0d2020"/></svg>
<svg class="a" style="left:342.00px;top:289.30px" width="4" height="3.4"><path d="M0,0 L3.2,1.7 L0,3.4Z" fill="#0d2020"/></svg>
<svg class="a" style="left:345.50px;top:289.30px" width="4" height="3.4"><path d="M0,0 L3.2,1.7 L0,3.4Z" fill="#0d2020"/></svg>
<div class="a" style="left:232.80px;top:293.40px;width:1.60px;height:1.20px;background:#0d2828;"></div>
<div class="a" style="left:231.00px;top:297.00px;width:121.00px;height:11.00px;background:#3cbcbc;"></div>
<div class="a" style="left:231.80px;top:301.70px;width:119.00px;height:0.60px;background:#0d2828;"></div>
<svg class="a" style="left:246.00px;top:300.30px" width="4" height="3.4"><path d="M0,0 L3.2,1.7 L0,3.4Z" fill="#0d2020"/></svg>
<svg class="a" style="left:249.50px;top:300.30px" width="4" height="3.4"><path d="M0,0 L3.2,1.7 L0,3.4Z" fill="#0d2020"/></svg>
<svg class="a" style="left:253.00px;top:300.30px" width="4" height="3.4"><path d="M0,0 L3.2,1.7 L0,3.4Z" fill="#0d2020"/></svg>
<svg class="a" style="left:256.50px;top:300.30px" width="4" height="3.4"><path d="M0,0 L3.2,1.7 L0,3.4Z" fill="#0d2020"/></svg>
<svg class="a" style="left:275.00px;top:300.30px" width="4" height="3.4"><path d="M0,0 L3.2,1.7 L0,3.4Z" fill="#0d2020"/></svg>
<svg class="a" style="left:278.50px;top:300.30px" width="4" height="3.4"><path d="M0,0 L3.2,1.7 L0,3.4Z" fill="#0d2020"/></svg>
<svg class="a" style="left:282.00px;top:300.30px" width="4" height="3.4"><path d="M0,0 L3.2,1.7 L0,3.4Z" fill="#0d2020"/></svg>
<svg class="a" style="left:285.50px;top:300.30px" width="4" height="3.4"><path d="M0,0 L3.2,1.7 L0,3.4Z" fill="#0d2020"/></svg>
<svg class="a" style="left:306.00px;top:300.30px" width="4" height="3.4"><path d="M0,0 L3.2,1.7 L0,3.4Z" fill="#0d2020"/></svg>
<svg class="a" style="left:309.50px;top:300.30px" width="4" height="3.4"><path d="M0,0 L3.2,1.7 L0,3.4Z" fill="#0d2020"/></svg>
<svg class="a" style="left:313.00px;top:300.30px" width="4" height="3.4"><path d="M0,0 L3.2,1.7 L0,3.4Z" fill="#0d2020"/></svg>
<svg class="a" style="left:316.50px;top:300.30px" width="4" height="3.4"><path d="M0,0 L3.2,1.7 L0,3.4Z" fill="#0d2020"/></svg>
<svg class="a" style="left:335.00px;top:300.30px" width="4" height="3.4"><path d="M0,0 L3.2,1.7 L0,3.4Z" fill="#0d2020"/></svg>
<svg class="a" style="left:338.50px;top:300.30px" width="4" height="3.4"><path d="M0,0 L3.2,1.7 L0,3.4Z" fill="#0d2020"/></svg>
<svg class="a" style="left:342.00px;top:300.30px" width="4" height="3.4"><path d="M0,0 L3.2,1.7 L0,3.4Z" fill="#0d2020"/></svg>
<svg class="a" style="left:345.50px;top:300.30px" width="4" height="3.4"><path d="M0,0 L3.2,1.7 L0,3.4Z" fill="#0d2020"/></svg>
<div class="a" style="left:232.80px;top:304.40px;width:1.60px;height:1.20px;background:#0d2828;"></div>
<div class="a" style="left:241.00px;top:309.00px;width:6.00px;height:10.00px;background:#3cbcbc;"></div>
<div class="a" style="left:242.00px;top:312.20px;width:4.00px;height:2.20px;background:#0d2020;border-radius:50%"></div>
<div class="a" style="left:248.00px;top:320.00px;width:5.00px;height:11.00px;background:#3cbcbc;"></div>
<svg class="a" style="left:249.5px;top:322.80px" width="3" height="4"><path d="M0,0 L2.5,2 L0,4Z" fill="#0d2020"/></svg>
<div class="a" style="left:292.00px;top:332.00px;width:59.00px;height:10.00px;background:#3cbcbc;"></div>
<svg class="a" style="left:292.00px;top:334.40px;overflow:visible" width="29.0" height="3.8"><g transform="translate(0,1.90)"><path d="M0.0,-1.17 L0.6,-0.78 L1.3,-0.85 L1.9,-1.14 L2.5,-1.13 L3.2,-1.21 L3.8,-1.23 L4.4,-0.80 L5.0,-1.33 L5.7,-0.81 L6.3,-0.84 L6.9,-1.37 L7.6,-1.38 L8.2,-1.10 L8.8,-0.77 L9.5,-0.91 L10.1,-1.11 L10.7,-1.17 L11.3,-1.11 L12.0,-1.40 L12.6,-1.10 L13.2,-1.30 L13.9,-1.37 L14.5,-0.82 L15.1,-1.38 L15.8,-1.31 L16.4,-1.38 L17.0,-0.91 L17.7,-0.82 L18.3,-1.21 L18.9,-0.78 L19.5,-0.94 L20.2,-1.38 L20.8,-0.89 L21.4,-0.80 L22.1,-1.27 L22.7,-1.37 L23.3,-0.94 L24.0,-0.98 L24.6,-0.80 L25.2,-1.06 L25.8,-0.95 L26.5,-0.98 L27.1,-1.03 L27.7,-1.40 L28.4,-1.24 L29.0,-0.94 L29.0,0.94 L28.4,1.24 L27.7,1.40 L27.1,1.03 L26.5,0.98 L25.8,0.95 L25.2,1.06 L24.6,0.80 L24.0,0.98 L23.3,0.94 L22.7,1.37 L22.1,1.27 L21.4,0.80 L20.8,0.89 L20.2,1.38 L19.5,0.94 L18.9,0.78 L18.3,1.21 L17.7,0.82 L17.0,0.91 L16.4,1.38 L15.8,1.31 L15.1,1.38 L14.5,0.82 L13.9,1.37 L13.2,1.30 L12.6,1.10 L12.0,1.40 L11.3,1.11 L10.7,1.17 L10.1,1.11 L9.5,0.91 L8.8,0.77 L8.2,1.10 L7.6,1.38 L6.9,1.37 L6.3,0.84 L5.7,0.81 L5.0,1.33 L4.4,0.80 L3.8,1.23 L3.2,1.21 L2.5,1.13 L1.9,1.14 L1.3,0.85 L0.6,0.78 L0.0,1.17Z" fill="#0d2828"/></g></svg>
<svg class="a" style="left:322.00px;top:334.40px;overflow:visible" width="28.5" height="3.8"><g transform="translate(0,1.90)"><path d="M0.0,-1.04 L0.6,-1.11 L1.3,-1.01 L1.9,-0.87 L2.5,-1.25 L3.2,-1.33 L3.8,-1.28 L4.4,-1.34 L5.1,-1.17 L5.7,-0.92 L6.3,-1.09 L7.0,-1.39 L7.6,-1.21 L8.2,-1.23 L8.9,-1.39 L9.5,-1.29 L10.1,-1.19 L10.8,-0.82 L11.4,-1.16 L12.0,-0.79 L12.7,-1.22 L13.3,-1.03 L13.9,-1.12 L14.6,-1.20 L15.2,-1.05 L15.8,-1.19 L16.5,-1.06 L17.1,-1.13 L17.7,-1.07 L18.4,-1.18 L19.0,-1.07 L19.6,-0.99 L20.3,-1.11 L20.9,-1.01 L21.5,-1.29 L22.2,-1.27 L22.8,-1.32 L23.4,-0.99 L24.1,-0.81 L24.7,-1.38 L25.3,-0.94 L26.0,-1.19 L26.6,-1.29 L27.2,-0.82 L27.9,-1.27 L28.5,-1.19 L28.5,1.19 L27.9,1.27 L27.2,0.82 L26.6,1.29 L26.0,1.19 L25.3,0.94 L24.7,1.38 L24.1,0.81 L23.4,0.99 L22.8,1.32 L22.2,1.27 L21.5,1.29 L20.9,1.01 L20.3,1.11 L19.6,0.99 L19.0,1.07 L18.4,1.18 L17.7,1.07 L17.1,1.13 L16.5,1.06 L15.8,1.19 L15.2,1.05 L14.6,1.20 L13.9,1.12 L13.3,1.03 L12.7,1.22 L12.0,0.79 L11.4,1.16 L10.8,0.82 L10.1,1.19 L9.5,1.29 L8.9,1.39 L8.2,1.23 L7.6,1.21 L7.0,1.39 L6.3,1.09 L5.7,0.92 L5.1,1.17 L4.4,1.34 L3.8,1.28 L3.2,1.33 L2.5,1.25 L1.9,0.87 L1.3,1.01 L0.6,1.11 L0.0,1.04Z" fill="#0d2828"/></g></svg>
<div class="a" style="left:350.00px;top:343.00px;width:45.00px;height:11.00px;background:#3cbcbc;"></div>
<div class="a" style="left:350.00px;top:347.20px;width:44.00px;height:0.60px;background:#0d2020;"></div>
<svg class="a" style="left:350.50px;top:344.20px" width="14" height="6"><path d="M0,3 L1,0.3 Q2.5,2.4 13.5,2.8 L13.5,3.2 Q2.5,3.6 1,5.7Z" fill="#0d2020"/></svg>
<svg class="a" style="left:365.80px;top:344.20px" width="14" height="6"><path d="M0,3 L1,0.3 Q2.5,2.4 13.5,2.8 L13.5,3.2 Q2.5,3.6 1,5.7Z" fill="#0d2020"/></svg>
<svg class="a" style="left:380.50px;top:344.20px" width="14" height="6"><path d="M0,3 L1,0.3 Q2.5,2.4 13.5,2.8 L13.5,3.2 Q2.5,3.6 1,5.7Z" fill="#0d2020"/></svg>
<div class="a" style="left:358.00px;top:355.00px;width:24.00px;height:10.00px;background:#3cbcbc;"></div>
<svg class="a" style="left:359.00px;top:357.80px;overflow:visible" width="23.0" height="2.4"><g transform="translate(0,1.20)"><path d="M0.0,-0.68 L1.0,-0.63 L2.1,-0.47 L3.1,-0.65 L4.2,-0.66 L5.2,-0.49 L6.3,-0.57 L7.3,-0.56 L8.4,-0.70 L9.4,-0.41 L10.5,-0.62 L11.5,-0.50 L12.5,-0.45 L13.6,-0.44 L14.6,-0.50 L15.7,-0.60 L16.7,-0.43 L17.8,-0.59 L18.8,-0.44 L19.9,-0.68 L20.9,-0.65 L22.0,-0.59 L23.0,-0.67 L23.0,0.67 L22.0,0.59 L20.9,0.65 L19.9,0.68 L18.8,0.44 L17.8,0.59 L16.7,0.43 L15.7,0.60 L14.6,0.50 L13.6,0.44 L12.5,0.45 L11.5,0.50 L10.5,0.62 L9.4,0.41 L8.4,0.70 L7.3,0.56 L6.3,0.57 L5.2,0.49 L4.2,0.66 L3.1,0.65 L2.1,0.47 L1.0,0.63 L0.0,0.68Z" fill="#0d2828"/></g></svg>
<div class="a" style="left:173.00px;top:366.00px;width:59.00px;height:11.00px;background:#3d93da;"></div>
<div class="a" style="left:173.00px;top:366.00px;width:59.00px;height:4.18px;background:#1c80d8;"></div>
<div class="a" style="left:173.00px;top:371.50px;width:59.00px;height:0.50px;background:rgba(255,255,255,0.12);"></div>
<div class="a" style="left:232.00px;top:366.00px;width:164.00px;height:11.00px;background:#3d93da;"></div>
<div class="a" style="left:232.00px;top:366.00px;width:164.00px;height:4.18px;background:#1c80d8;"></div>
<div class="a" style="left:232.00px;top:371.50px;width:164.00px;height:0.50px;background:rgba(255,255,255,0.12);"></div>
<div class="a" style="left:407.00px;top:366.00px;width:241.00px;height:11.00px;background:#3d93da;"></div>
<div class="a" style="left:407.00px;top:366.00px;width:241.00px;height:4.18px;background:#1c80d8;"></div>
<div class="a" style="left:407.00px;top:371.50px;width:241.00px;height:0.50px;background:rgba(255,255,255,0.12);"></div>
<div class="a" style="left:173.00px;top:389.00px;width:30.00px;height:11.00px;background:#2f84cc;"></div>
<div class="a" style="left:173.00px;top:389.00px;width:30.00px;height:11.00px;background:none;box-shadow:inset 0 0 0 0.7px #58aee8"></div>
<div class="a" style="left:173.70px;top:393.40px;width:28.60px;height:6.05px;background:rgba(20,60,110,0.18);"></div>
<div class="a" style="left:173.00px;top:392.85px;width:30.00px;height:6.60px;background:repeating-linear-gradient(90deg,rgba(120,190,240,0.12) 0 0.7px,transparent 0.7px 1.85px)"></div>
<div class="a" style="left:174.00px;top:389.90px;width:5.20px;height:3.60px;background:#8ecdf2;border-radius:0.4px"></div>
<div class="a" style="left:174.80px;top:390.60px;width:1.40px;height:2.20px;background:#1a2a3a;"></div>
<div class="a" style="left:177.00px;top:390.60px;width:1.40px;height:1.40px;background:#1a2a3a;"></div>
<div class="a" style="left:203.00px;top:389.00px;width:29.00px;height:11.00px;background:#2f84cc;"></div>
<div class="a" style="left:203.00px;top:389.00px;width:29.00px;height:11.00px;background:none;box-shadow:inset 0 0 0 0.7px #58aee8"></div>
<div class="a" style="left:203.70px;top:393.40px;width:27.60px;height:6.05px;background:rgba(20,60,110,0.18);"></div>
<div class="a" style="left:203.00px;top:392.85px;width:29.00px;height:6.60px;background:repeating-linear-gradient(90deg,rgba(120,190,240,0.12) 0 0.7px,transparent 0.7px 1.85px)"></div>
<div class="a" style="left:204.00px;top:389.90px;width:5.20px;height:3.60px;background:#8ecdf2;border-radius:0.4px"></div>
<div class="a" style="left:204.80px;top:390.60px;width:1.40px;height:2.20px;background:#1a2a3a;"></div>
<div class="a" style="left:207.00px;top:390.60px;width:1.40px;height:1.40px;background:#1a2a3a;"></div>
<div class="a" style="left:529.00px;top:389.00px;width:29.00px;height:11.00px;background:#2f84cc;"></div>
<div class="a" style="left:529.00px;top:389.00px;width:29.00px;height:11.00px;background:none;box-shadow:inset 0 0 0 0.7px #58aee8"></div>
<div class="a" style="left:529.70px;top:393.40px;width:27.60px;height:6.05px;background:rgba(20,60,110,0.18);"></div>
<div class="a" style="left:529.00px;top:392.85px;width:29.00px;height:6.60px;background:repeating-linear-gradient(90deg,rgba(120,190,240,0.12) 0 0.7px,transparent 0.7px 1.85px)"></div>
<div class="a" style="left:530.00px;top:389.90px;width:5.20px;height:3.60px;background:#8ecdf2;border-radius:0.4px"></div>
<div class="a" style="left:530.80px;top:390.60px;width:1.40px;height:2.20px;background:#1a2a3a;"></div>
<div class="a" style="left:533.00px;top:390.60px;width:1.40px;height:1.40px;background:#1a2a3a;"></div>
<div class="a" style="left:558.00px;top:389.00px;width:30.00px;height:11.00px;background:#2f84cc;"></div>
<div class="a" style="left:558.00px;top:389.00px;width:30.00px;height:11.00px;background:none;box-shadow:inset 0 0 0 0.7px #58aee8"></div>
<div class="a" style="left:558.70px;top:393.40px;width:28.60px;height:6.05px;background:rgba(20,60,110,0.18);"></div>
<div class="a" style="left:558.00px;top:392.85px;width:30.00px;height:6.60px;background:repeating-linear-gradient(90deg,rgba(120,190,240,0.12) 0 0.7px,transparent 0.7px 1.85px)"></div>
<div class="a" style="left:559.00px;top:389.90px;width:5.20px;height:3.60px;background:#8ecdf2;border-radius:0.4px"></div>
<div class="a" style="left:559.80px;top:390.60px;width:1.40px;height:2.20px;background:#1a2a3a;"></div>
<div class="a" style="left:562.00px;top:390.60px;width:1.40px;height:1.40px;background:#1a2a3a;"></div>
<div class="a" style="left:588.00px;top:389.00px;width:30.00px;height:11.00px;background:#2f84cc;"></div>
<div class="a" style="left:588.00px;top:389.00px;width:30.00px;height:11.00px;background:none;box-shadow:inset 0 0 0 0.7px #58aee8"></div>
<div class="a" style="left:588.70px;top:393.40px;width:28.60px;height:6.05px;background:rgba(20,60,110,0.18);"></div>
<div class="a" style="left:588.00px;top:392.85px;width:30.00px;height:6.60px;background:repeating-linear-gradient(90deg,rgba(120,190,240,0.12) 0 0.7px,transparent 0.7px 1.85px)"></div>
<div class="a" style="left:589.00px;top:389.90px;width:5.20px;height:3.60px;background:#8ecdf2;border-radius:0.4px"></div>
<div class="a" style="left:589.80px;top:390.60px;width:1.40px;height:2.20px;background:#1a2a3a;"></div>
<div class="a" style="left:592.00px;top:390.60px;width:1.40px;height:1.40px;background:#1a2a3a;"></div>
<div class="a" style="left:618.00px;top:389.00px;width:30.00px;height:11.00px;background:#2f84cc;"></div>
<div class="a" style="left:618.00px;top:389.00px;width:30.00px;height:11.00px;background:none;box-shadow:inset 0 0 0 0.7px #58aee8"></div>
<div class="a" style="left:618.70px;top:393.40px;width:28.60px;height:6.05px;background:rgba(20,60,110,0.18);"></div>
<div class="a" style="left:618.00px;top:392.85px;width:30.00px;height:6.60px;background:repeating-linear-gradient(90deg,rgba(120,190,240,0.12) 0 0.7px,transparent 0.7px 1.85px)"></div>
<div class="a" style="left:619.00px;top:389.90px;width:5.20px;height:3.60px;background:#8ecdf2;border-radius:0.4px"></div>
<div class="a" style="left:619.80px;top:390.60px;width:1.40px;height:2.20px;background:#1a2a3a;"></div>
<div class="a" style="left:622.00px;top:390.60px;width:1.40px;height:1.40px;background:#1a2a3a;"></div>
<div class="a" style="left:173.00px;top:401.00px;width:30.00px;height:10.00px;background:#2f84cc;"></div>
<div class="a" style="left:173.00px;top:401.00px;width:30.00px;height:10.00px;background:none;box-shadow:inset 0 0 0 0.7px #58aee8"></div>
<div class="a" style="left:173.70px;top:405.00px;width:28.60px;height:5.50px;background:rgba(20,60,110,0.18);"></div>
<div class="a" style="left:173.00px;top:404.50px;width:30.00px;height:6.00px;background:repeating-linear-gradient(90deg,rgba(120,190,240,0.12) 0 0.7px,transparent 0.7px 1.85px)"></div>
<div class="a" style="left:174.00px;top:401.90px;width:5.20px;height:3.60px;background:#8ecdf2;border-radius:0.4px"></div>
<div class="a" style="left:174.80px;top:402.60px;width:1.40px;height:2.20px;background:#1a2a3a;"></div>
<div class="a" style="left:177.00px;top:402.60px;width:1.40px;height:1.40px;background:#1a2a3a;"></div>
<div class="a" style="left:203.00px;top:401.00px;width:29.00px;height:10.00px;background:#2f84cc;"></div>
<div class="a" style="left:203.00px;top:401.00px;width:29.00px;height:10.00px;background:none;box-shadow:inset 0 0 0 0.7px #58aee8"></div>
<div class="a" style="left:203.70px;top:405.00px;width:27.60px;height:5.50px;background:rgba(20,60,110,0.18);"></div>
<div class="a" style="left:203.00px;top:404.50px;width:29.00px;height:6.00px;background:repeating-linear-gradient(90deg,rgba(120,190,240,0.12) 0 0.7px,transparent 0.7px 1.85px)"></div>
<div class="a" style="left:204.00px;top:401.90px;width:5.20px;height:3.60px;background:#8ecdf2;border-radius:0.4px"></div>
<div class="a" style="left:204.80px;top:402.60px;width:1.40px;height:2.20px;background:#1a2a3a;"></div>
<div class="a" style="left:207.00px;top:402.60px;width:1.40px;height:1.40px;background:#1a2a3a;"></div>
<div class="a" style="left:410.00px;top:401.00px;width:30.00px;height:10.00px;background:#2f84cc;"></div>
<div class="a" style="left:410.00px;top:401.00px;width:30.00px;height:10.00px;background:none;box-shadow:inset 0 0 0 0.7px #58aee8"></div>
<div class="a" style="left:410.70px;top:405.00px;width:28.60px;height:5.50px;background:rgba(20,60,110,0.18);"></div>
<div class="a" style="left:410.00px;top:404.50px;width:30.00px;height:6.00px;background:repeating-linear-gradient(90deg,rgba(120,190,240,0.12) 0 0.7px,transparent 0.7px 1.85px)"></div>
<div class="a" style="left:411.00px;top:401.90px;width:5.20px;height:3.60px;background:#8ecdf2;border-radius:0.4px"></div>
<div class="a" style="left:411.80px;top:402.60px;width:1.40px;height:2.20px;background:#1a2a3a;"></div>
<div class="a" style="left:414.00px;top:402.60px;width:1.40px;height:1.40px;background:#1a2a3a;"></div>
<div class="a" style="left:440.00px;top:401.00px;width:30.00px;height:10.00px;background:#2f84cc;"></div>
<div class="a" style="left:440.00px;top:401.00px;width:30.00px;height:10.00px;background:none;box-shadow:inset 0 0 0 0.7px #58aee8"></div>
<div class="a" style="left:440.70px;top:405.00px;width:28.60px;height:5.50px;background:rgba(20,60,110,0.18);"></div>
<div class="a" style="left:440.00px;top:404.50px;width:30.00px;height:6.00px;background:repeating-linear-gradient(90deg,rgba(120,190,240,0.12) 0 0.7px,transparent 0.7px 1.85px)"></div>
<div class="a" style="left:441.00px;top:401.90px;width:5.20px;height:3.60px;background:#8ecdf2;border-radius:0.4px"></div>
<div class="a" style="left:441.80px;top:402.60px;width:1.40px;height:2.20px;background:#1a2a3a;"></div>
<div class="a" style="left:444.00px;top:402.60px;width:1.40px;height:1.40px;background:#1a2a3a;"></div>
<div class="a" style="left:470.00px;top:401.00px;width:29.00px;height:10.00px;background:#2f84cc;"></div>
<div class="a" style="left:470.00px;top:401.00px;width:29.00px;height:10.00px;background:none;box-shadow:inset 0 0 0 0.7px #58aee8"></div>
<div class="a" style="left:470.70px;top:405.00px;width:27.60px;height:5.50px;background:rgba(20,60,110,0.18);"></div>
<div class="a" style="left:470.00px;top:404.50px;width:29.00px;height:6.00px;background:repeating-linear-gradient(90deg,rgba(120,190,240,0.12) 0 0.7px,transparent 0.7px 1.85px)"></div>
<div class="a" style="left:471.00px;top:401.90px;width:5.20px;height:3.60px;background:#8ecdf2;border-radius:0.4px"></div>
<div class="a" style="left:471.80px;top:402.60px;width:1.40px;height:2.20px;background:#1a2a3a;"></div>
<div class="a" style="left:474.00px;top:402.60px;width:1.40px;height:1.40px;background:#1a2a3a;"></div>
<div class="a" style="left:499.00px;top:401.00px;width:30.00px;height:10.00px;background:#2f84cc;"></div>
<div class="a" style="left:499.00px;top:401.00px;width:30.00px;height:10.00px;background:none;box-shadow:inset 0 0 0 0.7px #58aee8"></div>
<div class="a" style="left:499.70px;top:405.00px;width:28.60px;height:5.50px;background:rgba(20,60,110,0.18);"></div>
<div class="a" style="left:499.00px;top:404.50px;width:30.00px;height:6.00px;background:repeating-linear-gradient(90deg,rgba(120,190,240,0.12) 0 0.7px,transparent 0.7px 1.85px)"></div>
<div class="a" style="left:500.00px;top:401.90px;width:5.20px;height:3.60px;background:#8ecdf2;border-radius:0.4px"></div>
<div class="a" style="left:500.80px;top:402.60px;width:1.40px;height:2.20px;background:#1a2a3a;"></div>
<div class="a" style="left:503.00px;top:402.60px;width:1.40px;height:1.40px;background:#1a2a3a;"></div>
<div class="a" style="left:529.00px;top:401.00px;width:29.00px;height:10.00px;background:#2f84cc;"></div>
<div class="a" style="left:529.00px;top:401.00px;width:29.00px;height:10.00px;background:none;box-shadow:inset 0 0 0 0.7px #58aee8"></div>
<div class="a" style="left:529.70px;top:405.00px;width:27.60px;height:5.50px;background:rgba(20,60,110,0.18);"></div>
<div class="a" style="left:529.00px;top:404.50px;width:29.00px;height:6.00px;background:repeating-linear-gradient(90deg,rgba(120,190,240,0.12) 0 0.7px,transparent 0.7px 1.85px)"></div>
<div class="a" style="left:530.00px;top:401.90px;width:5.20px;height:3.60px;background:#8ecdf2;border-radius:0.4px"></div>
<div class="a" style="left:530.80px;top:402.60px;width:1.40px;height:2.20px;background:#1a2a3a;"></div>
<div class="a" style="left:533.00px;top:402.60px;width:1.40px;height:1.40px;background:#1a2a3a;"></div>
<div class="a" style="left:558.00px;top:401.00px;width:30.00px;height:10.00px;background:#2f84cc;"></div>
<div class="a" style="left:558.00px;top:401.00px;width:30.00px;height:10.00px;background:none;box-shadow:inset 0 0 0 0.7px #58aee8"></div>
<div class="a" style="left:558.70px;top:405.00px;width:28.60px;height:5.50px;background:rgba(20,60,110,0.18);"></div>
<div class="a" style="left:558.00px;top:404.50px;width:30.00px;height:6.00px;background:repeating-linear-gradient(90deg,rgba(120,190,240,0.12) 0 0.7px,transparent 0.7px 1.85px)"></div>
<div class="a" style="left:559.00px;top:401.90px;width:5.20px;height:3.60px;background:#8ecdf2;border-radius:0.4px"></div>
<div class="a" style="left:559.80px;top:402.60px;width:1.40px;height:2.20px;background:#1a2a3a;"></div>
<div class="a" style="left:562.00px;top:402.60px;width:1.40px;height:1.40px;background:#1a2a3a;"></div>
<div class="a" style="left:588.00px;top:401.00px;width:30.00px;height:10.00px;background:#2f84cc;"></div>
<div class="a" style="left:588.00px;top:401.00px;width:30.00px;height:10.00px;background:none;box-shadow:inset 0 0 0 0.7px #58aee8"></div>
<div class="a" style="left:588.70px;top:405.00px;width:28.60px;height:5.50px;background:rgba(20,60,110,0.18);"></div>
<div class="a" style="left:588.00px;top:404.50px;width:30.00px;height:6.00px;background:repeating-linear-gradient(90deg,rgba(120,190,240,0.12) 0 0.7px,transparent 0.7px 1.85px)"></div>
<div class="a" style="left:589.00px;top:401.90px;width:5.20px;height:3.60px;background:#8ecdf2;border-radius:0.4px"></div>
<div class="a" style="left:589.80px;top:402.60px;width:1.40px;height:2.20px;background:#1a2a3a;"></div>
<div class="a" style="left:592.00px;top:402.60px;width:1.40px;height:1.40px;background:#1a2a3a;"></div>
<div class="a" style="left:618.00px;top:401.00px;width:30.00px;height:10.00px;background:#2f84cc;"></div>
<div class="a" style="left:618.00px;top:401.00px;width:30.00px;height:10.00px;background:none;box-shadow:inset 0 0 0 0.7px #58aee8"></div>
<div class="a" style="left:618.70px;top:405.00px;width:28.60px;height:5.50px;background:rgba(20,60,110,0.18);"></div>
<div class="a" style="left:618.00px;top:404.50px;width:30.00px;height:6.00px;background:repeating-linear-gradient(90deg,rgba(120,190,240,0.12) 0 0.7px,transparent 0.7px 1.85px)"></div>
<div class="a" style="left:619.00px;top:401.90px;width:5.20px;height:3.60px;background:#8ecdf2;border-radius:0.4px"></div>
<div class="a" style="left:619.80px;top:402.60px;width:1.40px;height:2.20px;background:#1a2a3a;"></div>
<div class="a" style="left:622.00px;top:402.60px;width:1.40px;height:1.40px;background:#1a2a3a;"></div>
<div class="a" style="left:469.52px;top:19.60px;width:59.31px;height:385.90px;background:rgba(255,255,255,0.06);"></div>
<div class="a" style="left:135.00px;top:19.60px;width:1.00px;height:385.90px;background:rgba(255,255,255,0.045);"></div>
<div class="a" style="left:143.00px;top:19.60px;width:1.00px;height:385.90px;background:rgba(255,255,255,0.045);"></div>
<div class="a" style="left:150.00px;top:19.60px;width:1.00px;height:385.90px;background:rgba(255,255,255,0.045);"></div>
<div class="a" style="left:158.00px;top:19.60px;width:1.00px;height:385.90px;background:rgba(255,255,255,0.045);"></div>
<div class="a" style="left:165.00px;top:19.60px;width:1.00px;height:385.90px;background:rgba(255,255,255,0.045);"></div>
<div class="a" style="left:172.00px;top:19.60px;width:1.00px;height:385.90px;background:rgba(255,255,255,0.045);"></div>
<div class="a" style="left:180.00px;top:19.60px;width:1.00px;height:385.90px;background:rgba(255,255,255,0.045);"></div>
<div class="a" style="left:187.00px;top:19.60px;width:1.00px;height:385.90px;background:rgba(255,255,255,0.045);"></div>
<div class="a" style="left:195.00px;top:19.60px;width:1.00px;height:385.90px;background:rgba(255,255,255,0.045);"></div>
<div class="a" style="left:202.00px;top:19.60px;width:1.00px;height:385.90px;background:rgba(255,255,255,0.045);"></div>
<div class="a" style="left:210.00px;top:19.60px;width:1.00px;height:385.90px;background:rgba(255,255,255,0.045);"></div>
<div class="a" style="left:217.00px;top:19.60px;width:1.00px;height:385.90px;background:rgba(255,255,255,0.045);"></div>
<div class="a" style="left:224.00px;top:19.60px;width:1.00px;height:385.90px;background:rgba(255,255,255,0.045);"></div>
<div class="a" style="left:232.00px;top:19.60px;width:1.00px;height:385.90px;background:rgba(255,255,255,0.045);"></div>
<div class="a" style="left:239.00px;top:19.60px;width:1.00px;height:385.90px;background:rgba(255,255,255,0.045);"></div>
<div class="a" style="left:247.00px;top:19.60px;width:1.00px;height:385.90px;background:rgba(255,255,255,0.045);"></div>
<div class="a" style="left:254.00px;top:19.60px;width:1.00px;height:385.90px;background:rgba(255,255,255,0.045);"></div>
<div class="a" style="left:261.00px;top:19.60px;width:1.00px;height:385.90px;background:rgba(255,255,255,0.045);"></div>
<div class="a" style="left:269.00px;top:19.60px;width:1.00px;height:385.90px;background:rgba(255,255,255,0.045);"></div>
<div class="a" style="left:276.00px;top:19.60px;width:1.00px;height:385.90px;background:rgba(255,255,255,0.045);"></div>
<div class="a" style="left:284.00px;top:19.60px;width:1.00px;height:385.90px;background:rgba(255,255,255,0.045);"></div>
<div class="a" style="left:291.00px;top:19.60px;width:1.00px;height:385.90px;background:rgba(255,255,255,0.045);"></div>
<div class="a" style="left:298.00px;top:19.60px;width:1.00px;height:385.90px;background:rgba(255,255,255,0.045);"></div>
<div class="a" style="left:306.00px;top:19.60px;width:1.00px;height:385.90px;background:rgba(255,255,255,0.045);"></div>
<div class="a" style="left:313.00px;top:19.60px;width:1.00px;height:385.90px;background:rgba(255,255,255,0.045);"></div>
<div class="a" style="left:321.00px;top:19.60px;width:1.00px;height:385.90px;background:rgba(255,255,255,0.045);"></div>
<div class="a" style="left:328.00px;top:19.60px;width:1.00px;height:385.90px;background:rgba(255,255,255,0.045);"></div>
<div class="a" style="left:336.00px;top:19.60px;width:1.00px;height:385.90px;background:rgba(255,255,255,0.045);"></div>
<div class="a" style="left:343.00px;top:19.60px;width:1.00px;height:385.90px;background:rgba(255,255,255,0.045);"></div>
<div class="a" style="left:350.00px;top:19.60px;width:1.00px;height:385.90px;background:rgba(255,255,255,0.045);"></div>
<div class="a" style="left:358.00px;top:19.60px;width:1.00px;height:385.90px;background:rgba(255,255,255,0.045);"></div>
<div class="a" style="left:365.00px;top:19.60px;width:1.00px;height:385.90px;background:rgba(255,255,255,0.045);"></div>
<div class="a" style="left:373.00px;top:19.60px;width:1.00px;height:385.90px;background:rgba(255,255,255,0.045);"></div>
<div class="a" style="left:380.00px;top:19.60px;width:1.00px;height:385.90px;background:rgba(255,255,255,0.045);"></div>
<div class="a" style="left:387.00px;top:19.60px;width:1.00px;height:385.90px;background:rgba(255,255,255,0.045);"></div>
<div class="a" style="left:395.00px;top:19.60px;width:1.00px;height:385.90px;background:rgba(255,255,255,0.045);"></div>
<div class="a" style="left:402.00px;top:19.60px;width:1.00px;height:385.90px;background:rgba(255,255,255,0.045);"></div>
<div class="a" style="left:410.00px;top:19.60px;width:1.00px;height:385.90px;background:rgba(255,255,255,0.045);"></div>
<div class="a" style="left:417.00px;top:19.60px;width:1.00px;height:385.90px;background:rgba(255,255,255,0.045);"></div>
<div class="a" style="left:425.00px;top:19.60px;width:1.00px;height:385.90px;background:rgba(255,255,255,0.045);"></div>
<div class="a" style="left:432.00px;top:19.60px;width:1.00px;height:385.90px;background:rgba(255,255,255,0.045);"></div>
<div class="a" style="left:439.00px;top:19.60px;width:1.00px;height:385.90px;background:rgba(255,255,255,0.045);"></div>
<div class="a" style="left:447.00px;top:19.60px;width:1.00px;height:385.90px;background:rgba(255,255,255,0.045);"></div>
<div class="a" style="left:454.00px;top:19.60px;width:1.00px;height:385.90px;background:rgba(255,255,255,0.045);"></div>
<div class="a" style="left:462.00px;top:19.60px;width:1.00px;height:385.90px;background:rgba(255,255,255,0.045);"></div>
<div class="a" style="left:469.00px;top:19.60px;width:1.00px;height:385.90px;background:rgba(255,255,255,0.045);"></div>
<div class="a" style="left:476.00px;top:19.60px;width:1.00px;height:385.90px;background:rgba(255,255,255,0.045);"></div>
<div class="a" style="left:484.00px;top:19.60px;width:1.00px;height:385.90px;background:rgba(255,255,255,0.045);"></div>
<div class="a" style="left:491.00px;top:19.60px;width:1.00px;height:385.90px;background:rgba(255,255,255,0.045);"></div>
<div class="a" style="left:499.00px;top:19.60px;width:1.00px;height:385.90px;background:rgba(255,255,255,0.045);"></div>
<div class="a" style="left:506.00px;top:19.60px;width:1.00px;height:385.90px;background:rgba(255,255,255,0.045);"></div>
<div class="a" style="left:514.00px;top:19.60px;width:1.00px;height:385.90px;background:rgba(255,255,255,0.045);"></div>
<div class="a" style="left:521.00px;top:19.60px;width:1.00px;height:385.90px;background:rgba(255,255,255,0.045);"></div>
<div class="a" style="left:528.00px;top:19.60px;width:1.00px;height:385.90px;background:rgba(255,255,255,0.045);"></div>
<div class="a" style="left:536.00px;top:19.60px;width:1.00px;height:385.90px;background:rgba(255,255,255,0.045);"></div>
<div class="a" style="left:543.00px;top:19.60px;width:1.00px;height:385.90px;background:rgba(255,255,255,0.045);"></div>
<div class="a" style="left:551.00px;top:19.60px;width:1.00px;height:385.90px;background:rgba(255,255,255,0.045);"></div>
<div class="a" style="left:558.00px;top:19.60px;width:1.00px;height:385.90px;background:rgba(255,255,255,0.045);"></div>
<div class="a" style="left:565.00px;top:19.60px;width:1.00px;height:385.90px;background:rgba(255,255,255,0.045);"></div>
<div class="a" style="left:573.00px;top:19.60px;width:1.00px;height:385.90px;background:rgba(255,255,255,0.045);"></div>
<div class="a" style="left:580.00px;top:19.60px;width:1.00px;height:385.90px;background:rgba(255,255,255,0.045);"></div>
<div class="a" style="left:588.00px;top:19.60px;width:1.00px;height:385.90px;background:rgba(255,255,255,0.045);"></div>
<div class="a" style="left:595.00px;top:19.60px;width:1.00px;height:385.90px;background:rgba(255,255,255,0.045);"></div>
<div class="a" style="left:602.00px;top:19.60px;width:1.00px;height:385.90px;background:rgba(255,255,255,0.045);"></div>
<div class="a" style="left:610.00px;top:19.60px;width:1.00px;height:385.90px;background:rgba(255,255,255,0.045);"></div>
<div class="a" style="left:617.00px;top:19.60px;width:1.00px;height:385.90px;background:rgba(255,255,255,0.045);"></div>
<div class="a" style="left:625.00px;top:19.60px;width:1.00px;height:385.90px;background:rgba(255,255,255,0.045);"></div>
<div class="a" style="left:632.00px;top:19.60px;width:1.00px;height:385.90px;background:rgba(255,255,255,0.045);"></div>
<div class="a" style="left:640.00px;top:19.60px;width:1.00px;height:385.90px;background:rgba(255,255,255,0.045);"></div>
<div class="a" style="left:647.00px;top:19.60px;width:1.00px;height:385.90px;background:rgba(255,255,255,0.045);"></div>
<div class="a" style="left:654.00px;top:19.60px;width:1.00px;height:385.90px;background:rgba(255,255,255,0.045);"></div>
<div class="a" style="left:662.00px;top:19.60px;width:1.00px;height:385.90px;background:rgba(255,255,255,0.045);"></div>
<div class="a" style="left:669.00px;top:19.60px;width:1.00px;height:385.90px;background:rgba(255,255,255,0.045);"></div>
<div class="a" style="left:496.50px;top:19.60px;width:1.50px;height:385.90px;background:rgba(210,210,215,0.32);"></div>
<div class="a" style="left:677.00px;top:19.60px;width:6.00px;height:390.00px;background:#1f2023;"></div>
<svg class="a" style="left:678.20px;top:12.89px" width="3.32" height="3.32" viewBox="0 0 10 10"><path d="M1,3 L9,3 L5,8Z" fill="#bbbbbb"/></svg>
<svg class="a" style="left:678.20px;top:19.88px" width="3.13" height="3.13" viewBox="0 0 10 10"><path d="M1.5,5 L4,8 L9,2" fill="none" stroke="#bbbbbb" stroke-width="1.2"/></svg>
<div class="a" style="left:678.30px;top:43.00px;width:2.80px;height:136.00px;background:#f0f0f0;border-radius:1.4px"></div>
<div class="a" style="left:678.30px;top:179.00px;width:2.80px;height:200.00px;background:#505256;"></div>
<div class="a" style="left:678.80px;top:381.00px;width:1.80px;height:1.80px;background:#888;border-radius:50%"></div>
<div class="a" style="left:678.80px;top:386.00px;width:1.80px;height:1.80px;background:#888;border-radius:50%"></div>
<div class="a" style="left:678.80px;top:391.00px;width:1.80px;height:1.80px;background:#888;border-radius:50%"></div>
<div class="a" style="left:678.60px;top:396.50px;width:2.40px;height:2.40px;background:#eeeeee;border-radius:50%"></div>
<svg class="a" style="left:678.50px;top:401.38px" width="2.85" height="2.85" viewBox="0 0 10 10"><path d="M1,3 L9,3 L5,8Z" fill="#bbbbbb"/></svg>
<div class="a" style="left:133.00px;top:405.50px;width:544.00px;height:4.00px;background:#26282b;"></div>
<div class="a" style="left:168.00px;top:407.20px;width:478.00px;height:1.40px;background:#48494c;border-radius:0.7px"></div>
<div class="a" style="left:139.00px;top:406.60px;width:29.00px;height:2.20px;background:#f4f4f4;border-radius:1.1px"></div>
<div class="a" style="left:649.00px;top:406.80px;width:1.80px;height:1.80px;background:#999;border-radius:50%"></div>
<div class="a" style="left:654.00px;top:406.80px;width:1.80px;height:1.80px;background:#999;border-radius:50%"></div>
<div class="a" style="left:660.00px;top:406.80px;width:1.80px;height:1.80px;background:#999;border-radius:50%"></div>
<div class="a" style="left:666.00px;top:406.40px;width:2.40px;height:2.40px;background:#eeeeee;border-radius:50%"></div>
<div class="a" style="left:675.00px;top:406.80px;width:1.80px;height:1.80px;background:#999;border-radius:50%"></div>
<div class="a" style="left:253.30px;top:2.00px;width:35.40px;height:6.00px;background:#3a3c40;border-radius:1px"></div>
<div class="a t" style="left:255.00px;top:5px;font-size:3.3px;color:#d8d8d8;font-weight:bold">M</div>
<div class="a t" style="left:260.95px;top:5px;font-size:3.3px;color:#d8d8d8;font-weight:bold">S</div>
<div class="a t" style="left:266.90px;top:5px;font-size:3.3px;color:#777;font-weight:bold">L</div>
<div class="a" style="left:271.15px;top:2.00px;width:5.95px;height:6.00px;background:#2ec02e;"></div>
<div class="a t" style="left:272.85px;top:5px;font-size:3.3px;color:#d8d8d8;font-weight:bold">R</div>
<div class="a t" style="left:278.80px;top:5px;font-size:3.3px;color:#d8d8d8;font-weight:bold">W</div>
<div class="a t" style="left:284.75px;top:5px;font-size:3.3px;color:#d8d8d8;font-weight:bold">A</div>
<div class="a" style="left:291.00px;top:2.00px;width:6.00px;height:6.00px;background:#e8e8e8;border-radius:1px"></div>
<svg class="a" style="left:291px;top:2px" width="6" height="6"><path d="M1.3,3 A1.7,1.7 0 1 1 4.7,3 L4.7,4.5 L1.3,4.5Z" fill="none" stroke="#333" stroke-width="0.8"/></svg>
<div class="a" style="left:300.00px;top:2.00px;width:6.00px;height:6.00px;background:#3a3c40;border-radius:1px"></div>
<svg class="a" style="left:301.20px;top:3.00px" width="3.61" height="3.61" viewBox="0 0 10 10"><circle cx="5" cy="5" r="2.8" fill="none" stroke="#ccc" stroke-width="1.8"/><circle cx="5" cy="5" r="0.9" fill="#ccc"/></svg>
<div class="a" style="left:307.00px;top:2.00px;width:5.00px;height:6.00px;background:#111214;border-radius:1px"></div>
<svg class="a" style="left:308.30px;top:3.38px" width="2.85" height="2.85" viewBox="0 0 10 10"><path d="M1,3 L9,3 L5,8Z" fill="#eee"/></svg>
<div class="a" style="left:314.00px;top:2.00px;width:3.40px;height:6.00px;background:#f09030;"></div>
<div class="a" style="left:317.40px;top:2.00px;width:12.00px;height:6.00px;background:#dcdcdc;"></div>
<svg class="a" style="left:318.30px;top:2.99px" width="3.32" height="3.32" viewBox="0 0 10 10"><path d="M2,1.5 L8.5,5 L2,8.5Z" fill="#222"/></svg>
<svg class="a" style="left:321.62px;top:2.99px" width="3.32" height="3.32" viewBox="0 0 10 10"><path d="M2,1.5 L8.5,5 L2,8.5Z" fill="#222"/></svg>
<div class="a" style="left:330.50px;top:2.00px;width:67.00px;height:6.00px;background:#2e3034;border-radius:1px"></div>
<svg class="a" style="left:331.30px;top:2.3px" width="5.5" height="5.5"><path d="M1,4.5 L4,1" stroke="#eee" stroke-width="0.9"/></svg>
<svg class="a" style="left:337.35px;top:2.3px" width="5.5" height="5.5"><path d="M2.5,1 L4,2.5 L2.5,4 L1,2.5Z" fill="#eee"/></svg>
<svg class="a" style="left:343.40px;top:2.3px" width="5.5" height="5.5"><path d="M1,1 L2.5,3 L4,1 M2.5,3 V4.6" stroke="#eee" stroke-width="0.8" fill="none"/></svg>
<svg class="a" style="left:349.45px;top:2.3px" width="5.5" height="5.5"><path d="M1,4.5 L3.5,1.5 M3,1 L4.2,1" stroke="#eee" stroke-width="0.9" fill="none"/></svg>
<svg class="a" style="left:355.50px;top:2.3px" width="5.5" height="5.5"><path d="M1,1 L4,4.5 M4,1 L1,4.5" stroke="#eee" stroke-width="0.8"/></svg>
<svg class="a" style="left:361.55px;top:2.3px" width="5.5" height="5.5"><circle cx="2.2" cy="2.2" r="1.3" stroke="#eee" stroke-width="0.7" fill="none"/><path d="M3.2,3.2 L4.5,4.6" stroke="#eee" stroke-width="0.8"/></svg>
<svg class="a" style="left:367.60px;top:2.3px" width="5.5" height="5.5"><rect x="1.5" y="1" width="2.2" height="3.6" rx="0.6" fill="#eee"/></svg>
<svg class="a" style="left:373.65px;top:2.3px" width="5.5" height="5.5"><path d="M1,1 V4.5 M1.8,1.2 L4,2.75 L1.8,4.3Z" stroke="#eee" stroke-width="0.5" fill="#eee"/></svg>
<svg class="a" style="left:379.70px;top:2.3px" width="5.5" height="5.5"><path d="M1,4.6 L4.2,0.9" stroke="#eee" stroke-width="0.8"/></svg>
<svg class="a" style="left:385.75px;top:2.3px" width="5.5" height="5.5"><path d="M1,2 h1 l1.5,-1 v3.6 l-1.5,-1 h-1z" fill="#eee"/><path d="M4.3,1.8 v2" stroke="#eee" stroke-width="0.5"/></svg>
<svg class="a" style="left:391.80px;top:2.3px" width="5.5" height="5.5"><path d="M1,4.5 h3.5 v-3.5z" fill="none" stroke="#eee" stroke-width="0.7"/></svg>
<div class="a" style="left:400.00px;top:2.00px;width:8.00px;height:6.00px;background:#2a2c30;border-radius:1px"></div>
<svg class="a" style="left:400.5px;top:2.3px" width="8" height="5.5"><path d="M1,4 Q1,1 2.7,1 Q4.4,1 4.4,4Z M2.2,4.4 h1" fill="#eee" stroke="#eee" stroke-width="0.4"/><path d="M5.6,2.6 L7.2,2.6 L6.4,3.6Z" fill="#eee"/></svg>
<div class="a" style="left:410.50px;top:2.00px;width:6.50px;height:6.00px;background:#e6e6e6;border-radius:1px"></div>
<svg class="a" style="left:410.5px;top:2px" width="6.5" height="6"><circle cx="3.25" cy="3" r="1.7" fill="none" stroke="#333" stroke-width="0.9"/><circle cx="3.25" cy="3" r="0.6" fill="#333"/></svg>
<div class="a" style="left:421.00px;top:2.00px;width:37.00px;height:6.00px;background:#2e3034;border-radius:1px"></div>
<div class="a" style="left:422.00px;top:3.00px;width:1.00px;height:4.00px;background:#aaa;"></div>
<div class="a" style="left:424.00px;top:3.00px;width:1.00px;height:4.00px;background:#aaa;"></div>
<div class="a t" style="left:427.00px;top:5px;font-size:3.6px;color:#cfcfcf;">Adapt to Zoom</div>
<svg class="a" style="left:453.00px;top:3.38px" width="2.85" height="2.85" viewBox="0 0 10 10"><path d="M1,3 L9,3 L5,8Z" fill="#ddd"/></svg>
<div class="a" style="left:460.00px;top:2.00px;width:10.00px;height:6.00px;background:#34363a;border-radius:1px"></div>
<svg class="a" style="left:461.00px;top:2.89px" width="3.32" height="3.32" viewBox="0 0 10 10"><circle cx="4" cy="4" r="2.6" fill="none" stroke="#ccc" stroke-width="1.1"/><path d="M6,6 L8.8,8.8" stroke="#ccc" stroke-width="1.2"/></svg>
<svg class="a" style="left:464.32px;top:2.89px" width="3.32" height="3.32" viewBox="0 0 10 10"><circle cx="5" cy="5" r="3.6" fill="none" stroke="#ccc" stroke-width="1.1"/></svg>
<div class="a" style="left:473.00px;top:2.00px;width:6.00px;height:6.00px;background:#34363a;border-radius:1px"></div>
<svg class="a" style="left:474.00px;top:2.80px" width="3.80" height="3.80" viewBox="0 0 10 10"><rect x="1.5" y="1.5" width="7" height="7" fill="none" stroke="#ccc" stroke-width="1"/><path d="M1.5,4 H8.5 M1.5,6 H8.5" stroke="#ccc" stroke-width="0.8"/></svg>
<div class="a" style="left:704.70px;top:2.00px;width:5.80px;height:6.00px;background:#36383c;border-radius:1px"></div>
<svg class="a" style="left:705.80px;top:2.99px" width="3.42" height="3.42" viewBox="0 0 10 10"><path d="M1,8 L9,8 L5,2Z" fill="#ddd"/></svg>
<div class="a" style="left:712.00px;top:2.00px;width:6.00px;height:6.00px;background:#36383c;border-radius:1px"></div>
<svg class="a" style="left:713.00px;top:2.80px" width="3.80" height="3.80" viewBox="0 0 10 10"><rect x="1.5" y="1.5" width="7" height="7" fill="none" stroke="#ccc" stroke-width="1"/><path d="M1.5,4 H8.5 M1.5,6 H8.5" stroke="#ccc" stroke-width="0.8"/></svg>
<div class="a" style="left:719.50px;top:2.00px;width:6.00px;height:6.00px;background:#e4e4e4;border-radius:1px"></div>
<div class="a" style="left:721.00px;top:3.20px;width:1.00px;height:3.60px;background:#444;"></div>
<div class="a" style="left:726.00px;top:2.00px;width:5.50px;height:6.00px;background:#3c3e42;border-radius:1px"></div>
<div class="a" style="left:727.50px;top:3.20px;width:1.00px;height:3.60px;background:#ddd;"></div>
<div class="a" style="left:732.00px;top:2.00px;width:6.00px;height:6.00px;background:#3c3e42;border-radius:1px"></div>
<div class="a" style="left:733.20px;top:4.70px;width:3.60px;height:0.80px;background:#ddd;"></div>
<div class="a" style="left:738.50px;top:2.00px;width:6.00px;height:6.00px;background:#e4e4e4;border-radius:1px"></div>
<div class="a" style="left:741.00px;top:3.20px;width:1.00px;height:3.60px;background:#444;"></div>
<svg class="a" style="left:745.50px;top:2.99px" width="3.42" height="3.42" viewBox="0 0 10 10"><path d="M2,1.5 L8.5,5 L2,8.5Z" fill="#ccc"/></svg>
<div class="a" style="left:684.00px;top:10.50px;width:66.00px;height:399.50px;background:#232528;"></div>
<div class="a" style="left:685.00px;top:11.00px;width:20.00px;height:5.50px;background:#26282b;"></div>
<div class="a t" style="left:688.00px;top:13px;font-size:3.6px;color:#c8c8c8;font-weight:bold">Media</div>
<div class="a" style="left:705.00px;top:11.00px;width:14.00px;height:5.50px;background:#26282b;"></div>
<div class="a t" style="left:708.50px;top:13px;font-size:3.6px;color:#c8c8c8;font-weight:bold">CR</div>
<div class="a" style="left:719.00px;top:11.00px;width:19.00px;height:5.50px;background:#2c2e32;"></div>
<div class="a t" style="left:724.00px;top:13px;font-size:3.6px;color:#c8c8c8;font-weight:bold">Meter</div>
<div class="a" style="left:684.50px;top:16.50px;width:65.00px;height:393.00px;background:#25272a;border:0.5px solid #2e3034"></div>
<div class="a" style="left:686.50px;top:19.70px;width:18.50px;height:5.80px;background:#1c1d20;border-radius:1.5px"></div>
<div class="a t" style="left:687.50px;top:22px;font-size:3.5px;color:#bbb;">Digital ...</div>
<svg class="a" style="left:702.00px;top:21.07px" width="2.66" height="2.66" viewBox="0 0 10 10"><path d="M1,3 L9,3 L5,8Z" fill="#eee"/></svg>
<div class="a" style="left:707.00px;top:19.70px;width:19.00px;height:5.80px;background:#202124;border-radius:1.5px"></div>
<div class="a t" style="left:708.50px;top:22px;font-size:3.5px;color:#555;">-18 d...</div>
<svg class="a" style="left:722.50px;top:21.07px" width="2.66" height="2.66" viewBox="0 0 10 10"><path d="M1,3 L9,3 L5,8Z" fill="#555"/></svg>
<div class="a" style="left:728.00px;top:19.70px;width:11.00px;height:5.80px;background:#35373b;border-radius:1.5px"></div>
<svg class="a" style="left:729.00px;top:20.58px" width="3.13" height="3.13" viewBox="0 0 10 10"><circle cx="5" cy="5" r="2.8" fill="none" stroke="#ddd" stroke-width="1.8"/><circle cx="5" cy="5" r="0.9" fill="#ddd"/></svg>
<svg class="a" style="left:733.12px;top:20.58px" width="3.13" height="3.13" viewBox="0 0 10 10"><rect x="2" y="2" width="6" height="6" fill="#ddd"/></svg>
<svg class="a" style="left:736.26px;top:20.58px" width="3.13" height="3.13" viewBox="0 0 10 10"><rect x="2" y="2" width="6" height="6" fill="#ddd"/></svg>
<div class="a" style="left:740.00px;top:19.70px;width:7.00px;height:5.80px;background:#e6e6e6;border-radius:1.5px"></div>
<svg class="a" style="left:740.80px;top:20.78px" width="3.04" height="3.04" viewBox="0 0 10 10"><path d="M8,1.5 L1.5,5 L8,8.5Z" fill="#222"/></svg>
<svg class="a" style="left:743.84px;top:20.78px" width="3.04" height="3.04" viewBox="0 0 10 10"><path d="M2,1.5 L8.5,5 L2,8.5Z" fill="#222"/></svg>
<div class="a" style="left:701.30px;top:31.20px;width:29.90px;height:295.10px;background:#1a1a1c;"></div>
<div class="a" style="left:701.50px;top:31.20px;width:14.50px;height:295.10px;background:linear-gradient(180deg,#36f59c 0%,#36f59c 15.5%,#3ee6b4 15.6%,#38e2c8 40%,#2edcea 75%,#22d8f8 100%);"></div>
<div class="a" style="left:701.50px;top:31.20px;width:14.50px;height:5.20px;background:#020304;"></div>
<div class="a" style="left:716.80px;top:31.20px;width:14.20px;height:295.10px;background:linear-gradient(180deg,#36f59c 0%,#36f59c 15.5%,#3ee6b4 15.6%,#38e2c8 40%,#2edcea 75%,#22d8f8 100%);"></div>
<div class="a" style="left:716.80px;top:31.20px;width:14.20px;height:0.40px;background:#020304;"></div>
<div class="a" style="left:701.50px;top:31.20px;width:14.50px;height:0.90px;background:#10305a;"></div>
<div class="a" style="left:701.50px;top:36.40px;width:14.50px;height:41.60px;background:#36f59c;"></div>
<div class="a" style="left:716.80px;top:31.60px;width:14.20px;height:44.70px;background:#36f59c;"></div>
<div class="a t" style="left:695.90px;top:31px;font-size:3.6px;color:#c4c4c4;">0</div>
<div class="a t" style="left:734.60px;top:31px;font-size:3.6px;color:#c4c4c4;">0</div>
<div class="a" style="left:698.80px;top:31.00px;width:2.20px;height:0.60px;background:#9a9a9a;"></div>
<div class="a" style="left:731.20px;top:31.00px;width:2.20px;height:0.60px;background:#9a9a9a;"></div>
<div class="a t" style="left:695.90px;top:67px;font-size:3.6px;color:#c4c4c4;">5</div>
<div class="a t" style="left:734.60px;top:67px;font-size:3.6px;color:#c4c4c4;">5</div>
<div class="a" style="left:698.80px;top:66.90px;width:2.20px;height:0.60px;background:#9a9a9a;"></div>
<div class="a" style="left:731.20px;top:66.90px;width:2.20px;height:0.60px;background:#9a9a9a;"></div>
<div class="a" style="left:701.50px;top:66.90px;width:29.50px;height:0.60px;background:rgba(0,50,45,0.22);"></div>
<div class="a t" style="left:694.00px;top:103px;font-size:3.6px;color:#c4c4c4;">10</div>
<div class="a t" style="left:734.60px;top:103px;font-size:3.6px;color:#c4c4c4;">10</div>
<div class="a" style="left:698.80px;top:103.10px;width:2.20px;height:0.60px;background:#9a9a9a;"></div>
<div class="a" style="left:731.20px;top:103.10px;width:2.20px;height:0.60px;background:#9a9a9a;"></div>
<div class="a" style="left:701.50px;top:103.10px;width:29.50px;height:0.60px;background:rgba(0,50,45,0.22);"></div>
<div class="a t" style="left:694.00px;top:140px;font-size:3.6px;color:#c4c4c4;">15</div>
<div class="a t" style="left:734.60px;top:140px;font-size:3.6px;color:#c4c4c4;">15</div>
<div class="a" style="left:698.80px;top:139.50px;width:2.20px;height:0.60px;background:#9a9a9a;"></div>
<div class="a" style="left:731.20px;top:139.50px;width:2.20px;height:0.60px;background:#9a9a9a;"></div>
<div class="a" style="left:701.50px;top:139.50px;width:29.50px;height:0.60px;background:rgba(0,50,45,0.22);"></div>
<div class="a t" style="left:694.00px;top:176px;font-size:3.6px;color:#c4c4c4;">20</div>
<div class="a t" style="left:734.60px;top:176px;font-size:3.6px;color:#c4c4c4;">20</div>
<div class="a" style="left:698.80px;top:175.50px;width:2.20px;height:0.60px;background:#9a9a9a;"></div>
<div class="a" style="left:731.20px;top:175.50px;width:2.20px;height:0.60px;background:#9a9a9a;"></div>
<div class="a" style="left:701.50px;top:175.50px;width:29.50px;height:0.60px;background:rgba(0,50,45,0.22);"></div>
<div class="a t" style="left:694.00px;top:206px;font-size:3.6px;color:#c4c4c4;">25</div>
<div class="a t" style="left:734.60px;top:206px;font-size:3.6px;color:#c4c4c4;">25</div>
<div class="a" style="left:698.80px;top:205.90px;width:2.20px;height:0.60px;background:#9a9a9a;"></div>
<div class="a" style="left:731.20px;top:205.90px;width:2.20px;height:0.60px;background:#9a9a9a;"></div>
<div class="a" style="left:701.50px;top:205.90px;width:29.50px;height:0.60px;background:rgba(0,50,45,0.22);"></div>
<div class="a t" style="left:694.00px;top:233px;font-size:3.6px;color:#c4c4c4;">30</div>
<div class="a t" style="left:734.60px;top:233px;font-size:3.6px;color:#c4c4c4;">30</div>
<div class="a" style="left:698.80px;top:232.70px;width:2.20px;height:0.60px;background:#9a9a9a;"></div>
<div class="a" style="left:731.20px;top:232.70px;width:2.20px;height:0.60px;background:#9a9a9a;"></div>
<div class="a" style="left:701.50px;top:232.70px;width:29.50px;height:0.60px;background:rgba(0,50,45,0.22);"></div>
<div class="a t" style="left:694.00px;top:276px;font-size:3.6px;color:#c4c4c4;">40</div>
<div class="a t" style="left:734.60px;top:276px;font-size:3.6px;color:#c4c4c4;">40</div>
<div class="a" style="left:698.80px;top:276.00px;width:2.20px;height:0.60px;background:#9a9a9a;"></div>
<div class="a" style="left:731.20px;top:276.00px;width:2.20px;height:0.60px;background:#9a9a9a;"></div>
<div class="a" style="left:701.50px;top:276.00px;width:29.50px;height:0.60px;background:rgba(0,50,45,0.22);"></div>
<div class="a t" style="left:694.00px;top:305px;font-size:3.6px;color:#c4c4c4;">50</div>
<div class="a t" style="left:734.60px;top:305px;font-size:3.6px;color:#c4c4c4;">50</div>
<div class="a" style="left:698.80px;top:305.00px;width:2.20px;height:0.60px;background:#9a9a9a;"></div>
<div class="a" style="left:731.20px;top:305.00px;width:2.20px;height:0.60px;background:#9a9a9a;"></div>
<div class="a" style="left:701.50px;top:305.00px;width:29.50px;height:0.60px;background:rgba(0,50,45,0.22);"></div>
<div class="a t" style="left:694.00px;top:317px;font-size:3.6px;color:#c4c4c4;">60</div>
<div class="a t" style="left:734.60px;top:317px;font-size:3.6px;color:#c4c4c4;">60</div>
<div class="a" style="left:698.80px;top:316.50px;width:2.20px;height:0.60px;background:#9a9a9a;"></div>
<div class="a" style="left:731.20px;top:316.50px;width:2.20px;height:0.60px;background:#9a9a9a;"></div>
<div class="a" style="left:701.50px;top:316.50px;width:29.50px;height:0.60px;background:rgba(0,50,45,0.22);"></div>
<div class="a" style="left:699.80px;top:38.18px;width:1.00px;height:0.50px;background:#5a5a5a;"></div>
<div class="a" style="left:731.40px;top:38.18px;width:1.00px;height:0.50px;background:#5a5a5a;"></div>
<div class="a" style="left:699.80px;top:45.36px;width:1.00px;height:0.50px;background:#5a5a5a;"></div>
<div class="a" style="left:731.40px;top:45.36px;width:1.00px;height:0.50px;background:#5a5a5a;"></div>
<div class="a" style="left:699.80px;top:52.54px;width:1.00px;height:0.50px;background:#5a5a5a;"></div>
<div class="a" style="left:731.40px;top:52.54px;width:1.00px;height:0.50px;background:#5a5a5a;"></div>
<div class="a" style="left:699.80px;top:59.72px;width:1.00px;height:0.50px;background:#5a5a5a;"></div>
<div class="a" style="left:731.40px;top:59.72px;width:1.00px;height:0.50px;background:#5a5a5a;"></div>
<div class="a" style="left:699.80px;top:74.14px;width:1.00px;height:0.50px;background:#5a5a5a;"></div>
<div class="a" style="left:731.40px;top:74.14px;width:1.00px;height:0.50px;background:#5a5a5a;"></div>
<div class="a" style="left:699.80px;top:81.38px;width:1.00px;height:0.50px;background:#5a5a5a;"></div>
<div class="a" style="left:731.40px;top:81.38px;width:1.00px;height:0.50px;background:#5a5a5a;"></div>
<div class="a" style="left:699.80px;top:88.62px;width:1.00px;height:0.50px;background:#5a5a5a;"></div>
<div class="a" style="left:731.40px;top:88.62px;width:1.00px;height:0.50px;background:#5a5a5a;"></div>
<div class="a" style="left:699.80px;top:95.86px;width:1.00px;height:0.50px;background:#5a5a5a;"></div>
<div class="a" style="left:731.40px;top:95.86px;width:1.00px;height:0.50px;background:#5a5a5a;"></div>
<div class="a" style="left:699.80px;top:110.38px;width:1.00px;height:0.50px;background:#5a5a5a;"></div>
<div class="a" style="left:731.40px;top:110.38px;width:1.00px;height:0.50px;background:#5a5a5a;"></div>
<div class="a" style="left:699.80px;top:117.66px;width:1.00px;height:0.50px;background:#5a5a5a;"></div>
<div class="a" style="left:731.40px;top:117.66px;width:1.00px;height:0.50px;background:#5a5a5a;"></div>
<div class="a" style="left:699.80px;top:124.94px;width:1.00px;height:0.50px;background:#5a5a5a;"></div>
<div class="a" style="left:731.40px;top:124.94px;width:1.00px;height:0.50px;background:#5a5a5a;"></div>
<div class="a" style="left:699.80px;top:132.22px;width:1.00px;height:0.50px;background:#5a5a5a;"></div>
<div class="a" style="left:731.40px;top:132.22px;width:1.00px;height:0.50px;background:#5a5a5a;"></div>
<div class="a" style="left:699.80px;top:146.70px;width:1.00px;height:0.50px;background:#5a5a5a;"></div>
<div class="a" style="left:731.40px;top:146.70px;width:1.00px;height:0.50px;background:#5a5a5a;"></div>
<div class="a" style="left:699.80px;top:153.90px;width:1.00px;height:0.50px;background:#5a5a5a;"></div>
<div class="a" style="left:731.40px;top:153.90px;width:1.00px;height:0.50px;background:#5a5a5a;"></div>
<div class="a" style="left:699.80px;top:161.10px;width:1.00px;height:0.50px;background:#5a5a5a;"></div>
<div class="a" style="left:731.40px;top:161.10px;width:1.00px;height:0.50px;background:#5a5a5a;"></div>
<div class="a" style="left:699.80px;top:168.30px;width:1.00px;height:0.50px;background:#5a5a5a;"></div>
<div class="a" style="left:731.40px;top:168.30px;width:1.00px;height:0.50px;background:#5a5a5a;"></div>
<div class="a" style="left:699.80px;top:183.10px;width:1.00px;height:0.50px;background:#5a5a5a;"></div>
<div class="a" style="left:731.40px;top:183.10px;width:1.00px;height:0.50px;background:#5a5a5a;"></div>
<div class="a" style="left:699.80px;top:190.70px;width:1.00px;height:0.50px;background:#5a5a5a;"></div>
<div class="a" style="left:731.40px;top:190.70px;width:1.00px;height:0.50px;background:#5a5a5a;"></div>
<div class="a" style="left:699.80px;top:198.30px;width:1.00px;height:0.50px;background:#5a5a5a;"></div>
<div class="a" style="left:731.40px;top:198.30px;width:1.00px;height:0.50px;background:#5a5a5a;"></div>
<div class="a" style="left:699.80px;top:212.60px;width:1.00px;height:0.50px;background:#5a5a5a;"></div>
<div class="a" style="left:731.40px;top:212.60px;width:1.00px;height:0.50px;background:#5a5a5a;"></div>
<div class="a" style="left:699.80px;top:219.30px;width:1.00px;height:0.50px;background:#5a5a5a;"></div>
<div class="a" style="left:731.40px;top:219.30px;width:1.00px;height:0.50px;background:#5a5a5a;"></div>
<div class="a" style="left:699.80px;top:226.00px;width:1.00px;height:0.50px;background:#5a5a5a;"></div>
<div class="a" style="left:731.40px;top:226.00px;width:1.00px;height:0.50px;background:#5a5a5a;"></div>
<div class="a" style="left:699.80px;top:254.35px;width:1.00px;height:0.50px;background:#5a5a5a;"></div>
<div class="a" style="left:731.40px;top:254.35px;width:1.00px;height:0.50px;background:#5a5a5a;"></div>
<div class="a" style="left:699.80px;top:290.50px;width:1.00px;height:0.50px;background:#5a5a5a;"></div>
<div class="a" style="left:731.40px;top:290.50px;width:1.00px;height:0.50px;background:#5a5a5a;"></div>
<div class="a" style="left:699.80px;top:310.75px;width:1.00px;height:0.50px;background:#5a5a5a;"></div>
<div class="a" style="left:731.40px;top:310.75px;width:1.00px;height:0.50px;background:#5a5a5a;"></div>
<div class="a" style="left:716.00px;top:32.10px;width:0.80px;height:294.20px;background:#1f7a6a;"></div>
<div class="a" style="left:686.00px;top:333.00px;width:60.00px;height:14.00px;background:#1c1d20;border-radius:1.5px"></div>
<div class="a t" style="left:698.50px;top:337px;font-size:3.2px;color:#bdbdbd;">RMS Max.</div>
<div class="a t" style="left:719.20px;top:337px;font-size:3.2px;color:#bdbdbd;">Peak Max.</div>
<div class="a t" style="left:702.80px;top:343px;font-size:3.6px;color:#e0e0e0;">-5.2</div>
<div class="a t" style="left:724.00px;top:343px;font-size:3.6px;color:#e0e0e0;">-0.1</div>
<div class="a" style="left:686.40px;top:350.30px;width:59.60px;height:4.60px;background:#55575b;border-radius:1px"></div>
<svg class="a" style="left:687.60px;top:350.98px" width="2.85" height="2.85" viewBox="0 0 10 10"><path d="M2,3.5 L8,3.5 L5,7.5Z" fill="#e8e8e8"/></svg>
<div class="a t" style="left:690.60px;top:352px;font-size:3.4px;color:#e8e8e8;font-weight:bold">Main</div>
<div class="a t" style="left:731.00px;top:352px;font-size:3.0px;color:#cccccc;">stereo</div>
<div class="a" style="left:741.50px;top:351.50px;width:3.50px;height:2.20px;background:#3a9af0;border-radius:1px"></div>
<div class="a" style="left:686.40px;top:357.40px;width:59.60px;height:5.80px;background:#f0962a;border-radius:1px"></div>
<div class="a" style="left:686.40px;top:357.40px;width:40.00px;height:0.60px;background:#ffb860;"></div>
<div class="a t" style="left:713.00px;top:360px;font-size:3.5px;color:#6a3a00;">Mix</div>
<div class="a" style="left:686.40px;top:366.00px;width:6.10px;height:6.00px;background:#e0e0e0;border-radius:1px"></div>
<svg class="a" style="left:687.80px;top:366.90px" width="3.80" height="3.80" viewBox="0 0 10 10"><path d="M7,2.2 Q4.2,0.8 4.2,4 V8.5 M2.5,5.2 H6.2 M2.5,8.5 H8" fill="none" stroke="#222" stroke-width="1.1"/></svg>
<div class="a" style="left:693.20px;top:366.00px;width:6.10px;height:6.00px;background:#e0e0e0;border-radius:1px"></div>
<div class="a t" style="left:694.80px;top:368px;font-size:4px;color:#222;">L</div>
<div class="a" style="left:686.40px;top:374.00px;width:13.60px;height:7.00px;background:#3a3c40;border-radius:1px"></div>
<svg class="a" style="left:690.80px;top:375.20px" width="3.80" height="3.80" viewBox="0 0 10 10"><circle cx="5" cy="5" r="3.6" fill="none" stroke="#ccc" stroke-width="1.1"/><circle cx="5" cy="5" r="1.5" fill="#ccc"/></svg>
<div class="a" style="left:686.40px;top:383.00px;width:13.60px;height:7.00px;background:#3a3c40;border-radius:1px"></div>
<div class="a t" style="left:689.50px;top:386px;font-size:3.5px;color:#aaa;">Dim</div>
<svg class="a" style="left:708.5px;top:365px" width="18" height="18"><circle cx="9" cy="9" r="6.6" fill="#303236"/><path d="M3.6,13.6 A7.2,7.2 0 1 1 14.4,13.6" fill="none" stroke="#e83030" stroke-width="1.5"/><circle cx="9" cy="9" r="5.3" fill="#2e3034" stroke="#222" stroke-width="0.5"/><rect x="9.5" y="6.5" width="3" height="1.6" fill="#eee" transform="rotate(-35 11 7.3)"/></svg>
<div class="a" style="left:711.00px;top:384.80px;width:12.80px;height:4.00px;background:#161719;border-radius:1px"></div>
<div class="a t" style="left:712.80px;top:387px;font-size:3.0px;color:#cfcfcf;">0.00 dB</div>
<div class="a" style="left:733.80px;top:367.30px;width:11.90px;height:21.50px;background:#101112;"></div>
<div class="a" style="left:734.40px;top:369.00px;width:5.20px;height:19.80px;background:linear-gradient(#36f59c,#2edcea 60%,#22d8f8);"></div>
<div class="a" style="left:740.20px;top:369.00px;width:5.20px;height:19.80px;background:linear-gradient(#36f59c,#2edcea 60%,#22d8f8);"></div>
<div class="a" style="left:739.60px;top:369.00px;width:0.60px;height:19.80px;background:#101112;"></div>
<div class="a" style="left:686.40px;top:392.00px;width:23.10px;height:4.60px;background:linear-gradient(#f2f2f2,#cfcfcf);border-radius:1px"></div>
<svg class="a" style="left:696.50px;top:392.78px" width="3.13" height="3.13" viewBox="0 0 10 10"><circle cx="5" cy="5" r="3.6" fill="none" stroke="#555" stroke-width="1.1"/><circle cx="5" cy="5" r="1.5" fill="#555"/></svg>
<div class="a" style="left:711.00px;top:392.00px;width:35.00px;height:4.60px;background:#3a3c40;border-radius:1px"></div>
<div class="a t" style="left:713.00px;top:394px;font-size:3.3px;color:#ccc;">|</div>
<div class="a t" style="left:729.00px;top:394px;font-size:3.2px;color:#cccccc;">Stereo</div>
<svg class="a" style="left:688.00px;top:398.88px" width="2.85" height="2.85" viewBox="0 0 10 10"><path d="M2,3.5 L8,3.5 L5,7.5Z" fill="#ddd"/></svg>
<div class="a t" style="left:691.50px;top:400px;font-size:3.5px;color:#dddddd;font-weight:bold">Levels</div>
<div class="a" style="left:706.00px;top:400.50px;width:40.00px;height:0.40px;background:#3a3c40;"></div>
<div class="a" style="left:684.50px;top:404.50px;width:65.00px;height:6.00px;background:#1f2023;"></div>
<div class="a" style="left:685.50px;top:405.50px;width:19.00px;height:5.50px;background:#2a2c30;"></div>
<div class="a t" style="left:688.00px;top:408px;font-size:3.5px;color:#dddddd;font-weight:bold">Monitor</div>
<div class="a t" style="left:709.00px;top:408px;font-size:3.5px;color:#dddddd;font-weight:bold">Loudness</div>
<div class="a" style="left:0.00px;top:410.00px;width:750.00px;height:12.00px;background:#1c1d20;"></div>
<div class="a" style="left:0.00px;top:410.30px;width:750.00px;height:0.60px;background:#2c2e32;"></div>
<div class="a" style="left:1.50px;top:413.50px;width:5.50px;height:6.00px;background:#3c3e42;border-radius:0.8px"></div>
<div class="a" style="left:2.70px;top:415.20px;width:3.00px;height:2.60px;background:#bbb;"></div>
<div class="a" style="left:9.00px;top:413.50px;width:10.00px;height:6.50px;background:#2a2c30;border-radius:3px"></div>
<div class="a" style="left:10.60px;top:415.20px;width:3.20px;height:3.20px;background:#eee;border-radius:50%"></div>
<svg class="a" style="left:15.20px;top:415.56px" width="2.47" height="2.47" viewBox="0 0 10 10"><path d="M1,3 L9,3 L5,8Z" fill="#ddd"/></svg>
<div class="a" style="left:20.30px;top:414.00px;width:0.50px;height:5.00px;background:#555;"></div>
<div class="a" style="left:22.00px;top:413.50px;width:11.00px;height:6.50px;background:#2a2c30;border-radius:3px"></div>
<svg class="a" style="left:23.20px;top:414.99px" width="3.23" height="3.23" viewBox="0 0 10 10"><path d="M1,8 L9,8 L5,2Z" fill="#ddd"/></svg>
<svg class="a" style="left:28.80px;top:415.56px" width="2.47" height="2.47" viewBox="0 0 10 10"><path d="M1,3 L9,3 L5,8Z" fill="#ddd"/></svg>
<div class="a" style="left:34.30px;top:414.00px;width:0.50px;height:5.00px;background:#555;"></div>
<div class="a" style="left:36.00px;top:413.50px;width:11.00px;height:6.50px;background:#2a2c30;border-radius:3px"></div>
<div class="a" style="left:37.50px;top:415.00px;width:3.40px;height:3.40px;background:#ddd;border-radius:50%"></div>
<svg class="a" style="left:42.60px;top:415.56px" width="2.47" height="2.47" viewBox="0 0 10 10"><path d="M1,3 L9,3 L5,8Z" fill="#ddd"/></svg>
<div class="a" style="left:49.50px;top:413.30px;width:9.50px;height:6.70px;background:#3a3c40;border-radius:1px"></div>
<div class="a t" style="left:51.60px;top:416px;font-size:3.3px;color:#cccccc;font-weight:bold">AQ</div>
<div class="a" style="left:311.00px;top:412.80px;width:51.00px;height:7.80px;background:#3e4044;border-radius:2px"></div>
<div class="a" style="left:311.60px;top:413.20px;width:12.40px;height:7.00px;background:#9d7ff0;border-radius:1.5px"></div>
<svg class="a" style="left:314.50px;top:414.21px" width="4.18" height="4.18" viewBox="0 0 10 10"><path d="M7.8,3 A3.4,3.4 0 1 0 8.4,6" fill="none" stroke="#222" stroke-width="1.1"/><path d="M6,3.3 L8.6,3.5 L8.2,0.9Z" fill="#222"/></svg>
<div class="a" style="left:324.40px;top:413.20px;width:12.00px;height:7.00px;background:#505256;"></div>
<div class="a" style="left:328.40px;top:414.80px;width:3.60px;height:3.60px;background:none;border:0.6px solid #e8e8e8;border-radius:0.5px"></div>
<div class="a" style="left:336.60px;top:413.20px;width:12.40px;height:7.00px;background:#34c934;"></div>
<svg class="a" style="left:340.8px;top:414.8px" width="5" height="4.5"><path d="M0.5,0.3 L4.3,2.2 L0.5,4.1Z" fill="none" stroke="#0a3a0a" stroke-width="0.8"/></svg>
<div class="a" style="left:349.30px;top:413.20px;width:12.20px;height:7.00px;background:#505256;"></div>
<div class="a" style="left:353.30px;top:414.90px;width:3.60px;height:3.60px;background:none;border:0.6px solid #ddd;border-radius:50%"></div>
<div class="a" style="left:364.00px;top:413.20px;width:9.00px;height:7.00px;background:#2e3034;border-radius:2px"></div>
<div class="a" style="left:366.80px;top:415.00px;width:3.40px;height:3.40px;background:#555;border-radius:50%"></div>
<div class="a" style="left:375.00px;top:413.20px;width:2.50px;height:7.00px;background:#26282b;"></div>
<svg class="a" style="left:375.30px;top:414.20px" width="3.80" height="3.80" viewBox="0 0 10 10"><path d="M6.2,1 V7.2" stroke="#ddd" stroke-width="1"/><ellipse cx="4.6" cy="7.6" rx="1.9" ry="1.4" fill="#ddd"/></svg>
<div class="a" style="left:378.50px;top:413.20px;width:36.00px;height:7.00px;background:#161719;"></div>
<div class="a t" style="left:388.30px;top:415px;font-size:3.9px;color:#dcdcdc;">50.  3.  3.107</div>
<div class="a" style="left:412.30px;top:414.20px;width:1.30px;height:5.00px;background:#999;"></div>
<div class="a" style="left:416.00px;top:413.20px;width:5.50px;height:7.00px;background:#e6e6e6;border-radius:0.8px"></div>
<svg class="a" style="left:416.80px;top:414.20px" width="3.80" height="3.80" viewBox="0 0 10 10"><path d="M6.2,1 V7.2" stroke="#222" stroke-width="1"/><ellipse cx="4.6" cy="7.6" rx="1.9" ry="1.4" fill="#222"/></svg>
<div class="a" style="left:422.00px;top:413.20px;width:18.00px;height:7.00px;background:#161719;"></div>
<div class="a t" style="left:423.00px;top:416px;font-size:3.7px;color:#dcdcdc;">170.000</div>
<div class="a" style="left:438.50px;top:414.20px;width:1.30px;height:5.00px;background:#999;"></div>
<div class="a" style="left:443.00px;top:413.20px;width:11.00px;height:7.00px;background:#3a3c40;border-radius:1px"></div>
<div class="a t" style="left:445.50px;top:416px;font-size:3.5px;color:#cccccc;">Tap</div>
<div class="a" style="left:455.00px;top:413.50px;width:5.00px;height:6.00px;background:#111;border-radius:1px"></div>
<svg class="a" style="left:456.00px;top:414.77px" width="2.66" height="2.66" viewBox="0 0 10 10"><path d="M1,3 L9,3 L5,8Z" fill="#eee"/></svg>
<div class="a" style="left:461.00px;top:414.00px;width:0.50px;height:5.00px;background:#555;"></div>
<div class="a" style="left:712.00px;top:412.50px;width:10.50px;height:7.00px;background:#3a3c40;border-radius:1.5px"></div>
<svg class="a" style="left:713.00px;top:413.40px" width="3.80" height="3.80" viewBox="0 0 10 10"><path d="M7,2.2 Q4.2,0.8 4.2,4 V8.5 M2.5,5.2 H6.2 M2.5,8.5 H8" fill="none" stroke="#ddd" stroke-width="1.1"/></svg>
<div class="a" style="left:718.50px;top:414.50px;width:3.00px;height:3.00px;background:#eee;border-radius:50%"></div>
<div class="a" style="left:725.00px;top:412.80px;width:8.00px;height:6.50px;background:#161719;"></div>
<div class="a" style="left:733.30px;top:412.80px;width:6.00px;height:6.50px;background:#161719;"></div>
<div class="a" style="left:739.50px;top:412.80px;width:7.00px;height:6.50px;background:#161719;"></div>
<div class="a" style="left:741.00px;top:413.50px;width:1.60px;height:5.50px;background:#2be0b0;"></div>
<div class="a" style="left:743.00px;top:413.50px;width:1.60px;height:5.50px;background:#2be0b0;"></div>
<div class="a" style="left:747.30px;top:413.50px;width:0.60px;height:5.00px;background:#777;"></div>
</div></body></html>
